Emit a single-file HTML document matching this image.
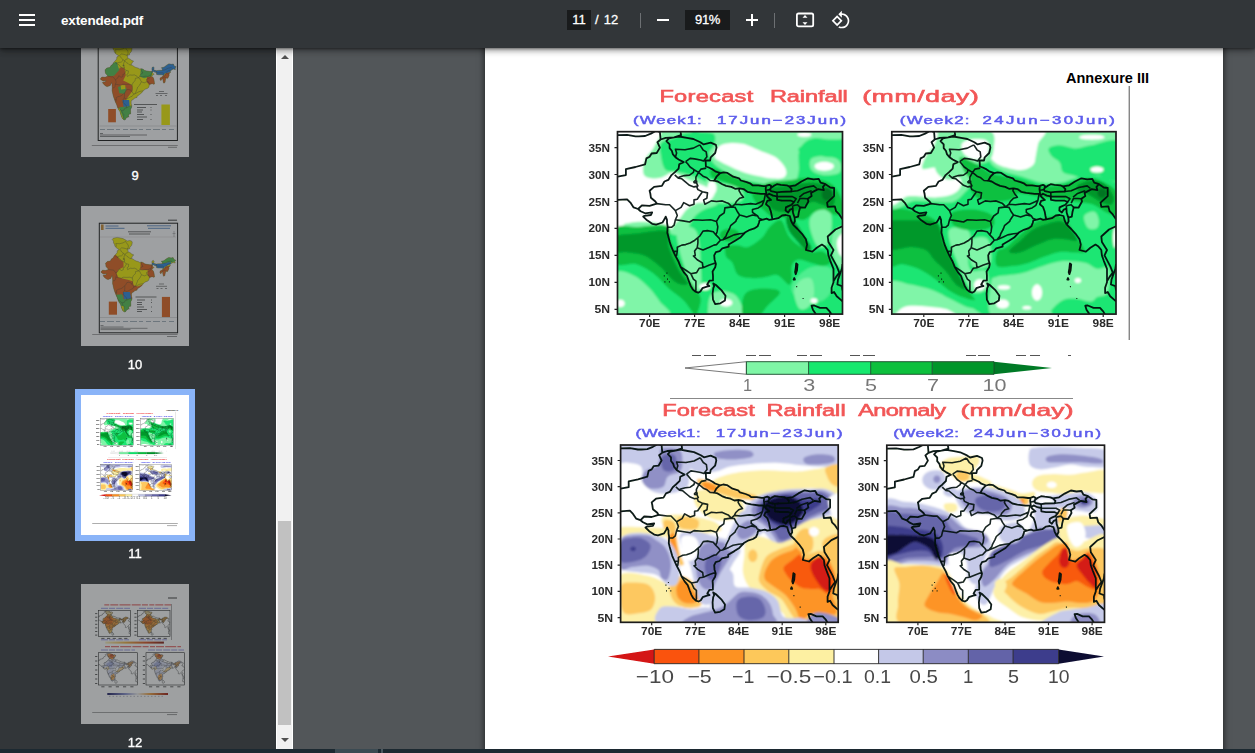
<!DOCTYPE html>
<html><head><meta charset="utf-8">
<style>
*{margin:0;padding:0;box-sizing:border-box}
html,body{width:1255px;height:753px;overflow:hidden;background:#525659;font-family:"Liberation Sans",sans-serif;}
#main{position:absolute;left:293px;top:48px;width:962px;height:701px;background:#525659;overflow:hidden}
#page{position:absolute;left:192px;top:-20px;width:738px;height:740px;background:#fff;box-shadow:0 0 6px 1px rgba(0,0,0,.55)}
#pg{position:absolute;left:0;top:0;width:1255px;height:753px}
#side{position:absolute;left:0;top:48px;width:276px;height:701px;background:#323639;overflow:hidden}
#sb{position:absolute;left:276px;top:48px;width:17px;height:701px;background:#f1f1f1;border-left:1px solid #fff;border-right:1px solid #fff}
#sbthumb{position:absolute;left:278px;top:521px;width:13px;height:204px;background:#c1c1c1}
.arr{position:absolute;left:281px;width:0;height:0;border-left:4px solid transparent;border-right:4px solid transparent}
#tb{position:absolute;left:0;top:0;width:1255px;height:48px;background:#323639;box-shadow:0 -2px 8px rgba(0,0,0,.09),0 4px 8px rgba(0,0,0,.06),0 1px 2px rgba(0,0,0,.3),0 2px 6px rgba(0,0,0,.15),0 1px 7px rgba(0,0,0,.35);color:#fff}
#bot{position:absolute;left:0;top:749px;width:1255px;height:4px;background:#1c2931}
.th{position:absolute;left:81px;width:108px;height:140px;background:#9d9fa0;overflow:hidden}
.lbl{position:absolute;left:75px;width:120px;text-align:center;color:#fff;font-size:13px;line-height:14px;-webkit-text-stroke:.35px #fff}
.inp{position:absolute;top:10px;height:20px;background:#191b1c;color:#fff;font-size:13px;line-height:20px;text-align:center;-webkit-text-stroke:.3px #fff}
.sep{position:absolute;top:13px;width:1px;height:15px;background:#6d7073}
.ax{font-family:"Liberation Sans",sans-serif;font-size:10px;fill:#2a2a2a;font-weight:bold}
.tt{font-family:"Liberation Sans",sans-serif;fill:#f25656;stroke:#f25656;stroke-width:.6px;font-size:16.3px}
.st{font-family:"Liberation Sans",sans-serif;fill:#5c5cec;stroke:#5c5cec;stroke-width:.5px;font-size:11.6px}
.cb{font-family:"Liberation Sans",sans-serif;}
</style></head><body>
<div id="main"><div id="page"></div>
</div>
<svg id="pg" viewBox="0 0 1255 753">
<defs>
<filter id="bl" x="-5%" y="-5%" width="110%" height="110%"><feGaussianBlur stdDeviation="1.1"/></filter>
<filter id="bl2" x="-5%" y="-5%" width="110%" height="110%"><feGaussianBlur stdDeviation="0.5"/></filter>
<filter id="bl3" x="-5%" y="-20%" width="110%" height="140%"><feGaussianBlur stdDeviation="0.6"/></filter>
</defs>
<g id="content">
<!-- annexure -->
<text x="1066" y="83" font-family="Liberation Sans" font-weight="bold" font-size="14.5" fill="#000">Annexure III</text>
<rect x="1128.7" y="86" width="1" height="254" fill="#555"/>
<g filter="url(#bl3)">
<text class="tt" transform="translate(659.4 101.8) scale(1.45 1)" textLength="64.7" lengthAdjust="spacing">Forecast</text>
<text class="tt" transform="translate(769.9 101.8) scale(1.45 1)" textLength="53.7" lengthAdjust="spacing">Rainfall</text>
<text class="tt" transform="translate(862.2 101.8) scale(1.62 1)" textLength="72.0" lengthAdjust="spacing">(mm/day)</text>
<text class="tt" transform="translate(662.2 415.6) scale(1.45 1)" textLength="63.8" lengthAdjust="spacing">Forecast</text>
<text class="tt" transform="translate(766.4 415.6) scale(1.45 1)" textLength="54.7" lengthAdjust="spacing">Rainfall</text>
<text class="tt" transform="translate(858.2 415.6) scale(1.45 1)" textLength="60.6" lengthAdjust="spacing">Anomaly</text>
<text class="tt" transform="translate(960.5 415.6) scale(1.62 1)" textLength="69.8" lengthAdjust="spacing">(mm/day)</text>
<text class="st" transform="translate(633.0 123.5) scale(1.45 1)" textLength="47.4" lengthAdjust="spacing">(Week1:</text>
<text class="st" transform="translate(717.0 123.5) scale(1.45 1)" textLength="89.0" lengthAdjust="spacing">17Jun−23Jun)</text>
<text class="st" transform="translate(899.8 123.5) scale(1.45 1)" textLength="48.1" lengthAdjust="spacing">(Week2:</text>
<text class="st" transform="translate(982.6 123.5) scale(1.45 1)" textLength="91.3" lengthAdjust="spacing">24Jun−30Jun)</text>
<text class="st" transform="translate(635.6 436.6) scale(1.45 1)" textLength="44.8" lengthAdjust="spacing">(Week1:</text>
<text class="st" transform="translate(715.7 436.6) scale(1.45 1)" textLength="87.5" lengthAdjust="spacing">17Jun−23Jun)</text>
<text class="st" transform="translate(893.3 436.6) scale(1.45 1)" textLength="45.3" lengthAdjust="spacing">(Week2:</text>
<text class="st" transform="translate(973.4 436.6) scale(1.45 1)" textLength="88.0" lengthAdjust="spacing">24Jun−30Jun)</text>
</g>
<clipPath id="cm1"><rect x="617.5" y="131.7" width="225.0" height="182.4"/></clipPath>
<g clip-path="url(#cm1)">
<g filter="url(#bl)">
<rect x="614.5" y="128.7" width="231.0" height="188.4" fill="#1ee673"/>
<path d="M615.1 129.3C627.0 112.1 675.0 126.9 686.5 129.3C698.0 131.6 686.9 139.3 684.0 143.3C681.0 147.3 671.8 149.3 668.7 153.5C665.5 157.8 663.6 165.8 664.8 168.8C666.1 171.8 671.4 170.1 676.3 171.4C681.2 172.6 688.2 174.1 694.2 176.5C700.1 178.8 707.3 182.4 712.0 185.4C716.7 188.4 721.4 191.1 722.2 194.3C723.1 197.5 720.1 202.0 717.1 204.5C714.1 207.1 708.2 207.5 704.4 209.6C700.5 211.7 697.1 213.9 694.2 217.3C691.2 220.7 689.5 227.0 686.5 230.0C683.5 233.0 680.6 235.1 676.3 235.1C672.1 235.1 667.0 231.1 661.0 230.0C655.1 229.0 648.3 228.3 640.6 228.7C633.0 229.2 619.4 249.1 615.1 232.6C610.9 216.0 603.2 146.5 615.1 129.3Z" fill="#80f5a8"/>
<path d="M706.9 129.3C729.7 126.1 821.7 127.8 844.6 129.3C867.6 130.8 847.2 136.5 844.6 138.2C842.1 139.9 834.4 139.5 829.3 139.5C824.2 139.5 818.3 137.6 814.0 138.2C809.8 138.8 806.4 140.8 803.8 143.3C801.3 145.9 799.6 148.8 798.7 153.5C797.9 158.2 799.6 166.5 798.7 171.4C797.9 176.2 797.0 180.5 793.6 182.8C790.2 185.2 784.3 185.4 778.3 185.4C772.4 185.4 764.7 184.1 757.9 182.8C751.1 181.6 743.5 179.9 737.5 177.7C731.6 175.6 726.5 172.8 722.2 170.1C718.0 167.3 714.4 164.8 712.0 161.2C709.7 157.5 709.0 153.7 708.2 148.4C707.3 143.1 684.2 132.5 706.9 129.3Z" fill="#80f5a8"/>
<path d="M706.9 179.0C708.8 177.5 714.1 181.3 719.7 182.8C725.2 184.3 736.2 185.2 740.1 187.9C743.9 190.7 744.3 196.9 742.6 199.4C740.9 202.0 734.5 202.8 729.9 203.2C725.2 203.7 718.2 203.9 714.6 202.0C711.0 200.1 709.5 195.6 708.2 191.8C706.9 187.9 705.0 180.5 706.9 179.0Z" fill="#80f5a8"/>
<path d="M676.8 228.7C678.1 225.1 683.4 226.0 686.5 226.2C689.6 226.4 693.3 227.3 695.4 230.0C697.6 232.8 698.4 236.8 699.3 242.8C700.2 248.7 700.5 258.2 700.8 265.7C701.1 273.2 701.9 283.4 700.8 287.7C699.7 291.9 696.1 292.3 694.2 291.2C692.2 290.1 690.8 285.3 689.1 281.0C687.4 276.8 685.7 271.3 684.0 265.7C682.3 260.2 680.1 254.0 678.9 247.9C677.7 241.7 675.5 232.4 676.8 228.7Z" fill="#80f5a8"/>
<path d="M673.8 216.0C675.4 214.0 683.5 213.6 686.5 214.2C689.5 214.8 691.6 217.8 691.6 219.8C691.6 221.8 689.0 225.1 686.5 226.2C684.0 227.3 678.9 227.9 676.8 226.2C674.7 224.5 672.1 218.0 673.8 216.0Z" fill="#80f5a8"/>
<path d="M811.5 216.0C813.5 213.3 818.5 208.0 821.7 207.6C824.9 207.1 829.0 209.7 830.6 213.4C832.2 217.2 832.0 224.7 831.4 230.0C830.7 235.3 829.0 242.6 826.8 245.3C824.5 248.1 820.3 248.3 817.9 246.6C815.4 244.9 813.4 238.9 812.0 235.1C810.6 231.3 809.5 226.8 809.4 223.6C809.4 220.5 809.4 218.7 811.5 216.0Z" fill="#80f5a8"/>
<path d="M833.2 232.6C835.3 229.4 842.7 223.2 844.6 228.7C846.6 234.3 846.1 260.0 844.6 265.7C843.2 271.5 837.8 266.2 835.7 263.2C833.6 260.2 832.3 253.0 831.9 247.9C831.5 242.8 831.0 235.8 833.2 232.6Z" fill="#80f5a8"/>
<path d="M615.1 274.4C618.2 267.5 627.8 273.2 633.5 275.4C639.1 277.6 644.6 283.3 649.0 287.7C653.4 292.0 656.8 297.1 660.0 301.7C663.1 306.3 675.4 313.0 667.9 315.5C660.4 318.0 623.9 323.6 615.1 316.7C606.3 309.9 612.0 281.3 615.1 274.4Z" fill="#80f5a8"/>
<path d="M793.4 281.5C796.3 277.1 804.4 269.4 810.7 267.3C817.0 265.1 827.5 265.4 831.1 268.8C834.8 272.2 834.0 282.4 832.7 287.7C831.3 292.9 827.4 297.8 823.2 300.2C819.1 302.5 812.6 303.0 807.7 301.9C802.7 300.9 795.8 297.4 793.4 294.0C791.0 290.6 790.5 286.0 793.4 281.5Z" fill="#50ee90"/>
<path d="M794.1 291.2C794.5 286.4 798.4 281.8 801.3 279.8C804.2 277.7 809.4 276.7 811.5 279.0C813.6 281.3 814.5 289.2 814.0 293.8C813.6 298.4 811.4 304.1 808.9 306.5C806.5 309.0 801.7 311.1 799.2 308.6C796.8 306.0 793.8 296.0 794.1 291.2Z" fill="#80f5a8"/>
<path d="M712.0 293.8C714.8 291.2 720.5 290.6 724.8 291.2C729.0 291.9 734.5 293.1 737.5 297.6C740.5 302.1 746.9 314.6 742.6 318.0C738.4 321.4 717.8 319.9 712.0 318.0C706.3 316.1 708.2 310.6 708.2 306.5C708.2 302.5 709.3 296.3 712.0 293.8Z" fill="#80f5a8"/>
<path d="M811.5 158.6C814.0 156.3 822.1 155.6 826.8 156.1C831.5 156.5 837.4 158.4 839.5 161.2C841.7 163.9 842.1 170.3 839.5 172.6C837.0 175.0 828.9 175.6 824.2 175.2C819.6 174.8 813.6 172.8 811.5 170.1C809.4 167.3 808.9 160.9 811.5 158.6Z" fill="#80f5a8"/>
<path d="M615.1 129.3C622.3 113.1 651.9 126.5 658.5 129.3C665.0 132.0 656.8 141.0 654.6 145.9C652.5 150.7 647.6 154.1 645.7 158.6C643.8 163.1 642.7 169.4 643.2 172.6C643.6 175.8 645.3 176.9 648.3 177.7C651.2 178.6 657.2 178.6 661.0 177.7C664.8 176.9 668.4 173.3 671.2 172.6C674.0 172.0 675.0 172.8 677.6 173.9C680.1 175.0 683.3 177.5 686.5 179.0C689.7 180.5 693.1 181.3 696.7 182.8C700.3 184.3 705.2 186.2 708.2 187.9C711.2 189.6 714.6 190.7 714.6 193.0C714.6 195.4 711.2 200.3 708.2 202.0C705.2 203.7 700.3 202.0 696.7 203.2C693.1 204.5 689.5 206.9 686.5 209.6C683.5 212.4 681.4 217.1 678.9 219.8C676.3 222.6 674.2 225.6 671.2 226.2C668.2 226.8 664.8 224.4 661.0 223.6C657.2 222.9 652.5 222.2 648.3 221.9C644.0 221.6 639.3 221.6 635.5 221.9C631.7 222.2 628.7 222.9 625.3 223.6C621.9 224.4 616.8 241.9 615.1 226.2C613.4 210.5 607.9 145.4 615.1 129.3Z" fill="#ffffff"/>
<path d="M643.2 166.3C643.8 163.9 645.7 160.9 648.3 159.9C650.8 158.8 656.1 158.8 658.5 159.9C660.8 160.9 662.1 163.9 662.3 166.3C662.5 168.6 661.6 172.1 659.7 173.9C657.8 175.7 653.4 177.0 650.8 177.0C648.3 177.0 645.7 175.7 644.4 173.9C643.2 172.1 642.5 168.6 643.2 166.3Z" fill="#80f5a8"/>
<path d="M714.6 157.3C713.9 155.4 714.1 151.9 715.8 149.7C717.5 147.4 720.3 144.8 724.8 143.8C729.2 142.8 736.5 142.5 742.6 143.8C748.8 145.1 756.4 149.3 761.8 151.5C767.1 153.6 770.9 154.3 774.5 156.6C778.1 158.8 781.4 162.3 783.4 165.0C785.4 167.7 786.5 170.5 786.5 172.6C786.5 174.8 785.6 176.8 783.4 177.7C781.2 178.7 777.5 178.8 773.2 178.5C769.0 178.2 763.0 177.1 757.9 175.9C752.8 174.8 747.5 173.6 742.6 171.9C737.7 170.2 732.4 167.5 728.6 165.7C724.8 164.0 722.0 162.6 719.7 161.2C717.3 159.8 715.2 159.2 714.6 157.3Z" fill="#ffffff"/>
<path d="M833.9 166.3C833.9 167.2 833.2 168.2 832.1 169.0C831.0 169.7 829.0 170.3 827.2 170.6C825.4 170.9 823.1 170.9 821.2 170.6C819.4 170.3 817.5 169.7 816.4 169.0C815.3 168.2 814.5 167.2 814.5 166.3C814.5 165.4 815.3 164.3 816.4 163.6C817.5 162.8 819.4 162.2 821.2 161.9C823.1 161.6 825.4 161.6 827.2 161.9C829.0 162.2 831.0 162.8 832.1 163.6C833.2 164.3 833.9 165.4 833.9 166.3Z" fill="#ffffff"/>
<path d="M811.5 134.6C811.5 135.1 810.9 135.6 810.1 136.0C809.3 136.3 807.9 136.7 806.6 136.8C805.2 137.0 803.5 137.0 802.1 136.8C800.8 136.7 799.4 136.3 798.6 136.0C797.7 135.6 797.2 135.1 797.2 134.6C797.2 134.2 797.7 133.6 798.6 133.3C799.4 132.9 800.8 132.6 802.1 132.4C803.5 132.3 805.2 132.3 806.6 132.4C807.9 132.6 809.3 132.9 810.1 133.3C810.9 133.6 811.5 134.2 811.5 134.6Z" fill="#ffffff"/>
<path d="M838.3 237.7C839.5 235.8 843.6 230.9 844.6 233.8C845.7 236.8 845.5 252.1 844.6 255.5C843.8 258.9 840.8 255.9 839.5 254.2C838.3 252.5 837.2 248.1 837.0 245.3C836.8 242.6 837.0 239.6 838.3 237.7Z" fill="#ffffff"/>
<path d="M624.8 303.5C624.8 304.2 624.4 305.1 623.9 305.7C623.4 306.3 622.5 306.9 621.6 307.1C620.8 307.3 619.6 307.3 618.8 307.1C617.9 306.9 617.0 306.3 616.5 305.7C616.0 305.1 615.6 304.2 615.6 303.5C615.6 302.7 616.0 301.8 616.5 301.2C617.0 300.6 617.9 300.1 618.8 299.8C619.6 299.6 620.8 299.6 621.6 299.8C622.5 300.1 623.4 300.6 623.9 301.2C624.4 301.8 624.8 302.7 624.8 303.5Z" fill="#ffffff"/>
<path d="M732.4 302.7C732.4 303.5 731.9 304.4 731.2 305.0C730.5 305.6 729.2 306.1 728.0 306.3C726.8 306.6 725.3 306.6 724.1 306.3C722.9 306.1 721.6 305.6 720.9 305.0C720.2 304.4 719.7 303.5 719.7 302.7C719.7 302.0 720.2 301.1 720.9 300.5C721.6 299.9 722.9 299.3 724.1 299.1C725.3 298.8 726.8 298.8 728.0 299.1C729.2 299.3 730.5 299.9 731.2 300.5C731.9 301.1 732.4 302.0 732.4 302.7Z" fill="#ffffff"/>
<path d="M817.6 300.9C817.6 301.5 817.3 302.1 816.9 302.6C816.5 303.0 815.8 303.4 815.1 303.6C814.5 303.8 813.6 303.8 812.9 303.6C812.3 303.4 811.6 303.0 811.1 302.6C810.7 302.1 810.5 301.5 810.5 300.9C810.5 300.4 810.7 299.7 811.1 299.3C811.6 298.8 812.3 298.4 812.9 298.3C813.6 298.1 814.5 298.1 815.1 298.3C815.8 298.4 816.5 298.8 816.9 299.3C817.3 299.7 817.6 300.4 817.6 300.9Z" fill="#ffffff"/>
<path d="M673.5 221.1C673.5 222.7 673.3 224.6 673.1 225.9C672.8 227.2 672.3 228.4 671.9 228.9C671.5 229.3 670.9 229.3 670.5 228.9C670.1 228.4 669.6 227.2 669.4 225.9C669.1 224.6 668.9 222.7 668.9 221.1C668.9 219.5 669.1 217.6 669.4 216.3C669.6 215.0 670.1 213.8 670.5 213.3C670.9 212.8 671.5 212.8 671.9 213.3C672.3 213.8 672.8 215.0 673.1 216.3C673.3 217.6 673.5 219.5 673.5 221.1Z" fill="#ffffff"/>
<path d="M710.5 286.6C710.5 287.3 710.1 288.2 709.4 288.7C708.8 289.3 707.7 289.8 706.6 290.0C705.6 290.3 704.2 290.3 703.1 290.0C702.1 289.8 701.0 289.3 700.3 288.7C699.7 288.2 699.3 287.3 699.3 286.6C699.3 285.9 699.7 285.1 700.3 284.5C701.0 284.0 702.1 283.5 703.1 283.2C704.2 283.0 705.6 283.0 706.6 283.2C707.7 283.5 708.8 284.0 709.4 284.5C710.1 285.1 710.5 285.9 710.5 286.6Z" fill="#ffffff"/>
<path d="M716.6 187.9C716.6 189.3 716.3 191.0 715.7 192.1C715.2 193.3 714.3 194.3 713.4 194.7C712.6 195.2 711.5 195.2 710.6 194.7C709.7 194.3 708.8 193.3 708.3 192.1C707.8 191.0 707.4 189.3 707.4 187.9C707.4 186.5 707.8 184.9 708.3 183.7C708.8 182.6 709.7 181.6 710.6 181.1C711.5 180.7 712.6 180.7 713.4 181.1C714.3 181.6 715.2 182.6 715.7 183.7C716.3 184.9 716.6 186.5 716.6 187.9Z" fill="#ffffff"/>
<path d="M661.0 143.3C663.1 140.3 669.5 139.9 673.8 138.2C678.0 136.5 680.1 134.0 686.5 133.1C692.9 132.3 707.3 131.4 712.0 133.1C716.7 134.8 715.4 139.9 714.6 143.3C713.7 146.7 710.3 151.4 706.9 153.5C703.5 155.6 698.0 153.9 694.2 156.1C690.3 158.2 687.4 163.7 684.0 166.3C680.6 168.8 677.0 170.9 673.8 171.4C670.6 171.8 667.0 171.4 664.8 168.8C662.7 166.3 661.6 160.3 661.0 156.1C660.4 151.8 658.9 146.3 661.0 143.3Z" fill="#1ee673"/>
<path d="M798.7 148.4C800.4 146.3 806.4 144.6 814.0 143.3C821.7 142.0 839.5 138.8 844.6 140.8C849.7 142.7 847.2 152.0 844.6 154.8C842.1 157.5 834.4 157.3 829.3 157.3C824.2 157.3 818.3 155.0 814.0 154.8C809.8 154.6 806.4 157.1 803.8 156.1C801.3 155.0 797.0 150.5 798.7 148.4Z" fill="#1ee673"/>
<path d="M615.1 229.0C618.7 223.0 628.0 227.5 636.5 227.0C645.1 226.4 660.8 223.9 666.4 225.9C672.0 228.0 668.1 233.6 670.2 239.2C672.3 244.8 675.8 253.1 678.9 259.6C681.9 266.1 685.1 272.6 688.3 278.2C691.5 283.8 696.2 289.6 698.2 293.3C700.3 296.9 700.9 296.9 700.8 300.2C700.7 303.4 698.5 310.3 697.5 312.7C696.4 315.0 696.8 316.5 694.4 314.4C692.1 312.4 687.9 304.6 683.5 300.2C679.0 295.7 672.9 292.1 667.9 287.7C662.9 283.2 658.8 277.5 653.6 273.6C648.4 269.7 642.9 266.0 636.5 264.2C630.1 262.4 618.7 268.5 615.1 262.7C611.5 256.8 611.5 235.0 615.1 229.0Z" fill="#08c040"/>
<path d="M726.0 247.1C727.9 245.3 733.4 245.3 737.0 245.3C740.7 245.3 743.8 248.4 748.0 247.1C752.1 245.8 758.4 241.1 762.0 237.7C765.7 234.3 766.8 229.6 769.9 226.7C773.1 223.8 777.7 218.8 780.9 220.3C784.0 221.9 785.9 232.0 788.8 236.1C791.7 240.3 794.6 242.7 798.2 245.3C801.9 247.9 806.6 250.6 810.7 251.7C814.9 252.8 819.8 250.1 823.2 251.7C826.6 253.3 831.1 258.8 831.1 261.1C831.1 263.5 826.6 265.5 823.2 265.7C819.8 266.0 814.9 263.7 810.7 262.7C806.6 261.6 801.4 259.1 798.2 259.6C795.1 260.1 792.9 262.6 791.8 265.7C790.8 268.8 792.4 275.1 791.8 278.2C791.3 281.4 791.1 285.1 788.8 284.6C786.5 284.1 781.5 276.5 777.8 275.2C774.2 273.8 770.8 276.2 766.9 276.7C762.9 277.2 759.1 278.5 754.4 278.2C749.6 278.0 742.2 277.8 738.5 275.2C734.9 272.6 734.5 265.8 732.4 262.7C730.3 259.5 727.1 258.9 726.0 256.3C725.0 253.7 724.2 248.9 726.0 247.1Z" fill="#08c040"/>
<path d="M743.4 297.1C745.2 292.1 749.1 290.5 754.4 289.2C759.6 287.9 770.6 288.4 774.8 289.2C778.9 290.0 780.7 291.1 779.4 294.0C778.0 296.9 770.6 302.3 766.9 306.5C763.1 310.7 760.6 317.2 756.7 319.3C752.7 321.4 745.6 323.0 743.4 319.3C741.2 315.6 741.6 302.1 743.4 297.1Z" fill="#08c040"/>
<path d="M752.8 191.8C755.0 188.6 762.2 184.7 768.1 182.8C774.1 180.9 781.7 181.1 788.5 180.3C795.3 179.4 802.1 177.3 808.9 177.7C815.7 178.2 824.2 180.1 829.3 182.8C834.4 185.6 837.0 189.4 839.5 194.3C842.1 199.2 845.5 208.8 844.6 212.2C843.8 215.6 837.8 215.1 834.4 214.7C831.0 214.3 827.6 210.0 824.2 209.6C820.8 209.2 817.4 210.5 814.0 212.2C810.6 213.9 808.1 219.0 803.8 219.8C799.6 220.7 793.6 217.7 788.5 217.3C783.4 216.8 777.5 218.5 773.2 217.3C769.0 216.0 766.0 212.2 763.0 209.6C760.1 207.1 757.1 204.9 755.4 202.0C753.7 199.0 750.7 195.0 752.8 191.8Z" fill="#08c040"/>
<path d="M712.0 168.8C714.6 168.2 721.4 171.2 727.3 173.4C733.3 175.6 740.9 179.8 747.7 182.1C754.5 184.4 764.7 184.8 768.1 187.2C771.5 189.6 771.5 195.6 768.1 196.4C764.7 197.1 754.5 194.0 747.7 191.8C740.9 189.5 733.3 185.3 727.3 182.8C721.4 180.4 714.6 179.3 712.0 177.0C709.5 174.6 709.5 169.4 712.0 168.8Z" fill="#08c040"/>
<path d="M740.1 235.1C740.1 236.4 739.3 237.9 738.1 238.9C737.0 239.9 734.9 240.8 733.0 241.2C731.1 241.6 728.6 241.6 726.7 241.2C724.8 240.8 722.8 239.9 721.6 238.9C720.4 237.9 719.7 236.4 719.7 235.1C719.7 233.9 720.4 232.4 721.6 231.4C722.8 230.4 724.8 229.4 726.7 229.1C728.6 228.7 731.1 228.7 733.0 229.1C734.9 229.4 737.0 230.4 738.1 231.4C739.3 232.4 740.1 233.9 740.1 235.1Z" fill="#08c040"/>
<path d="M615.1 236.9C618.7 234.0 628.0 234.5 636.5 233.6C645.1 232.7 661.0 229.0 666.4 231.3C671.7 233.5 666.6 240.6 668.7 247.1C670.7 253.7 675.7 264.5 678.9 270.6C682.0 276.7 688.0 281.9 687.5 283.8C687.0 285.8 680.4 285.2 675.8 282.3C671.2 279.4 665.2 271.0 660.0 266.5C654.8 262.0 649.7 257.9 644.4 255.5C639.2 253.2 633.5 253.2 628.6 252.5C623.7 251.7 617.4 253.5 615.1 250.9C612.8 248.3 611.5 239.8 615.1 236.9Z" fill="#04982c"/>
<path d="M768.1 189.2C771.7 186.9 781.3 186.4 788.5 185.4C795.8 184.3 805.1 182.6 811.5 182.8C817.9 183.0 823.0 184.3 826.8 186.7C830.6 189.0 833.6 193.5 834.4 196.9C835.3 200.3 834.0 205.8 831.9 207.1C829.8 208.3 825.1 205.4 821.7 204.5C818.3 203.7 815.3 201.1 811.5 202.0C807.7 202.8 803.0 207.9 798.7 209.6C794.5 211.3 790.2 212.2 786.0 212.2C781.7 212.2 776.4 211.7 773.2 209.6C770.0 207.5 767.7 202.8 766.9 199.4C766.0 196.0 764.5 191.5 768.1 189.2Z" fill="#04982c"/>
<path d="M786.0 217.3C786.8 215.6 790.7 216.8 793.6 219.8C796.6 222.8 800.9 230.4 803.8 235.1C806.8 239.8 811.1 245.3 811.5 247.9C811.9 250.4 808.9 251.7 806.4 250.4C803.8 249.1 799.2 243.6 796.2 240.2C793.2 236.8 790.2 233.8 788.5 230.0C786.8 226.2 785.1 219.0 786.0 217.3Z" fill="#04982c"/>
<path d="M832.9 194.3C832.9 195.6 832.5 197.0 831.8 198.1C831.2 199.1 830.1 200.0 829.0 200.4C828.0 200.8 826.6 200.8 825.6 200.4C824.5 200.0 823.4 199.1 822.8 198.1C822.1 197.0 821.7 195.6 821.7 194.3C821.7 193.1 822.1 191.6 822.8 190.6C823.4 189.6 824.5 188.6 825.6 188.2C826.6 187.9 828.0 187.9 829.0 188.2C830.1 188.6 831.2 189.6 831.8 190.6C832.5 191.6 832.9 193.1 832.9 194.3Z" fill="#047424"/>
</g>
<g filter="url(#bl2)" fill="none" stroke-linejoin="round">
<path d="M638.1 209.0L640.6 211.2L645.1 213.3L652.2 212.3L650.9 215.0L644.5 215.8L643.2 216.6L647.1 220.3L652.2 223.8L656.1 224.7L662.5 222.5L664.4 219.3L665.7 216.6L667.0 219.8L667.0 222.5L667.6 226.3L667.3 232.7L668.3 236.5L669.6 241.4L670.9 245.7L673.4 251.6L675.4 255.9L678.6 261.8L680.5 266.7L683.7 272.1L686.9 275.8L688.9 281.2L690.8 286.1L692.7 289.3L695.3 291.7L698.2 292.7L700.4 291.5L702.4 288.2L706.9 286.6L709.4 286.1L707.2 284.5L709.4 280.7L713.0 280.4L713.0 275.8L712.6 271.5L715.2 267.2L715.9 264.0L714.6 259.7L714.2 255.4L715.9 252.1L719.7 251.1L722.3 248.4L728.7 246.7L728.7 244.6L735.1 240.8L740.3 237.6L745.4 232.2L749.9 229.8L754.4 228.4L757.6 226.3L758.9 223.0L759.6 220.3L764.1 219.3L766.6 218.7L769.2 219.8L772.4 219.3L771.8 216.0L770.8 211.2L769.2 206.9L766.0 204.2L767.3 200.9L771.1 199.9L767.9 197.2L766.6 195.6L769.2 193.7L773.1 195.6L776.9 196.4L777.2 199.9L782.1 200.7L791.1 200.7L794.0 202.0L791.7 204.7L788.5 206.1L785.9 207.4L785.6 210.6L788.2 212.5L790.1 209.6L792.7 208.5L793.0 212.8L794.6 217.6L798.1 216.6L798.8 212.3L800.1 207.4L804.9 207.7L808.4 201.5L807.8 198.8L811.6 196.1L811.0 192.9L818.1 189.1L823.9 190.2L822.9 186.9L825.5 184.2L820.6 182.6L818.7 178.8L813.6 179.4L807.8 178.3L801.4 181.5L795.6 185.3L789.1 186.4L791.7 189.1L791.1 191.5L781.4 191.8L776.9 192.3L771.1 191.2L770.2 189.6L770.8 188.0L771.1 185.9L769.2 184.8L766.0 185.9L765.7 189.1L766.3 193.9L760.9 193.9L752.5 192.9L747.4 191.8L743.5 189.1L739.6 188.3L735.1 188.8L731.3 186.9L726.1 185.9L722.3 184.2L717.8 181.5L714.2 180.7L716.5 176.7L719.7 173.5L720.4 173.2L715.2 171.3L712.6 169.4L708.8 167.5L705.9 166.5L705.6 160.5L710.1 160.5L710.7 157.3L715.2 153.0L716.5 147.6L715.9 144.9L710.7 142.7L703.6 144.4L700.4 142.2L693.4 139.0L686.9 137.9L679.2 136.5L674.1 137.4L668.9 138.4L666.4 141.1L669.6 144.4L669.6 148.1L671.8 150.8L672.8 154.1L675.4 157.3L678.6 159.5L683.7 162.1L679.2 164.3L678.6 168.6L674.7 172.4L671.5 175.1L668.3 179.9L664.4 181.5L661.9 185.9L654.1 186.9L649.6 190.7L650.3 193.4L650.9 197.7L655.4 201.5L656.7 203.6L649.6 205.8L641.9 205.3ZM617.5 199.9L627.1 199.3L630.4 202.6L633.6 207.4L638.1 209.0M617.5 176.7L625.9 175.1L625.9 169.1L635.5 167.0L645.1 164.3L646.4 158.4L649.6 156.8L651.6 153.5L656.7 153.0L659.9 147.6L657.4 142.2L660.6 139.5L665.7 137.9L674.1 137.4M660.6 139.5L659.9 132.0L658.0 131.4M617.5 135.2L627.1 134.9L635.5 136.3L638.7 136.3L645.1 136.0L650.9 133.6L654.8 131.4M674.1 137.4L681.1 135.2L680.5 131.4M720.4 173.2L723.6 172.4L727.4 172.9L733.2 176.7L739.0 178.3L740.9 180.5L746.7 182.1L750.6 183.7L752.5 185.3L758.3 185.3L763.4 186.1L766.0 185.9M770.8 188.0L773.7 185.9L776.9 184.2L780.8 184.8L786.6 185.3L789.1 186.4M772.4 219.3L778.2 218.2L782.1 215.5L785.9 215.0L789.8 216.0L791.1 220.9L793.0 224.7M794.6 217.6L794.9 221.4L793.0 224.7M793.0 224.7L797.5 229.0L802.0 233.8L805.9 239.2L807.1 244.6L805.9 250.0L812.3 251.6L816.8 247.8L821.9 244.6L824.5 246.2L827.7 250.0L828.4 255.4L830.3 260.8L833.5 268.8L833.5 276.9L833.5 282.3L831.6 287.7L831.6 293.1L834.1 292.0L836.7 296.3L840.6 299.6L842.5 301.2M833.5 281.2L836.1 276.9L839.3 272.6L836.7 266.1L830.9 255.4L833.5 250.0L828.4 241.9L827.7 236.5L835.4 229.5L842.5 226.3M825.5 184.2L830.3 187.5L834.1 188.0L834.1 196.1L827.1 202.6L827.7 206.9L834.8 206.3L836.1 211.2L839.3 214.4L842.5 219.3M842.5 264.0L841.9 268.8L838.0 279.6L837.4 284.5L841.9 286.1L842.5 290.4M713.3 283.4L715.9 285.0L721.6 290.4L725.5 295.8L724.9 300.6L720.4 303.3L715.2 304.1L713.0 299.6L712.6 293.6L713.3 288.2L714.2 286.1ZM811.6 305.7L814.2 305.5L820.0 307.9L826.4 307.9L829.6 311.4L831.6 314.6L816.1 314.6L812.9 309.8ZM796.2 263.4L797.5 264.5L797.0 270.5L795.7 274.2L795.1 272.1L795.7 268.3ZM794.3 278.0L794.9 279.6L793.6 279.6Z" stroke="#06100a" stroke-width="1.8" opacity=".95"/>
<path d="M656.7 203.6L665.7 204.7L669.6 204.7L675.4 210.6L677.3 215.5L675.4 219.8L674.1 225.2L671.5 227.3L667.6 227.3M675.4 210.6L681.1 207.4L683.7 202.6L689.5 205.8L694.0 204.2L694.0 199.9L697.2 199.3L702.4 191.8M702.4 191.8L697.9 189.6L696.6 186.4L694.0 186.9L689.5 185.3L686.9 183.2L681.8 178.8L678.6 178.3L674.7 174.8M678.6 177.2L684.4 175.6L689.5 175.1L693.4 172.4L694.0 169.7L690.1 167.0L687.6 163.8L685.6 161.6M685.6 161.6L690.1 158.4L694.6 158.9L700.4 160.0L703.6 161.1L705.6 160.5M698.5 172.4L701.1 169.1L706.2 168.1M694.0 169.7L698.5 172.4L695.9 177.2L695.9 181.0L696.6 183.2L697.9 185.9L696.6 186.4M698.5 172.4L703.0 176.2L706.9 177.8L710.1 180.5L714.2 180.7M702.4 191.8L707.5 192.9L706.9 198.2L703.6 199.9L704.9 204.2L711.4 200.9L716.5 201.5L722.3 200.9L726.1 202.6L728.7 203.6L731.9 206.9M731.9 206.9L735.1 204.2L736.4 201.5L739.6 198.2L743.5 197.2L740.9 193.9L739.0 190.7L739.6 188.3M735.1 204.2L741.6 204.7L750.6 203.6L755.7 204.2L760.9 202.0L764.1 200.4L765.4 193.9M764.1 200.4L762.1 205.3L758.3 207.9L752.5 209.6L752.5 212.3L757.6 216.0L758.9 218.2L762.1 219.5M757.6 216.0L752.5 215.0L746.7 217.1L741.6 215.5L739.6 215.0M739.6 215.0L737.1 211.2L735.1 207.4L731.9 206.9M731.9 206.9L724.9 207.9L724.2 212.8L719.7 216.0L717.1 220.3L716.5 221.4M675.4 219.8L683.1 220.9L689.5 222.0L693.4 219.8L702.4 220.3L710.7 219.8L716.5 221.4M716.5 221.4L717.8 226.8L717.1 231.7L715.9 234.9L713.3 231.7L707.5 230.6L703.0 231.1L699.8 236.0L697.9 237.6M697.9 237.6L694.0 240.8L690.1 243.0L685.6 244.6L681.8 245.1L677.3 247.3L677.3 251.1L673.4 251.6M677.3 251.1L676.6 255.4L675.7 255.9M697.9 237.6L697.9 243.0L697.2 247.8L694.6 251.1L695.3 255.4L693.4 255.9L697.2 259.7L702.4 262.9L703.0 267.8M703.0 267.8L699.1 268.3L696.6 272.6L690.8 273.7L686.3 270.5L681.1 267.2M690.8 273.7L693.4 279.1L695.9 281.2L695.9 285.5L695.9 289.9L695.3 291.5M703.0 267.8L709.4 265.1L713.9 263.4L715.9 263.4M697.2 247.8L703.0 250.0L709.4 247.3L713.9 245.1L716.5 244.6L720.4 240.3L719.1 238.1L715.9 234.9M739.6 215.0L736.4 219.8L735.8 221.4L730.6 225.7L729.4 229.0L726.8 233.8L726.1 236.0L722.9 239.7L720.4 240.3M722.9 239.7L729.4 237.0L733.9 234.9L739.6 233.8L744.8 233.3M791.1 191.5L797.5 190.7L805.2 187.5L813.6 185.9L816.8 188.5M777.2 196.6L784.6 196.6L792.4 196.6L796.2 198.8L794.0 202.0M799.4 197.2L803.9 193.4L811.6 190.7M797.5 203.1L800.1 198.2L807.8 198.8M792.7 205.8L797.5 204.7L800.1 207.4M792.7 205.8L792.7 208.5M776.9 192.3L777.2 196.4M766.3 190.2L770.2 189.6M675.4 157.3L676.6 153.0L675.4 149.2L685.0 149.8L693.4 148.1L699.8 144.9M703.6 161.1L706.9 156.8L706.2 151.9L703.0 149.8L699.8 144.9M694.0 181.0L696.6 181.0L696.6 182.9L694.0 182.6L694.0 181.0" stroke="#06100a" stroke-width="1.6" opacity=".9"/>
<path d="M796.2 263.4L797.5 264.5L797.0 270.5L795.7 274.2L795.1 272.1L795.7 268.3Z" fill="#0a140c" stroke="#0a140c" stroke-width=".3"/>
<path d="M666.4 273.1h1M663.8 275.8h1M667.0 279.1h1M668.9 281.8h1M664.4 281.8h1M802.6 298.5h1M796.2 286.6h1" stroke="#0a1a10" stroke-width="1.2"/>
</g></g>
<g filter="url(#bl2)">
<rect x="617.5" y="131.7" width="225.0" height="182.4" fill="none" stroke="#1c1c1c" stroke-width="1.7"/>
<text x="594.4" y="313.3" class="ax" textLength="15.6" lengthAdjust="spacingAndGlyphs">5N</text>
<text x="588.4" y="286.3" class="ax" textLength="21.6" lengthAdjust="spacingAndGlyphs">10N</text>
<text x="588.4" y="259.4" class="ax" textLength="21.6" lengthAdjust="spacingAndGlyphs">15N</text>
<text x="588.4" y="232.4" class="ax" textLength="21.6" lengthAdjust="spacingAndGlyphs">20N</text>
<text x="588.4" y="205.5" class="ax" textLength="21.6" lengthAdjust="spacingAndGlyphs">25N</text>
<text x="588.4" y="178.5" class="ax" textLength="21.6" lengthAdjust="spacingAndGlyphs">30N</text>
<text x="588.4" y="151.6" class="ax" textLength="21.6" lengthAdjust="spacingAndGlyphs">35N</text>
<text x="639.0" y="326.7" class="ax" textLength="21.2" lengthAdjust="spacingAndGlyphs">70E</text>
<text x="684.0" y="326.7" class="ax" textLength="21.2" lengthAdjust="spacingAndGlyphs">77E</text>
<text x="729.0" y="326.7" class="ax" textLength="21.2" lengthAdjust="spacingAndGlyphs">84E</text>
<text x="774.0" y="326.7" class="ax" textLength="21.2" lengthAdjust="spacingAndGlyphs">91E</text>
<text x="819.0" y="326.7" class="ax" textLength="21.2" lengthAdjust="spacingAndGlyphs">98E</text>
<path d="M617.5 309.3h-3M617.5 282.3h-3M617.5 255.4h-3M617.5 228.4h-3M617.5 201.5h-3M617.5 174.5h-3M617.5 147.6h-3M649.6 314.1v3M694.6 314.1v3M739.6 314.1v3M784.6 314.1v3M829.6 314.1v3" stroke="#222" stroke-width="1.2"/>
</g>
<clipPath id="cm2"><rect x="891.8" y="131.7" width="224.2" height="182.4"/></clipPath>
<g clip-path="url(#cm2)">
<g filter="url(#bl)">
<rect x="888.8" y="128.7" width="230.2" height="188.4" fill="#1ee673"/>
<path d="M889.1 129.3C902.3 116.7 955.4 126.1 968.2 129.3C980.9 132.5 966.9 143.1 965.6 148.4C964.3 153.7 960.1 157.3 960.5 161.2C960.9 165.0 966.5 167.5 968.2 171.4C969.9 175.2 971.6 180.3 970.7 184.1C969.9 187.9 966.0 191.3 963.1 194.3C960.1 197.3 957.5 200.7 952.9 202.0C948.2 203.2 941.4 202.2 935.0 202.0C928.6 201.8 922.3 200.3 914.6 200.7C907.0 201.1 893.4 216.4 889.1 204.5C884.9 192.6 875.9 141.8 889.1 129.3Z" fill="#80f5a8"/>
<path d="M986.0 129.3C1008.1 126.1 1096.5 121.0 1118.6 129.3C1140.7 137.6 1121.2 171.1 1118.6 179.0C1116.1 186.9 1108.4 177.1 1103.3 176.5C1098.2 175.8 1093.1 174.8 1088.0 175.2C1082.9 175.6 1077.4 177.7 1072.7 179.0C1068.1 180.3 1065.1 182.2 1060.0 182.8C1054.9 183.5 1048.5 183.9 1042.1 182.8C1035.8 181.8 1028.1 178.4 1021.7 176.5C1015.3 174.5 1009.0 173.5 1003.9 171.4C998.8 169.2 994.1 167.5 991.1 163.7C988.1 159.9 986.9 154.1 986.0 148.4C985.2 142.7 963.9 132.5 986.0 129.3Z" fill="#80f5a8"/>
<path d="M949.0 230.0C950.7 227.0 957.1 227.0 960.5 227.5C963.9 227.9 967.7 229.2 969.4 232.6C971.1 236.0 970.9 243.2 970.7 247.9C970.5 252.5 968.0 256.8 968.2 260.6C968.4 264.5 969.0 269.1 972.0 270.8C975.0 272.5 983.3 268.3 986.0 270.8C988.8 273.4 989.4 282.5 988.6 286.1C987.7 289.7 983.7 291.7 980.9 292.5C978.2 293.4 974.8 293.6 972.0 291.2C969.2 288.9 966.9 283.6 964.3 278.5C961.8 273.4 958.9 266.2 956.7 260.6C954.4 255.1 952.1 250.4 950.8 245.3C949.5 240.2 947.4 233.0 949.0 230.0Z" fill="#80f5a8"/>
<path d="M889.1 283.1C892.7 277.5 903.0 283.3 910.5 284.6C918.0 285.9 927.5 288.4 934.0 290.7C940.5 293.1 944.3 296.0 949.5 298.6C954.8 301.3 961.2 304.7 965.4 306.5C969.6 308.4 973.2 307.7 974.8 309.6C976.4 311.5 989.1 316.6 974.8 318.0C960.5 319.4 903.4 323.8 889.1 318.0C874.8 312.2 885.5 288.6 889.1 283.1Z" fill="#80f5a8"/>
<path d="M991.1 283.6C991.7 276.7 992.1 278.4 997.0 276.7C1001.9 275.0 1012.6 275.5 1020.5 273.6C1028.3 271.8 1036.9 267.8 1043.9 265.7C1051.0 263.6 1056.0 261.6 1062.8 261.1C1069.6 260.6 1079.0 261.4 1084.7 262.7C1090.5 263.9 1093.3 268.0 1097.2 268.8C1101.2 269.6 1106.4 265.2 1108.4 267.3C1110.5 269.3 1110.0 276.6 1109.7 281.0C1109.4 285.5 1108.7 291.4 1106.7 294.0C1104.6 296.7 1099.9 295.8 1097.2 297.1C1094.6 298.4 1094.5 301.4 1090.8 301.7C1087.2 301.9 1080.0 298.9 1075.3 298.6C1070.6 298.4 1066.7 298.3 1062.8 300.2C1058.9 302.0 1054.4 306.6 1051.8 309.6C1049.2 312.6 1056.9 316.6 1047.2 318.0C1037.5 319.4 1003.0 323.7 993.7 318.0C984.3 312.3 990.6 290.5 991.1 283.6Z" fill="#80f5a8"/>
<path d="M1084.2 216.0C1085.3 213.3 1092.0 211.0 1094.4 211.7C1096.8 212.3 1098.3 217.1 1098.8 219.8C1099.2 222.5 1098.8 226.6 1097.0 228.0C1095.2 229.3 1090.2 230.0 1088.0 228.0C1085.9 226.0 1083.1 218.7 1084.2 216.0Z" fill="#80f5a8"/>
<path d="M970.7 240.2C973.5 237.7 982.6 236.0 986.0 237.7C989.4 239.4 990.7 245.7 991.1 250.4C991.5 255.1 991.5 263.0 988.6 265.7C985.6 268.5 976.5 269.1 973.3 267.0C970.1 264.9 969.9 257.4 969.4 253.0C969.0 248.5 968.0 242.8 970.7 240.2Z" fill="#80f5a8"/>
<path d="M889.1 129.3C896.5 117.4 926.1 126.9 933.7 129.3C941.4 131.6 936.3 138.8 935.0 143.3C933.7 147.8 928.2 151.8 926.1 156.1C924.0 160.3 920.8 166.9 922.3 168.8C923.7 170.7 930.8 167.1 935.0 167.5C939.3 168.0 943.5 169.4 947.8 171.4C952.0 173.3 958.6 176.0 960.5 179.0C962.4 182.0 961.2 186.4 959.2 189.2C957.3 192.0 953.1 194.2 949.0 195.6C945.0 196.9 939.9 197.2 935.0 197.4C930.1 197.5 924.4 196.5 919.7 196.4C915.0 196.2 912.1 195.6 907.0 196.4C901.9 197.1 892.1 211.9 889.1 200.7C886.1 189.5 881.7 141.2 889.1 129.3Z" fill="#ffffff"/>
<path d="M936.3 159.9C938.6 157.5 946.7 156.3 950.3 157.3C953.9 158.4 956.9 162.9 958.0 166.3C959.0 169.7 958.8 175.6 956.7 177.7C954.6 179.9 948.6 180.1 945.2 179.0C941.8 177.9 937.8 174.5 936.3 171.4C934.8 168.2 933.9 162.2 936.3 159.9Z" fill="#80f5a8"/>
<path d="M988.6 153.5C987.9 149.9 989.8 144.8 991.1 140.8C992.4 136.7 987.5 131.2 996.2 129.3C1004.9 127.4 1036.4 126.9 1043.4 129.3C1050.4 131.6 1039.6 138.8 1038.3 143.3C1037.0 147.8 1036.6 152.4 1035.8 156.1C1034.9 159.7 1035.5 162.6 1033.2 165.0C1030.9 167.3 1026.2 169.7 1021.7 170.1C1017.3 170.5 1010.9 168.8 1006.4 167.5C1002.0 166.3 997.9 164.8 994.9 162.4C992.0 160.1 989.2 157.1 988.6 153.5Z" fill="#ffffff"/>
<path d="M951.6 138.2C952.9 135.0 953.9 132.9 960.5 131.8C967.1 130.8 985.6 129.1 991.1 131.8C996.6 134.6 994.1 143.5 993.7 148.4C993.2 153.3 992.0 158.6 988.6 161.2C985.2 163.7 977.9 164.1 973.3 163.7C968.6 163.3 963.9 160.7 960.5 158.6C957.1 156.5 954.4 154.4 952.9 151.0C951.4 147.6 950.3 141.4 951.6 138.2Z" fill="#80f5a8"/>
<path d="M961.8 143.8C963.0 141.5 966.7 140.1 970.7 139.5C974.8 138.9 983.0 138.8 986.0 140.2C989.0 141.7 989.0 145.4 988.8 148.4C988.6 151.4 987.3 156.3 984.7 158.1C982.2 159.9 976.8 160.1 973.3 159.4C969.7 158.6 965.5 156.1 963.6 153.5C961.7 150.9 960.6 146.2 961.8 143.8Z" fill="#ffffff"/>
<path d="M1104.1 169.6C1104.1 170.2 1103.6 171.0 1102.7 171.5C1101.9 172.0 1100.5 172.5 1099.2 172.7C1097.8 172.9 1096.1 172.9 1094.8 172.7C1093.4 172.5 1092.0 172.0 1091.2 171.5C1090.4 171.0 1089.8 170.2 1089.8 169.6C1089.8 168.9 1090.4 168.1 1091.2 167.6C1092.0 167.1 1093.4 166.6 1094.8 166.4C1096.1 166.2 1097.8 166.2 1099.2 166.4C1100.5 166.6 1101.9 167.1 1102.7 167.6C1103.6 168.1 1104.1 168.9 1104.1 169.6Z" fill="#ffffff"/>
<path d="M1042.1 292.5C1042.1 294.1 1041.7 296.0 1041.2 297.3C1040.6 298.6 1039.6 299.8 1038.6 300.3C1037.7 300.8 1036.4 300.8 1035.5 300.3C1034.5 299.8 1033.5 298.6 1032.9 297.3C1032.3 296.0 1031.9 294.1 1031.9 292.5C1031.9 290.9 1032.3 289.0 1032.9 287.7C1033.5 286.4 1034.5 285.2 1035.5 284.7C1036.4 284.2 1037.7 284.2 1038.6 284.7C1039.6 285.2 1040.6 286.4 1041.2 287.7C1041.7 289.0 1042.1 290.9 1042.1 292.5Z" fill="#ffffff"/>
<path d="M1010.2 287.4C1010.2 287.9 1009.8 288.4 1009.0 288.8C1008.3 289.1 1007.0 289.4 1005.8 289.6C1004.7 289.7 1003.1 289.7 1001.9 289.6C1000.7 289.4 999.4 289.1 998.7 288.8C998.0 288.4 997.5 287.9 997.5 287.4C997.5 287.0 998.0 286.4 998.7 286.1C999.4 285.7 1000.7 285.4 1001.9 285.2C1003.1 285.1 1004.7 285.1 1005.8 285.2C1007.0 285.4 1008.3 285.7 1009.0 286.1C1009.8 286.4 1010.2 287.0 1010.2 287.4Z" fill="#ffffff"/>
<path d="M1009.0 304.0C1009.0 304.9 1008.5 306.0 1007.8 306.7C1007.0 307.4 1005.8 308.1 1004.6 308.3C1003.4 308.6 1001.8 308.6 1000.6 308.3C999.4 308.1 998.2 307.4 997.4 306.7C996.7 306.0 996.2 304.9 996.2 304.0C996.2 303.1 996.7 302.0 997.4 301.3C998.2 300.6 999.4 299.9 1000.6 299.6C1001.8 299.3 1003.4 299.3 1004.6 299.6C1005.8 299.9 1007.0 300.6 1007.8 301.3C1008.5 302.0 1009.0 303.1 1009.0 304.0Z" fill="#ffffff"/>
<path d="M1031.4 307.8C1031.4 308.2 1031.1 308.6 1030.5 308.9C1030.0 309.1 1029.1 309.4 1028.2 309.5C1027.4 309.6 1026.3 309.6 1025.4 309.5C1024.6 309.4 1023.6 309.1 1023.1 308.9C1022.6 308.6 1022.2 308.2 1022.2 307.8C1022.2 307.5 1022.6 307.0 1023.1 306.8C1023.6 306.5 1024.6 306.2 1025.4 306.1C1026.3 306.0 1027.4 306.0 1028.2 306.1C1029.1 306.2 1030.0 306.5 1030.5 306.8C1031.1 307.0 1031.4 307.5 1031.4 307.8Z" fill="#ffffff"/>
<path d="M1081.2 280.5C1081.2 281.0 1080.9 281.6 1080.5 282.0C1080.1 282.4 1079.5 282.8 1078.9 282.9C1078.2 283.1 1077.4 283.1 1076.8 282.9C1076.2 282.8 1075.5 282.4 1075.2 282.0C1074.8 281.6 1074.5 281.0 1074.5 280.5C1074.5 280.0 1074.8 279.4 1075.2 279.0C1075.5 278.6 1076.2 278.2 1076.8 278.1C1077.4 277.9 1078.2 277.9 1078.9 278.1C1079.5 278.2 1080.1 278.6 1080.5 279.0C1080.9 279.4 1081.2 280.0 1081.2 280.5Z" fill="#ffffff"/>
<path d="M985.3 284.9C985.3 286.0 984.8 287.3 984.2 288.2C983.5 289.0 982.4 289.9 981.4 290.2C980.3 290.5 979.0 290.5 977.9 290.2C976.9 289.9 975.7 289.0 975.1 288.2C974.5 287.3 974.0 286.0 974.0 284.9C974.0 283.8 974.5 282.4 975.1 281.6C975.7 280.7 976.9 279.9 977.9 279.5C979.0 279.2 980.3 279.2 981.4 279.5C982.4 279.9 983.5 280.7 984.2 281.6C984.8 282.4 985.3 283.8 985.3 284.9Z" fill="#ffffff"/>
<path d="M1116.6 237.7C1116.6 239.7 1116.5 242.0 1116.3 243.7C1116.1 245.3 1115.7 246.8 1115.4 247.4C1115.0 248.0 1114.6 248.0 1114.3 247.4C1113.9 246.8 1113.6 245.3 1113.4 243.7C1113.2 242.0 1113.0 239.7 1113.0 237.7C1113.0 235.7 1113.2 233.3 1113.4 231.7C1113.6 230.1 1113.9 228.6 1114.3 228.0C1114.6 227.4 1115.0 227.4 1115.4 228.0C1115.7 228.6 1116.1 230.1 1116.3 231.7C1116.5 233.3 1116.6 235.7 1116.6 237.7Z" fill="#ffffff"/>
<path d="M899.6 310.1C901.4 308.1 904.8 306.2 910.5 305.8C916.3 305.3 927.5 306.5 934.0 307.3C940.5 308.1 946.4 308.6 949.5 310.4C952.7 312.1 961.2 316.7 952.9 318.0C944.5 319.3 908.4 319.3 899.6 318.0C890.7 316.7 897.7 312.1 899.6 310.1Z" fill="#ffffff"/>
<path d="M1048.8 148.4C1050.1 146.6 1055.3 145.3 1059.7 145.3C1064.1 145.3 1070.1 148.4 1075.3 148.4C1080.5 148.4 1083.6 146.4 1090.8 145.3C1098.1 144.3 1114.0 136.3 1118.6 142.0C1123.3 147.8 1122.2 174.3 1118.6 179.8C1115.1 185.3 1102.9 175.2 1097.2 174.9C1091.6 174.6 1088.9 178.0 1084.7 178.0C1080.6 178.0 1075.9 175.9 1072.2 174.9C1068.6 173.9 1064.9 174.0 1062.8 171.9C1060.7 169.8 1061.6 165.0 1059.7 162.4C1057.9 159.8 1053.6 158.6 1051.8 156.3C1050.0 154.0 1047.4 150.2 1048.8 148.4Z" fill="#1ee673"/>
<path d="M1103.6 169.6C1103.6 170.2 1103.1 170.9 1102.3 171.4C1101.6 171.9 1100.2 172.3 1099.0 172.5C1097.8 172.7 1096.2 172.7 1094.9 172.5C1093.7 172.3 1092.4 171.9 1091.6 171.4C1090.8 170.9 1090.3 170.2 1090.3 169.6C1090.3 169.0 1090.8 168.3 1091.6 167.8C1092.4 167.3 1093.7 166.8 1094.9 166.7C1096.2 166.5 1097.8 166.5 1099.0 166.7C1100.2 166.8 1101.6 167.3 1102.3 167.8C1103.1 168.3 1103.6 169.0 1103.6 169.6Z" fill="#ffffff"/>
<path d="M1104.6 137.2C1104.6 137.7 1103.6 138.3 1102.2 138.7C1100.7 139.1 1098.2 139.5 1095.8 139.6C1093.4 139.8 1090.3 139.8 1087.9 139.6C1085.5 139.5 1083.0 139.1 1081.5 138.7C1080.1 138.3 1079.1 137.7 1079.1 137.2C1079.1 136.7 1080.1 136.1 1081.5 135.7C1083.0 135.3 1085.5 134.9 1087.9 134.8C1090.3 134.6 1093.4 134.6 1095.8 134.8C1098.2 134.9 1100.7 135.3 1102.2 135.7C1103.6 136.1 1104.6 136.7 1104.6 137.2Z" fill="#ffffff"/>
<path d="M889.1 213.2C894.0 204.8 910.2 210.7 918.4 212.4C926.7 214.1 934.1 218.3 938.6 223.4C943.0 228.4 942.0 234.9 945.2 242.8C948.4 250.7 953.7 262.3 958.0 270.8C962.2 279.3 967.9 288.9 970.7 293.8C973.5 298.7 976.2 299.6 974.8 300.2C973.4 300.7 966.5 298.7 962.3 297.1C958.1 295.5 954.3 293.9 949.5 290.7C944.8 287.6 939.2 281.9 934.0 278.2C928.8 274.6 923.7 271.1 918.4 268.8C913.2 266.4 907.5 265.2 902.6 264.2C897.7 263.2 891.4 271.2 889.1 262.7C886.8 254.2 884.2 221.6 889.1 213.2Z" fill="#08c040"/>
<path d="M997.0 251.7C998.6 248.6 1002.5 250.0 1006.4 247.1C1010.3 244.2 1015.5 238.6 1020.5 234.4C1025.4 230.1 1030.0 225.0 1036.0 221.9C1042.0 218.8 1051.4 216.0 1056.4 215.7C1061.4 215.5 1062.2 216.4 1065.8 220.3C1069.5 224.2 1075.2 234.0 1078.3 239.2C1081.5 244.4 1085.2 249.5 1084.7 251.7C1084.2 253.9 1079.5 252.4 1075.3 252.5C1071.1 252.5 1065.0 251.2 1059.7 252.0C1054.5 252.7 1049.1 255.0 1043.9 256.8C1038.7 258.6 1033.6 261.4 1028.4 262.9C1023.1 264.5 1017.8 265.5 1012.5 266.0C1007.3 266.5 999.6 268.4 997.0 266.0C994.4 263.6 995.4 254.8 997.0 251.7Z" fill="#08c040"/>
<path d="M960.5 157.3C963.1 156.7 973.3 162.3 978.4 165.0C983.5 167.7 984.7 171.1 991.1 173.4C997.5 175.7 1008.1 176.4 1016.6 178.5C1025.1 180.6 1034.5 185.1 1042.1 186.2C1049.8 187.2 1054.9 186.0 1062.5 184.6C1070.2 183.3 1081.2 178.4 1088.0 178.0C1094.8 177.6 1098.2 179.3 1103.3 182.1C1108.4 184.8 1116.1 188.9 1118.6 194.3C1121.2 199.8 1120.8 211.7 1118.6 214.7C1116.5 217.7 1110.1 213.9 1105.9 212.2C1101.6 210.5 1097.8 206.2 1093.1 204.5C1088.5 202.8 1082.9 202.8 1077.8 202.0C1072.7 201.1 1067.6 200.1 1062.5 199.4C1057.4 198.8 1053.2 199.0 1047.2 198.1C1041.3 197.3 1033.6 195.4 1026.8 194.3C1020.0 193.2 1013.2 193.0 1006.4 191.8C999.6 190.5 992.0 188.8 986.0 186.7C980.1 184.5 974.5 182.0 970.7 179.0C966.9 176.0 964.8 172.4 963.1 168.8C961.4 165.2 958.0 158.0 960.5 157.3Z" fill="#08c040"/>
<path d="M970.7 179.0C973.7 176.0 984.3 176.0 991.1 176.5C997.9 176.9 1007.3 178.6 1011.5 181.6C1015.8 184.5 1017.5 191.1 1016.6 194.3C1015.8 197.5 1011.5 199.6 1006.4 200.7C1001.3 201.8 991.5 201.8 986.0 200.7C980.5 199.6 975.8 197.9 973.3 194.3C970.7 190.7 967.7 182.0 970.7 179.0Z" fill="#08c040"/>
<path d="M952.9 212.2C956.5 210.0 966.9 209.2 973.3 209.6C979.6 210.0 987.7 212.2 991.1 214.7C994.5 217.3 995.4 222.4 993.7 224.9C992.0 227.5 986.4 229.4 980.9 230.0C975.4 230.7 965.4 230.0 960.5 228.7C955.6 227.5 952.9 225.1 951.6 222.4C950.3 219.6 949.2 214.3 952.9 212.2Z" fill="#08c040"/>
<path d="M889.1 223.4C891.9 218.7 898.2 220.6 905.7 220.3C913.2 220.1 928.2 220.0 934.0 221.9C939.8 223.7 938.8 227.6 940.4 231.3C941.9 235.0 941.3 238.6 943.4 243.8C945.5 249.0 950.0 256.9 952.9 262.7C955.7 268.4 958.4 273.8 960.5 278.2C962.6 282.6 966.1 288.1 965.4 289.2C964.6 290.3 959.1 287.4 955.9 284.6C952.8 281.8 950.1 276.3 946.5 272.1C942.8 267.9 937.4 263.3 934.0 259.6C930.6 255.9 930.0 252.3 926.1 250.2C922.2 248.1 916.7 247.4 910.5 247.1C904.4 246.9 892.7 252.6 889.1 248.6C885.5 244.7 886.3 228.1 889.1 223.4Z" fill="#04982c"/>
<path d="M1009.5 250.2C1010.8 248.1 1016.5 244.1 1020.5 240.7C1024.4 237.3 1028.2 232.7 1032.9 229.8C1037.7 226.9 1043.8 224.7 1048.8 223.4C1053.7 222.1 1058.9 220.5 1062.8 221.9C1066.7 223.2 1069.9 228.1 1072.2 231.3C1074.6 234.4 1077.9 239.4 1076.8 240.7C1075.8 242.0 1070.0 239.5 1065.8 239.2C1061.7 238.9 1056.8 238.2 1051.8 239.2C1046.8 240.2 1041.0 243.2 1036.0 245.3C1031.0 247.4 1025.9 250.4 1022.0 251.7C1018.1 253.0 1014.6 253.5 1012.5 253.2C1010.5 253.0 1008.2 252.3 1009.5 250.2Z" fill="#04982c"/>
<path d="M1077.8 185.4C1080.2 183.5 1088.5 180.3 1093.1 180.3C1097.8 180.3 1102.5 182.6 1105.9 185.4C1109.3 188.1 1112.7 193.7 1113.5 196.9C1114.4 200.1 1113.1 203.7 1111.0 204.5C1108.9 205.4 1104.6 203.7 1100.8 202.0C1097.0 200.3 1091.7 196.0 1088.0 194.3C1084.4 192.6 1080.8 193.2 1079.1 191.8C1077.4 190.3 1075.5 187.3 1077.8 185.4Z" fill="#04982c"/>
<path d="M1106.7 193.0C1106.7 193.9 1106.3 195.0 1105.8 195.7C1105.3 196.5 1104.3 197.1 1103.5 197.4C1102.6 197.7 1101.5 197.7 1100.6 197.4C1099.8 197.1 1098.9 196.5 1098.4 195.7C1097.8 195.0 1097.5 193.9 1097.5 193.0C1097.5 192.1 1097.8 191.1 1098.4 190.3C1098.9 189.6 1099.8 188.9 1100.6 188.7C1101.5 188.4 1102.6 188.4 1103.5 188.7C1104.3 188.9 1105.3 189.6 1105.8 190.3C1106.3 191.1 1106.7 192.1 1106.7 193.0Z" fill="#047424"/>
</g>
<g filter="url(#bl2)" fill="none" stroke-linejoin="round">
<path d="M912.3 209.0L914.9 211.2L919.3 213.3L926.4 212.3L925.1 215.0L918.7 215.8L917.4 216.6L921.3 220.3L926.4 223.8L930.2 224.7L936.6 222.5L938.6 219.3L939.8 216.6L941.1 219.8L941.1 222.5L941.8 226.3L941.4 232.7L942.4 236.5L943.7 241.4L945.0 245.7L947.5 251.6L949.5 255.9L952.7 261.8L954.6 266.7L957.8 272.1L961.0 275.8L962.9 281.2L964.8 286.1L966.7 289.3L969.3 291.7L972.2 292.7L974.4 291.5L976.4 288.2L980.8 286.6L983.4 286.1L981.2 284.5L983.4 280.7L986.9 280.4L986.9 275.8L986.6 271.5L989.2 267.2L989.8 264.0L988.5 259.7L988.2 255.4L989.8 252.1L993.7 251.1L996.2 248.4L1002.6 246.7L1002.6 244.6L1009.0 240.8L1014.1 237.6L1019.3 232.2L1023.8 229.8L1028.2 228.4L1031.4 226.3L1032.7 223.0L1033.4 220.3L1037.9 219.3L1040.4 218.7L1043.0 219.8L1046.2 219.3L1045.5 216.0L1044.6 211.2L1043.0 206.9L1039.8 204.2L1041.1 200.9L1044.9 199.9L1041.7 197.2L1040.4 195.6L1043.0 193.7L1046.8 195.6L1050.7 196.4L1051.0 199.9L1055.8 200.7L1064.8 200.7L1067.6 202.0L1065.4 204.7L1062.2 206.1L1059.6 207.4L1059.3 210.6L1061.9 212.5L1063.8 209.6L1066.4 208.5L1066.7 212.8L1068.3 217.6L1071.8 216.6L1072.4 212.3L1073.7 207.4L1078.5 207.7L1082.0 201.5L1081.4 198.8L1085.3 196.1L1084.6 192.9L1091.7 189.1L1097.4 190.2L1096.5 186.9L1099.0 184.2L1094.2 182.6L1092.3 178.8L1087.2 179.4L1081.4 178.3L1075.0 181.5L1069.2 185.3L1062.8 186.4L1065.4 189.1L1064.8 191.5L1055.1 191.8L1050.7 192.3L1044.9 191.2L1043.9 189.6L1044.6 188.0L1044.9 185.9L1043.0 184.8L1039.8 185.9L1039.5 189.1L1040.1 193.9L1034.6 193.9L1026.3 192.9L1021.2 191.8L1017.4 189.1L1013.5 188.3L1009.0 188.8L1005.2 186.9L1000.1 185.9L996.2 184.2L991.7 181.5L988.2 180.7L990.4 176.7L993.7 173.5L994.3 173.2L989.2 171.3L986.6 169.4L982.8 167.5L979.9 166.5L979.6 160.5L984.0 160.5L984.7 157.3L989.2 153.0L990.4 147.6L989.8 144.9L984.7 142.7L977.6 144.4L974.4 142.2L967.4 139.0L961.0 137.9L953.3 136.5L948.2 137.4L943.0 138.4L940.5 141.1L943.7 144.4L943.7 148.1L945.9 150.8L946.9 154.1L949.5 157.3L952.7 159.5L957.8 162.1L953.3 164.3L952.7 168.6L948.8 172.4L945.6 175.1L942.4 179.9L938.6 181.5L936.0 185.9L928.3 186.9L923.8 190.7L924.5 193.4L925.1 197.7L929.6 201.5L930.9 203.6L923.8 205.8L916.1 205.3ZM891.8 199.9L901.4 199.3L904.6 202.6L907.8 207.4L912.3 209.0M891.8 176.7L900.1 175.1L900.1 169.1L909.7 167.0L919.3 164.3L920.6 158.4L923.8 156.8L925.8 153.5L930.9 153.0L934.1 147.6L931.5 142.2L934.7 139.5L939.8 137.9L948.2 137.4M934.7 139.5L934.1 132.0L932.2 131.4M891.8 135.2L901.4 134.9L909.7 136.3L912.9 136.3L919.3 136.0L925.1 133.6L929.0 131.4M948.2 137.4L955.2 135.2L954.6 131.4M994.3 173.2L997.5 172.4L1001.3 172.9L1007.1 176.7L1012.9 178.3L1014.8 180.5L1020.6 182.1L1024.4 183.7L1026.3 185.3L1032.1 185.3L1037.2 186.1L1039.8 185.9M1044.6 188.0L1047.5 185.9L1050.7 184.2L1054.5 184.8L1060.3 185.3L1062.8 186.4M1046.2 219.3L1051.9 218.2L1055.8 215.5L1059.6 215.0L1063.5 216.0L1064.8 220.9L1066.7 224.7M1068.3 217.6L1068.6 221.4L1066.7 224.7M1066.7 224.7L1071.2 229.0L1075.6 233.8L1079.5 239.2L1080.8 244.6L1079.5 250.0L1085.9 251.6L1090.4 247.8L1095.5 244.6L1098.1 246.2L1101.3 250.0L1101.9 255.4L1103.8 260.8L1107.0 268.8L1107.0 276.9L1107.0 282.3L1105.1 287.7L1105.1 293.1L1107.7 292.0L1110.2 296.3L1114.1 299.6L1116.0 301.2M1107.0 281.2L1109.6 276.9L1112.8 272.6L1110.2 266.1L1104.5 255.4L1107.0 250.0L1101.9 241.9L1101.3 236.5L1109.0 229.5L1116.0 226.3M1099.0 184.2L1103.8 187.5L1107.7 188.0L1107.7 196.1L1100.6 202.6L1101.3 206.9L1108.3 206.3L1109.6 211.2L1112.8 214.4L1116.0 219.3M1116.0 264.0L1115.4 268.8L1111.5 279.6L1110.9 284.5L1115.4 286.1L1116.0 290.4M987.2 283.4L989.8 285.0L995.6 290.4L999.4 295.8L998.8 300.6L994.3 303.3L989.2 304.1L986.9 299.6L986.6 293.6L987.2 288.2L988.2 286.1ZM1085.3 305.7L1087.8 305.5L1093.6 307.9L1100.0 307.9L1103.2 311.4L1105.1 314.6L1089.7 314.6L1086.5 309.8ZM1069.9 263.4L1071.2 264.5L1070.6 270.5L1069.4 274.2L1068.7 272.1L1069.4 268.3ZM1068.0 278.0L1068.6 279.6L1067.3 279.6Z" stroke="#06100a" stroke-width="1.8" opacity=".95"/>
<path d="M930.9 203.6L939.8 204.7L943.7 204.7L949.5 210.6L951.4 215.5L949.5 219.8L948.2 225.2L945.6 227.3L941.8 227.3M949.5 210.6L955.2 207.4L957.8 202.6L963.5 205.8L968.0 204.2L968.0 199.9L971.2 199.3L976.4 191.8M976.4 191.8L971.9 189.6L970.6 186.4L968.0 186.9L963.5 185.3L961.0 183.2L955.9 178.8L952.7 178.3L948.8 174.8M952.7 177.2L958.4 175.6L963.5 175.1L967.4 172.4L968.0 169.7L964.2 167.0L961.6 163.8L959.7 161.6M959.7 161.6L964.2 158.4L968.7 158.9L974.4 160.0L977.6 161.1L979.6 160.5M972.5 172.4L975.1 169.1L980.2 168.1M968.0 169.7L972.5 172.4L969.9 177.2L969.9 181.0L970.6 183.2L971.9 185.9L970.6 186.4M972.5 172.4L977.0 176.2L980.8 177.8L984.0 180.5L988.2 180.7M976.4 191.8L981.5 192.9L980.8 198.2L977.6 199.9L978.9 204.2L985.3 200.9L990.4 201.5L996.2 200.9L1000.1 202.6L1002.6 203.6L1005.8 206.9M1005.8 206.9L1009.0 204.2L1010.3 201.5L1013.5 198.2L1017.4 197.2L1014.8 193.9L1012.9 190.7L1013.5 188.3M1009.0 204.2L1015.4 204.7L1024.4 203.6L1029.5 204.2L1034.6 202.0L1037.9 200.4L1039.1 193.9M1037.9 200.4L1035.9 205.3L1032.1 207.9L1026.3 209.6L1026.3 212.3L1031.4 216.0L1032.7 218.2L1035.9 219.5M1031.4 216.0L1026.3 215.0L1020.6 217.1L1015.4 215.5L1013.5 215.0M1013.5 215.0L1010.9 211.2L1009.0 207.4L1005.8 206.9M1005.8 206.9L998.8 207.9L998.1 212.8L993.7 216.0L991.1 220.3L990.4 221.4M949.5 219.8L957.1 220.9L963.5 222.0L967.4 219.8L976.4 220.3L984.7 219.8L990.4 221.4M990.4 221.4L991.7 226.8L991.1 231.7L989.8 234.9L987.2 231.7L981.5 230.6L977.0 231.1L973.8 236.0L971.9 237.6M971.9 237.6L968.0 240.8L964.2 243.0L959.7 244.6L955.9 245.1L951.4 247.3L951.4 251.1L947.5 251.6M951.4 251.1L950.7 255.4L949.8 255.9M971.9 237.6L971.9 243.0L971.2 247.8L968.7 251.1L969.3 255.4L967.4 255.9L971.2 259.7L976.4 262.9L977.0 267.8M977.0 267.8L973.2 268.3L970.6 272.6L964.8 273.7L960.3 270.5L955.2 267.2M964.8 273.7L967.4 279.1L969.9 281.2L969.9 285.5L969.9 289.9L969.3 291.5M977.0 267.8L983.4 265.1L987.9 263.4L989.8 263.4M971.2 247.8L977.0 250.0L983.4 247.3L987.9 245.1L990.4 244.6L994.3 240.3L993.0 238.1L989.8 234.9M1013.5 215.0L1010.3 219.8L1009.7 221.4L1004.5 225.7L1003.3 229.0L1000.7 233.8L1000.1 236.0L996.9 239.7L994.3 240.3M996.9 239.7L1003.3 237.0L1007.7 234.9L1013.5 233.8L1018.6 233.3M1064.8 191.5L1071.2 190.7L1078.8 187.5L1087.2 185.9L1090.4 188.5M1051.0 196.6L1058.3 196.6L1066.0 196.6L1069.9 198.8L1067.6 202.0M1073.1 197.2L1077.6 193.4L1085.3 190.7M1071.2 203.1L1073.7 198.2L1081.4 198.8M1066.4 205.8L1071.2 204.7L1073.7 207.4M1066.4 205.8L1066.4 208.5M1050.7 192.3L1051.0 196.4M1040.1 190.2L1043.9 189.6M949.5 157.3L950.7 153.0L949.5 149.2L959.1 149.8L967.4 148.1L973.8 144.9M977.6 161.1L980.8 156.8L980.2 151.9L977.0 149.8L973.8 144.9M968.0 181.0L970.6 181.0L970.6 182.9L968.0 182.6L968.0 181.0" stroke="#06100a" stroke-width="1.6" opacity=".9"/>
<path d="M1069.9 263.4L1071.2 264.5L1070.6 270.5L1069.4 274.2L1068.7 272.1L1069.4 268.3Z" fill="#0a140c" stroke="#0a140c" stroke-width=".3"/>
<path d="M940.5 273.1h1M937.9 275.8h1M941.1 279.1h1M943.0 281.8h1M938.6 281.8h1M1076.3 298.5h1M1069.9 286.6h1" stroke="#0a1a10" stroke-width="1.2"/>
</g></g>
<g filter="url(#bl2)">
<rect x="891.8" y="131.7" width="224.2" height="182.4" fill="none" stroke="#1c1c1c" stroke-width="1.7"/>
<text x="868.7" y="313.3" class="ax" textLength="15.6" lengthAdjust="spacingAndGlyphs">5N</text>
<text x="862.7" y="286.3" class="ax" textLength="21.6" lengthAdjust="spacingAndGlyphs">10N</text>
<text x="862.7" y="259.4" class="ax" textLength="21.6" lengthAdjust="spacingAndGlyphs">15N</text>
<text x="862.7" y="232.4" class="ax" textLength="21.6" lengthAdjust="spacingAndGlyphs">20N</text>
<text x="862.7" y="205.5" class="ax" textLength="21.6" lengthAdjust="spacingAndGlyphs">25N</text>
<text x="862.7" y="178.5" class="ax" textLength="21.6" lengthAdjust="spacingAndGlyphs">30N</text>
<text x="862.7" y="151.6" class="ax" textLength="21.6" lengthAdjust="spacingAndGlyphs">35N</text>
<text x="913.2" y="326.7" class="ax" textLength="21.2" lengthAdjust="spacingAndGlyphs">70E</text>
<text x="958.1" y="326.7" class="ax" textLength="21.2" lengthAdjust="spacingAndGlyphs">77E</text>
<text x="1002.9" y="326.7" class="ax" textLength="21.2" lengthAdjust="spacingAndGlyphs">84E</text>
<text x="1047.7" y="326.7" class="ax" textLength="21.2" lengthAdjust="spacingAndGlyphs">91E</text>
<text x="1092.6" y="326.7" class="ax" textLength="21.2" lengthAdjust="spacingAndGlyphs">98E</text>
<path d="M891.8 309.3h-3M891.8 282.3h-3M891.8 255.4h-3M891.8 228.4h-3M891.8 201.5h-3M891.8 174.5h-3M891.8 147.6h-3M923.8 314.1v3M968.7 314.1v3M1013.5 314.1v3M1058.3 314.1v3M1103.2 314.1v3" stroke="#222" stroke-width="1.2"/>
</g>
<clipPath id="cm3"><rect x="620.6" y="445.0" width="217.6" height="177.3"/></clipPath>
<g clip-path="url(#cm3)">
<g filter="url(#bl)">
<rect x="617.6" y="442.0" width="223.6" height="183.3" fill="#ffffff"/>
<path d="M618.1 442.3C643.8 442.3 804.1 438.4 841.3 442.3C878.5 446.1 844.5 461.2 841.3 465.2C838.1 469.3 828.7 466.5 822.1 466.5C815.6 466.5 809.4 465.9 801.7 465.2C794.1 464.6 784.7 462.9 776.2 462.7C767.7 462.5 758.4 463.3 750.7 464.0C743.1 464.6 735.8 465.3 730.3 466.5C724.8 467.7 722.2 470.0 717.6 471.1C712.9 472.2 706.9 473.6 702.3 472.9C697.6 472.1 692.1 471.6 689.5 466.5C687.0 461.4 698.9 446.3 687.0 442.3C675.1 438.2 592.4 442.3 618.1 442.3Z" fill="#c6cae9"/>
<path d="M618.1 442.3C630.0 439.1 677.2 439.9 689.5 442.3C701.8 444.6 692.1 451.0 692.1 456.3C692.1 461.6 690.4 469.1 689.5 474.2C688.7 479.3 689.9 483.7 687.0 486.9C684.0 490.1 677.2 492.4 671.7 493.3C666.1 494.1 658.5 493.9 653.8 492.0C649.1 490.1 645.7 486.1 643.6 481.8C641.5 477.6 643.6 469.7 641.1 466.5C638.5 463.3 632.1 463.5 628.3 462.7C624.5 461.8 619.8 464.8 618.1 461.4C616.4 458.0 606.2 445.5 618.1 442.3Z" fill="#c6cae9"/>
<path d="M715.0 452.5C717.6 451.1 726.9 450.1 732.9 449.9C738.8 449.7 747.5 450.1 750.7 451.2C753.9 452.3 754.6 455.5 752.0 456.8C749.5 458.2 741.2 459.1 735.4 459.4C729.7 459.6 721.0 459.5 717.6 458.3C714.2 457.2 712.5 453.9 715.0 452.5Z" fill="#9090c6"/>
<path d="M804.3 457.6C806.2 456.0 812.4 454.6 817.0 454.3C821.7 454.0 829.6 454.5 832.3 455.8C835.1 457.1 836.2 460.5 833.6 461.9C831.1 463.4 821.7 464.2 817.0 464.5C812.4 464.7 807.7 464.6 805.6 463.4C803.4 462.3 802.4 459.1 804.3 457.6Z" fill="#9090c6"/>
<path d="M661.5 448.7C664.6 447.6 675.8 447.8 679.3 449.9C682.8 452.1 682.3 457.8 682.4 461.4C682.5 465.0 682.2 469.1 679.8 471.6C677.4 474.2 670.6 474.2 667.8 476.7C665.0 479.3 666.2 485.0 663.0 486.9C659.8 488.8 652.3 489.5 648.7 488.2C645.1 486.9 642.0 482.2 641.6 479.3C641.1 476.3 643.7 472.5 646.2 470.3C648.6 468.2 654.0 468.8 656.4 466.5C658.7 464.2 659.3 459.3 660.2 456.3C661.0 453.3 658.3 449.7 661.5 448.7Z" fill="#9090c6"/>
<path d="M662.0 456.3C663.9 454.0 671.7 453.3 674.2 455.0C676.7 456.7 677.4 463.7 676.8 466.5C676.1 469.3 672.7 471.2 670.4 471.6C668.0 472.0 664.1 471.6 662.7 469.1C661.3 466.5 660.1 458.6 662.0 456.3Z" fill="#6666aa"/>
<path d="M715.0 479.3C718.4 477.1 726.9 474.4 735.4 472.9C743.9 471.4 755.8 470.5 766.0 470.3C776.2 470.1 788.1 471.8 796.6 471.6C805.1 471.4 809.6 469.9 817.0 469.1C824.5 468.2 837.2 462.5 841.3 466.5C845.3 470.5 843.6 489.0 841.3 493.3C838.9 497.5 832.1 492.9 827.2 492.0C822.4 491.2 817.9 488.4 811.9 488.2C806.0 488.0 798.3 489.5 791.5 490.7C784.7 492.0 777.9 495.2 771.1 495.8C764.3 496.5 757.5 495.6 750.7 494.6C743.9 493.5 736.3 490.9 730.3 489.5C724.4 488.0 717.6 487.3 715.0 485.6C712.5 483.9 711.6 481.4 715.0 479.3Z" fill="#fdf0a8"/>
<path d="M826.0 467.8C828.3 465.9 838.7 462.3 841.3 465.2C843.8 468.2 842.8 482.4 841.3 485.6C839.8 488.8 834.7 485.8 832.3 484.4C830.0 482.9 828.3 479.5 827.2 476.7C826.2 473.9 823.6 469.7 826.0 467.8Z" fill="#fdc860"/>
<path d="M697.2 490.7C700.7 489.0 708.6 489.9 715.0 490.7C721.4 491.6 730.7 493.5 735.4 495.8C740.2 498.2 742.7 501.5 743.6 504.8C744.4 508.0 743.6 512.8 740.5 515.5C737.5 518.1 730.3 520.1 725.2 520.6C720.1 521.0 714.2 519.7 709.9 518.0C705.7 516.3 702.4 513.2 699.7 510.4C697.1 507.5 694.5 504.2 694.1 500.9C693.7 497.7 693.7 492.4 697.2 490.7Z" fill="#fdf0a8"/>
<path d="M698.4 478.7C700.5 478.4 705.5 480.0 709.9 481.3C714.4 482.6 720.1 484.7 725.2 486.4C730.3 488.1 735.3 490.0 740.5 491.5C745.7 493.0 754.0 494.1 756.3 495.6C758.7 497.0 757.9 499.7 754.8 500.2C751.7 500.7 743.8 499.7 738.0 498.6C732.2 497.5 725.6 495.2 720.1 493.5C714.6 491.9 708.6 490.6 704.8 488.9C701.1 487.2 698.7 485.0 697.7 483.3C696.6 481.6 696.4 479.1 698.4 478.7Z" fill="#fdc860"/>
<path d="M702.3 483.1C702.9 482.0 707.4 482.2 709.9 483.1C712.5 483.9 716.7 486.8 717.6 488.2C718.4 489.6 716.9 491.3 715.0 491.5C713.1 491.7 708.2 490.9 706.1 489.5C704.0 488.1 701.6 484.1 702.3 483.1Z" fill="#fd9428"/>
<path d="M662.7 517.0C665.4 515.1 673.6 514.5 679.3 514.5C685.1 514.5 691.2 515.7 697.2 517.0C703.1 518.3 711.0 519.9 715.0 522.1C719.1 524.3 723.1 528.4 721.4 530.3C719.7 532.1 710.1 533.2 704.8 533.3C699.5 533.4 694.6 531.4 689.5 530.8C684.4 530.1 678.5 530.4 674.2 529.5C669.9 528.7 665.4 527.8 663.5 525.7C661.6 523.6 660.1 518.9 662.7 517.0Z" fill="#fdf0a8"/>
<path d="M678.0 518.0C679.8 516.5 686.1 516.6 689.5 517.0C692.9 517.4 697.2 518.7 698.4 520.6C699.7 522.4 699.1 526.7 697.2 528.2C695.3 529.7 690.0 529.8 687.0 529.5C683.9 529.2 680.3 528.4 678.8 526.4C677.3 524.5 676.3 519.6 678.0 518.0Z" fill="#fdc860"/>
<path d="M664.8 520.1C666.6 519.2 672.2 519.6 674.2 522.6C676.2 525.6 675.8 532.8 676.8 537.9C677.7 543.0 678.6 548.9 679.8 553.2C681.0 557.6 684.2 562.1 683.9 563.9C683.6 565.7 679.9 566.1 678.0 563.9C676.2 561.7 674.7 555.0 672.9 550.7C671.2 546.3 669.2 541.7 667.6 537.9C666.0 534.1 664.0 530.7 663.5 527.7C663.0 524.7 663.0 520.9 664.8 520.1Z" fill="#fdc860"/>
<path d="M669.6 535.4C670.1 533.5 673.0 532.0 674.2 534.1C675.4 536.2 676.1 544.3 676.8 548.1C677.4 551.9 678.5 555.8 678.0 557.0C677.6 558.3 675.4 557.7 674.2 555.8C673.1 553.9 671.9 549.0 671.2 545.6C670.4 542.2 669.1 537.3 669.6 535.4Z" fill="#fd9428"/>
<path d="M618.1 527.7C622.4 526.3 635.5 527.0 643.6 527.2C651.7 527.4 662.5 527.5 666.6 529.0C670.6 530.4 671.7 534.6 667.8 535.9C664.0 537.2 651.9 536.6 643.6 536.6C635.3 536.6 622.4 537.4 618.1 535.9C613.9 534.4 613.9 529.2 618.1 527.7Z" fill="#fdf0a8"/>
<path d="M618.1 577.5C622.4 569.4 636.0 574.0 643.6 574.9C651.3 575.8 658.5 578.7 664.0 582.6C669.5 586.4 674.0 592.5 676.8 597.9C679.5 603.2 682.7 610.2 680.6 614.4C678.5 618.7 674.4 621.9 664.0 623.4C653.6 624.8 625.8 631.0 618.1 623.4C610.4 615.7 613.9 585.5 618.1 577.5Z" fill="#fdf0a8"/>
<path d="M620.7 586.4C622.4 581.5 628.7 582.8 633.4 582.6C638.1 582.3 645.1 582.8 648.7 585.1C652.3 587.4 654.7 592.5 655.1 596.6C655.5 600.6 654.0 606.6 651.3 609.3C648.5 612.1 643.2 612.7 638.5 613.2C633.8 613.6 626.2 616.3 623.2 611.9C620.2 607.4 619.0 591.3 620.7 586.4Z" fill="#fdc860"/>
<path d="M670.4 583.8C672.1 580.9 677.0 576.6 680.6 576.2C684.2 575.8 689.1 578.3 692.1 581.3C695.0 584.3 697.0 590.0 698.4 594.0C699.9 598.1 702.9 603.2 701.0 605.5C699.1 607.8 691.2 608.5 687.0 608.1C682.7 607.6 678.2 605.3 675.5 603.0C672.7 600.6 671.2 597.2 670.4 594.0C669.5 590.8 668.7 586.8 670.4 583.8Z" fill="#fdc860"/>
<path d="M677.0 585.9C678.0 583.8 680.3 580.0 681.9 579.5C683.4 578.9 684.6 580.7 686.5 582.6C688.3 584.4 691.0 587.8 692.8 590.5C694.7 593.1 697.2 596.3 697.4 598.4C697.7 600.4 696.4 602.2 694.4 603.0C692.3 603.7 687.6 603.7 684.9 603.0C682.3 602.2 680.0 600.2 678.5 598.4C677.1 596.5 676.5 594.1 676.3 592.0C676.0 589.9 676.1 588.0 677.0 585.9Z" fill="#fd9428"/>
<path d="M619.4 541.7C621.1 536.1 625.5 534.6 630.9 533.3C636.2 532.1 645.3 533.0 651.3 534.1C657.2 535.2 662.5 537.2 666.6 540.0C670.6 542.7 673.3 545.9 675.5 550.7C677.7 555.4 679.6 563.0 679.8 568.5C680.0 574.0 678.8 581.1 676.8 583.8C674.8 586.6 671.2 586.6 667.8 585.1C664.4 583.6 661.2 577.0 656.4 574.9C651.5 572.8 644.5 573.6 638.5 572.3C632.6 571.1 623.8 572.3 620.7 567.2C617.5 562.1 617.7 547.4 619.4 541.7Z" fill="#c6cae9"/>
<path d="M620.7 540.5C622.5 535.0 627.2 536.4 631.6 535.6C636.1 534.8 643.3 534.8 647.4 535.6C651.6 536.4 653.8 538.6 656.6 540.5C659.5 542.3 662.4 544.0 664.5 546.6C666.6 549.2 668.3 552.6 669.4 556.0C670.4 559.4 671.2 563.1 670.9 567.0C670.6 570.9 669.2 577.7 667.6 579.5C666.0 581.3 663.0 579.5 661.5 578.0C659.9 576.4 660.7 572.1 658.4 570.1C656.1 568.0 651.9 566.0 647.4 565.5C643.0 565.0 636.1 566.5 631.6 567.0C627.2 567.5 622.5 572.9 620.7 568.5C618.8 564.1 618.8 546.0 620.7 540.5Z" fill="#9090c6"/>
<path d="M620.7 542.0C622.5 538.1 628.0 538.5 631.6 537.9C635.3 537.4 639.4 537.5 642.6 538.7C645.7 539.9 649.7 542.4 650.5 545.1C651.3 547.7 649.5 551.9 647.4 554.5C645.3 557.1 642.5 559.5 638.0 560.6C633.5 561.8 623.5 564.5 620.7 561.4C617.8 558.3 618.8 545.9 620.7 542.0Z" fill="#6666aa"/>
<path d="M636.0 548.9C636.0 549.3 635.7 549.9 635.4 550.2C635.1 550.6 634.5 550.9 634.0 551.1C633.5 551.2 632.8 551.2 632.3 551.1C631.8 550.9 631.2 550.6 630.9 550.2C630.6 549.9 630.3 549.3 630.3 548.9C630.3 548.4 630.6 547.9 630.9 547.5C631.2 547.2 631.8 546.8 632.3 546.7C632.8 546.6 633.5 546.6 634.0 546.7C634.5 546.8 635.1 547.2 635.4 547.5C635.7 547.9 636.0 548.4 636.0 548.9Z" fill="#3e3e8c"/>
<path d="M680.6 534.1C683.1 531.3 691.4 531.1 697.2 531.5C702.9 532.0 709.1 534.9 715.0 536.6C721.0 538.3 728.6 539.4 732.9 541.7C737.1 544.1 740.5 547.1 740.5 550.7C740.5 554.3 735.4 558.7 732.9 563.4C730.3 568.1 727.3 573.6 725.2 578.7C723.1 583.8 722.7 589.8 720.1 594.0C717.6 598.3 713.3 603.0 709.9 604.2C706.5 605.5 702.3 605.1 699.7 601.7C697.2 598.3 696.3 590.2 694.6 583.8C692.9 577.5 691.6 569.4 689.5 563.4C687.4 557.5 683.4 553.0 681.9 548.1C680.4 543.2 678.0 536.9 680.6 534.1Z" fill="#c6cae9"/>
<path d="M699.7 548.1C702.0 544.9 705.7 542.6 709.9 541.7C714.2 540.9 721.4 541.5 725.2 543.0C729.0 544.5 732.4 547.7 732.9 550.7C733.3 553.6 729.9 557.0 727.8 560.9C725.6 564.7 722.2 569.4 720.1 573.6C718.0 577.9 717.6 583.8 715.0 586.4C712.5 588.9 707.7 590.2 704.8 588.9C701.9 587.7 699.1 583.4 697.7 578.7C696.2 574.0 695.8 566.0 696.1 560.9C696.5 555.8 697.4 551.3 699.7 548.1Z" fill="#9090c6"/>
<path d="M706.9 558.3C708.6 556.2 712.6 554.3 715.0 554.5C717.4 554.7 720.8 556.8 721.4 559.6C722.0 562.4 720.1 567.7 718.8 571.1C717.6 574.5 715.7 578.9 713.7 580.0C711.8 581.1 708.9 579.6 707.4 577.5C705.9 575.3 704.9 570.4 704.8 567.2C704.7 564.1 705.2 560.4 706.9 558.3Z" fill="#6666aa"/>
<path d="M681.4 537.9C682.8 535.0 689.2 535.0 692.1 535.9C694.9 536.7 697.6 539.7 698.4 543.0C699.3 546.3 698.7 552.8 697.2 555.8C695.7 558.7 691.9 561.3 689.5 560.9C687.2 560.4 684.5 557.0 683.1 553.2C681.8 549.4 679.9 540.8 681.4 537.9Z" fill="#ffffff"/>
<path d="M740.5 512.4C743.9 510.3 751.6 507.0 755.8 507.8C760.1 508.7 764.1 514.2 766.0 517.5C767.9 520.8 768.6 524.7 767.3 527.7C766.0 530.8 762.0 533.2 758.4 535.9C754.8 538.5 749.9 541.0 745.6 543.5C741.4 546.1 736.3 550.8 732.9 551.2C729.5 551.6 725.6 549.5 725.2 546.1C724.8 542.7 728.6 535.0 730.3 530.8C732.0 526.5 733.7 523.6 735.4 520.6C737.1 517.5 737.1 514.5 740.5 512.4Z" fill="#c6cae9"/>
<path d="M740.5 525.2C742.9 523.0 747.8 519.9 750.7 520.1C753.7 520.3 758.2 523.9 758.4 526.4C758.6 529.0 754.8 533.2 752.0 535.4C749.2 537.5 744.3 539.6 741.8 539.2C739.2 538.8 736.9 535.2 736.7 532.8C736.5 530.5 738.2 527.3 740.5 525.2Z" fill="#9090c6"/>
<path d="M745.6 507.8C747.5 503.7 754.1 498.1 760.9 495.1C767.7 492.0 778.4 490.5 786.4 489.5C794.5 488.4 802.6 488.9 809.4 488.9C816.2 488.9 822.4 487.9 827.2 489.5C832.1 491.0 837.4 494.6 838.7 498.4C840.0 502.2 838.1 509.0 834.9 512.4C831.7 515.8 823.8 516.9 819.6 518.8C815.3 520.7 812.6 521.6 809.4 523.9C806.2 526.2 803.2 529.2 800.5 532.8C797.7 536.4 796.4 543.0 792.8 545.6C789.2 548.1 782.6 549.2 778.8 548.1C775.0 547.1 772.8 542.4 769.9 539.2C766.9 536.0 764.3 532.2 760.9 529.0C757.5 525.8 752.0 523.6 749.5 520.1C746.9 516.5 743.7 512.0 745.6 507.8Z" fill="#c6cae9"/>
<path d="M752.0 507.8C753.7 504.1 759.0 498.6 764.8 495.8C770.5 493.1 779.4 492.3 786.4 491.5C793.4 490.7 800.7 491.1 806.8 491.0C813.0 490.9 818.8 489.5 823.4 490.7C828.0 492.0 833.1 495.4 834.4 498.6C835.7 501.9 834.1 507.5 831.3 510.4C828.5 513.3 821.5 514.2 817.5 516.0C813.6 517.8 810.7 518.8 807.3 521.1C804.0 523.4 800.5 526.3 797.7 529.8C794.8 533.2 793.1 539.6 790.0 542.0C786.9 544.4 782.1 545.1 779.3 544.0C776.5 543.0 775.5 538.9 773.2 535.9C770.9 532.9 768.6 529.2 765.5 526.2C762.5 523.2 757.1 521.1 754.8 518.0C752.6 515.0 750.3 511.5 752.0 507.8Z" fill="#9090c6"/>
<path d="M757.1 507.8C758.5 504.7 762.4 500.0 767.3 497.6C772.2 495.2 779.8 494.3 786.4 493.5C793.0 492.8 801.1 493.2 806.8 493.0C812.6 492.9 817.0 491.5 820.9 492.5C824.7 493.5 828.6 496.4 829.8 499.2C830.9 501.9 830.0 506.5 827.8 508.8C825.5 511.2 820.1 511.8 816.5 513.4C813.0 515.0 809.7 516.2 806.3 518.5C802.9 520.8 799.0 524.0 796.1 527.2C793.2 530.4 791.7 535.8 789.0 537.9C786.3 540.0 782.4 540.8 780.1 540.0C777.8 539.1 777.3 535.5 775.2 532.8C773.1 530.2 770.3 526.9 767.6 524.1C764.8 521.4 760.6 519.2 758.9 516.5C757.1 513.8 755.7 511.0 757.1 507.8Z" fill="#6666aa"/>
<path d="M760.9 506.0C762.2 503.7 765.6 500.2 769.9 498.4C774.1 496.6 781.3 494.9 786.4 495.1C791.5 495.2 796.6 498.4 800.5 499.2C804.3 499.9 806.6 499.8 809.4 499.7C812.1 499.5 815.1 497.7 817.0 498.4C819.0 499.0 821.7 501.6 820.9 503.5C820.0 505.4 814.9 508.0 811.9 509.9C809.0 511.8 805.8 512.8 803.0 515.0C800.2 517.2 798.1 521.0 795.4 523.1C792.6 525.3 789.6 527.4 786.4 527.7C783.2 528.1 779.4 526.7 776.2 525.2C773.0 523.7 769.6 520.9 767.3 518.8C765.0 516.7 763.3 514.5 762.2 512.4C761.1 510.3 759.7 508.4 760.9 506.0Z" fill="#3e3e8c"/>
<path d="M764.0 505.3C764.6 502.4 767.9 500.6 771.6 499.2C775.4 497.7 781.9 496.3 786.4 496.6C790.9 496.9 795.9 498.8 798.7 501.2C801.4 503.6 803.3 508.1 803.0 511.1C802.8 514.2 799.8 517.3 797.1 519.6C794.5 521.8 790.3 524.1 786.9 524.7C783.5 525.2 779.9 524.0 776.7 522.6C773.6 521.3 769.9 519.4 767.8 516.5C765.7 513.6 763.4 508.2 764.0 505.3Z" fill="#0c0c34"/>
<path d="M791.5 531.5C792.4 528.3 797.5 526.0 801.7 523.9C806.0 521.8 810.4 519.3 817.0 518.8C823.6 518.2 837.2 513.8 841.3 520.6C845.3 527.4 843.6 553.9 841.3 559.6C838.9 565.3 831.3 555.0 827.2 554.5C823.2 553.9 820.4 556.8 817.0 556.3C813.6 555.7 810.2 553.3 806.8 551.2C803.4 549.1 799.2 546.8 796.6 543.5C794.1 540.3 790.7 534.8 791.5 531.5Z" fill="#fdf0a8"/>
<path d="M795.4 539.2C796.8 537.3 801.5 533.7 804.3 534.1C807.0 534.5 810.9 538.8 811.9 541.7C813.0 544.7 812.4 550.5 810.7 551.9C809.0 553.4 804.3 551.7 801.7 550.7C799.2 549.6 796.4 547.5 795.4 545.6C794.3 543.7 793.9 541.1 795.4 539.2Z" fill="#fdc860"/>
<path d="M823.4 539.2C824.9 537.1 829.4 534.5 832.3 534.1C835.3 533.7 839.8 533.2 841.3 536.6C842.8 540.0 843.2 551.7 841.3 554.5C839.4 557.3 832.8 554.5 829.8 553.2C826.8 551.9 824.5 549.2 823.4 546.8C822.4 544.5 821.9 541.3 823.4 539.2Z" fill="#fdc860"/>
<path d="M819.1 531.8C819.1 532.7 818.7 533.8 818.1 534.5C817.5 535.2 816.5 535.9 815.6 536.2C814.6 536.4 813.4 536.4 812.4 536.2C811.5 535.9 810.4 535.2 809.9 534.5C809.3 533.8 808.9 532.7 808.9 531.8C808.9 530.9 809.3 529.8 809.9 529.1C810.4 528.4 811.5 527.7 812.4 527.4C813.4 527.2 814.6 527.2 815.6 527.4C816.5 527.7 817.5 528.4 818.1 529.1C818.7 529.8 819.1 530.9 819.1 531.8Z" fill="#ffffff"/>
<path d="M745.6 543.0C747.5 539.8 752.4 537.5 755.8 536.6C759.2 535.8 762.2 536.9 766.0 537.9C769.9 539.0 774.5 542.8 778.8 543.0C783.0 543.2 787.7 540.5 791.5 539.2C795.4 537.9 793.4 535.6 801.7 535.4C810.0 535.2 834.7 523.0 841.3 537.9C847.9 552.8 850.0 610.2 841.3 624.6C832.6 639.1 798.5 626.3 789.0 624.6C779.4 622.9 787.7 618.7 783.9 614.4C780.1 610.2 771.6 603.4 766.0 599.1C760.5 594.9 754.6 593.2 750.7 588.9C746.9 584.7 744.1 579.2 743.1 573.6C742.0 568.1 743.9 560.9 744.3 555.8C744.8 550.7 743.7 546.2 745.6 543.0Z" fill="#fdf0a8"/>
<path d="M759.7 573.6C760.7 569.4 762.8 561.1 766.0 557.0C769.2 553.0 774.3 551.5 778.8 549.4C783.2 547.3 789.2 546.0 792.8 544.3C796.4 542.6 798.1 537.7 800.5 539.2C802.8 540.7 803.6 551.3 806.8 553.2C810.0 555.1 815.8 550.7 819.6 550.7C823.4 550.7 826.2 551.5 829.8 553.2C833.4 554.9 839.4 550.2 841.3 560.9C843.2 571.5 844.0 607.2 841.3 617.0C838.5 626.8 829.6 619.1 824.7 619.5C819.8 620.0 815.8 618.5 811.9 619.5C808.1 620.6 805.1 626.8 801.7 625.9C798.3 625.1 794.9 618.9 791.5 614.4C788.1 610.0 785.2 603.0 781.3 599.1C777.5 595.3 772.2 594.2 768.6 591.5C765.0 588.7 761.1 585.5 759.7 582.6C758.2 579.6 758.6 577.9 759.7 573.6Z" fill="#fdc860"/>
<path d="M757.4 555.8C757.4 557.0 757.0 558.5 756.5 559.5C756.0 560.5 755.0 561.4 754.2 561.8C753.3 562.2 752.2 562.2 751.3 561.8C750.5 561.4 749.6 560.5 749.1 559.5C748.5 558.5 748.2 557.0 748.2 555.8C748.2 554.5 748.5 553.0 749.1 552.0C749.6 551.0 750.5 550.1 751.3 549.7C752.2 549.3 753.3 549.3 754.2 549.7C755.0 550.1 756.0 551.0 756.5 552.0C757.0 553.0 757.4 554.5 757.4 555.8Z" fill="#fdc860"/>
<path d="M765.0 571.6C766.1 568.4 768.7 563.5 771.4 560.6C774.0 557.8 777.2 556.3 780.8 554.5C784.5 552.7 790.2 551.2 793.3 549.7C796.5 548.1 798.1 543.7 799.7 545.1C801.3 546.4 800.9 555.2 802.8 557.6C804.6 559.9 807.8 559.3 810.7 559.1C813.5 558.8 817.0 556.0 819.8 556.0C822.7 556.0 825.4 556.5 827.8 559.1C830.1 561.7 832.8 567.7 834.1 571.6C835.4 575.5 835.9 578.6 835.7 582.6C835.4 586.5 832.6 591.4 832.6 595.0C832.6 598.7 835.1 601.3 835.7 604.5C836.2 607.6 837.7 612.3 835.7 613.9C833.6 615.5 827.3 613.9 823.2 613.9C819.0 613.9 814.3 612.9 810.7 613.9C807.0 615.0 803.9 621.3 801.2 620.3C798.6 619.3 797.5 612.0 794.8 607.8C792.2 603.6 789.1 598.7 785.4 595.0C781.8 591.4 776.3 588.5 772.9 585.9C769.5 583.3 766.3 581.9 765.0 579.5C763.7 577.1 763.9 574.7 765.0 571.6Z" fill="#fd9428"/>
<path d="M783.9 567.0C784.9 564.9 789.2 562.7 791.8 560.6C794.4 558.5 797.9 554.8 799.7 554.5C801.5 554.2 800.9 558.1 802.8 559.1C804.6 560.1 807.8 561.0 810.7 560.6C813.5 560.2 817.3 556.8 819.8 556.8C822.4 556.8 824.1 557.9 826.2 560.6C828.3 563.3 831.3 568.9 832.6 573.1C833.9 577.3 834.9 582.5 834.1 585.9C833.3 589.3 830.1 593.0 827.8 593.5C825.4 594.0 822.7 589.7 819.8 588.9C817.0 588.2 813.8 589.2 810.7 588.9C807.6 588.7 804.4 588.7 801.2 587.4C798.1 586.1 794.4 583.4 791.8 581.0C789.2 578.6 786.7 575.5 785.4 573.1C784.1 570.8 782.8 569.1 783.9 567.0Z" fill="#f85a10"/>
<path d="M810.7 565.5C811.2 563.1 813.4 560.4 815.3 559.1C817.1 557.8 819.7 556.2 821.6 557.6C823.6 558.9 825.6 563.3 827.0 567.0C828.4 570.6 829.7 575.6 830.0 579.5C830.4 583.4 830.4 588.9 829.3 590.5C828.1 592.0 825.2 590.5 823.2 588.9C821.1 587.4 818.6 583.7 816.8 581.0C815.0 578.4 813.2 575.7 812.2 573.1C811.2 570.5 810.2 567.8 810.7 565.5Z" fill="#d41a12"/>
<path d="M709.9 606.8C710.8 600.0 712.5 590.2 715.0 583.8C717.6 577.5 722.2 570.2 725.2 568.5C728.2 566.8 731.2 570.6 732.9 573.6C734.6 576.6 732.4 584.0 735.4 586.4C738.4 588.7 745.6 586.8 750.7 587.7C755.8 588.5 761.6 589.4 766.0 591.5C770.5 593.6 774.5 596.2 777.5 600.4C780.5 604.7 779.8 614.0 783.9 617.0C787.9 620.0 797.9 617.0 801.7 618.3C805.6 619.5 822.1 623.6 806.8 624.6C791.5 625.7 726.1 627.6 709.9 624.6C693.8 621.7 709.1 613.6 709.9 606.8Z" fill="#c6cae9"/>
<path d="M659.9 608.3C662.5 605.3 670.3 606.6 675.5 606.8C680.7 607.0 685.6 609.1 691.3 609.3C697.0 609.5 705.1 605.5 709.9 608.1C714.7 610.6 728.5 621.9 720.1 624.6C711.8 627.4 670.0 627.4 659.9 624.6C649.9 621.9 657.3 611.3 659.9 608.3Z" fill="#c6cae9"/>
<path d="M689.5 617.0C693.8 614.5 708.9 612.0 715.0 609.8C721.1 607.7 723.1 606.1 726.0 604.2C728.9 602.3 729.8 600.4 732.4 598.4C735.0 596.3 737.4 592.8 741.5 592.0C745.7 591.2 752.9 591.9 757.4 593.5C761.8 595.1 765.7 598.0 768.3 601.4C770.9 604.8 772.7 610.1 772.9 613.9C773.2 617.8 783.8 622.8 769.9 624.6C756.0 626.4 702.9 625.9 689.5 624.6C676.1 623.4 685.3 619.4 689.5 617.0Z" fill="#9090c6"/>
<path d="M737.0 601.4C738.3 598.3 742.7 597.3 746.4 596.8C750.0 596.3 755.8 596.5 758.9 598.4C762.0 600.2 764.2 604.7 765.0 607.8C765.8 610.9 766.1 614.9 763.5 617.0C760.9 619.1 753.6 620.6 749.5 620.3C745.3 620.0 740.6 618.6 738.5 615.5C736.4 612.3 735.6 604.5 737.0 601.4Z" fill="#6666aa"/>
<path d="M809.4 617.0C810.7 614.9 813.6 612.8 817.0 612.4C820.4 612.0 825.8 613.2 829.8 614.4C833.8 615.6 839.4 617.8 841.3 619.5C843.2 621.2 846.6 623.8 841.3 624.6C836.0 625.5 814.7 625.9 809.4 624.6C804.1 623.4 808.1 619.0 809.4 617.0Z" fill="#9090c6"/>
<path d="M829.3 497.6C831.3 495.4 839.3 491.3 841.3 494.6C843.3 497.8 842.5 513.2 841.3 517.0C840.0 520.8 835.6 519.0 833.6 517.5C831.6 516.0 830.0 511.1 829.3 507.8C828.6 504.5 827.3 499.8 829.3 497.6Z" fill="#ffffff"/>
<path d="M794.6 539.2C795.3 536.4 798.2 532.0 800.5 530.3C802.7 528.6 806.0 527.3 808.1 529.0C810.2 530.7 812.7 536.8 813.2 540.5C813.8 544.2 813.1 549.1 811.4 551.2C809.7 553.2 805.6 553.4 803.0 552.7C800.5 552.0 797.5 549.1 796.1 546.8C794.7 544.6 793.9 542.0 794.6 539.2Z" fill="#fdc860"/>
<path d="M822.6 541.7C823.7 539.3 826.7 536.9 829.8 535.9C832.9 534.9 839.4 532.1 841.3 535.9C843.2 539.7 843.0 555.3 841.3 558.8C839.6 562.4 834.0 558.4 831.1 557.0C828.1 555.7 825.1 553.2 823.7 550.7C822.3 548.1 821.6 544.2 822.6 541.7Z" fill="#fdc860"/>
<path d="M819.1 531.8C819.1 532.7 818.7 533.8 818.1 534.5C817.5 535.2 816.5 535.9 815.6 536.2C814.6 536.4 813.4 536.4 812.4 536.2C811.5 535.9 810.4 535.2 809.9 534.5C809.3 533.8 808.9 532.7 808.9 531.8C808.9 530.9 809.3 529.8 809.9 529.1C810.4 528.4 811.5 527.7 812.4 527.4C813.4 527.2 814.6 527.2 815.6 527.4C816.5 527.7 817.5 528.4 818.1 529.1C818.7 529.8 819.1 530.9 819.1 531.8Z" fill="#ffffff"/>
</g>
<g filter="url(#bl2)" fill="none" stroke-linejoin="round">
<path d="M640.5 520.2L643.0 522.3L647.3 524.4L654.2 523.3L652.9 525.9L646.7 526.7L645.5 527.5L649.2 531.2L654.2 534.6L657.9 535.4L664.1 533.3L666.0 530.1L667.2 527.5L668.5 530.6L668.5 533.3L669.1 536.9L668.8 543.2L669.7 546.9L671.0 551.6L672.2 555.8L674.7 561.5L676.6 565.7L679.7 571.5L681.5 576.2L684.6 581.4L687.7 585.1L689.6 590.3L691.5 595.1L693.3 598.2L695.8 600.6L698.6 601.5L700.8 600.3L702.7 597.2L707.0 595.6L709.5 595.1L707.3 593.5L709.5 589.8L712.9 589.6L712.9 585.1L712.6 580.9L715.1 576.7L715.7 573.6L714.5 569.4L714.2 565.2L715.7 562.1L719.5 561.0L721.9 558.4L728.2 556.8L728.2 554.7L734.4 551.1L739.3 547.9L744.3 542.7L748.7 540.3L753.0 539.0L756.1 536.9L757.4 533.8L758.0 531.2L762.4 530.1L764.8 529.6L767.3 530.6L770.4 530.1L769.8 527.0L768.9 522.3L767.3 518.1L764.2 515.4L765.5 512.3L769.2 511.3L766.1 508.6L764.8 507.1L767.3 505.2L771.1 507.1L774.8 507.9L775.1 511.3L779.8 512.0L788.5 512.0L791.3 513.4L789.1 516.0L786.0 517.3L783.5 518.6L783.2 521.7L785.7 523.6L787.5 520.7L790.0 519.6L790.3 523.8L791.9 528.5L795.3 527.5L795.9 523.3L797.2 518.6L801.8 518.9L805.2 512.8L804.6 510.2L808.4 507.6L807.7 504.4L814.6 500.8L820.2 501.8L819.2 498.7L821.7 496.1L817.1 494.5L815.2 490.8L810.2 491.4L804.6 490.3L798.4 493.4L792.8 497.1L786.6 498.2L789.1 500.8L788.5 503.1L779.1 503.4L774.8 503.9L769.2 502.9L768.3 501.3L768.9 499.7L769.2 497.6L767.3 496.6L764.2 497.6L763.9 500.8L764.5 505.5L759.2 505.5L751.2 504.4L746.2 503.4L742.5 500.8L738.7 500.0L734.4 500.5L730.6 498.7L725.7 497.6L721.9 496.1L717.6 493.4L714.2 492.7L716.3 488.7L719.5 485.6L720.1 485.3L715.1 483.5L712.6 481.7L708.9 479.8L706.1 478.8L705.8 473.0L710.1 473.0L710.7 469.9L715.1 465.7L716.3 460.5L715.7 457.8L710.7 455.7L703.9 457.3L700.8 455.2L694.0 452.1L687.7 451.0L680.3 449.7L675.3 450.5L670.3 451.5L667.9 454.2L671.0 457.3L671.0 461.0L673.1 463.6L674.1 466.7L676.6 469.9L679.7 472.0L684.6 474.6L680.3 476.7L679.7 480.9L675.9 484.5L672.8 487.2L669.7 491.9L666.0 493.4L663.5 497.6L656.0 498.7L651.7 502.4L652.3 505.0L652.9 509.2L657.3 512.8L658.5 514.9L651.7 517.0L644.2 516.5ZM620.6 511.3L629.9 510.7L633.0 513.9L636.1 518.6L640.5 520.2M620.6 488.7L628.7 487.2L628.7 481.4L638.0 479.3L647.3 476.7L648.6 470.9L651.7 469.4L653.6 466.2L658.5 465.7L661.6 460.5L659.1 455.2L662.3 452.6L667.2 451.0L675.3 450.5M662.3 452.6L661.6 445.3L659.8 444.7M620.6 448.4L629.9 448.1L638.0 449.5L641.1 449.5L647.3 449.2L652.9 446.8L656.7 444.7M675.3 450.5L682.1 448.4L681.5 444.7M720.1 485.3L723.2 484.5L726.9 485.1L732.5 488.7L738.1 490.3L740.0 492.4L745.6 494.0L749.3 495.5L751.2 497.1L756.8 497.1L761.7 497.9L764.2 497.6M768.9 499.7L771.7 497.6L774.8 496.1L778.5 496.6L784.1 497.1L786.6 498.2M770.4 530.1L776.0 529.1L779.8 526.4L783.5 525.9L787.2 527.0L788.5 531.7L790.3 535.4M791.9 528.5L792.2 532.2L790.3 535.4M790.3 535.4L794.7 539.5L799.0 544.3L802.8 549.5L804.0 554.7L802.8 560.0L809.0 561.5L813.3 557.9L818.3 554.7L820.8 556.3L823.9 560.0L824.5 565.2L826.4 570.4L829.5 578.3L829.5 586.2L829.5 591.4L827.6 596.6L827.6 601.9L830.1 600.8L832.6 605.0L836.3 608.2L838.2 609.7M829.5 590.3L832.0 586.2L835.1 582.0L832.6 575.7L827.0 565.2L829.5 560.0L824.5 552.1L823.9 546.9L831.4 540.1L838.2 536.9M821.7 496.1L826.4 499.2L830.1 499.7L830.1 507.6L823.3 513.9L823.9 518.1L830.7 517.5L832.0 522.3L835.1 525.4L838.2 530.1M838.2 573.6L837.6 578.3L833.8 588.8L833.2 593.5L837.6 595.1L838.2 599.3M713.2 592.4L715.7 594.0L721.3 599.3L725.0 604.5L724.4 609.2L720.1 611.8L715.1 612.6L712.9 608.2L712.6 602.4L713.2 597.2L714.2 595.1ZM808.4 614.2L810.8 613.9L816.4 616.3L822.7 616.3L825.8 619.7L827.6 622.8L812.7 622.8L809.6 618.1ZM793.4 573.1L794.7 574.1L794.2 579.9L792.9 583.5L792.3 581.4L792.9 577.8ZM791.6 587.2L792.2 588.8L790.9 588.8Z" stroke="#06100a" stroke-width="1.8" opacity=".95"/>
<path d="M658.5 514.9L667.2 516.0L671.0 516.0L676.6 521.7L678.4 526.4L676.6 530.6L675.3 535.9L672.8 538.0L669.1 538.0M676.6 521.7L682.1 518.6L684.6 513.9L690.2 517.0L694.6 515.4L694.6 511.3L697.7 510.7L702.7 503.4M702.7 503.4L698.3 501.3L697.1 498.2L694.6 498.7L690.2 497.1L687.7 495.0L682.8 490.8L679.7 490.3L675.9 486.9M679.7 489.3L685.3 487.7L690.2 487.2L694.0 484.5L694.6 481.9L690.9 479.3L688.4 476.2L686.5 474.1M686.5 474.1L690.9 470.9L695.2 471.5L700.8 472.5L703.9 473.5L705.8 473.0M698.9 484.5L701.4 481.4L706.4 480.4M694.6 481.9L698.9 484.5L696.4 489.3L696.4 492.9L697.1 495.0L698.3 497.6L697.1 498.2M698.9 484.5L703.3 488.2L707.0 489.8L710.1 492.4L714.2 492.7M702.7 503.4L707.6 504.4L707.0 509.7L703.9 511.3L705.2 515.4L711.4 512.3L716.3 512.8L721.9 512.3L725.7 513.9L728.2 514.9L731.3 518.1M731.3 518.1L734.4 515.4L735.6 512.8L738.7 509.7L742.5 508.6L740.0 505.5L738.1 502.4L738.7 500.0M734.4 515.4L740.6 516.0L749.3 514.9L754.3 515.4L759.2 513.4L762.4 511.8L763.6 505.5M762.4 511.8L760.5 516.5L756.8 519.1L751.2 520.7L751.2 523.3L756.1 527.0L757.4 529.1L760.5 530.4M756.1 527.0L751.2 525.9L745.6 528.0L740.6 526.4L738.7 525.9M738.7 525.9L736.2 522.3L734.4 518.6L731.3 518.1M731.3 518.1L724.4 519.1L723.8 523.8L719.5 527.0L717.0 531.2L716.3 532.2M676.6 530.6L684.0 531.7L690.2 532.7L694.0 530.6L702.7 531.2L710.7 530.6L716.3 532.2M716.3 532.2L717.6 537.4L717.0 542.2L715.7 545.3L713.2 542.2L707.6 541.1L703.3 541.6L700.2 546.4L698.3 547.9M698.3 547.9L694.6 551.1L690.9 553.2L686.5 554.7L682.8 555.3L678.4 557.4L678.4 561.0L674.7 561.5M678.4 561.0L677.8 565.2L676.9 565.7M698.3 547.9L698.3 553.2L697.7 557.9L695.2 561.0L695.8 565.2L694.0 565.7L697.7 569.4L702.7 572.5L703.3 577.3M703.3 577.3L699.6 577.8L697.1 582.0L691.5 583.0L687.1 579.9L682.1 576.7M691.5 583.0L694.0 588.3L696.4 590.3L696.4 594.5L696.4 598.7L695.8 600.3M703.3 577.3L709.5 574.6L713.9 573.1L715.7 573.1M697.7 557.9L703.3 560.0L709.5 557.4L713.9 555.3L716.3 554.7L720.1 550.5L718.8 548.4L715.7 545.3M738.7 525.9L735.6 530.6L735.0 532.2L730.0 536.4L728.8 539.5L726.3 544.3L725.7 546.4L722.6 550.0L720.1 550.5M722.6 550.0L728.8 547.4L733.1 545.3L738.7 544.3L743.7 543.7M788.5 503.1L794.7 502.4L802.1 499.2L810.2 497.6L813.3 500.3M775.1 508.1L782.2 508.1L789.7 508.1L793.4 510.2L791.3 513.4M796.5 508.6L800.9 505.0L808.4 502.4M794.7 514.4L797.2 509.7L804.6 510.2M790.0 517.0L794.7 516.0L797.2 518.6M790.0 517.0L790.0 519.6M774.8 503.9L775.1 507.9M764.5 501.8L768.3 501.3M676.6 469.9L677.8 465.7L676.6 462.0L685.9 462.5L694.0 461.0L700.2 457.8M703.9 473.5L707.0 469.4L706.4 464.6L703.3 462.5L700.2 457.8M694.6 492.9L697.1 492.9L697.1 494.8L694.6 494.5L694.6 492.9" stroke="#06100a" stroke-width="1.6" opacity=".9"/>
<path d="M793.4 573.1L794.7 574.1L794.2 579.9L792.9 583.5L792.3 581.4L792.9 577.8Z" fill="#0a140c" stroke="#0a140c" stroke-width=".3"/>
<path d="M667.9 582.5h1M665.4 585.1h1M668.5 588.3h1M670.3 590.9h1M666.0 590.9h1M799.7 607.1h1M793.4 595.6h1" stroke="#0a1a10" stroke-width="1.2"/>
</g></g>
<g filter="url(#bl2)">
<rect x="620.6" y="445.0" width="217.6" height="177.3" fill="none" stroke="#1c1c1c" stroke-width="1.7"/>
<text x="597.5" y="621.6" class="ax" textLength="15.6" lengthAdjust="spacingAndGlyphs">5N</text>
<text x="591.5" y="595.4" class="ax" textLength="21.6" lengthAdjust="spacingAndGlyphs">10N</text>
<text x="591.5" y="569.2" class="ax" textLength="21.6" lengthAdjust="spacingAndGlyphs">15N</text>
<text x="591.5" y="543.0" class="ax" textLength="21.6" lengthAdjust="spacingAndGlyphs">20N</text>
<text x="591.5" y="516.8" class="ax" textLength="21.6" lengthAdjust="spacingAndGlyphs">25N</text>
<text x="591.5" y="490.6" class="ax" textLength="21.6" lengthAdjust="spacingAndGlyphs">30N</text>
<text x="591.5" y="464.5" class="ax" textLength="21.6" lengthAdjust="spacingAndGlyphs">35N</text>
<text x="641.1" y="634.9" class="ax" textLength="21.2" lengthAdjust="spacingAndGlyphs">70E</text>
<text x="684.6" y="634.9" class="ax" textLength="21.2" lengthAdjust="spacingAndGlyphs">77E</text>
<text x="728.1" y="634.9" class="ax" textLength="21.2" lengthAdjust="spacingAndGlyphs">84E</text>
<text x="771.6" y="634.9" class="ax" textLength="21.2" lengthAdjust="spacingAndGlyphs">91E</text>
<text x="815.2" y="634.9" class="ax" textLength="21.2" lengthAdjust="spacingAndGlyphs">98E</text>
<path d="M620.6 617.6h-3M620.6 591.4h-3M620.6 565.2h-3M620.6 539.0h-3M620.6 512.8h-3M620.6 486.6h-3M620.6 460.5h-3M651.7 622.3v3M695.2 622.3v3M738.7 622.3v3M782.2 622.3v3M825.8 622.3v3" stroke="#222" stroke-width="1.2"/>
</g>
<clipPath id="cm4"><rect x="886.8" y="445.2" width="217.7" height="177.1"/></clipPath>
<g clip-path="url(#cm4)">
<g filter="url(#bl)">
<rect x="883.8" y="442.2" width="223.7" height="183.1" fill="#ffffff"/>
<path d="M1029.5 450.4C1030.5 447.6 1031.6 448.1 1035.9 447.4C1040.1 446.7 1048.5 446.4 1054.7 446.4C1061.0 446.4 1064.6 446.7 1073.3 447.4C1082.1 448.1 1101.6 447.3 1107.3 450.4C1112.9 453.5 1110.8 463.3 1107.3 466.0C1103.7 468.7 1092.0 467.0 1085.8 466.8C1079.7 466.5 1075.5 464.3 1070.3 464.5C1065.1 464.6 1060.0 466.7 1054.7 467.5C1049.5 468.3 1043.1 469.8 1038.9 469.3C1034.7 468.8 1031.1 467.6 1029.5 464.5C1027.9 461.3 1028.4 453.3 1029.5 450.4Z" fill="#c6cae9"/>
<path d="M1047.3 456.8C1049.8 455.5 1056.7 454.4 1062.6 454.3C1068.6 454.1 1076.7 455.0 1083.0 455.8C1089.4 456.6 1097.9 457.6 1100.9 458.9C1103.9 460.1 1103.9 462.8 1100.9 463.4C1097.9 464.0 1089.4 462.6 1083.0 462.4C1076.7 462.3 1068.5 462.5 1062.6 462.4C1056.8 462.3 1050.4 462.8 1047.8 461.9C1045.3 461.0 1044.9 458.1 1047.3 456.8Z" fill="#9090c6"/>
<path d="M1032.8 480.3C1033.8 478.4 1035.3 476.5 1038.9 475.4C1042.6 474.4 1049.5 474.0 1054.7 473.9C1060.0 473.8 1065.1 474.9 1070.3 474.7C1075.5 474.4 1079.7 473.0 1085.8 472.4C1092.0 471.7 1103.7 467.7 1107.3 470.8C1110.8 474.0 1109.8 487.6 1107.3 491.2C1104.8 494.9 1096.8 492.8 1092.2 492.8C1087.6 492.8 1084.4 491.0 1079.7 491.2C1075.0 491.5 1068.6 494.0 1063.9 494.3C1059.2 494.6 1055.6 493.3 1051.4 492.8C1047.2 492.3 1042.0 492.3 1038.9 491.2C1035.8 490.2 1033.8 488.2 1032.8 486.4C1031.8 484.6 1031.8 482.1 1032.8 480.3Z" fill="#fdf0a8"/>
<path d="M991.2 484.4C993.8 484.1 1001.4 486.7 1006.5 488.2C1011.6 489.7 1017.2 492.6 1021.8 493.3C1026.5 493.9 1032.9 491.2 1034.6 492.0C1036.3 492.9 1035.0 497.3 1032.0 498.4C1029.1 499.4 1021.8 499.2 1016.7 498.4C1011.6 497.5 1005.7 494.8 1001.4 493.3C997.2 491.8 992.9 490.9 991.2 489.5C989.5 488.0 988.7 484.6 991.2 484.4Z" fill="#fdf0a8"/>
<path d="M940.0 464.5C941.0 462.4 944.0 459.7 947.9 458.3C951.8 457.0 958.5 456.9 963.4 456.6C968.4 456.3 974.8 455.5 977.4 456.6C980.1 457.6 980.0 460.3 979.2 462.9C978.5 465.6 972.6 470.1 972.9 472.4C973.2 474.7 978.0 475.1 981.0 476.7C984.1 478.3 989.9 480.3 991.2 481.8C992.5 483.3 991.2 485.6 988.7 485.6C986.1 485.6 980.6 482.4 975.9 481.8C971.2 481.2 964.5 482.9 960.4 481.8C956.2 480.7 954.1 477.3 950.9 475.4C947.8 473.6 943.3 472.7 941.5 470.8C939.7 469.0 938.9 466.5 940.0 464.5Z" fill="#fdf0a8"/>
<path d="M969.5 476.2C969.5 477.2 969.0 478.4 968.2 479.2C967.4 480.0 966.1 480.7 964.8 481.0C963.5 481.4 961.8 481.4 960.5 481.0C959.2 480.7 957.9 480.0 957.1 479.2C956.3 478.4 955.8 477.2 955.8 476.2C955.8 475.2 956.3 474.0 957.1 473.2C957.9 472.4 959.2 471.7 960.5 471.3C961.8 471.0 963.5 471.0 964.8 471.3C966.1 471.7 967.4 472.4 968.2 473.2C969.0 474.0 969.5 475.2 969.5 476.2Z" fill="#fdc860"/>
<path d="M1029.5 501.2C1029.5 502.0 1029.1 503.1 1028.4 503.7C1027.8 504.4 1026.6 505.1 1025.6 505.3C1024.6 505.6 1023.2 505.6 1022.1 505.3C1021.1 505.1 1020.0 504.4 1019.3 503.7C1018.7 503.1 1018.3 502.0 1018.3 501.2C1018.3 500.3 1018.7 499.3 1019.3 498.6C1020.0 498.0 1021.1 497.3 1022.1 497.1C1023.2 496.8 1024.6 496.8 1025.6 497.1C1026.6 497.3 1027.8 498.0 1028.4 498.6C1029.1 499.3 1029.5 500.3 1029.5 501.2Z" fill="#fdc860"/>
<path d="M1024.6 501.2C1024.6 501.7 1024.5 502.3 1024.2 502.7C1023.9 503.1 1023.5 503.5 1023.0 503.6C1022.6 503.8 1022.1 503.8 1021.6 503.6C1021.2 503.5 1020.7 503.1 1020.5 502.7C1020.2 502.3 1020.0 501.7 1020.0 501.2C1020.0 500.7 1020.2 500.1 1020.5 499.7C1020.7 499.3 1021.2 498.9 1021.6 498.8C1022.1 498.6 1022.6 498.6 1023.0 498.8C1023.5 498.9 1023.9 499.3 1024.2 499.7C1024.5 500.1 1024.6 500.7 1024.6 501.2Z" fill="#fd9428"/>
<path d="M1056.8 484.9C1056.8 485.5 1056.4 486.3 1055.8 486.8C1055.2 487.3 1054.2 487.8 1053.2 488.0C1052.3 488.2 1051.0 488.2 1050.1 488.0C1049.1 487.8 1048.1 487.3 1047.5 486.8C1047.0 486.3 1046.6 485.5 1046.6 484.9C1046.6 484.2 1047.0 483.4 1047.5 482.9C1048.1 482.4 1049.1 481.9 1050.1 481.7C1051.0 481.5 1052.3 481.5 1053.2 481.7C1054.2 481.9 1055.2 482.4 1055.8 482.9C1056.4 483.4 1056.8 484.2 1056.8 484.9Z" fill="#ffffff"/>
<path d="M922.9 476.7C923.9 474.5 926.9 472.0 930.0 471.1C933.1 470.2 938.9 469.7 941.5 471.1C944.1 472.5 945.6 476.4 945.8 479.3C946.0 482.1 945.2 486.5 942.8 488.2C940.3 489.9 934.5 490.1 931.3 489.5C928.1 488.8 925.0 486.5 923.6 484.4C922.2 482.2 921.8 478.9 922.9 476.7Z" fill="#c6cae9"/>
<path d="M940.5 479.3C940.5 480.0 940.2 480.9 939.8 481.5C939.4 482.1 938.7 482.7 938.0 482.9C937.3 483.1 936.5 483.1 935.8 482.9C935.1 482.7 934.4 482.1 934.0 481.5C933.6 480.9 933.3 480.0 933.3 479.3C933.3 478.5 933.6 477.6 934.0 477.0C934.4 476.4 935.1 475.9 935.8 475.6C936.5 475.4 937.3 475.4 938.0 475.6C938.7 475.9 939.4 476.4 939.8 477.0C940.2 477.6 940.5 478.5 940.5 479.3Z" fill="#9090c6"/>
<path d="M957.6 492.0C957.6 492.9 957.0 494.0 956.2 494.7C955.4 495.4 954.0 496.1 952.6 496.4C951.3 496.7 949.5 496.7 948.2 496.4C946.9 496.1 945.5 495.4 944.6 494.7C943.8 494.0 943.3 492.9 943.3 492.0C943.3 491.1 943.8 490.0 944.6 489.3C945.5 488.6 946.9 487.9 948.2 487.6C949.5 487.4 951.3 487.4 952.6 487.6C954.0 487.9 955.4 488.6 956.2 489.3C957.0 490.0 957.6 491.1 957.6 492.0Z" fill="#c6cae9"/>
<path d="M955.5 492.0C957.4 489.8 962.7 488.2 968.3 487.4C973.8 486.7 982.3 486.7 988.7 487.4C995.0 488.2 1001.0 489.5 1006.5 492.0C1012.0 494.5 1018.9 498.4 1021.8 502.2C1024.8 506.0 1026.1 511.9 1024.4 515.0C1022.7 518.0 1017.2 519.9 1011.6 520.6C1006.1 521.2 997.2 519.5 991.2 518.8C985.3 518.1 980.6 517.7 975.9 516.2C971.2 514.8 966.4 512.4 963.2 509.9C960.0 507.3 958.1 503.9 956.8 500.9C955.5 498.0 953.6 494.3 955.5 492.0Z" fill="#c6cae9"/>
<path d="M961.1 492.5C963.3 490.9 968.8 488.9 973.4 488.7C978.0 488.4 983.6 489.8 988.7 491.0C993.8 492.2 1000.1 493.8 1004.0 496.1C1007.9 498.4 1011.6 501.8 1012.1 504.8C1012.6 507.7 1010.5 512.2 1007.0 513.9C1003.5 515.7 996.4 515.6 991.2 515.5C986.0 515.3 980.3 514.5 975.9 512.9C971.5 511.4 967.6 508.7 965.0 506.3C962.3 503.9 960.7 500.9 960.1 498.6C959.5 496.3 958.9 494.2 961.1 492.5Z" fill="#9090c6"/>
<path d="M975.9 498.4C977.8 496.6 984.4 494.9 988.7 495.1C992.9 495.2 998.7 497.3 1001.4 499.2C1004.2 501.0 1005.7 504.0 1005.2 506.0C1004.8 508.0 1002.1 510.3 998.9 511.1C995.7 512.0 989.7 512.0 986.1 511.1C982.5 510.3 978.9 508.2 977.2 506.0C975.5 503.9 974.0 500.2 975.9 498.4Z" fill="#6666aa"/>
<path d="M944.8 503.7C946.6 502.8 953.5 502.7 955.5 503.7C957.6 504.8 957.9 508.4 957.0 509.9C956.2 511.3 952.5 512.5 950.4 512.4C948.4 512.3 945.7 510.8 944.8 509.4C943.9 507.9 943.0 504.7 944.8 503.7Z" fill="#fdf0a8"/>
<path d="M884.1 503.5C887.5 492.9 898.3 501.7 904.5 501.7C910.7 501.7 914.7 502.4 921.1 503.7C927.5 505.1 937.0 507.6 942.8 509.9C948.5 512.2 951.7 514.5 955.5 517.5C959.3 520.5 961.5 525.2 965.7 527.7C970.0 530.3 976.8 530.3 981.0 532.8C985.3 535.4 990.4 539.2 991.2 543.0C992.1 546.8 987.8 551.5 986.1 555.8C984.4 560.0 982.7 563.8 981.0 568.5C979.3 573.2 978.0 582.1 975.9 583.8C973.8 585.5 970.4 582.1 968.3 578.7C966.1 575.3 966.1 565.9 963.2 563.4C960.2 561.0 954.2 563.5 950.4 563.9C946.6 564.4 944.5 565.8 940.2 566.0C936.0 566.1 930.9 565.0 924.9 564.7C919.0 564.4 911.3 563.8 904.5 563.9C897.7 564.1 887.5 575.5 884.1 565.5C880.7 555.4 880.7 514.1 884.1 503.5Z" fill="#c6cae9"/>
<path d="M884.1 509.9C887.5 500.7 898.1 507.9 904.5 507.8C910.9 507.7 916.8 508.4 922.4 509.4C927.9 510.3 933.0 512.3 937.7 513.7C942.3 515.0 946.2 515.2 950.4 517.5C954.7 519.9 958.1 525.4 963.2 527.7C968.3 530.1 976.8 529.6 981.0 531.5C985.3 533.5 988.7 536.6 988.7 539.2C988.7 541.7 984.8 545.4 981.0 546.8C977.2 548.3 970.0 547.1 965.7 548.1C961.5 549.2 959.1 550.9 955.5 553.2C951.9 555.6 948.3 560.9 944.0 562.1C939.8 563.4 935.7 561.1 930.0 560.9C924.3 560.7 917.3 560.5 909.6 560.9C902.0 561.2 888.4 571.4 884.1 562.9C879.9 554.4 880.7 519.0 884.1 509.9Z" fill="#9090c6"/>
<path d="M884.1 515.0C887.1 507.3 896.0 513.5 902.0 513.4C907.9 513.3 914.3 514.1 919.8 514.5C925.3 514.8 930.9 514.5 935.1 515.5C939.4 516.4 942.3 517.6 945.3 520.1C948.3 522.5 949.1 527.7 953.0 530.3C956.8 532.8 964.0 533.9 968.3 535.4C972.5 536.9 977.6 537.5 978.5 539.2C979.3 540.9 977.2 544.1 973.4 545.6C969.5 547.1 960.1 546.2 955.5 548.1C950.9 550.0 950.1 555.6 945.8 557.0C941.6 558.5 936.0 556.9 930.0 557.0C924.0 557.2 917.3 557.4 909.6 557.8C902.0 558.2 888.4 566.7 884.1 559.6C879.9 552.5 881.1 522.7 884.1 515.0Z" fill="#6666aa"/>
<path d="M884.1 528.7C886.7 523.8 894.7 526.7 899.4 526.7C904.1 526.7 907.9 528.4 912.2 529.0C916.4 529.6 920.9 529.4 924.9 530.3C928.9 531.1 933.4 531.5 936.4 534.1C939.4 536.6 941.9 541.6 942.8 545.6C943.6 549.5 942.5 555.7 941.5 557.8C940.4 559.9 938.7 559.4 936.4 558.3C934.0 557.2 931.5 552.4 927.5 551.2C923.4 550.0 917.3 550.6 912.2 551.2C907.1 551.8 901.5 553.9 896.9 554.8C892.2 555.6 886.2 560.6 884.1 556.3C882.0 551.9 881.6 533.7 884.1 528.7Z" fill="#3e3e8c"/>
<path d="M884.1 537.2C886.4 533.9 892.7 535.1 897.6 534.9C902.5 534.6 908.2 535.2 913.4 535.6C918.7 536.0 925.1 535.8 929.0 537.2C932.9 538.5 935.1 540.4 936.9 543.5C938.7 546.7 940.2 553.4 940.0 556.0C939.7 558.6 936.9 560.1 935.4 559.1C933.8 558.0 932.9 552.2 930.5 549.7C928.1 547.1 923.9 544.8 921.1 543.5C918.2 542.3 916.0 541.5 913.4 542.0C910.8 542.5 908.4 544.8 905.5 546.6C902.6 548.4 899.7 551.6 896.1 553.0C892.5 554.3 886.1 557.1 884.1 554.5C882.1 551.9 881.8 540.4 884.1 537.2Z" fill="#0c0c34"/>
<path d="M948.4 555.8C949.9 552.4 957.5 551.9 960.6 553.2C963.7 554.5 966.1 559.2 967.0 563.4C967.8 567.7 967.2 575.1 965.7 578.7C964.2 582.3 960.4 586.0 958.1 585.1C955.7 584.3 953.3 578.5 951.7 573.6C950.1 568.7 946.9 559.2 948.4 555.8Z" fill="#ffffff"/>
<path d="M969.5 515.5C972.9 513.7 986.3 513.3 991.2 514.5C996.1 515.6 998.2 520.1 998.9 522.6C999.5 525.1 998.0 528.0 995.0 529.2C992.1 530.5 985.1 530.9 981.0 530.3C977.0 529.6 972.7 527.6 970.8 525.2C968.9 522.7 966.1 517.3 969.5 515.5Z" fill="#ffffff"/>
<path d="M975.9 583.8C977.4 577.5 981.0 567.2 986.1 560.9C991.2 554.5 999.7 550.2 1006.5 545.6C1013.3 540.9 1021.8 537.9 1026.9 532.8C1032.0 527.7 1032.9 518.8 1037.1 515.0C1041.4 511.1 1048.2 508.6 1052.4 509.9C1056.7 511.1 1060.9 517.9 1062.6 522.6C1064.3 527.3 1064.0 534.4 1062.6 537.9C1061.3 541.4 1058.7 541.3 1054.7 543.5C1050.8 545.7 1044.1 548.6 1038.9 551.2C1033.7 553.8 1028.6 556.2 1023.4 559.1C1018.1 562.0 1012.0 564.4 1007.5 568.5C1003.0 572.6 999.9 577.9 996.3 583.8C992.8 589.8 989.3 601.7 986.1 604.2C982.9 606.8 978.9 602.5 977.2 599.1C975.5 595.7 974.4 590.2 975.9 583.8Z" fill="#c6cae9"/>
<path d="M981.5 573.6C982.7 569.4 987.1 564.9 991.2 560.9C995.4 556.8 1001.4 553.0 1006.5 549.4C1011.6 545.8 1016.7 542.6 1021.8 539.2C1026.9 535.8 1031.6 531.7 1037.1 529.0C1042.7 526.3 1051.1 522.4 1055.0 523.1C1058.9 523.8 1060.6 530.0 1060.6 533.3C1060.6 536.6 1058.6 540.3 1055.0 543.0C1051.4 545.7 1044.2 547.3 1038.9 549.4C1033.6 551.5 1028.6 553.2 1023.4 555.8C1018.1 558.3 1012.5 560.7 1007.5 564.7C1002.6 568.7 997.7 576.4 993.8 580.0C989.9 583.6 986.1 587.4 984.1 586.4C982.0 585.3 980.3 577.9 981.5 573.6Z" fill="#9090c6"/>
<path d="M992.0 551.4C995.1 548.5 1002.3 546.2 1007.5 543.5C1012.8 540.9 1018.1 537.7 1023.4 535.6C1028.6 533.5 1033.7 532.1 1038.9 531.0C1044.1 530.0 1051.6 528.5 1054.7 529.2C1057.9 530.0 1058.3 533.5 1057.8 535.6C1057.2 537.7 1054.6 540.2 1051.4 542.0C1048.3 543.8 1043.6 545.0 1038.9 546.6C1034.2 548.2 1028.6 549.1 1023.4 551.4C1018.1 553.8 1012.8 558.0 1007.5 560.6C1002.3 563.2 995.1 567.0 992.0 567.0C988.8 567.0 988.7 563.5 988.7 560.9C988.7 558.3 988.8 554.3 992.0 551.4Z" fill="#6666aa"/>
<path d="M1001.4 526.4C1004.4 524.3 1012.9 522.0 1016.7 522.6C1020.6 523.3 1024.2 527.1 1024.4 530.3C1024.6 533.5 1021.2 539.6 1018.0 541.7C1014.8 543.9 1008.4 544.1 1005.2 543.0C1002.1 542.0 999.5 538.1 998.9 535.4C998.2 532.6 998.4 528.6 1001.4 526.4Z" fill="#c6cae9"/>
<path d="M1034.6 498.4C1037.3 496.6 1046.1 496.7 1052.4 495.8C1058.8 495.0 1066.9 493.7 1072.8 493.3C1078.8 492.9 1084.1 491.9 1088.1 493.3C1092.2 494.7 1096.2 498.6 1097.3 501.7C1098.4 504.8 1098.0 510.5 1094.8 511.9C1091.5 513.3 1083.3 511.1 1077.9 510.4C1072.6 509.7 1067.7 508.1 1062.6 507.8C1057.5 507.6 1051.8 509.1 1047.3 508.8C1042.9 508.6 1038.0 508.0 1035.9 506.3C1033.7 504.5 1031.8 500.1 1034.6 498.4Z" fill="#c6cae9"/>
<path d="M1053.7 500.9C1053.7 501.4 1053.0 502.0 1052.0 502.4C1051.0 502.8 1049.2 503.2 1047.5 503.4C1045.9 503.5 1043.7 503.5 1042.0 503.4C1040.4 503.2 1038.6 502.8 1037.6 502.4C1036.5 502.0 1035.9 501.4 1035.9 500.9C1035.9 500.4 1036.5 499.8 1037.6 499.4C1038.6 499.0 1040.4 498.7 1042.0 498.5C1043.7 498.4 1045.9 498.4 1047.5 498.5C1049.2 498.7 1051.0 499.0 1052.0 499.4C1053.0 499.8 1053.7 500.4 1053.7 500.9Z" fill="#ffffff"/>
<path d="M1035.9 507.3C1038.0 505.6 1043.7 505.4 1047.3 506.0C1050.9 506.7 1055.6 508.0 1057.5 511.1C1059.4 514.3 1060.1 522.2 1058.8 525.2C1057.5 528.1 1053.3 529.0 1049.9 529.0C1046.5 529.0 1041.0 527.3 1038.4 525.2C1035.9 523.0 1035.0 519.2 1034.6 516.2C1034.2 513.3 1033.7 509.0 1035.9 507.3Z" fill="#c6cae9"/>
<path d="M1092.7 501.7C1092.7 502.9 1092.0 504.3 1090.9 505.3C1089.8 506.3 1087.8 507.2 1086.0 507.5C1084.2 507.9 1081.8 507.9 1080.0 507.5C1078.2 507.2 1076.3 506.3 1075.2 505.3C1074.1 504.3 1073.3 502.9 1073.3 501.7C1073.3 500.5 1074.1 499.1 1075.2 498.1C1076.3 497.1 1078.2 496.3 1080.0 495.9C1081.8 495.5 1084.2 495.5 1086.0 495.9C1087.8 496.3 1089.8 497.1 1090.9 498.1C1092.0 499.1 1092.7 500.5 1092.7 501.7Z" fill="#9090c6"/>
<path d="M1088.9 502.0C1088.9 502.5 1088.6 503.2 1088.1 503.6C1087.6 504.1 1086.7 504.5 1085.9 504.6C1085.1 504.8 1084.0 504.8 1083.2 504.6C1082.4 504.5 1081.6 504.1 1081.1 503.6C1080.6 503.2 1080.2 502.5 1080.2 502.0C1080.2 501.4 1080.6 500.8 1081.1 500.3C1081.6 499.9 1082.4 499.5 1083.2 499.3C1084.0 499.1 1085.1 499.1 1085.9 499.3C1086.7 499.5 1087.6 499.9 1088.1 500.3C1088.6 500.8 1088.9 501.4 1088.9 502.0Z" fill="#3e3e8c"/>
<path d="M1057.8 512.9C1058.6 510.4 1061.5 507.9 1063.1 507.8C1064.8 507.7 1067.6 509.7 1067.7 512.4C1067.9 515.1 1065.5 522.1 1063.9 523.9C1062.3 525.7 1059.3 525.0 1058.3 523.1C1057.3 521.3 1057.0 515.5 1057.8 512.9Z" fill="#fdc860"/>
<path d="M1057.5 525.7C1058.6 521.4 1063.5 519.7 1067.7 518.0C1072.0 516.3 1078.4 515.6 1083.0 515.5C1087.7 515.4 1091.8 516.7 1095.8 517.5C1099.8 518.3 1105.4 518.8 1107.3 520.1C1109.2 521.3 1108.7 524.2 1107.3 525.2C1105.9 526.1 1102.0 525.3 1098.9 525.7C1095.7 526.1 1091.6 524.7 1088.6 527.7C1085.7 530.7 1082.7 538.8 1081.0 543.5C1079.3 548.3 1080.6 554.2 1078.4 556.3C1076.3 558.4 1071.1 558.4 1068.2 556.3C1065.4 554.2 1063.4 548.6 1061.6 543.5C1059.8 538.4 1056.5 529.9 1057.5 525.7Z" fill="#fdf0a8"/>
<path d="M1079.7 527.7C1081.0 525.9 1086.1 525.8 1090.7 525.7C1095.3 525.5 1104.5 524.6 1107.3 526.7C1110.0 528.8 1109.6 536.4 1107.3 538.4C1104.9 540.5 1097.3 539.2 1093.2 538.9C1089.2 538.6 1085.3 538.5 1083.0 536.6C1080.8 534.8 1078.4 529.5 1079.7 527.7Z" fill="#c6cae9"/>
<path d="M993.8 588.9C995.5 584.7 1001.8 578.1 1006.5 573.6C1011.2 569.2 1017.2 565.8 1021.8 562.1C1026.5 558.5 1030.3 555.1 1034.6 551.9C1038.8 548.8 1043.5 545.4 1047.3 543.0C1051.2 540.7 1053.3 538.6 1057.5 537.9C1061.8 537.3 1068.6 538.6 1072.8 539.2C1077.1 539.8 1077.3 542.0 1083.0 541.7C1088.8 541.5 1103.2 527.5 1107.3 537.9C1111.3 548.3 1109.6 591.9 1107.3 604.2C1104.9 616.6 1099.0 610.5 1093.2 611.9C1087.5 613.2 1078.8 611.5 1072.8 612.4C1066.9 613.2 1062.6 615.6 1057.5 617.0C1052.4 618.4 1048.2 620.8 1042.2 620.8C1036.3 620.8 1027.8 619.3 1021.8 617.0C1015.9 614.6 1010.8 609.8 1006.5 606.8C1002.3 603.8 998.4 602.1 996.3 599.1C994.2 596.2 992.1 593.2 993.8 588.9Z" fill="#fdf0a8"/>
<path d="M1067.7 525.2C1069.6 522.6 1077.5 521.3 1080.5 522.6C1083.5 523.9 1085.2 529.4 1085.6 532.8C1086.0 536.2 1084.7 540.7 1083.0 543.0C1081.3 545.4 1077.7 547.7 1075.4 546.8C1073.0 546.0 1070.3 541.5 1069.0 537.9C1067.7 534.3 1065.8 527.7 1067.7 525.2Z" fill="#ffffff"/>
<path d="M1001.4 585.9C1001.7 582.2 1008.7 579.6 1012.4 576.4C1016.0 573.3 1019.4 570.4 1023.4 567.0C1027.3 563.6 1031.7 559.3 1035.9 556.0C1040.0 552.8 1044.7 549.7 1048.4 547.4C1052.0 545.0 1054.6 541.9 1057.8 542.0C1061.0 542.1 1064.4 546.7 1067.7 548.1C1071.1 549.6 1074.1 550.7 1077.9 550.7C1081.8 550.7 1085.8 547.7 1090.7 548.1C1095.6 548.5 1104.5 544.8 1107.3 553.2C1110.0 561.6 1109.8 589.3 1107.3 598.4C1104.8 607.5 1098.4 606.2 1092.2 607.8C1086.1 609.4 1076.5 607.3 1070.3 607.8C1064.0 608.3 1060.0 609.8 1054.7 610.9C1049.5 611.9 1044.1 614.4 1038.9 613.9C1033.7 613.4 1028.0 610.4 1023.4 607.8C1018.7 605.2 1014.5 602.0 1010.9 598.4C1007.2 594.7 1001.2 589.5 1001.4 585.9Z" fill="#fdc860"/>
<path d="M1012.4 582.6C1013.7 579.9 1019.4 575.2 1023.4 571.6C1027.3 567.9 1031.7 564.0 1035.9 560.6C1040.0 557.2 1044.7 553.8 1048.4 551.2C1052.0 548.6 1054.6 546.3 1057.8 545.1C1060.9 543.8 1065.1 541.2 1067.2 543.5C1069.3 545.9 1068.2 556.7 1070.3 559.1C1072.4 561.4 1076.6 558.9 1079.7 557.6C1082.9 556.2 1086.6 550.7 1089.2 551.2C1091.8 551.7 1093.5 555.9 1095.3 560.6C1097.1 565.3 1099.6 574.0 1100.1 579.5C1100.7 585.0 1099.9 589.9 1098.6 593.5C1097.3 597.2 1095.4 599.9 1092.2 601.4C1089.1 603.0 1083.9 603.0 1079.7 603.0C1075.6 603.0 1071.9 601.4 1067.2 601.4C1062.5 601.4 1056.1 603.0 1051.4 603.0C1046.7 603.0 1043.1 603.0 1038.9 601.4C1034.7 599.9 1030.3 595.9 1026.4 593.5C1022.5 591.2 1017.8 589.2 1015.5 587.4C1013.1 585.6 1011.1 585.2 1012.4 582.6Z" fill="#fd9428"/>
<path d="M1042.2 571.6C1042.7 569.2 1045.8 566.8 1048.4 563.9C1050.9 561.1 1055.5 557.1 1057.8 554.5C1060.1 551.9 1060.8 549.2 1062.4 548.1C1064.0 547.1 1065.9 546.0 1067.2 548.1C1068.5 550.2 1068.2 558.8 1070.3 560.6C1072.4 562.4 1076.8 560.4 1079.7 559.1C1082.6 557.8 1085.3 552.5 1087.6 553.0C1090.0 553.5 1091.9 557.7 1093.8 562.1C1095.6 566.6 1098.3 575.0 1098.6 579.5C1098.9 584.0 1097.4 587.9 1095.3 588.9C1093.2 590.0 1088.9 587.2 1085.8 585.9C1082.7 584.5 1079.8 581.3 1076.7 581.0C1073.6 580.7 1070.9 583.8 1067.2 584.1C1063.6 584.3 1058.4 583.6 1054.7 582.6C1051.1 581.5 1047.4 579.8 1045.3 578.0C1043.2 576.1 1041.7 573.9 1042.2 571.6Z" fill="#f85a10"/>
<path d="M1059.3 560.6C1059.4 557.7 1061.1 551.5 1062.4 549.7C1063.7 547.8 1066.0 547.8 1067.2 549.7C1068.4 551.5 1069.5 557.7 1069.5 560.6C1069.5 563.5 1068.5 565.9 1067.2 567.0C1065.9 568.1 1062.9 568.1 1061.6 567.0C1060.3 565.9 1059.2 563.5 1059.3 560.6Z" fill="#d41a12"/>
<path d="M1076.7 565.5C1076.7 562.8 1081.0 560.9 1082.8 559.1C1084.6 557.3 1086.1 553.7 1087.6 554.5C1089.2 555.3 1090.8 560.0 1092.2 563.9C1093.6 567.8 1095.5 574.0 1096.0 578.0C1096.6 581.9 1096.4 586.6 1095.3 587.4C1094.1 588.2 1091.2 584.6 1089.2 582.6C1087.1 580.5 1084.9 577.7 1082.8 574.9C1080.7 572.1 1076.7 568.1 1076.7 565.5Z" fill="#d41a12"/>
<path d="M884.1 564.4C887.5 554.4 896.9 564.4 904.5 564.4C912.2 564.5 923.6 564.5 930.0 565.0C936.4 565.4 939.6 565.8 942.8 567.2C946.0 568.7 947.0 570.4 949.1 573.6C951.3 576.8 953.2 582.1 955.5 586.4C957.9 590.6 959.8 595.3 963.2 599.1C966.6 603.0 971.2 606.4 975.9 609.3C980.6 612.3 987.8 614.4 991.2 617.0C994.6 619.5 1014.2 623.4 996.3 624.6C978.5 625.9 902.8 634.7 884.1 624.6C865.4 614.6 880.7 574.5 884.1 564.4Z" fill="#fdf0a8"/>
<path d="M894.3 568.5C895.3 565.7 900.8 567.5 905.5 567.0C910.2 566.5 916.9 565.2 922.6 565.5C928.4 565.7 936.3 567.5 940.0 568.5C943.6 569.5 942.5 568.7 944.5 571.6C946.6 574.5 949.8 581.4 952.5 585.9C955.1 590.3 957.5 594.7 960.4 598.4C963.3 602.0 966.1 605.2 969.8 607.8C973.5 610.4 980.0 611.1 982.3 613.9C984.6 616.7 996.8 622.8 983.8 624.6C970.9 626.4 918.8 628.0 904.5 624.6C890.2 621.2 899.0 611.0 898.1 604.2C897.3 597.4 900.0 589.8 899.4 583.8C898.8 577.9 893.3 571.3 894.3 568.5Z" fill="#fdc860"/>
<path d="M924.4 604.5C924.4 602.1 926.9 598.7 929.0 595.0C931.1 591.4 934.6 586.2 936.9 582.6C939.2 578.9 941.2 574.1 943.0 573.1C944.8 572.1 945.8 573.0 947.9 576.4C949.9 579.8 952.9 588.8 955.5 593.5C958.1 598.2 960.0 601.3 963.4 604.5C966.8 607.6 972.8 610.6 975.9 612.4C979.1 614.2 982.3 614.1 982.3 615.5C982.3 616.8 979.1 620.0 975.9 620.3C972.8 620.6 967.6 618.0 963.4 617.0C959.3 615.9 955.1 614.7 950.9 613.9C946.8 613.2 942.1 613.2 938.4 612.4C934.8 611.6 931.3 610.6 929.0 609.3C926.7 608.0 924.4 606.9 924.4 604.5Z" fill="#fd9428"/>
<path d="M944.8 574.9C945.0 573.8 946.6 574.5 948.4 577.5C950.2 580.4 954.7 590.0 955.5 592.8C956.3 595.5 954.3 595.5 953.0 594.0C951.6 592.5 948.7 587.0 947.4 583.8C946.0 580.6 944.6 576.0 944.8 574.9Z" fill="#f85a10"/>
<path d="M995.0 582.6C995.7 580.6 999.0 578.5 1000.9 578.7C1002.8 578.9 1006.0 581.7 1006.5 583.8C1007.0 586.0 1005.6 590.4 1004.0 591.5C1002.4 592.5 998.3 591.7 996.8 590.2C995.3 588.7 994.4 584.5 995.0 582.6Z" fill="#fdf0a8"/>
<path d="M1043.8 624.6C1035.5 622.6 1052.9 614.9 1057.8 612.4C1062.7 609.8 1068.7 610.1 1073.3 609.3C1078.0 608.6 1080.2 608.7 1085.8 607.8C1091.5 607.0 1103.7 601.4 1107.3 604.2C1110.8 607.0 1117.9 621.2 1107.3 624.6C1096.7 628.0 1052.0 626.7 1043.8 624.6Z" fill="#c6cae9"/>
<path d="M1072.8 617.0C1074.5 615.1 1079.2 613.5 1083.0 613.2C1086.9 612.8 1093.2 613.0 1095.8 614.9C1098.3 616.9 1102.2 623.0 1098.3 624.6C1094.5 626.2 1077.1 625.9 1072.8 624.6C1068.6 623.4 1071.1 618.9 1072.8 617.0Z" fill="#9090c6"/>
</g>
<g filter="url(#bl2)" fill="none" stroke-linejoin="round">
<path d="M906.7 520.3L909.2 522.4L913.5 524.5L920.4 523.4L919.1 526.0L912.9 526.8L911.7 527.6L915.4 531.3L920.4 534.7L924.1 535.5L930.3 533.4L932.2 530.2L933.4 527.6L934.7 530.7L934.7 533.4L935.3 537.0L935.0 543.3L935.9 547.0L937.2 551.7L938.4 555.9L940.9 561.6L942.8 565.8L945.9 571.6L947.8 576.3L950.9 581.5L954.0 585.2L955.8 590.4L957.7 595.1L959.6 598.2L962.1 600.6L964.9 601.5L967.0 600.3L968.9 597.2L973.3 595.6L975.7 595.1L973.6 593.5L975.7 589.9L979.2 589.6L979.2 585.2L978.9 581.0L981.3 576.8L982.0 573.6L980.7 569.5L980.4 565.3L982.0 562.1L985.7 561.1L988.2 558.5L994.4 556.9L994.4 554.8L1000.6 551.1L1005.6 548.0L1010.6 542.8L1014.9 540.4L1019.3 539.1L1022.4 537.0L1023.6 533.9L1024.3 531.3L1028.6 530.2L1031.1 529.7L1033.6 530.7L1036.7 530.2L1036.1 527.1L1035.1 522.4L1033.6 518.2L1030.5 515.6L1031.7 512.4L1035.5 511.4L1032.3 508.8L1031.1 507.2L1033.6 505.4L1037.3 507.2L1041.1 508.0L1041.4 511.4L1046.0 512.2L1054.7 512.2L1057.5 513.5L1055.4 516.1L1052.3 517.4L1049.8 518.7L1049.5 521.8L1051.9 523.7L1053.8 520.8L1056.3 519.8L1056.6 523.9L1058.2 528.6L1061.6 527.6L1062.2 523.4L1063.4 518.7L1068.1 519.0L1071.5 513.0L1070.9 510.3L1074.6 507.7L1074.0 504.6L1080.9 500.9L1086.5 502.0L1085.5 498.8L1088.0 496.2L1083.4 494.6L1081.5 491.0L1076.5 491.5L1070.9 490.5L1064.7 493.6L1059.1 497.3L1052.9 498.3L1055.4 500.9L1054.7 503.3L1045.4 503.5L1041.1 504.1L1035.5 503.0L1034.5 501.4L1035.1 499.9L1035.5 497.8L1033.6 496.7L1030.5 497.8L1030.2 500.9L1030.8 505.6L1025.5 505.6L1017.4 504.6L1012.4 503.5L1008.7 500.9L1005.0 500.1L1000.6 500.7L996.9 498.8L991.9 497.8L988.2 496.2L983.8 493.6L980.4 492.8L982.6 488.9L985.7 485.7L986.3 485.5L981.3 483.7L978.9 481.8L975.1 480.0L972.3 478.9L972.0 473.2L976.4 473.2L977.0 470.1L981.3 465.9L982.6 460.6L982.0 458.0L977.0 455.9L970.1 457.5L967.0 455.4L960.2 452.3L954.0 451.2L946.5 449.9L941.5 450.7L936.6 451.7L934.1 454.4L937.2 457.5L937.2 461.2L939.4 463.8L940.3 466.9L942.8 470.1L945.9 472.1L950.9 474.8L946.5 476.9L945.9 481.0L942.2 484.7L939.0 487.3L935.9 492.0L932.2 493.6L929.7 497.8L922.3 498.8L917.9 502.5L918.5 505.1L919.1 509.3L923.5 513.0L924.7 515.0L917.9 517.1L910.4 516.6ZM886.8 511.4L896.1 510.9L899.2 514.0L902.3 518.7L906.7 520.3M886.8 488.9L894.9 487.3L894.9 481.6L904.2 479.5L913.5 476.9L914.8 471.1L917.9 469.5L919.8 466.4L924.7 465.9L927.9 460.6L925.4 455.4L928.5 452.8L933.4 451.2L941.5 450.7M928.5 452.8L927.9 445.5L926.0 444.9M886.8 448.6L896.1 448.3L904.2 449.6L907.3 449.6L913.5 449.4L919.1 447.0L922.9 444.9M941.5 450.7L948.4 448.6L947.8 444.9M986.3 485.5L989.4 484.7L993.2 485.2L998.8 488.9L1004.4 490.5L1006.2 492.5L1011.8 494.1L1015.6 495.7L1017.4 497.3L1023.0 497.3L1028.0 498.0L1030.5 497.8M1035.1 499.9L1037.9 497.8L1041.1 496.2L1044.8 496.7L1050.4 497.3L1052.9 498.3M1036.7 530.2L1042.3 529.2L1046.0 526.6L1049.8 526.0L1053.5 527.1L1054.7 531.8L1056.6 535.5M1058.2 528.6L1058.5 532.3L1056.6 535.5M1056.6 535.5L1061.0 539.6L1065.3 544.3L1069.0 549.6L1070.3 554.8L1069.0 560.0L1075.3 561.6L1079.6 557.9L1084.6 554.8L1087.1 556.4L1090.2 560.0L1090.8 565.3L1092.7 570.5L1095.8 578.4L1095.8 586.2L1095.8 591.4L1093.9 596.7L1093.9 601.9L1096.4 600.8L1098.9 605.0L1102.6 608.2L1104.5 609.7M1095.8 590.4L1098.3 586.2L1101.4 582.0L1098.9 575.7L1093.3 565.3L1095.8 560.0L1090.8 552.2L1090.2 547.0L1097.7 540.2L1104.5 537.0M1088.0 496.2L1092.7 499.4L1096.4 499.9L1096.4 507.7L1089.6 514.0L1090.2 518.2L1097.0 517.7L1098.3 522.4L1101.4 525.5L1104.5 530.2M1104.5 573.6L1103.9 578.4L1100.1 588.8L1099.5 593.5L1103.9 595.1L1104.5 599.3M979.5 592.5L982.0 594.0L987.6 599.3L991.3 604.5L990.7 609.2L986.3 611.8L981.3 612.6L979.2 608.2L978.9 602.4L979.5 597.2L980.4 595.1ZM1074.6 614.2L1077.1 613.9L1082.7 616.3L1089.0 616.3L1092.1 619.7L1093.9 622.8L1079.0 622.8L1075.9 618.1ZM1059.7 573.1L1061.0 574.2L1060.5 579.9L1059.2 583.6L1058.6 581.5L1059.2 577.8ZM1057.8 587.2L1058.5 588.8L1057.2 588.8Z" stroke="#06100a" stroke-width="1.8" opacity=".95"/>
<path d="M924.7 515.0L933.4 516.1L937.2 516.1L942.8 521.8L944.6 526.6L942.8 530.7L941.5 536.0L939.0 538.1L935.3 538.1M942.8 521.8L948.4 518.7L950.9 514.0L956.5 517.1L960.8 515.6L960.8 511.4L963.9 510.9L968.9 503.5M968.9 503.5L964.5 501.4L963.3 498.3L960.8 498.8L956.5 497.3L954.0 495.2L949.0 491.0L945.9 490.5L942.2 487.1M945.9 489.4L951.5 487.8L956.5 487.3L960.2 484.7L960.8 482.1L957.1 479.5L954.6 476.3L952.7 474.2M952.7 474.2L957.1 471.1L961.4 471.6L967.0 472.7L970.1 473.7L972.0 473.2M965.2 484.7L967.7 481.6L972.6 480.5M960.8 482.1L965.2 484.7L962.7 489.4L962.7 493.1L963.3 495.2L964.5 497.8L963.3 498.3M965.2 484.7L969.5 488.4L973.3 489.9L976.4 492.5L980.4 492.8M968.9 503.5L973.9 504.6L973.3 509.8L970.1 511.4L971.4 515.6L977.6 512.4L982.6 513.0L988.2 512.4L991.9 514.0L994.4 515.0L997.5 518.2M997.5 518.2L1000.6 515.6L1001.9 513.0L1005.0 509.8L1008.7 508.8L1006.2 505.6L1004.4 502.5L1005.0 500.1M1000.6 515.6L1006.8 516.1L1015.6 515.0L1020.5 515.6L1025.5 513.5L1028.6 511.9L1029.9 505.6M1028.6 511.9L1026.8 516.6L1023.0 519.2L1017.4 520.8L1017.4 523.4L1022.4 527.1L1023.6 529.2L1026.8 530.5M1022.4 527.1L1017.4 526.0L1011.8 528.1L1006.8 526.6L1005.0 526.0M1005.0 526.0L1002.5 522.4L1000.6 518.7L997.5 518.2M997.5 518.2L990.7 519.2L990.1 523.9L985.7 527.1L983.2 531.3L982.6 532.3M942.8 530.7L950.2 531.8L956.5 532.8L960.2 530.7L968.9 531.3L977.0 530.7L982.6 532.3M982.6 532.3L983.8 537.5L983.2 542.3L982.0 545.4L979.5 542.3L973.9 541.2L969.5 541.7L966.4 546.4L964.5 548.0M964.5 548.0L960.8 551.1L957.1 553.2L952.7 554.8L949.0 555.3L944.6 557.4L944.6 561.1L940.9 561.6M944.6 561.1L944.0 565.3L943.1 565.8M964.5 548.0L964.5 553.2L963.9 557.9L961.4 561.1L962.1 565.3L960.2 565.8L963.9 569.5L968.9 572.6L969.5 577.3M969.5 577.3L965.8 577.8L963.3 582.0L957.7 583.1L953.4 579.9L948.4 576.8M957.7 583.1L960.2 588.3L962.7 590.4L962.7 594.6L962.7 598.8L962.1 600.3M969.5 577.3L975.7 574.7L980.1 573.1L982.0 573.1M963.9 557.9L969.5 560.0L975.7 557.4L980.1 555.3L982.6 554.8L986.3 550.6L985.1 548.5L982.0 545.4M1005.0 526.0L1001.9 530.7L1001.2 532.3L996.3 536.5L995.0 539.6L992.5 544.3L991.9 546.4L988.8 550.1L986.3 550.6M988.8 550.1L995.0 547.5L999.4 545.4L1005.0 544.3L1010.0 543.8M1054.7 503.3L1061.0 502.5L1068.4 499.4L1076.5 497.8L1079.6 500.4M1041.4 508.2L1048.5 508.2L1056.0 508.2L1059.7 510.3L1057.5 513.5M1062.8 508.8L1067.2 505.1L1074.6 502.5M1061.0 514.5L1063.4 509.8L1070.9 510.3M1056.3 517.1L1061.0 516.1L1063.4 518.7M1056.3 517.1L1056.3 519.8M1041.1 504.1L1041.4 508.0M1030.8 502.0L1034.5 501.4M942.8 470.1L944.0 465.9L942.8 462.2L952.1 462.7L960.2 461.2L966.4 458.0M970.1 473.7L973.3 469.5L972.6 464.8L969.5 462.7L966.4 458.0M960.8 493.1L963.3 493.1L963.3 494.9L960.8 494.6L960.8 493.1" stroke="#06100a" stroke-width="1.6" opacity=".9"/>
<path d="M1059.7 573.1L1061.0 574.2L1060.5 579.9L1059.2 583.6L1058.6 581.5L1059.2 577.8Z" fill="#0a140c" stroke="#0a140c" stroke-width=".3"/>
<path d="M934.1 582.5h1M931.6 585.2h1M934.7 588.3h1M936.6 590.9h1M932.2 590.9h1M1065.9 607.1h1M1059.7 595.6h1" stroke="#0a1a10" stroke-width="1.2"/>
</g></g>
<g filter="url(#bl2)">
<rect x="886.8" y="445.2" width="217.7" height="177.1" fill="none" stroke="#1c1c1c" stroke-width="1.7"/>
<text x="863.7" y="621.6" class="ax" textLength="15.6" lengthAdjust="spacingAndGlyphs">5N</text>
<text x="857.7" y="595.4" class="ax" textLength="21.6" lengthAdjust="spacingAndGlyphs">10N</text>
<text x="857.7" y="569.3" class="ax" textLength="21.6" lengthAdjust="spacingAndGlyphs">15N</text>
<text x="857.7" y="543.1" class="ax" textLength="21.6" lengthAdjust="spacingAndGlyphs">20N</text>
<text x="857.7" y="517.0" class="ax" textLength="21.6" lengthAdjust="spacingAndGlyphs">25N</text>
<text x="857.7" y="490.8" class="ax" textLength="21.6" lengthAdjust="spacingAndGlyphs">30N</text>
<text x="857.7" y="464.6" class="ax" textLength="21.6" lengthAdjust="spacingAndGlyphs">35N</text>
<text x="907.3" y="634.9" class="ax" textLength="21.2" lengthAdjust="spacingAndGlyphs">70E</text>
<text x="950.8" y="634.9" class="ax" textLength="21.2" lengthAdjust="spacingAndGlyphs">77E</text>
<text x="994.4" y="634.9" class="ax" textLength="21.2" lengthAdjust="spacingAndGlyphs">84E</text>
<text x="1037.9" y="634.9" class="ax" textLength="21.2" lengthAdjust="spacingAndGlyphs">91E</text>
<text x="1081.5" y="634.9" class="ax" textLength="21.2" lengthAdjust="spacingAndGlyphs">98E</text>
<path d="M886.8 617.6h-3M886.8 591.4h-3M886.8 565.3h-3M886.8 539.1h-3M886.8 513.0h-3M886.8 486.8h-3M886.8 460.6h-3M917.9 622.3v3M961.4 622.3v3M1005.0 622.3v3M1048.5 622.3v3M1092.1 622.3v3" stroke="#222" stroke-width="1.2"/>
</g>
<!-- colorbar 1 -->
<g filter="url(#bl2)">
<path d="M746.4 361.7H994V374.3H746.4Z" fill="#fff"/>
<path d="M685 368L746.4 361.7V374.3Z" fill="#fff" stroke="#555" stroke-width=".8"/>
<rect x="746.4" y="361.7" width="62.2" height="12.6" fill="#7ff6a6"/>
<rect x="808.6" y="361.7" width="62.1" height="12.6" fill="#12e86e"/>
<rect x="870.7" y="361.7" width="61.5" height="12.6" fill="#07c03e"/>
<rect x="932.2" y="361.7" width="61.8" height="12.6" fill="#04962a"/>
<path d="M994 361.7L1052 368L994 374.3Z" fill="#037a26"/>
<path d="M746.4 361.7H994V374.3H746.4ZM808.6 361.7V374.3M870.7 361.7V374.3M932.2 361.7V374.3" fill="none" stroke="#1a4a2a" stroke-width=".9"/>
<g class="cb" font-size="16.4" fill="#777">
<text x="743" y="390.6">1</text><text x="803.3" y="390.6" textLength="12" lengthAdjust="spacingAndGlyphs">3</text><text x="865" y="390.6" textLength="12" lengthAdjust="spacingAndGlyphs">5</text><text x="927" y="390.6" textLength="12" lengthAdjust="spacingAndGlyphs">7</text><text x="982.5" y="390.6" textLength="24" lengthAdjust="spacingAndGlyphs">10</text>
</g>
<path d="M692 355.5h9M704 355.5h12M746 355.5h10M759 355.5h12M797 355.5h10M810 355.5h12M850 355.5h10M863 355.5h12M966 355.5h10M978 355.5h12M1016 355.5h10M1030 355.5h10M1068 355.5h3" stroke="#555" stroke-width="1.2"/>
<rect x="670" y="398" width="403" height="1" fill="#888"/>
</g>
<!-- colorbar 2 -->
<g filter="url(#bl2)">
<path d="M608 656.5L654.2 649.4V663.7Z" fill="#d41212"/>
<rect x="654.2" y="649.4" width="44.7" height="14.3" fill="#fa5208"/>
<rect x="698.9" y="649.4" width="45.1" height="14.3" fill="#fd9222"/>
<rect x="744" y="649.4" width="44.8" height="14.3" fill="#fdc85a"/>
<rect x="788.8" y="649.4" width="45.2" height="14.3" fill="#fdf0a2"/>
<rect x="834" y="649.4" width="44.6" height="14.3" fill="#fff"/>
<rect x="878.6" y="649.4" width="44.6" height="14.3" fill="#c4c8e8"/>
<rect x="923.2" y="649.4" width="45.1" height="14.3" fill="#8c8cc4"/>
<rect x="968.3" y="649.4" width="44.8" height="14.3" fill="#6464a8"/>
<rect x="1013.1" y="649.4" width="45.5" height="14.3" fill="#3c3c8c"/>
<path d="M1058.6 649.4L1104 656.5L1058.6 663.7Z" fill="#0a0a30"/>
<path d="M654.2 649.4H1058.6V663.7H654.2ZM698.9 649.4V663.7M744 649.4V663.7M788.8 649.4V663.7M834 649.4V663.7M878.6 649.4V663.7M923.2 649.4V663.7M968.3 649.4V663.7M1013.1 649.4V663.7" fill="none" stroke="#222" stroke-width=".9"/>
<g class="cb" font-size="18.6" fill="#484848">
<text x="635.8" y="683.4" textLength="38.2" lengthAdjust="spacingAndGlyphs">−10</text><text x="687.4" y="683.4" textLength="24.3" lengthAdjust="spacingAndGlyphs">−5</text><text x="732.0" y="683.4" textLength="22.4" lengthAdjust="spacingAndGlyphs">−1</text><text x="766.6" y="683.4" textLength="44.7" lengthAdjust="spacingAndGlyphs">−0.5</text><text x="813.3" y="683.4" textLength="39.4" lengthAdjust="spacingAndGlyphs">−0.1</text><text x="864.0" y="683.4" textLength="27.0" lengthAdjust="spacingAndGlyphs">0.1</text><text x="909.6" y="683.4" textLength="28.4" lengthAdjust="spacingAndGlyphs">0.5</text><text x="963" y="683.4">1</text><text x="1008.0" y="683.4" textLength="11.0" lengthAdjust="spacingAndGlyphs">5</text><text x="1048.0" y="683.4" textLength="21.5" lengthAdjust="spacingAndGlyphs">10</text>
</g>
</g>
</g><!--ENDCONTENT-->
</svg>
<div id="side">
<svg style="position:absolute;left:0;top:0" width="276" height="701" viewBox="0 48 276 701">
<clipPath id="ci9"><path d="M100.3 78.9L101.3 79.9L103.2 81.0L106.0 80.5L105.5 81.8L102.9 82.2L102.4 82.6L103.9 84.4L106.0 86.2L107.6 86.6L110.2 85.5L111.0 83.9L111.5 82.6L112.0 84.2L112.0 85.5L112.3 87.4L112.1 90.5L112.5 92.4L113.0 94.8L113.6 96.9L114.6 99.8L115.4 101.9L116.7 104.8L117.5 107.2L118.8 109.9L120.1 111.7L120.8 114.4L121.6 116.8L122.4 118.4L123.4 119.5L124.6 120.0L125.5 119.4L126.3 117.8L128.1 117.0L129.2 116.8L128.2 116.0L129.2 114.1L130.6 114.0L130.6 111.7L130.5 109.6L131.5 107.5L131.8 105.9L131.2 103.8L131.1 101.7L131.8 100.1L133.3 99.5L134.4 98.2L137.0 97.4L137.0 96.4L139.6 94.5L141.6 92.9L143.7 90.3L145.5 89.1L147.4 88.4L148.7 87.4L149.2 85.8L149.4 84.4L151.3 83.9L152.3 83.6L153.3 84.2L154.6 83.9L154.4 82.3L154.0 79.9L153.3 77.8L152.0 76.5L152.6 74.9L154.1 74.4L152.8 73.0L152.3 72.2L153.3 71.3L154.9 72.2L156.5 72.6L156.6 74.4L158.5 74.8L162.2 74.8L163.3 75.4L162.4 76.8L161.1 77.4L160.1 78.1L160.0 79.7L161.0 80.6L161.8 79.1L162.8 78.6L163.0 80.7L163.6 83.1L165.0 82.6L165.3 80.5L165.8 78.1L167.8 78.2L169.2 75.2L168.9 73.8L170.5 72.5L170.2 70.9L173.1 69.1L175.4 69.6L175.1 68.0L176.1 66.7L174.1 65.9L173.4 64.0L171.3 64.3L168.9 63.8L166.3 65.4L164.0 67.2L161.4 67.7L162.4 69.1L162.2 70.3L158.3 70.4L156.5 70.7L154.1 70.1L153.7 69.3L154.0 68.5L154.1 67.5L153.3 66.9L152.0 67.5L151.9 69.1L152.2 71.5L150.0 71.5L146.6 70.9L144.5 70.4L142.9 69.1L141.4 68.7L139.6 68.9L138.0 68.0L135.9 67.5L134.4 66.7L132.5 65.4L131.1 65.0L132.0 63.0L133.3 61.4L133.6 61.2L131.5 60.3L130.5 59.4L128.9 58.5L127.7 57.9L127.6 55.0L129.4 55.0L129.7 53.4L131.5 51.3L132.0 48.7L131.8 47.3L129.7 46.3L126.8 47.1L125.5 46.0L122.7 44.4L120.1 43.9L116.9 43.2L114.9 43.6L112.8 44.2L111.7 45.5L113.0 47.1L113.0 48.9L114.0 50.3L114.3 51.8L115.4 53.4L116.7 54.5L118.8 55.8L116.9 56.9L116.7 59.0L115.1 60.9L113.8 62.2L112.5 64.6L111.0 65.4L109.9 67.5L106.8 68.0L105.0 69.9L105.2 71.2L105.5 73.3L107.3 75.2L107.8 76.2L105.0 77.3L101.9 77.0Z"/></clipPath>
<g opacity=".53"><rect x="81" y="17.0" width="108" height="140" fill="#fff"/>
<g clip-path="url(#ci9)"><rect x="81" y="17.0" width="108" height="140" fill="#f2f000"/>
<path d="M99.8 76.5L112.8 75.7L116.7 71.2L120.6 67.2L124.5 68.5L125.8 75.2L123.2 80.5L128.4 83.1L132.3 85.8L132.3 91.1L128.4 96.4L125.8 100.3L127.1 105.6L123.2 108.3L118.0 109.6L115.4 107.0L111.5 91.1L111.5 85.8L102.4 88.4L98.5 83.1Z" fill="#e2621a"/>
<path d="M102.4 76.5L114.1 75.7L119.3 69.9L116.7 61.9L111.5 63.2L105.0 67.2L103.7 71.2Z" fill="#52c24e"/>
<path d="M140.9 68.3L152.6 70.9L151.3 76.5L144.0 78.3L140.1 76.5Z" fill="#52c24e"/>
<path d="M147.1 77.0L154.1 76.5L154.9 85.0L149.2 85.0L146.6 81.8Z" fill="#e2621a"/>
<path d="M151.8 66.2L177.3 62.7L177.3 69.9L170.0 72.5L164.8 73.6L163.5 75.7L156.2 75.2L155.7 72.5L151.8 72.5Z" fill="#2a86e0"/>
<path d="M159.6 77.0L164.3 75.2L166.1 73.0L170.8 72.2L169.5 77.8L166.1 83.1L163.0 83.6L159.6 81.0Z" fill="#e2621a"/>
<path d="M118.0 87.1L123.2 85.2L126.6 88.4L124.5 93.7L119.3 93.2Z" fill="#52c24e"/>
<path d="M120.6 85.0L125.3 85.2L125.3 88.9L121.1 89.5Z" fill="#f2f000"/>
<path d="M122.4 100.1L129.2 100.1L129.7 106.4L123.7 107.2Z" fill="#2a86e0"/>
<path d="M119.3 107.2L132.5 105.9L132.5 120.7L119.3 120.7Z" fill="#52c24e"/>
<path d="M116.7 107.5L119.5 108.3L123.7 119.4L122.1 120.5Z" fill="#f2f000"/>
<path d="M107.8 76.2L111.5 76.8L113.0 76.8L115.4 79.7L116.2 82.1L115.4 84.2L114.9 86.8L113.8 87.9L112.3 87.9M115.4 79.7L117.7 78.1L118.8 75.7L121.1 77.3L122.9 76.5L122.9 74.4L124.2 74.1L126.3 70.4M126.3 70.4L124.5 69.3L124.0 67.7L122.9 68.0L121.1 67.2L120.1 66.2L118.0 64.0L116.7 63.8L115.1 62.0M116.7 63.2L119.0 62.4L121.1 62.2L122.7 60.9L122.9 59.5L121.4 58.2L120.3 56.6L119.5 55.6M119.5 55.6L121.4 54.0L123.2 54.2L125.5 54.8L126.8 55.3L127.6 55.0M124.7 60.9L125.8 59.3L127.9 58.7M122.9 59.5L124.7 60.9L123.7 63.2L123.7 65.1L124.0 66.2L124.5 67.5L124.0 67.7M124.7 60.9L126.6 62.7L128.1 63.5L129.4 64.8L131.1 65.0M126.3 70.4L128.4 70.9L128.1 73.6L126.8 74.4L127.3 76.5L129.9 74.9L132.0 75.2L134.4 74.9L135.9 75.7L137.0 76.2L138.3 77.8M138.3 77.8L139.6 76.5L140.1 75.2L141.4 73.6L142.9 73.0L141.9 71.5L141.1 69.9L141.4 68.7M139.6 76.5L142.2 76.8L145.8 76.2L147.9 76.5L150.0 75.4L151.3 74.6L151.8 71.5M151.3 74.6L150.5 77.0L148.9 78.3L146.6 79.1L146.6 80.5L148.7 82.3L149.2 83.4L150.5 84.0M148.7 82.3L146.6 81.8L144.2 82.8L142.2 82.1L141.4 81.8M141.4 81.8L140.3 79.9L139.6 78.1L138.3 77.8M138.3 77.8L135.4 78.3L135.1 80.7L133.3 82.3L132.3 84.4L132.0 85.0M115.4 84.2L118.5 84.7L121.1 85.2L122.7 84.2L126.3 84.4L129.7 84.2L132.0 85.0M132.0 85.0L132.5 87.6L132.3 90.0L131.8 91.6L130.7 90.0L128.4 89.5L126.6 89.7L125.3 92.1L124.5 92.9M124.5 92.9L122.9 94.5L121.4 95.6L119.5 96.4L118.0 96.6L116.2 97.7L116.2 99.5L114.6 99.8M116.2 99.5L115.9 101.7L115.5 101.9M124.5 92.9L124.5 95.6L124.2 98.0L123.2 99.5L123.4 101.7L122.7 101.9L124.2 103.8L126.3 105.4L126.6 107.8M126.6 107.8L125.0 108.0L124.0 110.1L121.6 110.7L119.8 109.1L117.7 107.5M121.6 110.7L122.7 113.3L123.7 114.4L123.7 116.5L123.7 118.6L123.4 119.4M126.6 107.8L129.2 106.4L131.0 105.6L131.8 105.6M124.2 98.0L126.6 99.0L129.2 97.7L131.0 96.6L132.0 96.4L133.6 94.2L133.1 93.2L131.8 91.6M141.4 81.8L140.1 84.2L139.8 85.0L137.7 87.1L137.2 88.7L136.2 91.1L135.9 92.1L134.6 94.0L133.6 94.2M134.6 94.0L137.2 92.7L139.0 91.6L141.4 91.1L143.5 90.8M162.2 70.3L164.8 69.9L167.9 68.3L171.3 67.5L172.6 68.8M156.6 72.8L159.6 72.8L162.7 72.8L164.3 73.8L163.3 75.4M165.6 73.0L167.4 71.2L170.5 69.9M164.8 76.0L165.8 73.6L168.9 73.8M162.8 77.3L164.8 76.8L165.8 78.1M162.8 77.3L162.8 78.6M156.5 70.7L156.6 72.6M152.2 69.6L153.7 69.3M115.4 53.4L115.9 51.3L115.4 49.5L119.3 49.7L122.7 48.9L125.3 47.3M126.8 55.3L128.1 53.2L127.9 50.8L126.6 49.7L125.3 47.3M122.9 65.1L124.0 65.1L124.0 66.0L122.9 65.9L122.9 65.1" fill="none" stroke="#443" stroke-width=".35"/>
</g>
<path d="M100.3 78.9L101.3 79.9L103.2 81.0L106.0 80.5L105.5 81.8L102.9 82.2L102.4 82.6L103.9 84.4L106.0 86.2L107.6 86.6L110.2 85.5L111.0 83.9L111.5 82.6L112.0 84.2L112.0 85.5L112.3 87.4L112.1 90.5L112.5 92.4L113.0 94.8L113.6 96.9L114.6 99.8L115.4 101.9L116.7 104.8L117.5 107.2L118.8 109.9L120.1 111.7L120.8 114.4L121.6 116.8L122.4 118.4L123.4 119.5L124.6 120.0L125.5 119.4L126.3 117.8L128.1 117.0L129.2 116.8L128.2 116.0L129.2 114.1L130.6 114.0L130.6 111.7L130.5 109.6L131.5 107.5L131.8 105.9L131.2 103.8L131.1 101.7L131.8 100.1L133.3 99.5L134.4 98.2L137.0 97.4L137.0 96.4L139.6 94.5L141.6 92.9L143.7 90.3L145.5 89.1L147.4 88.4L148.7 87.4L149.2 85.8L149.4 84.4L151.3 83.9L152.3 83.6L153.3 84.2L154.6 83.9L154.4 82.3L154.0 79.9L153.3 77.8L152.0 76.5L152.6 74.9L154.1 74.4L152.8 73.0L152.3 72.2L153.3 71.3L154.9 72.2L156.5 72.6L156.6 74.4L158.5 74.8L162.2 74.8L163.3 75.4L162.4 76.8L161.1 77.4L160.1 78.1L160.0 79.7L161.0 80.6L161.8 79.1L162.8 78.6L163.0 80.7L163.6 83.1L165.0 82.6L165.3 80.5L165.8 78.1L167.8 78.2L169.2 75.2L168.9 73.8L170.5 72.5L170.2 70.9L173.1 69.1L175.4 69.6L175.1 68.0L176.1 66.7L174.1 65.9L173.4 64.0L171.3 64.3L168.9 63.8L166.3 65.4L164.0 67.2L161.4 67.7L162.4 69.1L162.2 70.3L158.3 70.4L156.5 70.7L154.1 70.1L153.7 69.3L154.0 68.5L154.1 67.5L153.3 66.9L152.0 67.5L151.9 69.1L152.2 71.5L150.0 71.5L146.6 70.9L144.5 70.4L142.9 69.1L141.4 68.7L139.6 68.9L138.0 68.0L135.9 67.5L134.4 66.7L132.5 65.4L131.1 65.0L132.0 63.0L133.3 61.4L133.6 61.2L131.5 60.3L130.5 59.4L128.9 58.5L127.7 57.9L127.6 55.0L129.4 55.0L129.7 53.4L131.5 51.3L132.0 48.7L131.8 47.3L129.7 46.3L126.8 47.1L125.5 46.0L122.7 44.4L120.1 43.9L116.9 43.2L114.9 43.6L112.8 44.2L111.7 45.5L113.0 47.1L113.0 48.9L114.0 50.3L114.3 51.8L115.4 53.4L116.7 54.5L118.8 55.8L116.9 56.9L116.7 59.0L115.1 60.9L113.8 62.2L112.5 64.6L111.0 65.4L109.9 67.5L106.8 68.0L105.0 69.9L105.2 71.2L105.5 73.3L107.3 75.2L107.8 76.2L105.0 77.3L101.9 77.0Z" fill="none" stroke="#554" stroke-width=".4"/>
<rect x="98.2" y="20.0" width="79.2" height="120.5" fill="none" stroke="#111" stroke-width="1"/>
<rect x="108.2" y="109" width="7.7" height="13.3" fill="#e2621a"/><rect x="161.4" y="104.5" width="8.5" height="20.5" fill="#f2f000"/>
<path d="M134 104.5h23M137 107.5h9M137 110h6M137 112h5M137 114.5h7M137 117h10M137 119.5h6M150.5 107.5h1M150.5 110h1M150.5 114.5h1M150.5 119.5h1" stroke="#333" stroke-width=".7"/>
<path d="M159 91.5h5M155.5 93.5h12M156 95.5h2M160 95.5h2M165 95.5h2" stroke="#444" stroke-width=".6"/>
<path d="M99.5 126h77" stroke="#bbb" stroke-width=".5"/><path d="M100 129.5h76" stroke="#8a9aa8" stroke-width=".8" stroke-dasharray="5 2 7 2 4 3"/>
<path d="M100 133.5h3M100 135h47M100 136.5h30" stroke="#555" stroke-width=".7"/>
<rect x="91.8" y="145" width="86" height=".6" fill="#666"/><path d="M168 147.3h9" stroke="#777" stroke-width=".8"/>
</g>
<clipPath id="ci10"><path d="M100.9 272.0L101.9 273.1L103.7 274.1L106.6 273.6L106.0 274.9L103.5 275.3L103.0 275.6L104.5 277.4L106.6 279.1L108.1 279.5L110.7 278.5L111.4 276.9L112.0 275.6L112.5 277.2L112.5 278.5L112.7 280.3L112.6 283.4L113.0 285.2L113.5 287.5L114.0 289.5L115.0 292.4L115.8 294.4L117.1 297.3L117.9 299.6L119.1 302.2L120.4 304.0L121.2 306.5L122.0 308.9L122.7 310.4L123.8 311.6L124.9 312.0L125.8 311.4L126.6 309.9L128.4 309.1L129.4 308.9L128.5 308.1L129.4 306.3L130.8 306.2L130.8 304.0L130.7 301.9L131.7 299.8L132.0 298.3L131.5 296.2L131.4 294.2L132.0 292.6L133.5 292.1L134.6 290.8L137.1 290.1L137.1 289.0L139.7 287.2L141.8 285.7L143.8 283.1L145.6 281.9L147.4 281.3L148.7 280.3L149.2 278.7L149.5 277.4L151.3 276.9L152.3 276.7L153.3 277.2L154.6 276.9L154.4 275.4L154.0 273.1L153.3 271.0L152.0 269.7L152.6 268.2L154.1 267.7L152.8 266.4L152.3 265.6L153.3 264.7L154.9 265.6L156.4 266.0L156.5 267.7L158.5 268.0L162.1 268.0L163.2 268.7L162.3 270.0L161.0 270.6L160.0 271.3L159.9 272.8L160.9 273.7L161.7 272.3L162.7 271.8L162.8 273.8L163.5 276.2L164.9 275.6L165.2 273.6L165.7 271.3L167.6 271.4L169.0 268.4L168.7 267.1L170.3 265.9L170.0 264.3L172.9 262.5L175.2 263.0L174.8 261.5L175.8 260.2L173.9 259.4L173.1 257.6L171.1 257.9L168.7 257.4L166.2 258.9L163.9 260.7L161.3 261.2L162.3 262.5L162.1 263.7L158.2 263.8L156.4 264.1L154.1 263.5L153.7 262.8L154.0 262.0L154.1 261.0L153.3 260.4L152.0 261.0L151.9 262.5L152.2 264.8L150.0 264.8L146.6 264.3L144.6 263.8L143.0 262.5L141.5 262.1L139.7 262.4L138.2 261.5L136.1 261.0L134.6 260.2L132.8 258.9L131.4 258.5L132.3 256.6L133.5 255.0L133.8 254.9L131.7 254.0L130.7 253.1L129.2 252.2L128.0 251.7L127.9 248.9L129.7 248.9L129.9 247.3L131.7 245.3L132.3 242.7L132.0 241.4L129.9 240.4L127.1 241.1L125.8 240.1L123.0 238.6L120.4 238.0L117.3 237.4L115.3 237.8L113.2 238.3L112.2 239.6L113.5 241.1L113.5 242.9L114.4 244.2L114.8 245.8L115.8 247.3L117.1 248.3L119.1 249.6L117.3 250.7L117.1 252.7L115.5 254.5L114.3 255.8L113.0 258.1L111.4 258.9L110.4 261.0L107.3 261.5L105.5 263.3L105.8 264.6L106.0 266.6L107.8 268.4L108.4 269.5L105.5 270.5L102.4 270.2Z"/></clipPath>
<g opacity=".53"><rect x="81" y="206.0" width="108" height="140" fill="#fff"/>
<g clip-path="url(#ci10)"><rect x="81" y="206.0" width="108" height="140" fill="#f2f000"/>
<path d="M99.1 269.7L105.5 261.2L112.0 256.1L115.8 254.8L119.7 259.4L123.5 262.0L123.5 267.1L118.4 269.7L116.6 273.6L118.4 277.4L123.5 278.7L128.7 280.0L132.5 281.3L133.8 285.2L137.7 286.5L142.8 284.4L138.9 290.3L133.3 299.3L126.1 301.1L120.9 301.9L115.8 300.6L110.7 281.3L99.1 278.7Z" fill="#e2621a"/>
<path d="M140.7 262.0L152.3 264.6L154.1 269.7L154.9 278.0L149.2 278.0L147.4 273.6L147.9 270.2L140.2 269.7Z" fill="#e2621a"/>
<path d="M151.8 262.8L156.4 263.8L162.1 263.5L171.1 261.2L171.1 263.8L164.6 267.1L163.4 268.7L156.4 268.2L156.2 265.9L152.3 265.9Z" fill="#2a86e0"/>
<path d="M161.0 261.2L166.2 258.1L173.1 256.3L177.0 260.2L172.3 262.5L167.2 262.3L162.1 263.5Z" fill="#52c24e"/>
<path d="M159.5 270.2L164.1 268.4L165.9 266.4L170.5 265.6L169.3 271.0L165.9 276.2L162.8 276.7L159.5 274.1Z" fill="#e2621a"/>
<path d="M115.8 294.7L122.2 294.2L123.5 299.3L132.8 298.3L132.8 312.7L116.6 312.7Z" fill="#52c24e"/>
<path d="M123.0 292.1L129.9 292.1L131.2 298.6L124.0 299.3Z" fill="#2a86e0"/>
<path d="M120.9 305.8L124.0 306.5L124.3 312.2L122.2 311.4Z" fill="#f2f000"/>
<path d="M108.4 269.5L112.0 270.0L113.5 270.0L115.8 272.8L116.6 275.1L115.8 277.2L115.3 279.8L114.3 280.8L112.7 280.8M115.8 272.8L118.1 271.3L119.1 268.9L121.5 270.5L123.3 269.7L123.3 267.7L124.5 267.4L126.6 263.8M126.6 263.8L124.8 262.8L124.3 261.2L123.3 261.5L121.5 260.7L120.4 259.7L118.4 257.6L117.1 257.4L115.5 255.7M117.1 256.8L119.4 256.1L121.5 255.8L123.0 254.5L123.3 253.2L121.7 252.0L120.7 250.4L119.9 249.4M119.9 249.4L121.7 247.8L123.5 248.1L125.8 248.6L127.1 249.1L127.9 248.9M125.1 254.5L126.1 253.0L128.1 252.5M123.3 253.2L125.1 254.5L124.0 256.8L124.0 258.6L124.3 259.7L124.8 261.0L124.3 261.2M125.1 254.5L126.9 256.3L128.4 257.1L129.7 258.4L131.4 258.5M126.6 263.8L128.7 264.3L128.4 266.9L127.1 267.7L127.6 269.7L130.2 268.2L132.3 268.4L134.6 268.2L136.1 268.9L137.1 269.5L138.4 271.0M138.4 271.0L139.7 269.7L140.2 268.4L141.5 266.9L143.0 266.4L142.0 264.8L141.2 263.3L141.5 262.1M139.7 269.7L142.3 270.0L145.9 269.5L147.9 269.7L150.0 268.7L151.3 267.9L151.8 264.8M151.3 267.9L150.5 270.2L149.0 271.5L146.6 272.3L146.6 273.6L148.7 275.4L149.2 276.4L150.5 277.1M148.7 275.4L146.6 274.9L144.3 275.9L142.3 275.1L141.5 274.9M141.5 274.9L140.5 273.1L139.7 271.3L138.4 271.0M138.4 271.0L135.6 271.5L135.3 273.8L133.5 275.4L132.5 277.4L132.3 278.0M115.8 277.2L118.9 277.7L121.5 278.2L123.0 277.2L126.6 277.4L129.9 277.2L132.3 278.0M132.3 278.0L132.8 280.5L132.5 282.9L132.0 284.4L131.0 282.9L128.7 282.3L126.9 282.6L125.6 284.9L124.8 285.7M124.8 285.7L123.3 287.2L121.7 288.3L119.9 289.0L118.4 289.3L116.6 290.3L116.6 292.1L115.0 292.4M116.6 292.1L116.3 294.2L115.9 294.4M124.8 285.7L124.8 288.3L124.5 290.6L123.5 292.1L123.8 294.2L123.0 294.4L124.5 296.2L126.6 297.8L126.9 300.1M126.9 300.1L125.3 300.4L124.3 302.4L122.0 302.9L120.2 301.4L118.1 299.8M122.0 302.9L123.0 305.5L124.0 306.5L124.0 308.6L124.0 310.7L123.8 311.4M126.9 300.1L129.4 298.8L131.2 298.0L132.0 298.0M124.5 290.6L126.9 291.6L129.4 290.3L131.2 289.3L132.3 289.0L133.8 287.0L133.3 285.9L132.0 284.4M141.5 274.9L140.2 277.2L140.0 278.0L137.9 280.0L137.4 281.6L136.4 283.9L136.1 284.9L134.8 286.7L133.8 287.0M134.8 286.7L137.4 285.4L139.2 284.4L141.5 283.9L143.6 283.6M162.1 263.7L164.6 263.3L167.7 261.7L171.1 261.0L172.3 262.3M156.5 266.1L159.5 266.1L162.6 266.1L164.1 267.1L163.2 268.7M165.4 266.4L167.2 264.6L170.3 263.3M164.6 269.2L165.7 266.9L168.7 267.1M162.7 270.5L164.6 270.0L165.7 271.3M162.7 270.5L162.7 271.8M156.4 264.1L156.5 266.0M152.2 263.0L153.7 262.8M115.8 247.3L116.3 245.3L115.8 243.5L119.7 243.7L123.0 242.9L125.6 241.4M127.1 249.1L128.4 247.1L128.1 244.7L126.9 243.7L125.6 241.4M123.3 258.6L124.3 258.6L124.3 259.5L123.3 259.4L123.3 258.6" fill="none" stroke="#443" stroke-width=".35"/>
</g>
<path d="M100.9 272.0L101.9 273.1L103.7 274.1L106.6 273.6L106.0 274.9L103.5 275.3L103.0 275.6L104.5 277.4L106.6 279.1L108.1 279.5L110.7 278.5L111.4 276.9L112.0 275.6L112.5 277.2L112.5 278.5L112.7 280.3L112.6 283.4L113.0 285.2L113.5 287.5L114.0 289.5L115.0 292.4L115.8 294.4L117.1 297.3L117.9 299.6L119.1 302.2L120.4 304.0L121.2 306.5L122.0 308.9L122.7 310.4L123.8 311.6L124.9 312.0L125.8 311.4L126.6 309.9L128.4 309.1L129.4 308.9L128.5 308.1L129.4 306.3L130.8 306.2L130.8 304.0L130.7 301.9L131.7 299.8L132.0 298.3L131.5 296.2L131.4 294.2L132.0 292.6L133.5 292.1L134.6 290.8L137.1 290.1L137.1 289.0L139.7 287.2L141.8 285.7L143.8 283.1L145.6 281.9L147.4 281.3L148.7 280.3L149.2 278.7L149.5 277.4L151.3 276.9L152.3 276.7L153.3 277.2L154.6 276.9L154.4 275.4L154.0 273.1L153.3 271.0L152.0 269.7L152.6 268.2L154.1 267.7L152.8 266.4L152.3 265.6L153.3 264.7L154.9 265.6L156.4 266.0L156.5 267.7L158.5 268.0L162.1 268.0L163.2 268.7L162.3 270.0L161.0 270.6L160.0 271.3L159.9 272.8L160.9 273.7L161.7 272.3L162.7 271.8L162.8 273.8L163.5 276.2L164.9 275.6L165.2 273.6L165.7 271.3L167.6 271.4L169.0 268.4L168.7 267.1L170.3 265.9L170.0 264.3L172.9 262.5L175.2 263.0L174.8 261.5L175.8 260.2L173.9 259.4L173.1 257.6L171.1 257.9L168.7 257.4L166.2 258.9L163.9 260.7L161.3 261.2L162.3 262.5L162.1 263.7L158.2 263.8L156.4 264.1L154.1 263.5L153.7 262.8L154.0 262.0L154.1 261.0L153.3 260.4L152.0 261.0L151.9 262.5L152.2 264.8L150.0 264.8L146.6 264.3L144.6 263.8L143.0 262.5L141.5 262.1L139.7 262.4L138.2 261.5L136.1 261.0L134.6 260.2L132.8 258.9L131.4 258.5L132.3 256.6L133.5 255.0L133.8 254.9L131.7 254.0L130.7 253.1L129.2 252.2L128.0 251.7L127.9 248.9L129.7 248.9L129.9 247.3L131.7 245.3L132.3 242.7L132.0 241.4L129.9 240.4L127.1 241.1L125.8 240.1L123.0 238.6L120.4 238.0L117.3 237.4L115.3 237.8L113.2 238.3L112.2 239.6L113.5 241.1L113.5 242.9L114.4 244.2L114.8 245.8L115.8 247.3L117.1 248.3L119.1 249.6L117.3 250.7L117.1 252.7L115.5 254.5L114.3 255.8L113.0 258.1L111.4 258.9L110.4 261.0L107.3 261.5L105.5 263.3L105.8 264.6L106.0 266.6L107.8 268.4L108.4 269.5L105.5 270.5L102.4 270.2Z" fill="none" stroke="#554" stroke-width=".4"/>
<rect x="99.3" y="223.2" width="78.3" height="109.6" fill="none" stroke="#111" stroke-width="1"/>
<rect x="108.8" y="301.6" width="8.2" height="13.1" fill="#e2621a"/><rect x="161.9" y="296.9" width="8.1" height="20.2" fill="#e2621a"/>
<path d="M135.5 297h21M137 300h8M137 302.5h5M137 304.5h5M137 307h7M137 309.5h10M137 311.5h5M151 300h1M151 302.5h1M151 307h1M151 311.5h1" stroke="#333" stroke-width=".7"/>
<path d="M159 284h5M156 286.3h11M156.5 288.5h2M160.5 288.5h2M165 288.5h2" stroke="#444" stroke-width=".6"/>
<path d="M105.5 226h13M105.5 228.3h19M147 225.8h24M148 228.3h22" stroke="#3a70b8" stroke-width=".8"/><rect x="101" y="224.5" width="2.6" height="5.5" fill="#c88a30"/>
<path d="M128 231.8h23M129 234h21" stroke="#333" stroke-width=".7"/><path d="M100 237h76" stroke="#bbb" stroke-width=".4"/><path d="M174 231v6M172.5 233.5h3" stroke="#666" stroke-width=".4"/>
<path d="M100 317.5h77" stroke="#bbb" stroke-width=".5"/><path d="M100 321.5h76" stroke="#8a9aa8" stroke-width=".8" stroke-dasharray="5 2 7 2 4 3"/>
<path d="M100.5 325.5h3M100.5 327h23M100.5 328.3h47M100.5 329.6h30" stroke="#555" stroke-width=".6"/>
<path d="M168 220.2h9" stroke="#222" stroke-width=".9"/>
<rect x="92.2" y="334" width="85.4" height=".6" fill="#666"/><path d="M167 336.5h10" stroke="#777" stroke-width=".8"/>
</g>
<rect x="75" y="389" width="120" height="152" fill="#8ab4f8"/><rect x="81" y="395" width="108" height="140" fill="#fff"/><g transform="translate(10.02 399.24) scale(0.14634)">
<!-- annexure -->
<text x="1066" y="83" font-family="Liberation Sans" font-weight="bold" font-size="14.5" fill="#000">Annexure III</text>
<rect x="1128.7" y="86" width="1" height="254" fill="#555"/>
<g filter="url(#bl3)">
<text class="tt" transform="translate(659.4 101.8) scale(1.45 1)" textLength="64.7" lengthAdjust="spacing">Forecast</text>
<text class="tt" transform="translate(769.9 101.8) scale(1.45 1)" textLength="53.7" lengthAdjust="spacing">Rainfall</text>
<text class="tt" transform="translate(862.2 101.8) scale(1.62 1)" textLength="72.0" lengthAdjust="spacing">(mm/day)</text>
<text class="tt" transform="translate(662.2 415.6) scale(1.45 1)" textLength="63.8" lengthAdjust="spacing">Forecast</text>
<text class="tt" transform="translate(766.4 415.6) scale(1.45 1)" textLength="54.7" lengthAdjust="spacing">Rainfall</text>
<text class="tt" transform="translate(858.2 415.6) scale(1.45 1)" textLength="60.6" lengthAdjust="spacing">Anomaly</text>
<text class="tt" transform="translate(960.5 415.6) scale(1.62 1)" textLength="69.8" lengthAdjust="spacing">(mm/day)</text>
<text class="st" transform="translate(633.0 123.5) scale(1.45 1)" textLength="47.4" lengthAdjust="spacing">(Week1:</text>
<text class="st" transform="translate(717.0 123.5) scale(1.45 1)" textLength="89.0" lengthAdjust="spacing">17Jun−23Jun)</text>
<text class="st" transform="translate(899.8 123.5) scale(1.45 1)" textLength="48.1" lengthAdjust="spacing">(Week2:</text>
<text class="st" transform="translate(982.6 123.5) scale(1.45 1)" textLength="91.3" lengthAdjust="spacing">24Jun−30Jun)</text>
<text class="st" transform="translate(635.6 436.6) scale(1.45 1)" textLength="44.8" lengthAdjust="spacing">(Week1:</text>
<text class="st" transform="translate(715.7 436.6) scale(1.45 1)" textLength="87.5" lengthAdjust="spacing">17Jun−23Jun)</text>
<text class="st" transform="translate(893.3 436.6) scale(1.45 1)" textLength="45.3" lengthAdjust="spacing">(Week2:</text>
<text class="st" transform="translate(973.4 436.6) scale(1.45 1)" textLength="88.0" lengthAdjust="spacing">24Jun−30Jun)</text>
</g>
<clipPath id="tcm1"><rect x="617.5" y="131.7" width="225.0" height="182.4"/></clipPath>
<g clip-path="url(#tcm1)">
<g filter="url(#bl)">
<rect x="614.5" y="128.7" width="231.0" height="188.4" fill="#1ee673"/>
<path d="M615.1 129.3C627.0 112.1 675.0 126.9 686.5 129.3C698.0 131.6 686.9 139.3 684.0 143.3C681.0 147.3 671.8 149.3 668.7 153.5C665.5 157.8 663.6 165.8 664.8 168.8C666.1 171.8 671.4 170.1 676.3 171.4C681.2 172.6 688.2 174.1 694.2 176.5C700.1 178.8 707.3 182.4 712.0 185.4C716.7 188.4 721.4 191.1 722.2 194.3C723.1 197.5 720.1 202.0 717.1 204.5C714.1 207.1 708.2 207.5 704.4 209.6C700.5 211.7 697.1 213.9 694.2 217.3C691.2 220.7 689.5 227.0 686.5 230.0C683.5 233.0 680.6 235.1 676.3 235.1C672.1 235.1 667.0 231.1 661.0 230.0C655.1 229.0 648.3 228.3 640.6 228.7C633.0 229.2 619.4 249.1 615.1 232.6C610.9 216.0 603.2 146.5 615.1 129.3Z" fill="#80f5a8"/>
<path d="M706.9 129.3C729.7 126.1 821.7 127.8 844.6 129.3C867.6 130.8 847.2 136.5 844.6 138.2C842.1 139.9 834.4 139.5 829.3 139.5C824.2 139.5 818.3 137.6 814.0 138.2C809.8 138.8 806.4 140.8 803.8 143.3C801.3 145.9 799.6 148.8 798.7 153.5C797.9 158.2 799.6 166.5 798.7 171.4C797.9 176.2 797.0 180.5 793.6 182.8C790.2 185.2 784.3 185.4 778.3 185.4C772.4 185.4 764.7 184.1 757.9 182.8C751.1 181.6 743.5 179.9 737.5 177.7C731.6 175.6 726.5 172.8 722.2 170.1C718.0 167.3 714.4 164.8 712.0 161.2C709.7 157.5 709.0 153.7 708.2 148.4C707.3 143.1 684.2 132.5 706.9 129.3Z" fill="#80f5a8"/>
<path d="M706.9 179.0C708.8 177.5 714.1 181.3 719.7 182.8C725.2 184.3 736.2 185.2 740.1 187.9C743.9 190.7 744.3 196.9 742.6 199.4C740.9 202.0 734.5 202.8 729.9 203.2C725.2 203.7 718.2 203.9 714.6 202.0C711.0 200.1 709.5 195.6 708.2 191.8C706.9 187.9 705.0 180.5 706.9 179.0Z" fill="#80f5a8"/>
<path d="M676.8 228.7C678.1 225.1 683.4 226.0 686.5 226.2C689.6 226.4 693.3 227.3 695.4 230.0C697.6 232.8 698.4 236.8 699.3 242.8C700.2 248.7 700.5 258.2 700.8 265.7C701.1 273.2 701.9 283.4 700.8 287.7C699.7 291.9 696.1 292.3 694.2 291.2C692.2 290.1 690.8 285.3 689.1 281.0C687.4 276.8 685.7 271.3 684.0 265.7C682.3 260.2 680.1 254.0 678.9 247.9C677.7 241.7 675.5 232.4 676.8 228.7Z" fill="#80f5a8"/>
<path d="M673.8 216.0C675.4 214.0 683.5 213.6 686.5 214.2C689.5 214.8 691.6 217.8 691.6 219.8C691.6 221.8 689.0 225.1 686.5 226.2C684.0 227.3 678.9 227.9 676.8 226.2C674.7 224.5 672.1 218.0 673.8 216.0Z" fill="#80f5a8"/>
<path d="M811.5 216.0C813.5 213.3 818.5 208.0 821.7 207.6C824.9 207.1 829.0 209.7 830.6 213.4C832.2 217.2 832.0 224.7 831.4 230.0C830.7 235.3 829.0 242.6 826.8 245.3C824.5 248.1 820.3 248.3 817.9 246.6C815.4 244.9 813.4 238.9 812.0 235.1C810.6 231.3 809.5 226.8 809.4 223.6C809.4 220.5 809.4 218.7 811.5 216.0Z" fill="#80f5a8"/>
<path d="M833.2 232.6C835.3 229.4 842.7 223.2 844.6 228.7C846.6 234.3 846.1 260.0 844.6 265.7C843.2 271.5 837.8 266.2 835.7 263.2C833.6 260.2 832.3 253.0 831.9 247.9C831.5 242.8 831.0 235.8 833.2 232.6Z" fill="#80f5a8"/>
<path d="M615.1 274.4C618.2 267.5 627.8 273.2 633.5 275.4C639.1 277.6 644.6 283.3 649.0 287.7C653.4 292.0 656.8 297.1 660.0 301.7C663.1 306.3 675.4 313.0 667.9 315.5C660.4 318.0 623.9 323.6 615.1 316.7C606.3 309.9 612.0 281.3 615.1 274.4Z" fill="#80f5a8"/>
<path d="M793.4 281.5C796.3 277.1 804.4 269.4 810.7 267.3C817.0 265.1 827.5 265.4 831.1 268.8C834.8 272.2 834.0 282.4 832.7 287.7C831.3 292.9 827.4 297.8 823.2 300.2C819.1 302.5 812.6 303.0 807.7 301.9C802.7 300.9 795.8 297.4 793.4 294.0C791.0 290.6 790.5 286.0 793.4 281.5Z" fill="#50ee90"/>
<path d="M794.1 291.2C794.5 286.4 798.4 281.8 801.3 279.8C804.2 277.7 809.4 276.7 811.5 279.0C813.6 281.3 814.5 289.2 814.0 293.8C813.6 298.4 811.4 304.1 808.9 306.5C806.5 309.0 801.7 311.1 799.2 308.6C796.8 306.0 793.8 296.0 794.1 291.2Z" fill="#80f5a8"/>
<path d="M712.0 293.8C714.8 291.2 720.5 290.6 724.8 291.2C729.0 291.9 734.5 293.1 737.5 297.6C740.5 302.1 746.9 314.6 742.6 318.0C738.4 321.4 717.8 319.9 712.0 318.0C706.3 316.1 708.2 310.6 708.2 306.5C708.2 302.5 709.3 296.3 712.0 293.8Z" fill="#80f5a8"/>
<path d="M811.5 158.6C814.0 156.3 822.1 155.6 826.8 156.1C831.5 156.5 837.4 158.4 839.5 161.2C841.7 163.9 842.1 170.3 839.5 172.6C837.0 175.0 828.9 175.6 824.2 175.2C819.6 174.8 813.6 172.8 811.5 170.1C809.4 167.3 808.9 160.9 811.5 158.6Z" fill="#80f5a8"/>
<path d="M615.1 129.3C622.3 113.1 651.9 126.5 658.5 129.3C665.0 132.0 656.8 141.0 654.6 145.9C652.5 150.7 647.6 154.1 645.7 158.6C643.8 163.1 642.7 169.4 643.2 172.6C643.6 175.8 645.3 176.9 648.3 177.7C651.2 178.6 657.2 178.6 661.0 177.7C664.8 176.9 668.4 173.3 671.2 172.6C674.0 172.0 675.0 172.8 677.6 173.9C680.1 175.0 683.3 177.5 686.5 179.0C689.7 180.5 693.1 181.3 696.7 182.8C700.3 184.3 705.2 186.2 708.2 187.9C711.2 189.6 714.6 190.7 714.6 193.0C714.6 195.4 711.2 200.3 708.2 202.0C705.2 203.7 700.3 202.0 696.7 203.2C693.1 204.5 689.5 206.9 686.5 209.6C683.5 212.4 681.4 217.1 678.9 219.8C676.3 222.6 674.2 225.6 671.2 226.2C668.2 226.8 664.8 224.4 661.0 223.6C657.2 222.9 652.5 222.2 648.3 221.9C644.0 221.6 639.3 221.6 635.5 221.9C631.7 222.2 628.7 222.9 625.3 223.6C621.9 224.4 616.8 241.9 615.1 226.2C613.4 210.5 607.9 145.4 615.1 129.3Z" fill="#ffffff"/>
<path d="M643.2 166.3C643.8 163.9 645.7 160.9 648.3 159.9C650.8 158.8 656.1 158.8 658.5 159.9C660.8 160.9 662.1 163.9 662.3 166.3C662.5 168.6 661.6 172.1 659.7 173.9C657.8 175.7 653.4 177.0 650.8 177.0C648.3 177.0 645.7 175.7 644.4 173.9C643.2 172.1 642.5 168.6 643.2 166.3Z" fill="#80f5a8"/>
<path d="M714.6 157.3C713.9 155.4 714.1 151.9 715.8 149.7C717.5 147.4 720.3 144.8 724.8 143.8C729.2 142.8 736.5 142.5 742.6 143.8C748.8 145.1 756.4 149.3 761.8 151.5C767.1 153.6 770.9 154.3 774.5 156.6C778.1 158.8 781.4 162.3 783.4 165.0C785.4 167.7 786.5 170.5 786.5 172.6C786.5 174.8 785.6 176.8 783.4 177.7C781.2 178.7 777.5 178.8 773.2 178.5C769.0 178.2 763.0 177.1 757.9 175.9C752.8 174.8 747.5 173.6 742.6 171.9C737.7 170.2 732.4 167.5 728.6 165.7C724.8 164.0 722.0 162.6 719.7 161.2C717.3 159.8 715.2 159.2 714.6 157.3Z" fill="#ffffff"/>
<path d="M833.9 166.3C833.9 167.2 833.2 168.2 832.1 169.0C831.0 169.7 829.0 170.3 827.2 170.6C825.4 170.9 823.1 170.9 821.2 170.6C819.4 170.3 817.5 169.7 816.4 169.0C815.3 168.2 814.5 167.2 814.5 166.3C814.5 165.4 815.3 164.3 816.4 163.6C817.5 162.8 819.4 162.2 821.2 161.9C823.1 161.6 825.4 161.6 827.2 161.9C829.0 162.2 831.0 162.8 832.1 163.6C833.2 164.3 833.9 165.4 833.9 166.3Z" fill="#ffffff"/>
<path d="M811.5 134.6C811.5 135.1 810.9 135.6 810.1 136.0C809.3 136.3 807.9 136.7 806.6 136.8C805.2 137.0 803.5 137.0 802.1 136.8C800.8 136.7 799.4 136.3 798.6 136.0C797.7 135.6 797.2 135.1 797.2 134.6C797.2 134.2 797.7 133.6 798.6 133.3C799.4 132.9 800.8 132.6 802.1 132.4C803.5 132.3 805.2 132.3 806.6 132.4C807.9 132.6 809.3 132.9 810.1 133.3C810.9 133.6 811.5 134.2 811.5 134.6Z" fill="#ffffff"/>
<path d="M838.3 237.7C839.5 235.8 843.6 230.9 844.6 233.8C845.7 236.8 845.5 252.1 844.6 255.5C843.8 258.9 840.8 255.9 839.5 254.2C838.3 252.5 837.2 248.1 837.0 245.3C836.8 242.6 837.0 239.6 838.3 237.7Z" fill="#ffffff"/>
<path d="M624.8 303.5C624.8 304.2 624.4 305.1 623.9 305.7C623.4 306.3 622.5 306.9 621.6 307.1C620.8 307.3 619.6 307.3 618.8 307.1C617.9 306.9 617.0 306.3 616.5 305.7C616.0 305.1 615.6 304.2 615.6 303.5C615.6 302.7 616.0 301.8 616.5 301.2C617.0 300.6 617.9 300.1 618.8 299.8C619.6 299.6 620.8 299.6 621.6 299.8C622.5 300.1 623.4 300.6 623.9 301.2C624.4 301.8 624.8 302.7 624.8 303.5Z" fill="#ffffff"/>
<path d="M732.4 302.7C732.4 303.5 731.9 304.4 731.2 305.0C730.5 305.6 729.2 306.1 728.0 306.3C726.8 306.6 725.3 306.6 724.1 306.3C722.9 306.1 721.6 305.6 720.9 305.0C720.2 304.4 719.7 303.5 719.7 302.7C719.7 302.0 720.2 301.1 720.9 300.5C721.6 299.9 722.9 299.3 724.1 299.1C725.3 298.8 726.8 298.8 728.0 299.1C729.2 299.3 730.5 299.9 731.2 300.5C731.9 301.1 732.4 302.0 732.4 302.7Z" fill="#ffffff"/>
<path d="M817.6 300.9C817.6 301.5 817.3 302.1 816.9 302.6C816.5 303.0 815.8 303.4 815.1 303.6C814.5 303.8 813.6 303.8 812.9 303.6C812.3 303.4 811.6 303.0 811.1 302.6C810.7 302.1 810.5 301.5 810.5 300.9C810.5 300.4 810.7 299.7 811.1 299.3C811.6 298.8 812.3 298.4 812.9 298.3C813.6 298.1 814.5 298.1 815.1 298.3C815.8 298.4 816.5 298.8 816.9 299.3C817.3 299.7 817.6 300.4 817.6 300.9Z" fill="#ffffff"/>
<path d="M673.5 221.1C673.5 222.7 673.3 224.6 673.1 225.9C672.8 227.2 672.3 228.4 671.9 228.9C671.5 229.3 670.9 229.3 670.5 228.9C670.1 228.4 669.6 227.2 669.4 225.9C669.1 224.6 668.9 222.7 668.9 221.1C668.9 219.5 669.1 217.6 669.4 216.3C669.6 215.0 670.1 213.8 670.5 213.3C670.9 212.8 671.5 212.8 671.9 213.3C672.3 213.8 672.8 215.0 673.1 216.3C673.3 217.6 673.5 219.5 673.5 221.1Z" fill="#ffffff"/>
<path d="M710.5 286.6C710.5 287.3 710.1 288.2 709.4 288.7C708.8 289.3 707.7 289.8 706.6 290.0C705.6 290.3 704.2 290.3 703.1 290.0C702.1 289.8 701.0 289.3 700.3 288.7C699.7 288.2 699.3 287.3 699.3 286.6C699.3 285.9 699.7 285.1 700.3 284.5C701.0 284.0 702.1 283.5 703.1 283.2C704.2 283.0 705.6 283.0 706.6 283.2C707.7 283.5 708.8 284.0 709.4 284.5C710.1 285.1 710.5 285.9 710.5 286.6Z" fill="#ffffff"/>
<path d="M716.6 187.9C716.6 189.3 716.3 191.0 715.7 192.1C715.2 193.3 714.3 194.3 713.4 194.7C712.6 195.2 711.5 195.2 710.6 194.7C709.7 194.3 708.8 193.3 708.3 192.1C707.8 191.0 707.4 189.3 707.4 187.9C707.4 186.5 707.8 184.9 708.3 183.7C708.8 182.6 709.7 181.6 710.6 181.1C711.5 180.7 712.6 180.7 713.4 181.1C714.3 181.6 715.2 182.6 715.7 183.7C716.3 184.9 716.6 186.5 716.6 187.9Z" fill="#ffffff"/>
<path d="M661.0 143.3C663.1 140.3 669.5 139.9 673.8 138.2C678.0 136.5 680.1 134.0 686.5 133.1C692.9 132.3 707.3 131.4 712.0 133.1C716.7 134.8 715.4 139.9 714.6 143.3C713.7 146.7 710.3 151.4 706.9 153.5C703.5 155.6 698.0 153.9 694.2 156.1C690.3 158.2 687.4 163.7 684.0 166.3C680.6 168.8 677.0 170.9 673.8 171.4C670.6 171.8 667.0 171.4 664.8 168.8C662.7 166.3 661.6 160.3 661.0 156.1C660.4 151.8 658.9 146.3 661.0 143.3Z" fill="#1ee673"/>
<path d="M798.7 148.4C800.4 146.3 806.4 144.6 814.0 143.3C821.7 142.0 839.5 138.8 844.6 140.8C849.7 142.7 847.2 152.0 844.6 154.8C842.1 157.5 834.4 157.3 829.3 157.3C824.2 157.3 818.3 155.0 814.0 154.8C809.8 154.6 806.4 157.1 803.8 156.1C801.3 155.0 797.0 150.5 798.7 148.4Z" fill="#1ee673"/>
<path d="M615.1 229.0C618.7 223.0 628.0 227.5 636.5 227.0C645.1 226.4 660.8 223.9 666.4 225.9C672.0 228.0 668.1 233.6 670.2 239.2C672.3 244.8 675.8 253.1 678.9 259.6C681.9 266.1 685.1 272.6 688.3 278.2C691.5 283.8 696.2 289.6 698.2 293.3C700.3 296.9 700.9 296.9 700.8 300.2C700.7 303.4 698.5 310.3 697.5 312.7C696.4 315.0 696.8 316.5 694.4 314.4C692.1 312.4 687.9 304.6 683.5 300.2C679.0 295.7 672.9 292.1 667.9 287.7C662.9 283.2 658.8 277.5 653.6 273.6C648.4 269.7 642.9 266.0 636.5 264.2C630.1 262.4 618.7 268.5 615.1 262.7C611.5 256.8 611.5 235.0 615.1 229.0Z" fill="#08c040"/>
<path d="M726.0 247.1C727.9 245.3 733.4 245.3 737.0 245.3C740.7 245.3 743.8 248.4 748.0 247.1C752.1 245.8 758.4 241.1 762.0 237.7C765.7 234.3 766.8 229.6 769.9 226.7C773.1 223.8 777.7 218.8 780.9 220.3C784.0 221.9 785.9 232.0 788.8 236.1C791.7 240.3 794.6 242.7 798.2 245.3C801.9 247.9 806.6 250.6 810.7 251.7C814.9 252.8 819.8 250.1 823.2 251.7C826.6 253.3 831.1 258.8 831.1 261.1C831.1 263.5 826.6 265.5 823.2 265.7C819.8 266.0 814.9 263.7 810.7 262.7C806.6 261.6 801.4 259.1 798.2 259.6C795.1 260.1 792.9 262.6 791.8 265.7C790.8 268.8 792.4 275.1 791.8 278.2C791.3 281.4 791.1 285.1 788.8 284.6C786.5 284.1 781.5 276.5 777.8 275.2C774.2 273.8 770.8 276.2 766.9 276.7C762.9 277.2 759.1 278.5 754.4 278.2C749.6 278.0 742.2 277.8 738.5 275.2C734.9 272.6 734.5 265.8 732.4 262.7C730.3 259.5 727.1 258.9 726.0 256.3C725.0 253.7 724.2 248.9 726.0 247.1Z" fill="#08c040"/>
<path d="M743.4 297.1C745.2 292.1 749.1 290.5 754.4 289.2C759.6 287.9 770.6 288.4 774.8 289.2C778.9 290.0 780.7 291.1 779.4 294.0C778.0 296.9 770.6 302.3 766.9 306.5C763.1 310.7 760.6 317.2 756.7 319.3C752.7 321.4 745.6 323.0 743.4 319.3C741.2 315.6 741.6 302.1 743.4 297.1Z" fill="#08c040"/>
<path d="M752.8 191.8C755.0 188.6 762.2 184.7 768.1 182.8C774.1 180.9 781.7 181.1 788.5 180.3C795.3 179.4 802.1 177.3 808.9 177.7C815.7 178.2 824.2 180.1 829.3 182.8C834.4 185.6 837.0 189.4 839.5 194.3C842.1 199.2 845.5 208.8 844.6 212.2C843.8 215.6 837.8 215.1 834.4 214.7C831.0 214.3 827.6 210.0 824.2 209.6C820.8 209.2 817.4 210.5 814.0 212.2C810.6 213.9 808.1 219.0 803.8 219.8C799.6 220.7 793.6 217.7 788.5 217.3C783.4 216.8 777.5 218.5 773.2 217.3C769.0 216.0 766.0 212.2 763.0 209.6C760.1 207.1 757.1 204.9 755.4 202.0C753.7 199.0 750.7 195.0 752.8 191.8Z" fill="#08c040"/>
<path d="M712.0 168.8C714.6 168.2 721.4 171.2 727.3 173.4C733.3 175.6 740.9 179.8 747.7 182.1C754.5 184.4 764.7 184.8 768.1 187.2C771.5 189.6 771.5 195.6 768.1 196.4C764.7 197.1 754.5 194.0 747.7 191.8C740.9 189.5 733.3 185.3 727.3 182.8C721.4 180.4 714.6 179.3 712.0 177.0C709.5 174.6 709.5 169.4 712.0 168.8Z" fill="#08c040"/>
<path d="M740.1 235.1C740.1 236.4 739.3 237.9 738.1 238.9C737.0 239.9 734.9 240.8 733.0 241.2C731.1 241.6 728.6 241.6 726.7 241.2C724.8 240.8 722.8 239.9 721.6 238.9C720.4 237.9 719.7 236.4 719.7 235.1C719.7 233.9 720.4 232.4 721.6 231.4C722.8 230.4 724.8 229.4 726.7 229.1C728.6 228.7 731.1 228.7 733.0 229.1C734.9 229.4 737.0 230.4 738.1 231.4C739.3 232.4 740.1 233.9 740.1 235.1Z" fill="#08c040"/>
<path d="M615.1 236.9C618.7 234.0 628.0 234.5 636.5 233.6C645.1 232.7 661.0 229.0 666.4 231.3C671.7 233.5 666.6 240.6 668.7 247.1C670.7 253.7 675.7 264.5 678.9 270.6C682.0 276.7 688.0 281.9 687.5 283.8C687.0 285.8 680.4 285.2 675.8 282.3C671.2 279.4 665.2 271.0 660.0 266.5C654.8 262.0 649.7 257.9 644.4 255.5C639.2 253.2 633.5 253.2 628.6 252.5C623.7 251.7 617.4 253.5 615.1 250.9C612.8 248.3 611.5 239.8 615.1 236.9Z" fill="#04982c"/>
<path d="M768.1 189.2C771.7 186.9 781.3 186.4 788.5 185.4C795.8 184.3 805.1 182.6 811.5 182.8C817.9 183.0 823.0 184.3 826.8 186.7C830.6 189.0 833.6 193.5 834.4 196.9C835.3 200.3 834.0 205.8 831.9 207.1C829.8 208.3 825.1 205.4 821.7 204.5C818.3 203.7 815.3 201.1 811.5 202.0C807.7 202.8 803.0 207.9 798.7 209.6C794.5 211.3 790.2 212.2 786.0 212.2C781.7 212.2 776.4 211.7 773.2 209.6C770.0 207.5 767.7 202.8 766.9 199.4C766.0 196.0 764.5 191.5 768.1 189.2Z" fill="#04982c"/>
<path d="M786.0 217.3C786.8 215.6 790.7 216.8 793.6 219.8C796.6 222.8 800.9 230.4 803.8 235.1C806.8 239.8 811.1 245.3 811.5 247.9C811.9 250.4 808.9 251.7 806.4 250.4C803.8 249.1 799.2 243.6 796.2 240.2C793.2 236.8 790.2 233.8 788.5 230.0C786.8 226.2 785.1 219.0 786.0 217.3Z" fill="#04982c"/>
<path d="M832.9 194.3C832.9 195.6 832.5 197.0 831.8 198.1C831.2 199.1 830.1 200.0 829.0 200.4C828.0 200.8 826.6 200.8 825.6 200.4C824.5 200.0 823.4 199.1 822.8 198.1C822.1 197.0 821.7 195.6 821.7 194.3C821.7 193.1 822.1 191.6 822.8 190.6C823.4 189.6 824.5 188.6 825.6 188.2C826.6 187.9 828.0 187.9 829.0 188.2C830.1 188.6 831.2 189.6 831.8 190.6C832.5 191.6 832.9 193.1 832.9 194.3Z" fill="#047424"/>
</g>
<g filter="url(#bl2)" fill="none" stroke-linejoin="round">
<path d="M638.1 209.0L640.6 211.2L645.1 213.3L652.2 212.3L650.9 215.0L644.5 215.8L643.2 216.6L647.1 220.3L652.2 223.8L656.1 224.7L662.5 222.5L664.4 219.3L665.7 216.6L667.0 219.8L667.0 222.5L667.6 226.3L667.3 232.7L668.3 236.5L669.6 241.4L670.9 245.7L673.4 251.6L675.4 255.9L678.6 261.8L680.5 266.7L683.7 272.1L686.9 275.8L688.9 281.2L690.8 286.1L692.7 289.3L695.3 291.7L698.2 292.7L700.4 291.5L702.4 288.2L706.9 286.6L709.4 286.1L707.2 284.5L709.4 280.7L713.0 280.4L713.0 275.8L712.6 271.5L715.2 267.2L715.9 264.0L714.6 259.7L714.2 255.4L715.9 252.1L719.7 251.1L722.3 248.4L728.7 246.7L728.7 244.6L735.1 240.8L740.3 237.6L745.4 232.2L749.9 229.8L754.4 228.4L757.6 226.3L758.9 223.0L759.6 220.3L764.1 219.3L766.6 218.7L769.2 219.8L772.4 219.3L771.8 216.0L770.8 211.2L769.2 206.9L766.0 204.2L767.3 200.9L771.1 199.9L767.9 197.2L766.6 195.6L769.2 193.7L773.1 195.6L776.9 196.4L777.2 199.9L782.1 200.7L791.1 200.7L794.0 202.0L791.7 204.7L788.5 206.1L785.9 207.4L785.6 210.6L788.2 212.5L790.1 209.6L792.7 208.5L793.0 212.8L794.6 217.6L798.1 216.6L798.8 212.3L800.1 207.4L804.9 207.7L808.4 201.5L807.8 198.8L811.6 196.1L811.0 192.9L818.1 189.1L823.9 190.2L822.9 186.9L825.5 184.2L820.6 182.6L818.7 178.8L813.6 179.4L807.8 178.3L801.4 181.5L795.6 185.3L789.1 186.4L791.7 189.1L791.1 191.5L781.4 191.8L776.9 192.3L771.1 191.2L770.2 189.6L770.8 188.0L771.1 185.9L769.2 184.8L766.0 185.9L765.7 189.1L766.3 193.9L760.9 193.9L752.5 192.9L747.4 191.8L743.5 189.1L739.6 188.3L735.1 188.8L731.3 186.9L726.1 185.9L722.3 184.2L717.8 181.5L714.2 180.7L716.5 176.7L719.7 173.5L720.4 173.2L715.2 171.3L712.6 169.4L708.8 167.5L705.9 166.5L705.6 160.5L710.1 160.5L710.7 157.3L715.2 153.0L716.5 147.6L715.9 144.9L710.7 142.7L703.6 144.4L700.4 142.2L693.4 139.0L686.9 137.9L679.2 136.5L674.1 137.4L668.9 138.4L666.4 141.1L669.6 144.4L669.6 148.1L671.8 150.8L672.8 154.1L675.4 157.3L678.6 159.5L683.7 162.1L679.2 164.3L678.6 168.6L674.7 172.4L671.5 175.1L668.3 179.9L664.4 181.5L661.9 185.9L654.1 186.9L649.6 190.7L650.3 193.4L650.9 197.7L655.4 201.5L656.7 203.6L649.6 205.8L641.9 205.3ZM617.5 199.9L627.1 199.3L630.4 202.6L633.6 207.4L638.1 209.0M617.5 176.7L625.9 175.1L625.9 169.1L635.5 167.0L645.1 164.3L646.4 158.4L649.6 156.8L651.6 153.5L656.7 153.0L659.9 147.6L657.4 142.2L660.6 139.5L665.7 137.9L674.1 137.4M660.6 139.5L659.9 132.0L658.0 131.4M617.5 135.2L627.1 134.9L635.5 136.3L638.7 136.3L645.1 136.0L650.9 133.6L654.8 131.4M674.1 137.4L681.1 135.2L680.5 131.4M720.4 173.2L723.6 172.4L727.4 172.9L733.2 176.7L739.0 178.3L740.9 180.5L746.7 182.1L750.6 183.7L752.5 185.3L758.3 185.3L763.4 186.1L766.0 185.9M770.8 188.0L773.7 185.9L776.9 184.2L780.8 184.8L786.6 185.3L789.1 186.4M772.4 219.3L778.2 218.2L782.1 215.5L785.9 215.0L789.8 216.0L791.1 220.9L793.0 224.7M794.6 217.6L794.9 221.4L793.0 224.7M793.0 224.7L797.5 229.0L802.0 233.8L805.9 239.2L807.1 244.6L805.9 250.0L812.3 251.6L816.8 247.8L821.9 244.6L824.5 246.2L827.7 250.0L828.4 255.4L830.3 260.8L833.5 268.8L833.5 276.9L833.5 282.3L831.6 287.7L831.6 293.1L834.1 292.0L836.7 296.3L840.6 299.6L842.5 301.2M833.5 281.2L836.1 276.9L839.3 272.6L836.7 266.1L830.9 255.4L833.5 250.0L828.4 241.9L827.7 236.5L835.4 229.5L842.5 226.3M825.5 184.2L830.3 187.5L834.1 188.0L834.1 196.1L827.1 202.6L827.7 206.9L834.8 206.3L836.1 211.2L839.3 214.4L842.5 219.3M842.5 264.0L841.9 268.8L838.0 279.6L837.4 284.5L841.9 286.1L842.5 290.4M713.3 283.4L715.9 285.0L721.6 290.4L725.5 295.8L724.9 300.6L720.4 303.3L715.2 304.1L713.0 299.6L712.6 293.6L713.3 288.2L714.2 286.1ZM811.6 305.7L814.2 305.5L820.0 307.9L826.4 307.9L829.6 311.4L831.6 314.6L816.1 314.6L812.9 309.8ZM796.2 263.4L797.5 264.5L797.0 270.5L795.7 274.2L795.1 272.1L795.7 268.3ZM794.3 278.0L794.9 279.6L793.6 279.6Z" stroke="#06100a" stroke-width="1.8" opacity=".95"/>
<path d="M656.7 203.6L665.7 204.7L669.6 204.7L675.4 210.6L677.3 215.5L675.4 219.8L674.1 225.2L671.5 227.3L667.6 227.3M675.4 210.6L681.1 207.4L683.7 202.6L689.5 205.8L694.0 204.2L694.0 199.9L697.2 199.3L702.4 191.8M702.4 191.8L697.9 189.6L696.6 186.4L694.0 186.9L689.5 185.3L686.9 183.2L681.8 178.8L678.6 178.3L674.7 174.8M678.6 177.2L684.4 175.6L689.5 175.1L693.4 172.4L694.0 169.7L690.1 167.0L687.6 163.8L685.6 161.6M685.6 161.6L690.1 158.4L694.6 158.9L700.4 160.0L703.6 161.1L705.6 160.5M698.5 172.4L701.1 169.1L706.2 168.1M694.0 169.7L698.5 172.4L695.9 177.2L695.9 181.0L696.6 183.2L697.9 185.9L696.6 186.4M698.5 172.4L703.0 176.2L706.9 177.8L710.1 180.5L714.2 180.7M702.4 191.8L707.5 192.9L706.9 198.2L703.6 199.9L704.9 204.2L711.4 200.9L716.5 201.5L722.3 200.9L726.1 202.6L728.7 203.6L731.9 206.9M731.9 206.9L735.1 204.2L736.4 201.5L739.6 198.2L743.5 197.2L740.9 193.9L739.0 190.7L739.6 188.3M735.1 204.2L741.6 204.7L750.6 203.6L755.7 204.2L760.9 202.0L764.1 200.4L765.4 193.9M764.1 200.4L762.1 205.3L758.3 207.9L752.5 209.6L752.5 212.3L757.6 216.0L758.9 218.2L762.1 219.5M757.6 216.0L752.5 215.0L746.7 217.1L741.6 215.5L739.6 215.0M739.6 215.0L737.1 211.2L735.1 207.4L731.9 206.9M731.9 206.9L724.9 207.9L724.2 212.8L719.7 216.0L717.1 220.3L716.5 221.4M675.4 219.8L683.1 220.9L689.5 222.0L693.4 219.8L702.4 220.3L710.7 219.8L716.5 221.4M716.5 221.4L717.8 226.8L717.1 231.7L715.9 234.9L713.3 231.7L707.5 230.6L703.0 231.1L699.8 236.0L697.9 237.6M697.9 237.6L694.0 240.8L690.1 243.0L685.6 244.6L681.8 245.1L677.3 247.3L677.3 251.1L673.4 251.6M677.3 251.1L676.6 255.4L675.7 255.9M697.9 237.6L697.9 243.0L697.2 247.8L694.6 251.1L695.3 255.4L693.4 255.9L697.2 259.7L702.4 262.9L703.0 267.8M703.0 267.8L699.1 268.3L696.6 272.6L690.8 273.7L686.3 270.5L681.1 267.2M690.8 273.7L693.4 279.1L695.9 281.2L695.9 285.5L695.9 289.9L695.3 291.5M703.0 267.8L709.4 265.1L713.9 263.4L715.9 263.4M697.2 247.8L703.0 250.0L709.4 247.3L713.9 245.1L716.5 244.6L720.4 240.3L719.1 238.1L715.9 234.9M739.6 215.0L736.4 219.8L735.8 221.4L730.6 225.7L729.4 229.0L726.8 233.8L726.1 236.0L722.9 239.7L720.4 240.3M722.9 239.7L729.4 237.0L733.9 234.9L739.6 233.8L744.8 233.3M791.1 191.5L797.5 190.7L805.2 187.5L813.6 185.9L816.8 188.5M777.2 196.6L784.6 196.6L792.4 196.6L796.2 198.8L794.0 202.0M799.4 197.2L803.9 193.4L811.6 190.7M797.5 203.1L800.1 198.2L807.8 198.8M792.7 205.8L797.5 204.7L800.1 207.4M792.7 205.8L792.7 208.5M776.9 192.3L777.2 196.4M766.3 190.2L770.2 189.6M675.4 157.3L676.6 153.0L675.4 149.2L685.0 149.8L693.4 148.1L699.8 144.9M703.6 161.1L706.9 156.8L706.2 151.9L703.0 149.8L699.8 144.9M694.0 181.0L696.6 181.0L696.6 182.9L694.0 182.6L694.0 181.0" stroke="#06100a" stroke-width="1.6" opacity=".9"/>
<path d="M796.2 263.4L797.5 264.5L797.0 270.5L795.7 274.2L795.1 272.1L795.7 268.3Z" fill="#0a140c" stroke="#0a140c" stroke-width=".3"/>
<path d="M666.4 273.1h1M663.8 275.8h1M667.0 279.1h1M668.9 281.8h1M664.4 281.8h1M802.6 298.5h1M796.2 286.6h1" stroke="#0a1a10" stroke-width="1.2"/>
</g></g>
<g filter="url(#bl2)">
<rect x="617.5" y="131.7" width="225.0" height="182.4" fill="none" stroke="#1c1c1c" stroke-width="1.7"/>
<text x="594.4" y="313.3" class="ax" textLength="15.6" lengthAdjust="spacingAndGlyphs">5N</text>
<text x="588.4" y="286.3" class="ax" textLength="21.6" lengthAdjust="spacingAndGlyphs">10N</text>
<text x="588.4" y="259.4" class="ax" textLength="21.6" lengthAdjust="spacingAndGlyphs">15N</text>
<text x="588.4" y="232.4" class="ax" textLength="21.6" lengthAdjust="spacingAndGlyphs">20N</text>
<text x="588.4" y="205.5" class="ax" textLength="21.6" lengthAdjust="spacingAndGlyphs">25N</text>
<text x="588.4" y="178.5" class="ax" textLength="21.6" lengthAdjust="spacingAndGlyphs">30N</text>
<text x="588.4" y="151.6" class="ax" textLength="21.6" lengthAdjust="spacingAndGlyphs">35N</text>
<text x="639.0" y="326.7" class="ax" textLength="21.2" lengthAdjust="spacingAndGlyphs">70E</text>
<text x="684.0" y="326.7" class="ax" textLength="21.2" lengthAdjust="spacingAndGlyphs">77E</text>
<text x="729.0" y="326.7" class="ax" textLength="21.2" lengthAdjust="spacingAndGlyphs">84E</text>
<text x="774.0" y="326.7" class="ax" textLength="21.2" lengthAdjust="spacingAndGlyphs">91E</text>
<text x="819.0" y="326.7" class="ax" textLength="21.2" lengthAdjust="spacingAndGlyphs">98E</text>
<path d="M617.5 309.3h-3M617.5 282.3h-3M617.5 255.4h-3M617.5 228.4h-3M617.5 201.5h-3M617.5 174.5h-3M617.5 147.6h-3M649.6 314.1v3M694.6 314.1v3M739.6 314.1v3M784.6 314.1v3M829.6 314.1v3" stroke="#222" stroke-width="1.2"/>
</g>
<clipPath id="tcm2"><rect x="891.8" y="131.7" width="224.2" height="182.4"/></clipPath>
<g clip-path="url(#tcm2)">
<g filter="url(#bl)">
<rect x="888.8" y="128.7" width="230.2" height="188.4" fill="#1ee673"/>
<path d="M889.1 129.3C902.3 116.7 955.4 126.1 968.2 129.3C980.9 132.5 966.9 143.1 965.6 148.4C964.3 153.7 960.1 157.3 960.5 161.2C960.9 165.0 966.5 167.5 968.2 171.4C969.9 175.2 971.6 180.3 970.7 184.1C969.9 187.9 966.0 191.3 963.1 194.3C960.1 197.3 957.5 200.7 952.9 202.0C948.2 203.2 941.4 202.2 935.0 202.0C928.6 201.8 922.3 200.3 914.6 200.7C907.0 201.1 893.4 216.4 889.1 204.5C884.9 192.6 875.9 141.8 889.1 129.3Z" fill="#80f5a8"/>
<path d="M986.0 129.3C1008.1 126.1 1096.5 121.0 1118.6 129.3C1140.7 137.6 1121.2 171.1 1118.6 179.0C1116.1 186.9 1108.4 177.1 1103.3 176.5C1098.2 175.8 1093.1 174.8 1088.0 175.2C1082.9 175.6 1077.4 177.7 1072.7 179.0C1068.1 180.3 1065.1 182.2 1060.0 182.8C1054.9 183.5 1048.5 183.9 1042.1 182.8C1035.8 181.8 1028.1 178.4 1021.7 176.5C1015.3 174.5 1009.0 173.5 1003.9 171.4C998.8 169.2 994.1 167.5 991.1 163.7C988.1 159.9 986.9 154.1 986.0 148.4C985.2 142.7 963.9 132.5 986.0 129.3Z" fill="#80f5a8"/>
<path d="M949.0 230.0C950.7 227.0 957.1 227.0 960.5 227.5C963.9 227.9 967.7 229.2 969.4 232.6C971.1 236.0 970.9 243.2 970.7 247.9C970.5 252.5 968.0 256.8 968.2 260.6C968.4 264.5 969.0 269.1 972.0 270.8C975.0 272.5 983.3 268.3 986.0 270.8C988.8 273.4 989.4 282.5 988.6 286.1C987.7 289.7 983.7 291.7 980.9 292.5C978.2 293.4 974.8 293.6 972.0 291.2C969.2 288.9 966.9 283.6 964.3 278.5C961.8 273.4 958.9 266.2 956.7 260.6C954.4 255.1 952.1 250.4 950.8 245.3C949.5 240.2 947.4 233.0 949.0 230.0Z" fill="#80f5a8"/>
<path d="M889.1 283.1C892.7 277.5 903.0 283.3 910.5 284.6C918.0 285.9 927.5 288.4 934.0 290.7C940.5 293.1 944.3 296.0 949.5 298.6C954.8 301.3 961.2 304.7 965.4 306.5C969.6 308.4 973.2 307.7 974.8 309.6C976.4 311.5 989.1 316.6 974.8 318.0C960.5 319.4 903.4 323.8 889.1 318.0C874.8 312.2 885.5 288.6 889.1 283.1Z" fill="#80f5a8"/>
<path d="M991.1 283.6C991.7 276.7 992.1 278.4 997.0 276.7C1001.9 275.0 1012.6 275.5 1020.5 273.6C1028.3 271.8 1036.9 267.8 1043.9 265.7C1051.0 263.6 1056.0 261.6 1062.8 261.1C1069.6 260.6 1079.0 261.4 1084.7 262.7C1090.5 263.9 1093.3 268.0 1097.2 268.8C1101.2 269.6 1106.4 265.2 1108.4 267.3C1110.5 269.3 1110.0 276.6 1109.7 281.0C1109.4 285.5 1108.7 291.4 1106.7 294.0C1104.6 296.7 1099.9 295.8 1097.2 297.1C1094.6 298.4 1094.5 301.4 1090.8 301.7C1087.2 301.9 1080.0 298.9 1075.3 298.6C1070.6 298.4 1066.7 298.3 1062.8 300.2C1058.9 302.0 1054.4 306.6 1051.8 309.6C1049.2 312.6 1056.9 316.6 1047.2 318.0C1037.5 319.4 1003.0 323.7 993.7 318.0C984.3 312.3 990.6 290.5 991.1 283.6Z" fill="#80f5a8"/>
<path d="M1084.2 216.0C1085.3 213.3 1092.0 211.0 1094.4 211.7C1096.8 212.3 1098.3 217.1 1098.8 219.8C1099.2 222.5 1098.8 226.6 1097.0 228.0C1095.2 229.3 1090.2 230.0 1088.0 228.0C1085.9 226.0 1083.1 218.7 1084.2 216.0Z" fill="#80f5a8"/>
<path d="M970.7 240.2C973.5 237.7 982.6 236.0 986.0 237.7C989.4 239.4 990.7 245.7 991.1 250.4C991.5 255.1 991.5 263.0 988.6 265.7C985.6 268.5 976.5 269.1 973.3 267.0C970.1 264.9 969.9 257.4 969.4 253.0C969.0 248.5 968.0 242.8 970.7 240.2Z" fill="#80f5a8"/>
<path d="M889.1 129.3C896.5 117.4 926.1 126.9 933.7 129.3C941.4 131.6 936.3 138.8 935.0 143.3C933.7 147.8 928.2 151.8 926.1 156.1C924.0 160.3 920.8 166.9 922.3 168.8C923.7 170.7 930.8 167.1 935.0 167.5C939.3 168.0 943.5 169.4 947.8 171.4C952.0 173.3 958.6 176.0 960.5 179.0C962.4 182.0 961.2 186.4 959.2 189.2C957.3 192.0 953.1 194.2 949.0 195.6C945.0 196.9 939.9 197.2 935.0 197.4C930.1 197.5 924.4 196.5 919.7 196.4C915.0 196.2 912.1 195.6 907.0 196.4C901.9 197.1 892.1 211.9 889.1 200.7C886.1 189.5 881.7 141.2 889.1 129.3Z" fill="#ffffff"/>
<path d="M936.3 159.9C938.6 157.5 946.7 156.3 950.3 157.3C953.9 158.4 956.9 162.9 958.0 166.3C959.0 169.7 958.8 175.6 956.7 177.7C954.6 179.9 948.6 180.1 945.2 179.0C941.8 177.9 937.8 174.5 936.3 171.4C934.8 168.2 933.9 162.2 936.3 159.9Z" fill="#80f5a8"/>
<path d="M988.6 153.5C987.9 149.9 989.8 144.8 991.1 140.8C992.4 136.7 987.5 131.2 996.2 129.3C1004.9 127.4 1036.4 126.9 1043.4 129.3C1050.4 131.6 1039.6 138.8 1038.3 143.3C1037.0 147.8 1036.6 152.4 1035.8 156.1C1034.9 159.7 1035.5 162.6 1033.2 165.0C1030.9 167.3 1026.2 169.7 1021.7 170.1C1017.3 170.5 1010.9 168.8 1006.4 167.5C1002.0 166.3 997.9 164.8 994.9 162.4C992.0 160.1 989.2 157.1 988.6 153.5Z" fill="#ffffff"/>
<path d="M951.6 138.2C952.9 135.0 953.9 132.9 960.5 131.8C967.1 130.8 985.6 129.1 991.1 131.8C996.6 134.6 994.1 143.5 993.7 148.4C993.2 153.3 992.0 158.6 988.6 161.2C985.2 163.7 977.9 164.1 973.3 163.7C968.6 163.3 963.9 160.7 960.5 158.6C957.1 156.5 954.4 154.4 952.9 151.0C951.4 147.6 950.3 141.4 951.6 138.2Z" fill="#80f5a8"/>
<path d="M961.8 143.8C963.0 141.5 966.7 140.1 970.7 139.5C974.8 138.9 983.0 138.8 986.0 140.2C989.0 141.7 989.0 145.4 988.8 148.4C988.6 151.4 987.3 156.3 984.7 158.1C982.2 159.9 976.8 160.1 973.3 159.4C969.7 158.6 965.5 156.1 963.6 153.5C961.7 150.9 960.6 146.2 961.8 143.8Z" fill="#ffffff"/>
<path d="M1104.1 169.6C1104.1 170.2 1103.6 171.0 1102.7 171.5C1101.9 172.0 1100.5 172.5 1099.2 172.7C1097.8 172.9 1096.1 172.9 1094.8 172.7C1093.4 172.5 1092.0 172.0 1091.2 171.5C1090.4 171.0 1089.8 170.2 1089.8 169.6C1089.8 168.9 1090.4 168.1 1091.2 167.6C1092.0 167.1 1093.4 166.6 1094.8 166.4C1096.1 166.2 1097.8 166.2 1099.2 166.4C1100.5 166.6 1101.9 167.1 1102.7 167.6C1103.6 168.1 1104.1 168.9 1104.1 169.6Z" fill="#ffffff"/>
<path d="M1042.1 292.5C1042.1 294.1 1041.7 296.0 1041.2 297.3C1040.6 298.6 1039.6 299.8 1038.6 300.3C1037.7 300.8 1036.4 300.8 1035.5 300.3C1034.5 299.8 1033.5 298.6 1032.9 297.3C1032.3 296.0 1031.9 294.1 1031.9 292.5C1031.9 290.9 1032.3 289.0 1032.9 287.7C1033.5 286.4 1034.5 285.2 1035.5 284.7C1036.4 284.2 1037.7 284.2 1038.6 284.7C1039.6 285.2 1040.6 286.4 1041.2 287.7C1041.7 289.0 1042.1 290.9 1042.1 292.5Z" fill="#ffffff"/>
<path d="M1010.2 287.4C1010.2 287.9 1009.8 288.4 1009.0 288.8C1008.3 289.1 1007.0 289.4 1005.8 289.6C1004.7 289.7 1003.1 289.7 1001.9 289.6C1000.7 289.4 999.4 289.1 998.7 288.8C998.0 288.4 997.5 287.9 997.5 287.4C997.5 287.0 998.0 286.4 998.7 286.1C999.4 285.7 1000.7 285.4 1001.9 285.2C1003.1 285.1 1004.7 285.1 1005.8 285.2C1007.0 285.4 1008.3 285.7 1009.0 286.1C1009.8 286.4 1010.2 287.0 1010.2 287.4Z" fill="#ffffff"/>
<path d="M1009.0 304.0C1009.0 304.9 1008.5 306.0 1007.8 306.7C1007.0 307.4 1005.8 308.1 1004.6 308.3C1003.4 308.6 1001.8 308.6 1000.6 308.3C999.4 308.1 998.2 307.4 997.4 306.7C996.7 306.0 996.2 304.9 996.2 304.0C996.2 303.1 996.7 302.0 997.4 301.3C998.2 300.6 999.4 299.9 1000.6 299.6C1001.8 299.3 1003.4 299.3 1004.6 299.6C1005.8 299.9 1007.0 300.6 1007.8 301.3C1008.5 302.0 1009.0 303.1 1009.0 304.0Z" fill="#ffffff"/>
<path d="M1031.4 307.8C1031.4 308.2 1031.1 308.6 1030.5 308.9C1030.0 309.1 1029.1 309.4 1028.2 309.5C1027.4 309.6 1026.3 309.6 1025.4 309.5C1024.6 309.4 1023.6 309.1 1023.1 308.9C1022.6 308.6 1022.2 308.2 1022.2 307.8C1022.2 307.5 1022.6 307.0 1023.1 306.8C1023.6 306.5 1024.6 306.2 1025.4 306.1C1026.3 306.0 1027.4 306.0 1028.2 306.1C1029.1 306.2 1030.0 306.5 1030.5 306.8C1031.1 307.0 1031.4 307.5 1031.4 307.8Z" fill="#ffffff"/>
<path d="M1081.2 280.5C1081.2 281.0 1080.9 281.6 1080.5 282.0C1080.1 282.4 1079.5 282.8 1078.9 282.9C1078.2 283.1 1077.4 283.1 1076.8 282.9C1076.2 282.8 1075.5 282.4 1075.2 282.0C1074.8 281.6 1074.5 281.0 1074.5 280.5C1074.5 280.0 1074.8 279.4 1075.2 279.0C1075.5 278.6 1076.2 278.2 1076.8 278.1C1077.4 277.9 1078.2 277.9 1078.9 278.1C1079.5 278.2 1080.1 278.6 1080.5 279.0C1080.9 279.4 1081.2 280.0 1081.2 280.5Z" fill="#ffffff"/>
<path d="M985.3 284.9C985.3 286.0 984.8 287.3 984.2 288.2C983.5 289.0 982.4 289.9 981.4 290.2C980.3 290.5 979.0 290.5 977.9 290.2C976.9 289.9 975.7 289.0 975.1 288.2C974.5 287.3 974.0 286.0 974.0 284.9C974.0 283.8 974.5 282.4 975.1 281.6C975.7 280.7 976.9 279.9 977.9 279.5C979.0 279.2 980.3 279.2 981.4 279.5C982.4 279.9 983.5 280.7 984.2 281.6C984.8 282.4 985.3 283.8 985.3 284.9Z" fill="#ffffff"/>
<path d="M1116.6 237.7C1116.6 239.7 1116.5 242.0 1116.3 243.7C1116.1 245.3 1115.7 246.8 1115.4 247.4C1115.0 248.0 1114.6 248.0 1114.3 247.4C1113.9 246.8 1113.6 245.3 1113.4 243.7C1113.2 242.0 1113.0 239.7 1113.0 237.7C1113.0 235.7 1113.2 233.3 1113.4 231.7C1113.6 230.1 1113.9 228.6 1114.3 228.0C1114.6 227.4 1115.0 227.4 1115.4 228.0C1115.7 228.6 1116.1 230.1 1116.3 231.7C1116.5 233.3 1116.6 235.7 1116.6 237.7Z" fill="#ffffff"/>
<path d="M899.6 310.1C901.4 308.1 904.8 306.2 910.5 305.8C916.3 305.3 927.5 306.5 934.0 307.3C940.5 308.1 946.4 308.6 949.5 310.4C952.7 312.1 961.2 316.7 952.9 318.0C944.5 319.3 908.4 319.3 899.6 318.0C890.7 316.7 897.7 312.1 899.6 310.1Z" fill="#ffffff"/>
<path d="M1048.8 148.4C1050.1 146.6 1055.3 145.3 1059.7 145.3C1064.1 145.3 1070.1 148.4 1075.3 148.4C1080.5 148.4 1083.6 146.4 1090.8 145.3C1098.1 144.3 1114.0 136.3 1118.6 142.0C1123.3 147.8 1122.2 174.3 1118.6 179.8C1115.1 185.3 1102.9 175.2 1097.2 174.9C1091.6 174.6 1088.9 178.0 1084.7 178.0C1080.6 178.0 1075.9 175.9 1072.2 174.9C1068.6 173.9 1064.9 174.0 1062.8 171.9C1060.7 169.8 1061.6 165.0 1059.7 162.4C1057.9 159.8 1053.6 158.6 1051.8 156.3C1050.0 154.0 1047.4 150.2 1048.8 148.4Z" fill="#1ee673"/>
<path d="M1103.6 169.6C1103.6 170.2 1103.1 170.9 1102.3 171.4C1101.6 171.9 1100.2 172.3 1099.0 172.5C1097.8 172.7 1096.2 172.7 1094.9 172.5C1093.7 172.3 1092.4 171.9 1091.6 171.4C1090.8 170.9 1090.3 170.2 1090.3 169.6C1090.3 169.0 1090.8 168.3 1091.6 167.8C1092.4 167.3 1093.7 166.8 1094.9 166.7C1096.2 166.5 1097.8 166.5 1099.0 166.7C1100.2 166.8 1101.6 167.3 1102.3 167.8C1103.1 168.3 1103.6 169.0 1103.6 169.6Z" fill="#ffffff"/>
<path d="M1104.6 137.2C1104.6 137.7 1103.6 138.3 1102.2 138.7C1100.7 139.1 1098.2 139.5 1095.8 139.6C1093.4 139.8 1090.3 139.8 1087.9 139.6C1085.5 139.5 1083.0 139.1 1081.5 138.7C1080.1 138.3 1079.1 137.7 1079.1 137.2C1079.1 136.7 1080.1 136.1 1081.5 135.7C1083.0 135.3 1085.5 134.9 1087.9 134.8C1090.3 134.6 1093.4 134.6 1095.8 134.8C1098.2 134.9 1100.7 135.3 1102.2 135.7C1103.6 136.1 1104.6 136.7 1104.6 137.2Z" fill="#ffffff"/>
<path d="M889.1 213.2C894.0 204.8 910.2 210.7 918.4 212.4C926.7 214.1 934.1 218.3 938.6 223.4C943.0 228.4 942.0 234.9 945.2 242.8C948.4 250.7 953.7 262.3 958.0 270.8C962.2 279.3 967.9 288.9 970.7 293.8C973.5 298.7 976.2 299.6 974.8 300.2C973.4 300.7 966.5 298.7 962.3 297.1C958.1 295.5 954.3 293.9 949.5 290.7C944.8 287.6 939.2 281.9 934.0 278.2C928.8 274.6 923.7 271.1 918.4 268.8C913.2 266.4 907.5 265.2 902.6 264.2C897.7 263.2 891.4 271.2 889.1 262.7C886.8 254.2 884.2 221.6 889.1 213.2Z" fill="#08c040"/>
<path d="M997.0 251.7C998.6 248.6 1002.5 250.0 1006.4 247.1C1010.3 244.2 1015.5 238.6 1020.5 234.4C1025.4 230.1 1030.0 225.0 1036.0 221.9C1042.0 218.8 1051.4 216.0 1056.4 215.7C1061.4 215.5 1062.2 216.4 1065.8 220.3C1069.5 224.2 1075.2 234.0 1078.3 239.2C1081.5 244.4 1085.2 249.5 1084.7 251.7C1084.2 253.9 1079.5 252.4 1075.3 252.5C1071.1 252.5 1065.0 251.2 1059.7 252.0C1054.5 252.7 1049.1 255.0 1043.9 256.8C1038.7 258.6 1033.6 261.4 1028.4 262.9C1023.1 264.5 1017.8 265.5 1012.5 266.0C1007.3 266.5 999.6 268.4 997.0 266.0C994.4 263.6 995.4 254.8 997.0 251.7Z" fill="#08c040"/>
<path d="M960.5 157.3C963.1 156.7 973.3 162.3 978.4 165.0C983.5 167.7 984.7 171.1 991.1 173.4C997.5 175.7 1008.1 176.4 1016.6 178.5C1025.1 180.6 1034.5 185.1 1042.1 186.2C1049.8 187.2 1054.9 186.0 1062.5 184.6C1070.2 183.3 1081.2 178.4 1088.0 178.0C1094.8 177.6 1098.2 179.3 1103.3 182.1C1108.4 184.8 1116.1 188.9 1118.6 194.3C1121.2 199.8 1120.8 211.7 1118.6 214.7C1116.5 217.7 1110.1 213.9 1105.9 212.2C1101.6 210.5 1097.8 206.2 1093.1 204.5C1088.5 202.8 1082.9 202.8 1077.8 202.0C1072.7 201.1 1067.6 200.1 1062.5 199.4C1057.4 198.8 1053.2 199.0 1047.2 198.1C1041.3 197.3 1033.6 195.4 1026.8 194.3C1020.0 193.2 1013.2 193.0 1006.4 191.8C999.6 190.5 992.0 188.8 986.0 186.7C980.1 184.5 974.5 182.0 970.7 179.0C966.9 176.0 964.8 172.4 963.1 168.8C961.4 165.2 958.0 158.0 960.5 157.3Z" fill="#08c040"/>
<path d="M970.7 179.0C973.7 176.0 984.3 176.0 991.1 176.5C997.9 176.9 1007.3 178.6 1011.5 181.6C1015.8 184.5 1017.5 191.1 1016.6 194.3C1015.8 197.5 1011.5 199.6 1006.4 200.7C1001.3 201.8 991.5 201.8 986.0 200.7C980.5 199.6 975.8 197.9 973.3 194.3C970.7 190.7 967.7 182.0 970.7 179.0Z" fill="#08c040"/>
<path d="M952.9 212.2C956.5 210.0 966.9 209.2 973.3 209.6C979.6 210.0 987.7 212.2 991.1 214.7C994.5 217.3 995.4 222.4 993.7 224.9C992.0 227.5 986.4 229.4 980.9 230.0C975.4 230.7 965.4 230.0 960.5 228.7C955.6 227.5 952.9 225.1 951.6 222.4C950.3 219.6 949.2 214.3 952.9 212.2Z" fill="#08c040"/>
<path d="M889.1 223.4C891.9 218.7 898.2 220.6 905.7 220.3C913.2 220.1 928.2 220.0 934.0 221.9C939.8 223.7 938.8 227.6 940.4 231.3C941.9 235.0 941.3 238.6 943.4 243.8C945.5 249.0 950.0 256.9 952.9 262.7C955.7 268.4 958.4 273.8 960.5 278.2C962.6 282.6 966.1 288.1 965.4 289.2C964.6 290.3 959.1 287.4 955.9 284.6C952.8 281.8 950.1 276.3 946.5 272.1C942.8 267.9 937.4 263.3 934.0 259.6C930.6 255.9 930.0 252.3 926.1 250.2C922.2 248.1 916.7 247.4 910.5 247.1C904.4 246.9 892.7 252.6 889.1 248.6C885.5 244.7 886.3 228.1 889.1 223.4Z" fill="#04982c"/>
<path d="M1009.5 250.2C1010.8 248.1 1016.5 244.1 1020.5 240.7C1024.4 237.3 1028.2 232.7 1032.9 229.8C1037.7 226.9 1043.8 224.7 1048.8 223.4C1053.7 222.1 1058.9 220.5 1062.8 221.9C1066.7 223.2 1069.9 228.1 1072.2 231.3C1074.6 234.4 1077.9 239.4 1076.8 240.7C1075.8 242.0 1070.0 239.5 1065.8 239.2C1061.7 238.9 1056.8 238.2 1051.8 239.2C1046.8 240.2 1041.0 243.2 1036.0 245.3C1031.0 247.4 1025.9 250.4 1022.0 251.7C1018.1 253.0 1014.6 253.5 1012.5 253.2C1010.5 253.0 1008.2 252.3 1009.5 250.2Z" fill="#04982c"/>
<path d="M1077.8 185.4C1080.2 183.5 1088.5 180.3 1093.1 180.3C1097.8 180.3 1102.5 182.6 1105.9 185.4C1109.3 188.1 1112.7 193.7 1113.5 196.9C1114.4 200.1 1113.1 203.7 1111.0 204.5C1108.9 205.4 1104.6 203.7 1100.8 202.0C1097.0 200.3 1091.7 196.0 1088.0 194.3C1084.4 192.6 1080.8 193.2 1079.1 191.8C1077.4 190.3 1075.5 187.3 1077.8 185.4Z" fill="#04982c"/>
<path d="M1106.7 193.0C1106.7 193.9 1106.3 195.0 1105.8 195.7C1105.3 196.5 1104.3 197.1 1103.5 197.4C1102.6 197.7 1101.5 197.7 1100.6 197.4C1099.8 197.1 1098.9 196.5 1098.4 195.7C1097.8 195.0 1097.5 193.9 1097.5 193.0C1097.5 192.1 1097.8 191.1 1098.4 190.3C1098.9 189.6 1099.8 188.9 1100.6 188.7C1101.5 188.4 1102.6 188.4 1103.5 188.7C1104.3 188.9 1105.3 189.6 1105.8 190.3C1106.3 191.1 1106.7 192.1 1106.7 193.0Z" fill="#047424"/>
</g>
<g filter="url(#bl2)" fill="none" stroke-linejoin="round">
<path d="M912.3 209.0L914.9 211.2L919.3 213.3L926.4 212.3L925.1 215.0L918.7 215.8L917.4 216.6L921.3 220.3L926.4 223.8L930.2 224.7L936.6 222.5L938.6 219.3L939.8 216.6L941.1 219.8L941.1 222.5L941.8 226.3L941.4 232.7L942.4 236.5L943.7 241.4L945.0 245.7L947.5 251.6L949.5 255.9L952.7 261.8L954.6 266.7L957.8 272.1L961.0 275.8L962.9 281.2L964.8 286.1L966.7 289.3L969.3 291.7L972.2 292.7L974.4 291.5L976.4 288.2L980.8 286.6L983.4 286.1L981.2 284.5L983.4 280.7L986.9 280.4L986.9 275.8L986.6 271.5L989.2 267.2L989.8 264.0L988.5 259.7L988.2 255.4L989.8 252.1L993.7 251.1L996.2 248.4L1002.6 246.7L1002.6 244.6L1009.0 240.8L1014.1 237.6L1019.3 232.2L1023.8 229.8L1028.2 228.4L1031.4 226.3L1032.7 223.0L1033.4 220.3L1037.9 219.3L1040.4 218.7L1043.0 219.8L1046.2 219.3L1045.5 216.0L1044.6 211.2L1043.0 206.9L1039.8 204.2L1041.1 200.9L1044.9 199.9L1041.7 197.2L1040.4 195.6L1043.0 193.7L1046.8 195.6L1050.7 196.4L1051.0 199.9L1055.8 200.7L1064.8 200.7L1067.6 202.0L1065.4 204.7L1062.2 206.1L1059.6 207.4L1059.3 210.6L1061.9 212.5L1063.8 209.6L1066.4 208.5L1066.7 212.8L1068.3 217.6L1071.8 216.6L1072.4 212.3L1073.7 207.4L1078.5 207.7L1082.0 201.5L1081.4 198.8L1085.3 196.1L1084.6 192.9L1091.7 189.1L1097.4 190.2L1096.5 186.9L1099.0 184.2L1094.2 182.6L1092.3 178.8L1087.2 179.4L1081.4 178.3L1075.0 181.5L1069.2 185.3L1062.8 186.4L1065.4 189.1L1064.8 191.5L1055.1 191.8L1050.7 192.3L1044.9 191.2L1043.9 189.6L1044.6 188.0L1044.9 185.9L1043.0 184.8L1039.8 185.9L1039.5 189.1L1040.1 193.9L1034.6 193.9L1026.3 192.9L1021.2 191.8L1017.4 189.1L1013.5 188.3L1009.0 188.8L1005.2 186.9L1000.1 185.9L996.2 184.2L991.7 181.5L988.2 180.7L990.4 176.7L993.7 173.5L994.3 173.2L989.2 171.3L986.6 169.4L982.8 167.5L979.9 166.5L979.6 160.5L984.0 160.5L984.7 157.3L989.2 153.0L990.4 147.6L989.8 144.9L984.7 142.7L977.6 144.4L974.4 142.2L967.4 139.0L961.0 137.9L953.3 136.5L948.2 137.4L943.0 138.4L940.5 141.1L943.7 144.4L943.7 148.1L945.9 150.8L946.9 154.1L949.5 157.3L952.7 159.5L957.8 162.1L953.3 164.3L952.7 168.6L948.8 172.4L945.6 175.1L942.4 179.9L938.6 181.5L936.0 185.9L928.3 186.9L923.8 190.7L924.5 193.4L925.1 197.7L929.6 201.5L930.9 203.6L923.8 205.8L916.1 205.3ZM891.8 199.9L901.4 199.3L904.6 202.6L907.8 207.4L912.3 209.0M891.8 176.7L900.1 175.1L900.1 169.1L909.7 167.0L919.3 164.3L920.6 158.4L923.8 156.8L925.8 153.5L930.9 153.0L934.1 147.6L931.5 142.2L934.7 139.5L939.8 137.9L948.2 137.4M934.7 139.5L934.1 132.0L932.2 131.4M891.8 135.2L901.4 134.9L909.7 136.3L912.9 136.3L919.3 136.0L925.1 133.6L929.0 131.4M948.2 137.4L955.2 135.2L954.6 131.4M994.3 173.2L997.5 172.4L1001.3 172.9L1007.1 176.7L1012.9 178.3L1014.8 180.5L1020.6 182.1L1024.4 183.7L1026.3 185.3L1032.1 185.3L1037.2 186.1L1039.8 185.9M1044.6 188.0L1047.5 185.9L1050.7 184.2L1054.5 184.8L1060.3 185.3L1062.8 186.4M1046.2 219.3L1051.9 218.2L1055.8 215.5L1059.6 215.0L1063.5 216.0L1064.8 220.9L1066.7 224.7M1068.3 217.6L1068.6 221.4L1066.7 224.7M1066.7 224.7L1071.2 229.0L1075.6 233.8L1079.5 239.2L1080.8 244.6L1079.5 250.0L1085.9 251.6L1090.4 247.8L1095.5 244.6L1098.1 246.2L1101.3 250.0L1101.9 255.4L1103.8 260.8L1107.0 268.8L1107.0 276.9L1107.0 282.3L1105.1 287.7L1105.1 293.1L1107.7 292.0L1110.2 296.3L1114.1 299.6L1116.0 301.2M1107.0 281.2L1109.6 276.9L1112.8 272.6L1110.2 266.1L1104.5 255.4L1107.0 250.0L1101.9 241.9L1101.3 236.5L1109.0 229.5L1116.0 226.3M1099.0 184.2L1103.8 187.5L1107.7 188.0L1107.7 196.1L1100.6 202.6L1101.3 206.9L1108.3 206.3L1109.6 211.2L1112.8 214.4L1116.0 219.3M1116.0 264.0L1115.4 268.8L1111.5 279.6L1110.9 284.5L1115.4 286.1L1116.0 290.4M987.2 283.4L989.8 285.0L995.6 290.4L999.4 295.8L998.8 300.6L994.3 303.3L989.2 304.1L986.9 299.6L986.6 293.6L987.2 288.2L988.2 286.1ZM1085.3 305.7L1087.8 305.5L1093.6 307.9L1100.0 307.9L1103.2 311.4L1105.1 314.6L1089.7 314.6L1086.5 309.8ZM1069.9 263.4L1071.2 264.5L1070.6 270.5L1069.4 274.2L1068.7 272.1L1069.4 268.3ZM1068.0 278.0L1068.6 279.6L1067.3 279.6Z" stroke="#06100a" stroke-width="1.8" opacity=".95"/>
<path d="M930.9 203.6L939.8 204.7L943.7 204.7L949.5 210.6L951.4 215.5L949.5 219.8L948.2 225.2L945.6 227.3L941.8 227.3M949.5 210.6L955.2 207.4L957.8 202.6L963.5 205.8L968.0 204.2L968.0 199.9L971.2 199.3L976.4 191.8M976.4 191.8L971.9 189.6L970.6 186.4L968.0 186.9L963.5 185.3L961.0 183.2L955.9 178.8L952.7 178.3L948.8 174.8M952.7 177.2L958.4 175.6L963.5 175.1L967.4 172.4L968.0 169.7L964.2 167.0L961.6 163.8L959.7 161.6M959.7 161.6L964.2 158.4L968.7 158.9L974.4 160.0L977.6 161.1L979.6 160.5M972.5 172.4L975.1 169.1L980.2 168.1M968.0 169.7L972.5 172.4L969.9 177.2L969.9 181.0L970.6 183.2L971.9 185.9L970.6 186.4M972.5 172.4L977.0 176.2L980.8 177.8L984.0 180.5L988.2 180.7M976.4 191.8L981.5 192.9L980.8 198.2L977.6 199.9L978.9 204.2L985.3 200.9L990.4 201.5L996.2 200.9L1000.1 202.6L1002.6 203.6L1005.8 206.9M1005.8 206.9L1009.0 204.2L1010.3 201.5L1013.5 198.2L1017.4 197.2L1014.8 193.9L1012.9 190.7L1013.5 188.3M1009.0 204.2L1015.4 204.7L1024.4 203.6L1029.5 204.2L1034.6 202.0L1037.9 200.4L1039.1 193.9M1037.9 200.4L1035.9 205.3L1032.1 207.9L1026.3 209.6L1026.3 212.3L1031.4 216.0L1032.7 218.2L1035.9 219.5M1031.4 216.0L1026.3 215.0L1020.6 217.1L1015.4 215.5L1013.5 215.0M1013.5 215.0L1010.9 211.2L1009.0 207.4L1005.8 206.9M1005.8 206.9L998.8 207.9L998.1 212.8L993.7 216.0L991.1 220.3L990.4 221.4M949.5 219.8L957.1 220.9L963.5 222.0L967.4 219.8L976.4 220.3L984.7 219.8L990.4 221.4M990.4 221.4L991.7 226.8L991.1 231.7L989.8 234.9L987.2 231.7L981.5 230.6L977.0 231.1L973.8 236.0L971.9 237.6M971.9 237.6L968.0 240.8L964.2 243.0L959.7 244.6L955.9 245.1L951.4 247.3L951.4 251.1L947.5 251.6M951.4 251.1L950.7 255.4L949.8 255.9M971.9 237.6L971.9 243.0L971.2 247.8L968.7 251.1L969.3 255.4L967.4 255.9L971.2 259.7L976.4 262.9L977.0 267.8M977.0 267.8L973.2 268.3L970.6 272.6L964.8 273.7L960.3 270.5L955.2 267.2M964.8 273.7L967.4 279.1L969.9 281.2L969.9 285.5L969.9 289.9L969.3 291.5M977.0 267.8L983.4 265.1L987.9 263.4L989.8 263.4M971.2 247.8L977.0 250.0L983.4 247.3L987.9 245.1L990.4 244.6L994.3 240.3L993.0 238.1L989.8 234.9M1013.5 215.0L1010.3 219.8L1009.7 221.4L1004.5 225.7L1003.3 229.0L1000.7 233.8L1000.1 236.0L996.9 239.7L994.3 240.3M996.9 239.7L1003.3 237.0L1007.7 234.9L1013.5 233.8L1018.6 233.3M1064.8 191.5L1071.2 190.7L1078.8 187.5L1087.2 185.9L1090.4 188.5M1051.0 196.6L1058.3 196.6L1066.0 196.6L1069.9 198.8L1067.6 202.0M1073.1 197.2L1077.6 193.4L1085.3 190.7M1071.2 203.1L1073.7 198.2L1081.4 198.8M1066.4 205.8L1071.2 204.7L1073.7 207.4M1066.4 205.8L1066.4 208.5M1050.7 192.3L1051.0 196.4M1040.1 190.2L1043.9 189.6M949.5 157.3L950.7 153.0L949.5 149.2L959.1 149.8L967.4 148.1L973.8 144.9M977.6 161.1L980.8 156.8L980.2 151.9L977.0 149.8L973.8 144.9M968.0 181.0L970.6 181.0L970.6 182.9L968.0 182.6L968.0 181.0" stroke="#06100a" stroke-width="1.6" opacity=".9"/>
<path d="M1069.9 263.4L1071.2 264.5L1070.6 270.5L1069.4 274.2L1068.7 272.1L1069.4 268.3Z" fill="#0a140c" stroke="#0a140c" stroke-width=".3"/>
<path d="M940.5 273.1h1M937.9 275.8h1M941.1 279.1h1M943.0 281.8h1M938.6 281.8h1M1076.3 298.5h1M1069.9 286.6h1" stroke="#0a1a10" stroke-width="1.2"/>
</g></g>
<g filter="url(#bl2)">
<rect x="891.8" y="131.7" width="224.2" height="182.4" fill="none" stroke="#1c1c1c" stroke-width="1.7"/>
<text x="868.7" y="313.3" class="ax" textLength="15.6" lengthAdjust="spacingAndGlyphs">5N</text>
<text x="862.7" y="286.3" class="ax" textLength="21.6" lengthAdjust="spacingAndGlyphs">10N</text>
<text x="862.7" y="259.4" class="ax" textLength="21.6" lengthAdjust="spacingAndGlyphs">15N</text>
<text x="862.7" y="232.4" class="ax" textLength="21.6" lengthAdjust="spacingAndGlyphs">20N</text>
<text x="862.7" y="205.5" class="ax" textLength="21.6" lengthAdjust="spacingAndGlyphs">25N</text>
<text x="862.7" y="178.5" class="ax" textLength="21.6" lengthAdjust="spacingAndGlyphs">30N</text>
<text x="862.7" y="151.6" class="ax" textLength="21.6" lengthAdjust="spacingAndGlyphs">35N</text>
<text x="913.2" y="326.7" class="ax" textLength="21.2" lengthAdjust="spacingAndGlyphs">70E</text>
<text x="958.1" y="326.7" class="ax" textLength="21.2" lengthAdjust="spacingAndGlyphs">77E</text>
<text x="1002.9" y="326.7" class="ax" textLength="21.2" lengthAdjust="spacingAndGlyphs">84E</text>
<text x="1047.7" y="326.7" class="ax" textLength="21.2" lengthAdjust="spacingAndGlyphs">91E</text>
<text x="1092.6" y="326.7" class="ax" textLength="21.2" lengthAdjust="spacingAndGlyphs">98E</text>
<path d="M891.8 309.3h-3M891.8 282.3h-3M891.8 255.4h-3M891.8 228.4h-3M891.8 201.5h-3M891.8 174.5h-3M891.8 147.6h-3M923.8 314.1v3M968.7 314.1v3M1013.5 314.1v3M1058.3 314.1v3M1103.2 314.1v3" stroke="#222" stroke-width="1.2"/>
</g>
<clipPath id="tcm3"><rect x="620.6" y="445.0" width="217.6" height="177.3"/></clipPath>
<g clip-path="url(#tcm3)">
<g filter="url(#bl)">
<rect x="617.6" y="442.0" width="223.6" height="183.3" fill="#ffffff"/>
<path d="M618.1 442.3C643.8 442.3 804.1 438.4 841.3 442.3C878.5 446.1 844.5 461.2 841.3 465.2C838.1 469.3 828.7 466.5 822.1 466.5C815.6 466.5 809.4 465.9 801.7 465.2C794.1 464.6 784.7 462.9 776.2 462.7C767.7 462.5 758.4 463.3 750.7 464.0C743.1 464.6 735.8 465.3 730.3 466.5C724.8 467.7 722.2 470.0 717.6 471.1C712.9 472.2 706.9 473.6 702.3 472.9C697.6 472.1 692.1 471.6 689.5 466.5C687.0 461.4 698.9 446.3 687.0 442.3C675.1 438.2 592.4 442.3 618.1 442.3Z" fill="#c6cae9"/>
<path d="M618.1 442.3C630.0 439.1 677.2 439.9 689.5 442.3C701.8 444.6 692.1 451.0 692.1 456.3C692.1 461.6 690.4 469.1 689.5 474.2C688.7 479.3 689.9 483.7 687.0 486.9C684.0 490.1 677.2 492.4 671.7 493.3C666.1 494.1 658.5 493.9 653.8 492.0C649.1 490.1 645.7 486.1 643.6 481.8C641.5 477.6 643.6 469.7 641.1 466.5C638.5 463.3 632.1 463.5 628.3 462.7C624.5 461.8 619.8 464.8 618.1 461.4C616.4 458.0 606.2 445.5 618.1 442.3Z" fill="#c6cae9"/>
<path d="M715.0 452.5C717.6 451.1 726.9 450.1 732.9 449.9C738.8 449.7 747.5 450.1 750.7 451.2C753.9 452.3 754.6 455.5 752.0 456.8C749.5 458.2 741.2 459.1 735.4 459.4C729.7 459.6 721.0 459.5 717.6 458.3C714.2 457.2 712.5 453.9 715.0 452.5Z" fill="#9090c6"/>
<path d="M804.3 457.6C806.2 456.0 812.4 454.6 817.0 454.3C821.7 454.0 829.6 454.5 832.3 455.8C835.1 457.1 836.2 460.5 833.6 461.9C831.1 463.4 821.7 464.2 817.0 464.5C812.4 464.7 807.7 464.6 805.6 463.4C803.4 462.3 802.4 459.1 804.3 457.6Z" fill="#9090c6"/>
<path d="M661.5 448.7C664.6 447.6 675.8 447.8 679.3 449.9C682.8 452.1 682.3 457.8 682.4 461.4C682.5 465.0 682.2 469.1 679.8 471.6C677.4 474.2 670.6 474.2 667.8 476.7C665.0 479.3 666.2 485.0 663.0 486.9C659.8 488.8 652.3 489.5 648.7 488.2C645.1 486.9 642.0 482.2 641.6 479.3C641.1 476.3 643.7 472.5 646.2 470.3C648.6 468.2 654.0 468.8 656.4 466.5C658.7 464.2 659.3 459.3 660.2 456.3C661.0 453.3 658.3 449.7 661.5 448.7Z" fill="#9090c6"/>
<path d="M662.0 456.3C663.9 454.0 671.7 453.3 674.2 455.0C676.7 456.7 677.4 463.7 676.8 466.5C676.1 469.3 672.7 471.2 670.4 471.6C668.0 472.0 664.1 471.6 662.7 469.1C661.3 466.5 660.1 458.6 662.0 456.3Z" fill="#6666aa"/>
<path d="M715.0 479.3C718.4 477.1 726.9 474.4 735.4 472.9C743.9 471.4 755.8 470.5 766.0 470.3C776.2 470.1 788.1 471.8 796.6 471.6C805.1 471.4 809.6 469.9 817.0 469.1C824.5 468.2 837.2 462.5 841.3 466.5C845.3 470.5 843.6 489.0 841.3 493.3C838.9 497.5 832.1 492.9 827.2 492.0C822.4 491.2 817.9 488.4 811.9 488.2C806.0 488.0 798.3 489.5 791.5 490.7C784.7 492.0 777.9 495.2 771.1 495.8C764.3 496.5 757.5 495.6 750.7 494.6C743.9 493.5 736.3 490.9 730.3 489.5C724.4 488.0 717.6 487.3 715.0 485.6C712.5 483.9 711.6 481.4 715.0 479.3Z" fill="#fdf0a8"/>
<path d="M826.0 467.8C828.3 465.9 838.7 462.3 841.3 465.2C843.8 468.2 842.8 482.4 841.3 485.6C839.8 488.8 834.7 485.8 832.3 484.4C830.0 482.9 828.3 479.5 827.2 476.7C826.2 473.9 823.6 469.7 826.0 467.8Z" fill="#fdc860"/>
<path d="M697.2 490.7C700.7 489.0 708.6 489.9 715.0 490.7C721.4 491.6 730.7 493.5 735.4 495.8C740.2 498.2 742.7 501.5 743.6 504.8C744.4 508.0 743.6 512.8 740.5 515.5C737.5 518.1 730.3 520.1 725.2 520.6C720.1 521.0 714.2 519.7 709.9 518.0C705.7 516.3 702.4 513.2 699.7 510.4C697.1 507.5 694.5 504.2 694.1 500.9C693.7 497.7 693.7 492.4 697.2 490.7Z" fill="#fdf0a8"/>
<path d="M698.4 478.7C700.5 478.4 705.5 480.0 709.9 481.3C714.4 482.6 720.1 484.7 725.2 486.4C730.3 488.1 735.3 490.0 740.5 491.5C745.7 493.0 754.0 494.1 756.3 495.6C758.7 497.0 757.9 499.7 754.8 500.2C751.7 500.7 743.8 499.7 738.0 498.6C732.2 497.5 725.6 495.2 720.1 493.5C714.6 491.9 708.6 490.6 704.8 488.9C701.1 487.2 698.7 485.0 697.7 483.3C696.6 481.6 696.4 479.1 698.4 478.7Z" fill="#fdc860"/>
<path d="M702.3 483.1C702.9 482.0 707.4 482.2 709.9 483.1C712.5 483.9 716.7 486.8 717.6 488.2C718.4 489.6 716.9 491.3 715.0 491.5C713.1 491.7 708.2 490.9 706.1 489.5C704.0 488.1 701.6 484.1 702.3 483.1Z" fill="#fd9428"/>
<path d="M662.7 517.0C665.4 515.1 673.6 514.5 679.3 514.5C685.1 514.5 691.2 515.7 697.2 517.0C703.1 518.3 711.0 519.9 715.0 522.1C719.1 524.3 723.1 528.4 721.4 530.3C719.7 532.1 710.1 533.2 704.8 533.3C699.5 533.4 694.6 531.4 689.5 530.8C684.4 530.1 678.5 530.4 674.2 529.5C669.9 528.7 665.4 527.8 663.5 525.7C661.6 523.6 660.1 518.9 662.7 517.0Z" fill="#fdf0a8"/>
<path d="M678.0 518.0C679.8 516.5 686.1 516.6 689.5 517.0C692.9 517.4 697.2 518.7 698.4 520.6C699.7 522.4 699.1 526.7 697.2 528.2C695.3 529.7 690.0 529.8 687.0 529.5C683.9 529.2 680.3 528.4 678.8 526.4C677.3 524.5 676.3 519.6 678.0 518.0Z" fill="#fdc860"/>
<path d="M664.8 520.1C666.6 519.2 672.2 519.6 674.2 522.6C676.2 525.6 675.8 532.8 676.8 537.9C677.7 543.0 678.6 548.9 679.8 553.2C681.0 557.6 684.2 562.1 683.9 563.9C683.6 565.7 679.9 566.1 678.0 563.9C676.2 561.7 674.7 555.0 672.9 550.7C671.2 546.3 669.2 541.7 667.6 537.9C666.0 534.1 664.0 530.7 663.5 527.7C663.0 524.7 663.0 520.9 664.8 520.1Z" fill="#fdc860"/>
<path d="M669.6 535.4C670.1 533.5 673.0 532.0 674.2 534.1C675.4 536.2 676.1 544.3 676.8 548.1C677.4 551.9 678.5 555.8 678.0 557.0C677.6 558.3 675.4 557.7 674.2 555.8C673.1 553.9 671.9 549.0 671.2 545.6C670.4 542.2 669.1 537.3 669.6 535.4Z" fill="#fd9428"/>
<path d="M618.1 527.7C622.4 526.3 635.5 527.0 643.6 527.2C651.7 527.4 662.5 527.5 666.6 529.0C670.6 530.4 671.7 534.6 667.8 535.9C664.0 537.2 651.9 536.6 643.6 536.6C635.3 536.6 622.4 537.4 618.1 535.9C613.9 534.4 613.9 529.2 618.1 527.7Z" fill="#fdf0a8"/>
<path d="M618.1 577.5C622.4 569.4 636.0 574.0 643.6 574.9C651.3 575.8 658.5 578.7 664.0 582.6C669.5 586.4 674.0 592.5 676.8 597.9C679.5 603.2 682.7 610.2 680.6 614.4C678.5 618.7 674.4 621.9 664.0 623.4C653.6 624.8 625.8 631.0 618.1 623.4C610.4 615.7 613.9 585.5 618.1 577.5Z" fill="#fdf0a8"/>
<path d="M620.7 586.4C622.4 581.5 628.7 582.8 633.4 582.6C638.1 582.3 645.1 582.8 648.7 585.1C652.3 587.4 654.7 592.5 655.1 596.6C655.5 600.6 654.0 606.6 651.3 609.3C648.5 612.1 643.2 612.7 638.5 613.2C633.8 613.6 626.2 616.3 623.2 611.9C620.2 607.4 619.0 591.3 620.7 586.4Z" fill="#fdc860"/>
<path d="M670.4 583.8C672.1 580.9 677.0 576.6 680.6 576.2C684.2 575.8 689.1 578.3 692.1 581.3C695.0 584.3 697.0 590.0 698.4 594.0C699.9 598.1 702.9 603.2 701.0 605.5C699.1 607.8 691.2 608.5 687.0 608.1C682.7 607.6 678.2 605.3 675.5 603.0C672.7 600.6 671.2 597.2 670.4 594.0C669.5 590.8 668.7 586.8 670.4 583.8Z" fill="#fdc860"/>
<path d="M677.0 585.9C678.0 583.8 680.3 580.0 681.9 579.5C683.4 578.9 684.6 580.7 686.5 582.6C688.3 584.4 691.0 587.8 692.8 590.5C694.7 593.1 697.2 596.3 697.4 598.4C697.7 600.4 696.4 602.2 694.4 603.0C692.3 603.7 687.6 603.7 684.9 603.0C682.3 602.2 680.0 600.2 678.5 598.4C677.1 596.5 676.5 594.1 676.3 592.0C676.0 589.9 676.1 588.0 677.0 585.9Z" fill="#fd9428"/>
<path d="M619.4 541.7C621.1 536.1 625.5 534.6 630.9 533.3C636.2 532.1 645.3 533.0 651.3 534.1C657.2 535.2 662.5 537.2 666.6 540.0C670.6 542.7 673.3 545.9 675.5 550.7C677.7 555.4 679.6 563.0 679.8 568.5C680.0 574.0 678.8 581.1 676.8 583.8C674.8 586.6 671.2 586.6 667.8 585.1C664.4 583.6 661.2 577.0 656.4 574.9C651.5 572.8 644.5 573.6 638.5 572.3C632.6 571.1 623.8 572.3 620.7 567.2C617.5 562.1 617.7 547.4 619.4 541.7Z" fill="#c6cae9"/>
<path d="M620.7 540.5C622.5 535.0 627.2 536.4 631.6 535.6C636.1 534.8 643.3 534.8 647.4 535.6C651.6 536.4 653.8 538.6 656.6 540.5C659.5 542.3 662.4 544.0 664.5 546.6C666.6 549.2 668.3 552.6 669.4 556.0C670.4 559.4 671.2 563.1 670.9 567.0C670.6 570.9 669.2 577.7 667.6 579.5C666.0 581.3 663.0 579.5 661.5 578.0C659.9 576.4 660.7 572.1 658.4 570.1C656.1 568.0 651.9 566.0 647.4 565.5C643.0 565.0 636.1 566.5 631.6 567.0C627.2 567.5 622.5 572.9 620.7 568.5C618.8 564.1 618.8 546.0 620.7 540.5Z" fill="#9090c6"/>
<path d="M620.7 542.0C622.5 538.1 628.0 538.5 631.6 537.9C635.3 537.4 639.4 537.5 642.6 538.7C645.7 539.9 649.7 542.4 650.5 545.1C651.3 547.7 649.5 551.9 647.4 554.5C645.3 557.1 642.5 559.5 638.0 560.6C633.5 561.8 623.5 564.5 620.7 561.4C617.8 558.3 618.8 545.9 620.7 542.0Z" fill="#6666aa"/>
<path d="M636.0 548.9C636.0 549.3 635.7 549.9 635.4 550.2C635.1 550.6 634.5 550.9 634.0 551.1C633.5 551.2 632.8 551.2 632.3 551.1C631.8 550.9 631.2 550.6 630.9 550.2C630.6 549.9 630.3 549.3 630.3 548.9C630.3 548.4 630.6 547.9 630.9 547.5C631.2 547.2 631.8 546.8 632.3 546.7C632.8 546.6 633.5 546.6 634.0 546.7C634.5 546.8 635.1 547.2 635.4 547.5C635.7 547.9 636.0 548.4 636.0 548.9Z" fill="#3e3e8c"/>
<path d="M680.6 534.1C683.1 531.3 691.4 531.1 697.2 531.5C702.9 532.0 709.1 534.9 715.0 536.6C721.0 538.3 728.6 539.4 732.9 541.7C737.1 544.1 740.5 547.1 740.5 550.7C740.5 554.3 735.4 558.7 732.9 563.4C730.3 568.1 727.3 573.6 725.2 578.7C723.1 583.8 722.7 589.8 720.1 594.0C717.6 598.3 713.3 603.0 709.9 604.2C706.5 605.5 702.3 605.1 699.7 601.7C697.2 598.3 696.3 590.2 694.6 583.8C692.9 577.5 691.6 569.4 689.5 563.4C687.4 557.5 683.4 553.0 681.9 548.1C680.4 543.2 678.0 536.9 680.6 534.1Z" fill="#c6cae9"/>
<path d="M699.7 548.1C702.0 544.9 705.7 542.6 709.9 541.7C714.2 540.9 721.4 541.5 725.2 543.0C729.0 544.5 732.4 547.7 732.9 550.7C733.3 553.6 729.9 557.0 727.8 560.9C725.6 564.7 722.2 569.4 720.1 573.6C718.0 577.9 717.6 583.8 715.0 586.4C712.5 588.9 707.7 590.2 704.8 588.9C701.9 587.7 699.1 583.4 697.7 578.7C696.2 574.0 695.8 566.0 696.1 560.9C696.5 555.8 697.4 551.3 699.7 548.1Z" fill="#9090c6"/>
<path d="M706.9 558.3C708.6 556.2 712.6 554.3 715.0 554.5C717.4 554.7 720.8 556.8 721.4 559.6C722.0 562.4 720.1 567.7 718.8 571.1C717.6 574.5 715.7 578.9 713.7 580.0C711.8 581.1 708.9 579.6 707.4 577.5C705.9 575.3 704.9 570.4 704.8 567.2C704.7 564.1 705.2 560.4 706.9 558.3Z" fill="#6666aa"/>
<path d="M681.4 537.9C682.8 535.0 689.2 535.0 692.1 535.9C694.9 536.7 697.6 539.7 698.4 543.0C699.3 546.3 698.7 552.8 697.2 555.8C695.7 558.7 691.9 561.3 689.5 560.9C687.2 560.4 684.5 557.0 683.1 553.2C681.8 549.4 679.9 540.8 681.4 537.9Z" fill="#ffffff"/>
<path d="M740.5 512.4C743.9 510.3 751.6 507.0 755.8 507.8C760.1 508.7 764.1 514.2 766.0 517.5C767.9 520.8 768.6 524.7 767.3 527.7C766.0 530.8 762.0 533.2 758.4 535.9C754.8 538.5 749.9 541.0 745.6 543.5C741.4 546.1 736.3 550.8 732.9 551.2C729.5 551.6 725.6 549.5 725.2 546.1C724.8 542.7 728.6 535.0 730.3 530.8C732.0 526.5 733.7 523.6 735.4 520.6C737.1 517.5 737.1 514.5 740.5 512.4Z" fill="#c6cae9"/>
<path d="M740.5 525.2C742.9 523.0 747.8 519.9 750.7 520.1C753.7 520.3 758.2 523.9 758.4 526.4C758.6 529.0 754.8 533.2 752.0 535.4C749.2 537.5 744.3 539.6 741.8 539.2C739.2 538.8 736.9 535.2 736.7 532.8C736.5 530.5 738.2 527.3 740.5 525.2Z" fill="#9090c6"/>
<path d="M745.6 507.8C747.5 503.7 754.1 498.1 760.9 495.1C767.7 492.0 778.4 490.5 786.4 489.5C794.5 488.4 802.6 488.9 809.4 488.9C816.2 488.9 822.4 487.9 827.2 489.5C832.1 491.0 837.4 494.6 838.7 498.4C840.0 502.2 838.1 509.0 834.9 512.4C831.7 515.8 823.8 516.9 819.6 518.8C815.3 520.7 812.6 521.6 809.4 523.9C806.2 526.2 803.2 529.2 800.5 532.8C797.7 536.4 796.4 543.0 792.8 545.6C789.2 548.1 782.6 549.2 778.8 548.1C775.0 547.1 772.8 542.4 769.9 539.2C766.9 536.0 764.3 532.2 760.9 529.0C757.5 525.8 752.0 523.6 749.5 520.1C746.9 516.5 743.7 512.0 745.6 507.8Z" fill="#c6cae9"/>
<path d="M752.0 507.8C753.7 504.1 759.0 498.6 764.8 495.8C770.5 493.1 779.4 492.3 786.4 491.5C793.4 490.7 800.7 491.1 806.8 491.0C813.0 490.9 818.8 489.5 823.4 490.7C828.0 492.0 833.1 495.4 834.4 498.6C835.7 501.9 834.1 507.5 831.3 510.4C828.5 513.3 821.5 514.2 817.5 516.0C813.6 517.8 810.7 518.8 807.3 521.1C804.0 523.4 800.5 526.3 797.7 529.8C794.8 533.2 793.1 539.6 790.0 542.0C786.9 544.4 782.1 545.1 779.3 544.0C776.5 543.0 775.5 538.9 773.2 535.9C770.9 532.9 768.6 529.2 765.5 526.2C762.5 523.2 757.1 521.1 754.8 518.0C752.6 515.0 750.3 511.5 752.0 507.8Z" fill="#9090c6"/>
<path d="M757.1 507.8C758.5 504.7 762.4 500.0 767.3 497.6C772.2 495.2 779.8 494.3 786.4 493.5C793.0 492.8 801.1 493.2 806.8 493.0C812.6 492.9 817.0 491.5 820.9 492.5C824.7 493.5 828.6 496.4 829.8 499.2C830.9 501.9 830.0 506.5 827.8 508.8C825.5 511.2 820.1 511.8 816.5 513.4C813.0 515.0 809.7 516.2 806.3 518.5C802.9 520.8 799.0 524.0 796.1 527.2C793.2 530.4 791.7 535.8 789.0 537.9C786.3 540.0 782.4 540.8 780.1 540.0C777.8 539.1 777.3 535.5 775.2 532.8C773.1 530.2 770.3 526.9 767.6 524.1C764.8 521.4 760.6 519.2 758.9 516.5C757.1 513.8 755.7 511.0 757.1 507.8Z" fill="#6666aa"/>
<path d="M760.9 506.0C762.2 503.7 765.6 500.2 769.9 498.4C774.1 496.6 781.3 494.9 786.4 495.1C791.5 495.2 796.6 498.4 800.5 499.2C804.3 499.9 806.6 499.8 809.4 499.7C812.1 499.5 815.1 497.7 817.0 498.4C819.0 499.0 821.7 501.6 820.9 503.5C820.0 505.4 814.9 508.0 811.9 509.9C809.0 511.8 805.8 512.8 803.0 515.0C800.2 517.2 798.1 521.0 795.4 523.1C792.6 525.3 789.6 527.4 786.4 527.7C783.2 528.1 779.4 526.7 776.2 525.2C773.0 523.7 769.6 520.9 767.3 518.8C765.0 516.7 763.3 514.5 762.2 512.4C761.1 510.3 759.7 508.4 760.9 506.0Z" fill="#3e3e8c"/>
<path d="M764.0 505.3C764.6 502.4 767.9 500.6 771.6 499.2C775.4 497.7 781.9 496.3 786.4 496.6C790.9 496.9 795.9 498.8 798.7 501.2C801.4 503.6 803.3 508.1 803.0 511.1C802.8 514.2 799.8 517.3 797.1 519.6C794.5 521.8 790.3 524.1 786.9 524.7C783.5 525.2 779.9 524.0 776.7 522.6C773.6 521.3 769.9 519.4 767.8 516.5C765.7 513.6 763.4 508.2 764.0 505.3Z" fill="#0c0c34"/>
<path d="M791.5 531.5C792.4 528.3 797.5 526.0 801.7 523.9C806.0 521.8 810.4 519.3 817.0 518.8C823.6 518.2 837.2 513.8 841.3 520.6C845.3 527.4 843.6 553.9 841.3 559.6C838.9 565.3 831.3 555.0 827.2 554.5C823.2 553.9 820.4 556.8 817.0 556.3C813.6 555.7 810.2 553.3 806.8 551.2C803.4 549.1 799.2 546.8 796.6 543.5C794.1 540.3 790.7 534.8 791.5 531.5Z" fill="#fdf0a8"/>
<path d="M795.4 539.2C796.8 537.3 801.5 533.7 804.3 534.1C807.0 534.5 810.9 538.8 811.9 541.7C813.0 544.7 812.4 550.5 810.7 551.9C809.0 553.4 804.3 551.7 801.7 550.7C799.2 549.6 796.4 547.5 795.4 545.6C794.3 543.7 793.9 541.1 795.4 539.2Z" fill="#fdc860"/>
<path d="M823.4 539.2C824.9 537.1 829.4 534.5 832.3 534.1C835.3 533.7 839.8 533.2 841.3 536.6C842.8 540.0 843.2 551.7 841.3 554.5C839.4 557.3 832.8 554.5 829.8 553.2C826.8 551.9 824.5 549.2 823.4 546.8C822.4 544.5 821.9 541.3 823.4 539.2Z" fill="#fdc860"/>
<path d="M819.1 531.8C819.1 532.7 818.7 533.8 818.1 534.5C817.5 535.2 816.5 535.9 815.6 536.2C814.6 536.4 813.4 536.4 812.4 536.2C811.5 535.9 810.4 535.2 809.9 534.5C809.3 533.8 808.9 532.7 808.9 531.8C808.9 530.9 809.3 529.8 809.9 529.1C810.4 528.4 811.5 527.7 812.4 527.4C813.4 527.2 814.6 527.2 815.6 527.4C816.5 527.7 817.5 528.4 818.1 529.1C818.7 529.8 819.1 530.9 819.1 531.8Z" fill="#ffffff"/>
<path d="M745.6 543.0C747.5 539.8 752.4 537.5 755.8 536.6C759.2 535.8 762.2 536.9 766.0 537.9C769.9 539.0 774.5 542.8 778.8 543.0C783.0 543.2 787.7 540.5 791.5 539.2C795.4 537.9 793.4 535.6 801.7 535.4C810.0 535.2 834.7 523.0 841.3 537.9C847.9 552.8 850.0 610.2 841.3 624.6C832.6 639.1 798.5 626.3 789.0 624.6C779.4 622.9 787.7 618.7 783.9 614.4C780.1 610.2 771.6 603.4 766.0 599.1C760.5 594.9 754.6 593.2 750.7 588.9C746.9 584.7 744.1 579.2 743.1 573.6C742.0 568.1 743.9 560.9 744.3 555.8C744.8 550.7 743.7 546.2 745.6 543.0Z" fill="#fdf0a8"/>
<path d="M759.7 573.6C760.7 569.4 762.8 561.1 766.0 557.0C769.2 553.0 774.3 551.5 778.8 549.4C783.2 547.3 789.2 546.0 792.8 544.3C796.4 542.6 798.1 537.7 800.5 539.2C802.8 540.7 803.6 551.3 806.8 553.2C810.0 555.1 815.8 550.7 819.6 550.7C823.4 550.7 826.2 551.5 829.8 553.2C833.4 554.9 839.4 550.2 841.3 560.9C843.2 571.5 844.0 607.2 841.3 617.0C838.5 626.8 829.6 619.1 824.7 619.5C819.8 620.0 815.8 618.5 811.9 619.5C808.1 620.6 805.1 626.8 801.7 625.9C798.3 625.1 794.9 618.9 791.5 614.4C788.1 610.0 785.2 603.0 781.3 599.1C777.5 595.3 772.2 594.2 768.6 591.5C765.0 588.7 761.1 585.5 759.7 582.6C758.2 579.6 758.6 577.9 759.7 573.6Z" fill="#fdc860"/>
<path d="M757.4 555.8C757.4 557.0 757.0 558.5 756.5 559.5C756.0 560.5 755.0 561.4 754.2 561.8C753.3 562.2 752.2 562.2 751.3 561.8C750.5 561.4 749.6 560.5 749.1 559.5C748.5 558.5 748.2 557.0 748.2 555.8C748.2 554.5 748.5 553.0 749.1 552.0C749.6 551.0 750.5 550.1 751.3 549.7C752.2 549.3 753.3 549.3 754.2 549.7C755.0 550.1 756.0 551.0 756.5 552.0C757.0 553.0 757.4 554.5 757.4 555.8Z" fill="#fdc860"/>
<path d="M765.0 571.6C766.1 568.4 768.7 563.5 771.4 560.6C774.0 557.8 777.2 556.3 780.8 554.5C784.5 552.7 790.2 551.2 793.3 549.7C796.5 548.1 798.1 543.7 799.7 545.1C801.3 546.4 800.9 555.2 802.8 557.6C804.6 559.9 807.8 559.3 810.7 559.1C813.5 558.8 817.0 556.0 819.8 556.0C822.7 556.0 825.4 556.5 827.8 559.1C830.1 561.7 832.8 567.7 834.1 571.6C835.4 575.5 835.9 578.6 835.7 582.6C835.4 586.5 832.6 591.4 832.6 595.0C832.6 598.7 835.1 601.3 835.7 604.5C836.2 607.6 837.7 612.3 835.7 613.9C833.6 615.5 827.3 613.9 823.2 613.9C819.0 613.9 814.3 612.9 810.7 613.9C807.0 615.0 803.9 621.3 801.2 620.3C798.6 619.3 797.5 612.0 794.8 607.8C792.2 603.6 789.1 598.7 785.4 595.0C781.8 591.4 776.3 588.5 772.9 585.9C769.5 583.3 766.3 581.9 765.0 579.5C763.7 577.1 763.9 574.7 765.0 571.6Z" fill="#fd9428"/>
<path d="M783.9 567.0C784.9 564.9 789.2 562.7 791.8 560.6C794.4 558.5 797.9 554.8 799.7 554.5C801.5 554.2 800.9 558.1 802.8 559.1C804.6 560.1 807.8 561.0 810.7 560.6C813.5 560.2 817.3 556.8 819.8 556.8C822.4 556.8 824.1 557.9 826.2 560.6C828.3 563.3 831.3 568.9 832.6 573.1C833.9 577.3 834.9 582.5 834.1 585.9C833.3 589.3 830.1 593.0 827.8 593.5C825.4 594.0 822.7 589.7 819.8 588.9C817.0 588.2 813.8 589.2 810.7 588.9C807.6 588.7 804.4 588.7 801.2 587.4C798.1 586.1 794.4 583.4 791.8 581.0C789.2 578.6 786.7 575.5 785.4 573.1C784.1 570.8 782.8 569.1 783.9 567.0Z" fill="#f85a10"/>
<path d="M810.7 565.5C811.2 563.1 813.4 560.4 815.3 559.1C817.1 557.8 819.7 556.2 821.6 557.6C823.6 558.9 825.6 563.3 827.0 567.0C828.4 570.6 829.7 575.6 830.0 579.5C830.4 583.4 830.4 588.9 829.3 590.5C828.1 592.0 825.2 590.5 823.2 588.9C821.1 587.4 818.6 583.7 816.8 581.0C815.0 578.4 813.2 575.7 812.2 573.1C811.2 570.5 810.2 567.8 810.7 565.5Z" fill="#d41a12"/>
<path d="M709.9 606.8C710.8 600.0 712.5 590.2 715.0 583.8C717.6 577.5 722.2 570.2 725.2 568.5C728.2 566.8 731.2 570.6 732.9 573.6C734.6 576.6 732.4 584.0 735.4 586.4C738.4 588.7 745.6 586.8 750.7 587.7C755.8 588.5 761.6 589.4 766.0 591.5C770.5 593.6 774.5 596.2 777.5 600.4C780.5 604.7 779.8 614.0 783.9 617.0C787.9 620.0 797.9 617.0 801.7 618.3C805.6 619.5 822.1 623.6 806.8 624.6C791.5 625.7 726.1 627.6 709.9 624.6C693.8 621.7 709.1 613.6 709.9 606.8Z" fill="#c6cae9"/>
<path d="M659.9 608.3C662.5 605.3 670.3 606.6 675.5 606.8C680.7 607.0 685.6 609.1 691.3 609.3C697.0 609.5 705.1 605.5 709.9 608.1C714.7 610.6 728.5 621.9 720.1 624.6C711.8 627.4 670.0 627.4 659.9 624.6C649.9 621.9 657.3 611.3 659.9 608.3Z" fill="#c6cae9"/>
<path d="M689.5 617.0C693.8 614.5 708.9 612.0 715.0 609.8C721.1 607.7 723.1 606.1 726.0 604.2C728.9 602.3 729.8 600.4 732.4 598.4C735.0 596.3 737.4 592.8 741.5 592.0C745.7 591.2 752.9 591.9 757.4 593.5C761.8 595.1 765.7 598.0 768.3 601.4C770.9 604.8 772.7 610.1 772.9 613.9C773.2 617.8 783.8 622.8 769.9 624.6C756.0 626.4 702.9 625.9 689.5 624.6C676.1 623.4 685.3 619.4 689.5 617.0Z" fill="#9090c6"/>
<path d="M737.0 601.4C738.3 598.3 742.7 597.3 746.4 596.8C750.0 596.3 755.8 596.5 758.9 598.4C762.0 600.2 764.2 604.7 765.0 607.8C765.8 610.9 766.1 614.9 763.5 617.0C760.9 619.1 753.6 620.6 749.5 620.3C745.3 620.0 740.6 618.6 738.5 615.5C736.4 612.3 735.6 604.5 737.0 601.4Z" fill="#6666aa"/>
<path d="M809.4 617.0C810.7 614.9 813.6 612.8 817.0 612.4C820.4 612.0 825.8 613.2 829.8 614.4C833.8 615.6 839.4 617.8 841.3 619.5C843.2 621.2 846.6 623.8 841.3 624.6C836.0 625.5 814.7 625.9 809.4 624.6C804.1 623.4 808.1 619.0 809.4 617.0Z" fill="#9090c6"/>
<path d="M829.3 497.6C831.3 495.4 839.3 491.3 841.3 494.6C843.3 497.8 842.5 513.2 841.3 517.0C840.0 520.8 835.6 519.0 833.6 517.5C831.6 516.0 830.0 511.1 829.3 507.8C828.6 504.5 827.3 499.8 829.3 497.6Z" fill="#ffffff"/>
<path d="M794.6 539.2C795.3 536.4 798.2 532.0 800.5 530.3C802.7 528.6 806.0 527.3 808.1 529.0C810.2 530.7 812.7 536.8 813.2 540.5C813.8 544.2 813.1 549.1 811.4 551.2C809.7 553.2 805.6 553.4 803.0 552.7C800.5 552.0 797.5 549.1 796.1 546.8C794.7 544.6 793.9 542.0 794.6 539.2Z" fill="#fdc860"/>
<path d="M822.6 541.7C823.7 539.3 826.7 536.9 829.8 535.9C832.9 534.9 839.4 532.1 841.3 535.9C843.2 539.7 843.0 555.3 841.3 558.8C839.6 562.4 834.0 558.4 831.1 557.0C828.1 555.7 825.1 553.2 823.7 550.7C822.3 548.1 821.6 544.2 822.6 541.7Z" fill="#fdc860"/>
<path d="M819.1 531.8C819.1 532.7 818.7 533.8 818.1 534.5C817.5 535.2 816.5 535.9 815.6 536.2C814.6 536.4 813.4 536.4 812.4 536.2C811.5 535.9 810.4 535.2 809.9 534.5C809.3 533.8 808.9 532.7 808.9 531.8C808.9 530.9 809.3 529.8 809.9 529.1C810.4 528.4 811.5 527.7 812.4 527.4C813.4 527.2 814.6 527.2 815.6 527.4C816.5 527.7 817.5 528.4 818.1 529.1C818.7 529.8 819.1 530.9 819.1 531.8Z" fill="#ffffff"/>
</g>
<g filter="url(#bl2)" fill="none" stroke-linejoin="round">
<path d="M640.5 520.2L643.0 522.3L647.3 524.4L654.2 523.3L652.9 525.9L646.7 526.7L645.5 527.5L649.2 531.2L654.2 534.6L657.9 535.4L664.1 533.3L666.0 530.1L667.2 527.5L668.5 530.6L668.5 533.3L669.1 536.9L668.8 543.2L669.7 546.9L671.0 551.6L672.2 555.8L674.7 561.5L676.6 565.7L679.7 571.5L681.5 576.2L684.6 581.4L687.7 585.1L689.6 590.3L691.5 595.1L693.3 598.2L695.8 600.6L698.6 601.5L700.8 600.3L702.7 597.2L707.0 595.6L709.5 595.1L707.3 593.5L709.5 589.8L712.9 589.6L712.9 585.1L712.6 580.9L715.1 576.7L715.7 573.6L714.5 569.4L714.2 565.2L715.7 562.1L719.5 561.0L721.9 558.4L728.2 556.8L728.2 554.7L734.4 551.1L739.3 547.9L744.3 542.7L748.7 540.3L753.0 539.0L756.1 536.9L757.4 533.8L758.0 531.2L762.4 530.1L764.8 529.6L767.3 530.6L770.4 530.1L769.8 527.0L768.9 522.3L767.3 518.1L764.2 515.4L765.5 512.3L769.2 511.3L766.1 508.6L764.8 507.1L767.3 505.2L771.1 507.1L774.8 507.9L775.1 511.3L779.8 512.0L788.5 512.0L791.3 513.4L789.1 516.0L786.0 517.3L783.5 518.6L783.2 521.7L785.7 523.6L787.5 520.7L790.0 519.6L790.3 523.8L791.9 528.5L795.3 527.5L795.9 523.3L797.2 518.6L801.8 518.9L805.2 512.8L804.6 510.2L808.4 507.6L807.7 504.4L814.6 500.8L820.2 501.8L819.2 498.7L821.7 496.1L817.1 494.5L815.2 490.8L810.2 491.4L804.6 490.3L798.4 493.4L792.8 497.1L786.6 498.2L789.1 500.8L788.5 503.1L779.1 503.4L774.8 503.9L769.2 502.9L768.3 501.3L768.9 499.7L769.2 497.6L767.3 496.6L764.2 497.6L763.9 500.8L764.5 505.5L759.2 505.5L751.2 504.4L746.2 503.4L742.5 500.8L738.7 500.0L734.4 500.5L730.6 498.7L725.7 497.6L721.9 496.1L717.6 493.4L714.2 492.7L716.3 488.7L719.5 485.6L720.1 485.3L715.1 483.5L712.6 481.7L708.9 479.8L706.1 478.8L705.8 473.0L710.1 473.0L710.7 469.9L715.1 465.7L716.3 460.5L715.7 457.8L710.7 455.7L703.9 457.3L700.8 455.2L694.0 452.1L687.7 451.0L680.3 449.7L675.3 450.5L670.3 451.5L667.9 454.2L671.0 457.3L671.0 461.0L673.1 463.6L674.1 466.7L676.6 469.9L679.7 472.0L684.6 474.6L680.3 476.7L679.7 480.9L675.9 484.5L672.8 487.2L669.7 491.9L666.0 493.4L663.5 497.6L656.0 498.7L651.7 502.4L652.3 505.0L652.9 509.2L657.3 512.8L658.5 514.9L651.7 517.0L644.2 516.5ZM620.6 511.3L629.9 510.7L633.0 513.9L636.1 518.6L640.5 520.2M620.6 488.7L628.7 487.2L628.7 481.4L638.0 479.3L647.3 476.7L648.6 470.9L651.7 469.4L653.6 466.2L658.5 465.7L661.6 460.5L659.1 455.2L662.3 452.6L667.2 451.0L675.3 450.5M662.3 452.6L661.6 445.3L659.8 444.7M620.6 448.4L629.9 448.1L638.0 449.5L641.1 449.5L647.3 449.2L652.9 446.8L656.7 444.7M675.3 450.5L682.1 448.4L681.5 444.7M720.1 485.3L723.2 484.5L726.9 485.1L732.5 488.7L738.1 490.3L740.0 492.4L745.6 494.0L749.3 495.5L751.2 497.1L756.8 497.1L761.7 497.9L764.2 497.6M768.9 499.7L771.7 497.6L774.8 496.1L778.5 496.6L784.1 497.1L786.6 498.2M770.4 530.1L776.0 529.1L779.8 526.4L783.5 525.9L787.2 527.0L788.5 531.7L790.3 535.4M791.9 528.5L792.2 532.2L790.3 535.4M790.3 535.4L794.7 539.5L799.0 544.3L802.8 549.5L804.0 554.7L802.8 560.0L809.0 561.5L813.3 557.9L818.3 554.7L820.8 556.3L823.9 560.0L824.5 565.2L826.4 570.4L829.5 578.3L829.5 586.2L829.5 591.4L827.6 596.6L827.6 601.9L830.1 600.8L832.6 605.0L836.3 608.2L838.2 609.7M829.5 590.3L832.0 586.2L835.1 582.0L832.6 575.7L827.0 565.2L829.5 560.0L824.5 552.1L823.9 546.9L831.4 540.1L838.2 536.9M821.7 496.1L826.4 499.2L830.1 499.7L830.1 507.6L823.3 513.9L823.9 518.1L830.7 517.5L832.0 522.3L835.1 525.4L838.2 530.1M838.2 573.6L837.6 578.3L833.8 588.8L833.2 593.5L837.6 595.1L838.2 599.3M713.2 592.4L715.7 594.0L721.3 599.3L725.0 604.5L724.4 609.2L720.1 611.8L715.1 612.6L712.9 608.2L712.6 602.4L713.2 597.2L714.2 595.1ZM808.4 614.2L810.8 613.9L816.4 616.3L822.7 616.3L825.8 619.7L827.6 622.8L812.7 622.8L809.6 618.1ZM793.4 573.1L794.7 574.1L794.2 579.9L792.9 583.5L792.3 581.4L792.9 577.8ZM791.6 587.2L792.2 588.8L790.9 588.8Z" stroke="#06100a" stroke-width="1.8" opacity=".95"/>
<path d="M658.5 514.9L667.2 516.0L671.0 516.0L676.6 521.7L678.4 526.4L676.6 530.6L675.3 535.9L672.8 538.0L669.1 538.0M676.6 521.7L682.1 518.6L684.6 513.9L690.2 517.0L694.6 515.4L694.6 511.3L697.7 510.7L702.7 503.4M702.7 503.4L698.3 501.3L697.1 498.2L694.6 498.7L690.2 497.1L687.7 495.0L682.8 490.8L679.7 490.3L675.9 486.9M679.7 489.3L685.3 487.7L690.2 487.2L694.0 484.5L694.6 481.9L690.9 479.3L688.4 476.2L686.5 474.1M686.5 474.1L690.9 470.9L695.2 471.5L700.8 472.5L703.9 473.5L705.8 473.0M698.9 484.5L701.4 481.4L706.4 480.4M694.6 481.9L698.9 484.5L696.4 489.3L696.4 492.9L697.1 495.0L698.3 497.6L697.1 498.2M698.9 484.5L703.3 488.2L707.0 489.8L710.1 492.4L714.2 492.7M702.7 503.4L707.6 504.4L707.0 509.7L703.9 511.3L705.2 515.4L711.4 512.3L716.3 512.8L721.9 512.3L725.7 513.9L728.2 514.9L731.3 518.1M731.3 518.1L734.4 515.4L735.6 512.8L738.7 509.7L742.5 508.6L740.0 505.5L738.1 502.4L738.7 500.0M734.4 515.4L740.6 516.0L749.3 514.9L754.3 515.4L759.2 513.4L762.4 511.8L763.6 505.5M762.4 511.8L760.5 516.5L756.8 519.1L751.2 520.7L751.2 523.3L756.1 527.0L757.4 529.1L760.5 530.4M756.1 527.0L751.2 525.9L745.6 528.0L740.6 526.4L738.7 525.9M738.7 525.9L736.2 522.3L734.4 518.6L731.3 518.1M731.3 518.1L724.4 519.1L723.8 523.8L719.5 527.0L717.0 531.2L716.3 532.2M676.6 530.6L684.0 531.7L690.2 532.7L694.0 530.6L702.7 531.2L710.7 530.6L716.3 532.2M716.3 532.2L717.6 537.4L717.0 542.2L715.7 545.3L713.2 542.2L707.6 541.1L703.3 541.6L700.2 546.4L698.3 547.9M698.3 547.9L694.6 551.1L690.9 553.2L686.5 554.7L682.8 555.3L678.4 557.4L678.4 561.0L674.7 561.5M678.4 561.0L677.8 565.2L676.9 565.7M698.3 547.9L698.3 553.2L697.7 557.9L695.2 561.0L695.8 565.2L694.0 565.7L697.7 569.4L702.7 572.5L703.3 577.3M703.3 577.3L699.6 577.8L697.1 582.0L691.5 583.0L687.1 579.9L682.1 576.7M691.5 583.0L694.0 588.3L696.4 590.3L696.4 594.5L696.4 598.7L695.8 600.3M703.3 577.3L709.5 574.6L713.9 573.1L715.7 573.1M697.7 557.9L703.3 560.0L709.5 557.4L713.9 555.3L716.3 554.7L720.1 550.5L718.8 548.4L715.7 545.3M738.7 525.9L735.6 530.6L735.0 532.2L730.0 536.4L728.8 539.5L726.3 544.3L725.7 546.4L722.6 550.0L720.1 550.5M722.6 550.0L728.8 547.4L733.1 545.3L738.7 544.3L743.7 543.7M788.5 503.1L794.7 502.4L802.1 499.2L810.2 497.6L813.3 500.3M775.1 508.1L782.2 508.1L789.7 508.1L793.4 510.2L791.3 513.4M796.5 508.6L800.9 505.0L808.4 502.4M794.7 514.4L797.2 509.7L804.6 510.2M790.0 517.0L794.7 516.0L797.2 518.6M790.0 517.0L790.0 519.6M774.8 503.9L775.1 507.9M764.5 501.8L768.3 501.3M676.6 469.9L677.8 465.7L676.6 462.0L685.9 462.5L694.0 461.0L700.2 457.8M703.9 473.5L707.0 469.4L706.4 464.6L703.3 462.5L700.2 457.8M694.6 492.9L697.1 492.9L697.1 494.8L694.6 494.5L694.6 492.9" stroke="#06100a" stroke-width="1.6" opacity=".9"/>
<path d="M793.4 573.1L794.7 574.1L794.2 579.9L792.9 583.5L792.3 581.4L792.9 577.8Z" fill="#0a140c" stroke="#0a140c" stroke-width=".3"/>
<path d="M667.9 582.5h1M665.4 585.1h1M668.5 588.3h1M670.3 590.9h1M666.0 590.9h1M799.7 607.1h1M793.4 595.6h1" stroke="#0a1a10" stroke-width="1.2"/>
</g></g>
<g filter="url(#bl2)">
<rect x="620.6" y="445.0" width="217.6" height="177.3" fill="none" stroke="#1c1c1c" stroke-width="1.7"/>
<text x="597.5" y="621.6" class="ax" textLength="15.6" lengthAdjust="spacingAndGlyphs">5N</text>
<text x="591.5" y="595.4" class="ax" textLength="21.6" lengthAdjust="spacingAndGlyphs">10N</text>
<text x="591.5" y="569.2" class="ax" textLength="21.6" lengthAdjust="spacingAndGlyphs">15N</text>
<text x="591.5" y="543.0" class="ax" textLength="21.6" lengthAdjust="spacingAndGlyphs">20N</text>
<text x="591.5" y="516.8" class="ax" textLength="21.6" lengthAdjust="spacingAndGlyphs">25N</text>
<text x="591.5" y="490.6" class="ax" textLength="21.6" lengthAdjust="spacingAndGlyphs">30N</text>
<text x="591.5" y="464.5" class="ax" textLength="21.6" lengthAdjust="spacingAndGlyphs">35N</text>
<text x="641.1" y="634.9" class="ax" textLength="21.2" lengthAdjust="spacingAndGlyphs">70E</text>
<text x="684.6" y="634.9" class="ax" textLength="21.2" lengthAdjust="spacingAndGlyphs">77E</text>
<text x="728.1" y="634.9" class="ax" textLength="21.2" lengthAdjust="spacingAndGlyphs">84E</text>
<text x="771.6" y="634.9" class="ax" textLength="21.2" lengthAdjust="spacingAndGlyphs">91E</text>
<text x="815.2" y="634.9" class="ax" textLength="21.2" lengthAdjust="spacingAndGlyphs">98E</text>
<path d="M620.6 617.6h-3M620.6 591.4h-3M620.6 565.2h-3M620.6 539.0h-3M620.6 512.8h-3M620.6 486.6h-3M620.6 460.5h-3M651.7 622.3v3M695.2 622.3v3M738.7 622.3v3M782.2 622.3v3M825.8 622.3v3" stroke="#222" stroke-width="1.2"/>
</g>
<clipPath id="tcm4"><rect x="886.8" y="445.2" width="217.7" height="177.1"/></clipPath>
<g clip-path="url(#tcm4)">
<g filter="url(#bl)">
<rect x="883.8" y="442.2" width="223.7" height="183.1" fill="#ffffff"/>
<path d="M1029.5 450.4C1030.5 447.6 1031.6 448.1 1035.9 447.4C1040.1 446.7 1048.5 446.4 1054.7 446.4C1061.0 446.4 1064.6 446.7 1073.3 447.4C1082.1 448.1 1101.6 447.3 1107.3 450.4C1112.9 453.5 1110.8 463.3 1107.3 466.0C1103.7 468.7 1092.0 467.0 1085.8 466.8C1079.7 466.5 1075.5 464.3 1070.3 464.5C1065.1 464.6 1060.0 466.7 1054.7 467.5C1049.5 468.3 1043.1 469.8 1038.9 469.3C1034.7 468.8 1031.1 467.6 1029.5 464.5C1027.9 461.3 1028.4 453.3 1029.5 450.4Z" fill="#c6cae9"/>
<path d="M1047.3 456.8C1049.8 455.5 1056.7 454.4 1062.6 454.3C1068.6 454.1 1076.7 455.0 1083.0 455.8C1089.4 456.6 1097.9 457.6 1100.9 458.9C1103.9 460.1 1103.9 462.8 1100.9 463.4C1097.9 464.0 1089.4 462.6 1083.0 462.4C1076.7 462.3 1068.5 462.5 1062.6 462.4C1056.8 462.3 1050.4 462.8 1047.8 461.9C1045.3 461.0 1044.9 458.1 1047.3 456.8Z" fill="#9090c6"/>
<path d="M1032.8 480.3C1033.8 478.4 1035.3 476.5 1038.9 475.4C1042.6 474.4 1049.5 474.0 1054.7 473.9C1060.0 473.8 1065.1 474.9 1070.3 474.7C1075.5 474.4 1079.7 473.0 1085.8 472.4C1092.0 471.7 1103.7 467.7 1107.3 470.8C1110.8 474.0 1109.8 487.6 1107.3 491.2C1104.8 494.9 1096.8 492.8 1092.2 492.8C1087.6 492.8 1084.4 491.0 1079.7 491.2C1075.0 491.5 1068.6 494.0 1063.9 494.3C1059.2 494.6 1055.6 493.3 1051.4 492.8C1047.2 492.3 1042.0 492.3 1038.9 491.2C1035.8 490.2 1033.8 488.2 1032.8 486.4C1031.8 484.6 1031.8 482.1 1032.8 480.3Z" fill="#fdf0a8"/>
<path d="M991.2 484.4C993.8 484.1 1001.4 486.7 1006.5 488.2C1011.6 489.7 1017.2 492.6 1021.8 493.3C1026.5 493.9 1032.9 491.2 1034.6 492.0C1036.3 492.9 1035.0 497.3 1032.0 498.4C1029.1 499.4 1021.8 499.2 1016.7 498.4C1011.6 497.5 1005.7 494.8 1001.4 493.3C997.2 491.8 992.9 490.9 991.2 489.5C989.5 488.0 988.7 484.6 991.2 484.4Z" fill="#fdf0a8"/>
<path d="M940.0 464.5C941.0 462.4 944.0 459.7 947.9 458.3C951.8 457.0 958.5 456.9 963.4 456.6C968.4 456.3 974.8 455.5 977.4 456.6C980.1 457.6 980.0 460.3 979.2 462.9C978.5 465.6 972.6 470.1 972.9 472.4C973.2 474.7 978.0 475.1 981.0 476.7C984.1 478.3 989.9 480.3 991.2 481.8C992.5 483.3 991.2 485.6 988.7 485.6C986.1 485.6 980.6 482.4 975.9 481.8C971.2 481.2 964.5 482.9 960.4 481.8C956.2 480.7 954.1 477.3 950.9 475.4C947.8 473.6 943.3 472.7 941.5 470.8C939.7 469.0 938.9 466.5 940.0 464.5Z" fill="#fdf0a8"/>
<path d="M969.5 476.2C969.5 477.2 969.0 478.4 968.2 479.2C967.4 480.0 966.1 480.7 964.8 481.0C963.5 481.4 961.8 481.4 960.5 481.0C959.2 480.7 957.9 480.0 957.1 479.2C956.3 478.4 955.8 477.2 955.8 476.2C955.8 475.2 956.3 474.0 957.1 473.2C957.9 472.4 959.2 471.7 960.5 471.3C961.8 471.0 963.5 471.0 964.8 471.3C966.1 471.7 967.4 472.4 968.2 473.2C969.0 474.0 969.5 475.2 969.5 476.2Z" fill="#fdc860"/>
<path d="M1029.5 501.2C1029.5 502.0 1029.1 503.1 1028.4 503.7C1027.8 504.4 1026.6 505.1 1025.6 505.3C1024.6 505.6 1023.2 505.6 1022.1 505.3C1021.1 505.1 1020.0 504.4 1019.3 503.7C1018.7 503.1 1018.3 502.0 1018.3 501.2C1018.3 500.3 1018.7 499.3 1019.3 498.6C1020.0 498.0 1021.1 497.3 1022.1 497.1C1023.2 496.8 1024.6 496.8 1025.6 497.1C1026.6 497.3 1027.8 498.0 1028.4 498.6C1029.1 499.3 1029.5 500.3 1029.5 501.2Z" fill="#fdc860"/>
<path d="M1024.6 501.2C1024.6 501.7 1024.5 502.3 1024.2 502.7C1023.9 503.1 1023.5 503.5 1023.0 503.6C1022.6 503.8 1022.1 503.8 1021.6 503.6C1021.2 503.5 1020.7 503.1 1020.5 502.7C1020.2 502.3 1020.0 501.7 1020.0 501.2C1020.0 500.7 1020.2 500.1 1020.5 499.7C1020.7 499.3 1021.2 498.9 1021.6 498.8C1022.1 498.6 1022.6 498.6 1023.0 498.8C1023.5 498.9 1023.9 499.3 1024.2 499.7C1024.5 500.1 1024.6 500.7 1024.6 501.2Z" fill="#fd9428"/>
<path d="M1056.8 484.9C1056.8 485.5 1056.4 486.3 1055.8 486.8C1055.2 487.3 1054.2 487.8 1053.2 488.0C1052.3 488.2 1051.0 488.2 1050.1 488.0C1049.1 487.8 1048.1 487.3 1047.5 486.8C1047.0 486.3 1046.6 485.5 1046.6 484.9C1046.6 484.2 1047.0 483.4 1047.5 482.9C1048.1 482.4 1049.1 481.9 1050.1 481.7C1051.0 481.5 1052.3 481.5 1053.2 481.7C1054.2 481.9 1055.2 482.4 1055.8 482.9C1056.4 483.4 1056.8 484.2 1056.8 484.9Z" fill="#ffffff"/>
<path d="M922.9 476.7C923.9 474.5 926.9 472.0 930.0 471.1C933.1 470.2 938.9 469.7 941.5 471.1C944.1 472.5 945.6 476.4 945.8 479.3C946.0 482.1 945.2 486.5 942.8 488.2C940.3 489.9 934.5 490.1 931.3 489.5C928.1 488.8 925.0 486.5 923.6 484.4C922.2 482.2 921.8 478.9 922.9 476.7Z" fill="#c6cae9"/>
<path d="M940.5 479.3C940.5 480.0 940.2 480.9 939.8 481.5C939.4 482.1 938.7 482.7 938.0 482.9C937.3 483.1 936.5 483.1 935.8 482.9C935.1 482.7 934.4 482.1 934.0 481.5C933.6 480.9 933.3 480.0 933.3 479.3C933.3 478.5 933.6 477.6 934.0 477.0C934.4 476.4 935.1 475.9 935.8 475.6C936.5 475.4 937.3 475.4 938.0 475.6C938.7 475.9 939.4 476.4 939.8 477.0C940.2 477.6 940.5 478.5 940.5 479.3Z" fill="#9090c6"/>
<path d="M957.6 492.0C957.6 492.9 957.0 494.0 956.2 494.7C955.4 495.4 954.0 496.1 952.6 496.4C951.3 496.7 949.5 496.7 948.2 496.4C946.9 496.1 945.5 495.4 944.6 494.7C943.8 494.0 943.3 492.9 943.3 492.0C943.3 491.1 943.8 490.0 944.6 489.3C945.5 488.6 946.9 487.9 948.2 487.6C949.5 487.4 951.3 487.4 952.6 487.6C954.0 487.9 955.4 488.6 956.2 489.3C957.0 490.0 957.6 491.1 957.6 492.0Z" fill="#c6cae9"/>
<path d="M955.5 492.0C957.4 489.8 962.7 488.2 968.3 487.4C973.8 486.7 982.3 486.7 988.7 487.4C995.0 488.2 1001.0 489.5 1006.5 492.0C1012.0 494.5 1018.9 498.4 1021.8 502.2C1024.8 506.0 1026.1 511.9 1024.4 515.0C1022.7 518.0 1017.2 519.9 1011.6 520.6C1006.1 521.2 997.2 519.5 991.2 518.8C985.3 518.1 980.6 517.7 975.9 516.2C971.2 514.8 966.4 512.4 963.2 509.9C960.0 507.3 958.1 503.9 956.8 500.9C955.5 498.0 953.6 494.3 955.5 492.0Z" fill="#c6cae9"/>
<path d="M961.1 492.5C963.3 490.9 968.8 488.9 973.4 488.7C978.0 488.4 983.6 489.8 988.7 491.0C993.8 492.2 1000.1 493.8 1004.0 496.1C1007.9 498.4 1011.6 501.8 1012.1 504.8C1012.6 507.7 1010.5 512.2 1007.0 513.9C1003.5 515.7 996.4 515.6 991.2 515.5C986.0 515.3 980.3 514.5 975.9 512.9C971.5 511.4 967.6 508.7 965.0 506.3C962.3 503.9 960.7 500.9 960.1 498.6C959.5 496.3 958.9 494.2 961.1 492.5Z" fill="#9090c6"/>
<path d="M975.9 498.4C977.8 496.6 984.4 494.9 988.7 495.1C992.9 495.2 998.7 497.3 1001.4 499.2C1004.2 501.0 1005.7 504.0 1005.2 506.0C1004.8 508.0 1002.1 510.3 998.9 511.1C995.7 512.0 989.7 512.0 986.1 511.1C982.5 510.3 978.9 508.2 977.2 506.0C975.5 503.9 974.0 500.2 975.9 498.4Z" fill="#6666aa"/>
<path d="M944.8 503.7C946.6 502.8 953.5 502.7 955.5 503.7C957.6 504.8 957.9 508.4 957.0 509.9C956.2 511.3 952.5 512.5 950.4 512.4C948.4 512.3 945.7 510.8 944.8 509.4C943.9 507.9 943.0 504.7 944.8 503.7Z" fill="#fdf0a8"/>
<path d="M884.1 503.5C887.5 492.9 898.3 501.7 904.5 501.7C910.7 501.7 914.7 502.4 921.1 503.7C927.5 505.1 937.0 507.6 942.8 509.9C948.5 512.2 951.7 514.5 955.5 517.5C959.3 520.5 961.5 525.2 965.7 527.7C970.0 530.3 976.8 530.3 981.0 532.8C985.3 535.4 990.4 539.2 991.2 543.0C992.1 546.8 987.8 551.5 986.1 555.8C984.4 560.0 982.7 563.8 981.0 568.5C979.3 573.2 978.0 582.1 975.9 583.8C973.8 585.5 970.4 582.1 968.3 578.7C966.1 575.3 966.1 565.9 963.2 563.4C960.2 561.0 954.2 563.5 950.4 563.9C946.6 564.4 944.5 565.8 940.2 566.0C936.0 566.1 930.9 565.0 924.9 564.7C919.0 564.4 911.3 563.8 904.5 563.9C897.7 564.1 887.5 575.5 884.1 565.5C880.7 555.4 880.7 514.1 884.1 503.5Z" fill="#c6cae9"/>
<path d="M884.1 509.9C887.5 500.7 898.1 507.9 904.5 507.8C910.9 507.7 916.8 508.4 922.4 509.4C927.9 510.3 933.0 512.3 937.7 513.7C942.3 515.0 946.2 515.2 950.4 517.5C954.7 519.9 958.1 525.4 963.2 527.7C968.3 530.1 976.8 529.6 981.0 531.5C985.3 533.5 988.7 536.6 988.7 539.2C988.7 541.7 984.8 545.4 981.0 546.8C977.2 548.3 970.0 547.1 965.7 548.1C961.5 549.2 959.1 550.9 955.5 553.2C951.9 555.6 948.3 560.9 944.0 562.1C939.8 563.4 935.7 561.1 930.0 560.9C924.3 560.7 917.3 560.5 909.6 560.9C902.0 561.2 888.4 571.4 884.1 562.9C879.9 554.4 880.7 519.0 884.1 509.9Z" fill="#9090c6"/>
<path d="M884.1 515.0C887.1 507.3 896.0 513.5 902.0 513.4C907.9 513.3 914.3 514.1 919.8 514.5C925.3 514.8 930.9 514.5 935.1 515.5C939.4 516.4 942.3 517.6 945.3 520.1C948.3 522.5 949.1 527.7 953.0 530.3C956.8 532.8 964.0 533.9 968.3 535.4C972.5 536.9 977.6 537.5 978.5 539.2C979.3 540.9 977.2 544.1 973.4 545.6C969.5 547.1 960.1 546.2 955.5 548.1C950.9 550.0 950.1 555.6 945.8 557.0C941.6 558.5 936.0 556.9 930.0 557.0C924.0 557.2 917.3 557.4 909.6 557.8C902.0 558.2 888.4 566.7 884.1 559.6C879.9 552.5 881.1 522.7 884.1 515.0Z" fill="#6666aa"/>
<path d="M884.1 528.7C886.7 523.8 894.7 526.7 899.4 526.7C904.1 526.7 907.9 528.4 912.2 529.0C916.4 529.6 920.9 529.4 924.9 530.3C928.9 531.1 933.4 531.5 936.4 534.1C939.4 536.6 941.9 541.6 942.8 545.6C943.6 549.5 942.5 555.7 941.5 557.8C940.4 559.9 938.7 559.4 936.4 558.3C934.0 557.2 931.5 552.4 927.5 551.2C923.4 550.0 917.3 550.6 912.2 551.2C907.1 551.8 901.5 553.9 896.9 554.8C892.2 555.6 886.2 560.6 884.1 556.3C882.0 551.9 881.6 533.7 884.1 528.7Z" fill="#3e3e8c"/>
<path d="M884.1 537.2C886.4 533.9 892.7 535.1 897.6 534.9C902.5 534.6 908.2 535.2 913.4 535.6C918.7 536.0 925.1 535.8 929.0 537.2C932.9 538.5 935.1 540.4 936.9 543.5C938.7 546.7 940.2 553.4 940.0 556.0C939.7 558.6 936.9 560.1 935.4 559.1C933.8 558.0 932.9 552.2 930.5 549.7C928.1 547.1 923.9 544.8 921.1 543.5C918.2 542.3 916.0 541.5 913.4 542.0C910.8 542.5 908.4 544.8 905.5 546.6C902.6 548.4 899.7 551.6 896.1 553.0C892.5 554.3 886.1 557.1 884.1 554.5C882.1 551.9 881.8 540.4 884.1 537.2Z" fill="#0c0c34"/>
<path d="M948.4 555.8C949.9 552.4 957.5 551.9 960.6 553.2C963.7 554.5 966.1 559.2 967.0 563.4C967.8 567.7 967.2 575.1 965.7 578.7C964.2 582.3 960.4 586.0 958.1 585.1C955.7 584.3 953.3 578.5 951.7 573.6C950.1 568.7 946.9 559.2 948.4 555.8Z" fill="#ffffff"/>
<path d="M969.5 515.5C972.9 513.7 986.3 513.3 991.2 514.5C996.1 515.6 998.2 520.1 998.9 522.6C999.5 525.1 998.0 528.0 995.0 529.2C992.1 530.5 985.1 530.9 981.0 530.3C977.0 529.6 972.7 527.6 970.8 525.2C968.9 522.7 966.1 517.3 969.5 515.5Z" fill="#ffffff"/>
<path d="M975.9 583.8C977.4 577.5 981.0 567.2 986.1 560.9C991.2 554.5 999.7 550.2 1006.5 545.6C1013.3 540.9 1021.8 537.9 1026.9 532.8C1032.0 527.7 1032.9 518.8 1037.1 515.0C1041.4 511.1 1048.2 508.6 1052.4 509.9C1056.7 511.1 1060.9 517.9 1062.6 522.6C1064.3 527.3 1064.0 534.4 1062.6 537.9C1061.3 541.4 1058.7 541.3 1054.7 543.5C1050.8 545.7 1044.1 548.6 1038.9 551.2C1033.7 553.8 1028.6 556.2 1023.4 559.1C1018.1 562.0 1012.0 564.4 1007.5 568.5C1003.0 572.6 999.9 577.9 996.3 583.8C992.8 589.8 989.3 601.7 986.1 604.2C982.9 606.8 978.9 602.5 977.2 599.1C975.5 595.7 974.4 590.2 975.9 583.8Z" fill="#c6cae9"/>
<path d="M981.5 573.6C982.7 569.4 987.1 564.9 991.2 560.9C995.4 556.8 1001.4 553.0 1006.5 549.4C1011.6 545.8 1016.7 542.6 1021.8 539.2C1026.9 535.8 1031.6 531.7 1037.1 529.0C1042.7 526.3 1051.1 522.4 1055.0 523.1C1058.9 523.8 1060.6 530.0 1060.6 533.3C1060.6 536.6 1058.6 540.3 1055.0 543.0C1051.4 545.7 1044.2 547.3 1038.9 549.4C1033.6 551.5 1028.6 553.2 1023.4 555.8C1018.1 558.3 1012.5 560.7 1007.5 564.7C1002.6 568.7 997.7 576.4 993.8 580.0C989.9 583.6 986.1 587.4 984.1 586.4C982.0 585.3 980.3 577.9 981.5 573.6Z" fill="#9090c6"/>
<path d="M992.0 551.4C995.1 548.5 1002.3 546.2 1007.5 543.5C1012.8 540.9 1018.1 537.7 1023.4 535.6C1028.6 533.5 1033.7 532.1 1038.9 531.0C1044.1 530.0 1051.6 528.5 1054.7 529.2C1057.9 530.0 1058.3 533.5 1057.8 535.6C1057.2 537.7 1054.6 540.2 1051.4 542.0C1048.3 543.8 1043.6 545.0 1038.9 546.6C1034.2 548.2 1028.6 549.1 1023.4 551.4C1018.1 553.8 1012.8 558.0 1007.5 560.6C1002.3 563.2 995.1 567.0 992.0 567.0C988.8 567.0 988.7 563.5 988.7 560.9C988.7 558.3 988.8 554.3 992.0 551.4Z" fill="#6666aa"/>
<path d="M1001.4 526.4C1004.4 524.3 1012.9 522.0 1016.7 522.6C1020.6 523.3 1024.2 527.1 1024.4 530.3C1024.6 533.5 1021.2 539.6 1018.0 541.7C1014.8 543.9 1008.4 544.1 1005.2 543.0C1002.1 542.0 999.5 538.1 998.9 535.4C998.2 532.6 998.4 528.6 1001.4 526.4Z" fill="#c6cae9"/>
<path d="M1034.6 498.4C1037.3 496.6 1046.1 496.7 1052.4 495.8C1058.8 495.0 1066.9 493.7 1072.8 493.3C1078.8 492.9 1084.1 491.9 1088.1 493.3C1092.2 494.7 1096.2 498.6 1097.3 501.7C1098.4 504.8 1098.0 510.5 1094.8 511.9C1091.5 513.3 1083.3 511.1 1077.9 510.4C1072.6 509.7 1067.7 508.1 1062.6 507.8C1057.5 507.6 1051.8 509.1 1047.3 508.8C1042.9 508.6 1038.0 508.0 1035.9 506.3C1033.7 504.5 1031.8 500.1 1034.6 498.4Z" fill="#c6cae9"/>
<path d="M1053.7 500.9C1053.7 501.4 1053.0 502.0 1052.0 502.4C1051.0 502.8 1049.2 503.2 1047.5 503.4C1045.9 503.5 1043.7 503.5 1042.0 503.4C1040.4 503.2 1038.6 502.8 1037.6 502.4C1036.5 502.0 1035.9 501.4 1035.9 500.9C1035.9 500.4 1036.5 499.8 1037.6 499.4C1038.6 499.0 1040.4 498.7 1042.0 498.5C1043.7 498.4 1045.9 498.4 1047.5 498.5C1049.2 498.7 1051.0 499.0 1052.0 499.4C1053.0 499.8 1053.7 500.4 1053.7 500.9Z" fill="#ffffff"/>
<path d="M1035.9 507.3C1038.0 505.6 1043.7 505.4 1047.3 506.0C1050.9 506.7 1055.6 508.0 1057.5 511.1C1059.4 514.3 1060.1 522.2 1058.8 525.2C1057.5 528.1 1053.3 529.0 1049.9 529.0C1046.5 529.0 1041.0 527.3 1038.4 525.2C1035.9 523.0 1035.0 519.2 1034.6 516.2C1034.2 513.3 1033.7 509.0 1035.9 507.3Z" fill="#c6cae9"/>
<path d="M1092.7 501.7C1092.7 502.9 1092.0 504.3 1090.9 505.3C1089.8 506.3 1087.8 507.2 1086.0 507.5C1084.2 507.9 1081.8 507.9 1080.0 507.5C1078.2 507.2 1076.3 506.3 1075.2 505.3C1074.1 504.3 1073.3 502.9 1073.3 501.7C1073.3 500.5 1074.1 499.1 1075.2 498.1C1076.3 497.1 1078.2 496.3 1080.0 495.9C1081.8 495.5 1084.2 495.5 1086.0 495.9C1087.8 496.3 1089.8 497.1 1090.9 498.1C1092.0 499.1 1092.7 500.5 1092.7 501.7Z" fill="#9090c6"/>
<path d="M1088.9 502.0C1088.9 502.5 1088.6 503.2 1088.1 503.6C1087.6 504.1 1086.7 504.5 1085.9 504.6C1085.1 504.8 1084.0 504.8 1083.2 504.6C1082.4 504.5 1081.6 504.1 1081.1 503.6C1080.6 503.2 1080.2 502.5 1080.2 502.0C1080.2 501.4 1080.6 500.8 1081.1 500.3C1081.6 499.9 1082.4 499.5 1083.2 499.3C1084.0 499.1 1085.1 499.1 1085.9 499.3C1086.7 499.5 1087.6 499.9 1088.1 500.3C1088.6 500.8 1088.9 501.4 1088.9 502.0Z" fill="#3e3e8c"/>
<path d="M1057.8 512.9C1058.6 510.4 1061.5 507.9 1063.1 507.8C1064.8 507.7 1067.6 509.7 1067.7 512.4C1067.9 515.1 1065.5 522.1 1063.9 523.9C1062.3 525.7 1059.3 525.0 1058.3 523.1C1057.3 521.3 1057.0 515.5 1057.8 512.9Z" fill="#fdc860"/>
<path d="M1057.5 525.7C1058.6 521.4 1063.5 519.7 1067.7 518.0C1072.0 516.3 1078.4 515.6 1083.0 515.5C1087.7 515.4 1091.8 516.7 1095.8 517.5C1099.8 518.3 1105.4 518.8 1107.3 520.1C1109.2 521.3 1108.7 524.2 1107.3 525.2C1105.9 526.1 1102.0 525.3 1098.9 525.7C1095.7 526.1 1091.6 524.7 1088.6 527.7C1085.7 530.7 1082.7 538.8 1081.0 543.5C1079.3 548.3 1080.6 554.2 1078.4 556.3C1076.3 558.4 1071.1 558.4 1068.2 556.3C1065.4 554.2 1063.4 548.6 1061.6 543.5C1059.8 538.4 1056.5 529.9 1057.5 525.7Z" fill="#fdf0a8"/>
<path d="M1079.7 527.7C1081.0 525.9 1086.1 525.8 1090.7 525.7C1095.3 525.5 1104.5 524.6 1107.3 526.7C1110.0 528.8 1109.6 536.4 1107.3 538.4C1104.9 540.5 1097.3 539.2 1093.2 538.9C1089.2 538.6 1085.3 538.5 1083.0 536.6C1080.8 534.8 1078.4 529.5 1079.7 527.7Z" fill="#c6cae9"/>
<path d="M993.8 588.9C995.5 584.7 1001.8 578.1 1006.5 573.6C1011.2 569.2 1017.2 565.8 1021.8 562.1C1026.5 558.5 1030.3 555.1 1034.6 551.9C1038.8 548.8 1043.5 545.4 1047.3 543.0C1051.2 540.7 1053.3 538.6 1057.5 537.9C1061.8 537.3 1068.6 538.6 1072.8 539.2C1077.1 539.8 1077.3 542.0 1083.0 541.7C1088.8 541.5 1103.2 527.5 1107.3 537.9C1111.3 548.3 1109.6 591.9 1107.3 604.2C1104.9 616.6 1099.0 610.5 1093.2 611.9C1087.5 613.2 1078.8 611.5 1072.8 612.4C1066.9 613.2 1062.6 615.6 1057.5 617.0C1052.4 618.4 1048.2 620.8 1042.2 620.8C1036.3 620.8 1027.8 619.3 1021.8 617.0C1015.9 614.6 1010.8 609.8 1006.5 606.8C1002.3 603.8 998.4 602.1 996.3 599.1C994.2 596.2 992.1 593.2 993.8 588.9Z" fill="#fdf0a8"/>
<path d="M1067.7 525.2C1069.6 522.6 1077.5 521.3 1080.5 522.6C1083.5 523.9 1085.2 529.4 1085.6 532.8C1086.0 536.2 1084.7 540.7 1083.0 543.0C1081.3 545.4 1077.7 547.7 1075.4 546.8C1073.0 546.0 1070.3 541.5 1069.0 537.9C1067.7 534.3 1065.8 527.7 1067.7 525.2Z" fill="#ffffff"/>
<path d="M1001.4 585.9C1001.7 582.2 1008.7 579.6 1012.4 576.4C1016.0 573.3 1019.4 570.4 1023.4 567.0C1027.3 563.6 1031.7 559.3 1035.9 556.0C1040.0 552.8 1044.7 549.7 1048.4 547.4C1052.0 545.0 1054.6 541.9 1057.8 542.0C1061.0 542.1 1064.4 546.7 1067.7 548.1C1071.1 549.6 1074.1 550.7 1077.9 550.7C1081.8 550.7 1085.8 547.7 1090.7 548.1C1095.6 548.5 1104.5 544.8 1107.3 553.2C1110.0 561.6 1109.8 589.3 1107.3 598.4C1104.8 607.5 1098.4 606.2 1092.2 607.8C1086.1 609.4 1076.5 607.3 1070.3 607.8C1064.0 608.3 1060.0 609.8 1054.7 610.9C1049.5 611.9 1044.1 614.4 1038.9 613.9C1033.7 613.4 1028.0 610.4 1023.4 607.8C1018.7 605.2 1014.5 602.0 1010.9 598.4C1007.2 594.7 1001.2 589.5 1001.4 585.9Z" fill="#fdc860"/>
<path d="M1012.4 582.6C1013.7 579.9 1019.4 575.2 1023.4 571.6C1027.3 567.9 1031.7 564.0 1035.9 560.6C1040.0 557.2 1044.7 553.8 1048.4 551.2C1052.0 548.6 1054.6 546.3 1057.8 545.1C1060.9 543.8 1065.1 541.2 1067.2 543.5C1069.3 545.9 1068.2 556.7 1070.3 559.1C1072.4 561.4 1076.6 558.9 1079.7 557.6C1082.9 556.2 1086.6 550.7 1089.2 551.2C1091.8 551.7 1093.5 555.9 1095.3 560.6C1097.1 565.3 1099.6 574.0 1100.1 579.5C1100.7 585.0 1099.9 589.9 1098.6 593.5C1097.3 597.2 1095.4 599.9 1092.2 601.4C1089.1 603.0 1083.9 603.0 1079.7 603.0C1075.6 603.0 1071.9 601.4 1067.2 601.4C1062.5 601.4 1056.1 603.0 1051.4 603.0C1046.7 603.0 1043.1 603.0 1038.9 601.4C1034.7 599.9 1030.3 595.9 1026.4 593.5C1022.5 591.2 1017.8 589.2 1015.5 587.4C1013.1 585.6 1011.1 585.2 1012.4 582.6Z" fill="#fd9428"/>
<path d="M1042.2 571.6C1042.7 569.2 1045.8 566.8 1048.4 563.9C1050.9 561.1 1055.5 557.1 1057.8 554.5C1060.1 551.9 1060.8 549.2 1062.4 548.1C1064.0 547.1 1065.9 546.0 1067.2 548.1C1068.5 550.2 1068.2 558.8 1070.3 560.6C1072.4 562.4 1076.8 560.4 1079.7 559.1C1082.6 557.8 1085.3 552.5 1087.6 553.0C1090.0 553.5 1091.9 557.7 1093.8 562.1C1095.6 566.6 1098.3 575.0 1098.6 579.5C1098.9 584.0 1097.4 587.9 1095.3 588.9C1093.2 590.0 1088.9 587.2 1085.8 585.9C1082.7 584.5 1079.8 581.3 1076.7 581.0C1073.6 580.7 1070.9 583.8 1067.2 584.1C1063.6 584.3 1058.4 583.6 1054.7 582.6C1051.1 581.5 1047.4 579.8 1045.3 578.0C1043.2 576.1 1041.7 573.9 1042.2 571.6Z" fill="#f85a10"/>
<path d="M1059.3 560.6C1059.4 557.7 1061.1 551.5 1062.4 549.7C1063.7 547.8 1066.0 547.8 1067.2 549.7C1068.4 551.5 1069.5 557.7 1069.5 560.6C1069.5 563.5 1068.5 565.9 1067.2 567.0C1065.9 568.1 1062.9 568.1 1061.6 567.0C1060.3 565.9 1059.2 563.5 1059.3 560.6Z" fill="#d41a12"/>
<path d="M1076.7 565.5C1076.7 562.8 1081.0 560.9 1082.8 559.1C1084.6 557.3 1086.1 553.7 1087.6 554.5C1089.2 555.3 1090.8 560.0 1092.2 563.9C1093.6 567.8 1095.5 574.0 1096.0 578.0C1096.6 581.9 1096.4 586.6 1095.3 587.4C1094.1 588.2 1091.2 584.6 1089.2 582.6C1087.1 580.5 1084.9 577.7 1082.8 574.9C1080.7 572.1 1076.7 568.1 1076.7 565.5Z" fill="#d41a12"/>
<path d="M884.1 564.4C887.5 554.4 896.9 564.4 904.5 564.4C912.2 564.5 923.6 564.5 930.0 565.0C936.4 565.4 939.6 565.8 942.8 567.2C946.0 568.7 947.0 570.4 949.1 573.6C951.3 576.8 953.2 582.1 955.5 586.4C957.9 590.6 959.8 595.3 963.2 599.1C966.6 603.0 971.2 606.4 975.9 609.3C980.6 612.3 987.8 614.4 991.2 617.0C994.6 619.5 1014.2 623.4 996.3 624.6C978.5 625.9 902.8 634.7 884.1 624.6C865.4 614.6 880.7 574.5 884.1 564.4Z" fill="#fdf0a8"/>
<path d="M894.3 568.5C895.3 565.7 900.8 567.5 905.5 567.0C910.2 566.5 916.9 565.2 922.6 565.5C928.4 565.7 936.3 567.5 940.0 568.5C943.6 569.5 942.5 568.7 944.5 571.6C946.6 574.5 949.8 581.4 952.5 585.9C955.1 590.3 957.5 594.7 960.4 598.4C963.3 602.0 966.1 605.2 969.8 607.8C973.5 610.4 980.0 611.1 982.3 613.9C984.6 616.7 996.8 622.8 983.8 624.6C970.9 626.4 918.8 628.0 904.5 624.6C890.2 621.2 899.0 611.0 898.1 604.2C897.3 597.4 900.0 589.8 899.4 583.8C898.8 577.9 893.3 571.3 894.3 568.5Z" fill="#fdc860"/>
<path d="M924.4 604.5C924.4 602.1 926.9 598.7 929.0 595.0C931.1 591.4 934.6 586.2 936.9 582.6C939.2 578.9 941.2 574.1 943.0 573.1C944.8 572.1 945.8 573.0 947.9 576.4C949.9 579.8 952.9 588.8 955.5 593.5C958.1 598.2 960.0 601.3 963.4 604.5C966.8 607.6 972.8 610.6 975.9 612.4C979.1 614.2 982.3 614.1 982.3 615.5C982.3 616.8 979.1 620.0 975.9 620.3C972.8 620.6 967.6 618.0 963.4 617.0C959.3 615.9 955.1 614.7 950.9 613.9C946.8 613.2 942.1 613.2 938.4 612.4C934.8 611.6 931.3 610.6 929.0 609.3C926.7 608.0 924.4 606.9 924.4 604.5Z" fill="#fd9428"/>
<path d="M944.8 574.9C945.0 573.8 946.6 574.5 948.4 577.5C950.2 580.4 954.7 590.0 955.5 592.8C956.3 595.5 954.3 595.5 953.0 594.0C951.6 592.5 948.7 587.0 947.4 583.8C946.0 580.6 944.6 576.0 944.8 574.9Z" fill="#f85a10"/>
<path d="M995.0 582.6C995.7 580.6 999.0 578.5 1000.9 578.7C1002.8 578.9 1006.0 581.7 1006.5 583.8C1007.0 586.0 1005.6 590.4 1004.0 591.5C1002.4 592.5 998.3 591.7 996.8 590.2C995.3 588.7 994.4 584.5 995.0 582.6Z" fill="#fdf0a8"/>
<path d="M1043.8 624.6C1035.5 622.6 1052.9 614.9 1057.8 612.4C1062.7 609.8 1068.7 610.1 1073.3 609.3C1078.0 608.6 1080.2 608.7 1085.8 607.8C1091.5 607.0 1103.7 601.4 1107.3 604.2C1110.8 607.0 1117.9 621.2 1107.3 624.6C1096.7 628.0 1052.0 626.7 1043.8 624.6Z" fill="#c6cae9"/>
<path d="M1072.8 617.0C1074.5 615.1 1079.2 613.5 1083.0 613.2C1086.9 612.8 1093.2 613.0 1095.8 614.9C1098.3 616.9 1102.2 623.0 1098.3 624.6C1094.5 626.2 1077.1 625.9 1072.8 624.6C1068.6 623.4 1071.1 618.9 1072.8 617.0Z" fill="#9090c6"/>
</g>
<g filter="url(#bl2)" fill="none" stroke-linejoin="round">
<path d="M906.7 520.3L909.2 522.4L913.5 524.5L920.4 523.4L919.1 526.0L912.9 526.8L911.7 527.6L915.4 531.3L920.4 534.7L924.1 535.5L930.3 533.4L932.2 530.2L933.4 527.6L934.7 530.7L934.7 533.4L935.3 537.0L935.0 543.3L935.9 547.0L937.2 551.7L938.4 555.9L940.9 561.6L942.8 565.8L945.9 571.6L947.8 576.3L950.9 581.5L954.0 585.2L955.8 590.4L957.7 595.1L959.6 598.2L962.1 600.6L964.9 601.5L967.0 600.3L968.9 597.2L973.3 595.6L975.7 595.1L973.6 593.5L975.7 589.9L979.2 589.6L979.2 585.2L978.9 581.0L981.3 576.8L982.0 573.6L980.7 569.5L980.4 565.3L982.0 562.1L985.7 561.1L988.2 558.5L994.4 556.9L994.4 554.8L1000.6 551.1L1005.6 548.0L1010.6 542.8L1014.9 540.4L1019.3 539.1L1022.4 537.0L1023.6 533.9L1024.3 531.3L1028.6 530.2L1031.1 529.7L1033.6 530.7L1036.7 530.2L1036.1 527.1L1035.1 522.4L1033.6 518.2L1030.5 515.6L1031.7 512.4L1035.5 511.4L1032.3 508.8L1031.1 507.2L1033.6 505.4L1037.3 507.2L1041.1 508.0L1041.4 511.4L1046.0 512.2L1054.7 512.2L1057.5 513.5L1055.4 516.1L1052.3 517.4L1049.8 518.7L1049.5 521.8L1051.9 523.7L1053.8 520.8L1056.3 519.8L1056.6 523.9L1058.2 528.6L1061.6 527.6L1062.2 523.4L1063.4 518.7L1068.1 519.0L1071.5 513.0L1070.9 510.3L1074.6 507.7L1074.0 504.6L1080.9 500.9L1086.5 502.0L1085.5 498.8L1088.0 496.2L1083.4 494.6L1081.5 491.0L1076.5 491.5L1070.9 490.5L1064.7 493.6L1059.1 497.3L1052.9 498.3L1055.4 500.9L1054.7 503.3L1045.4 503.5L1041.1 504.1L1035.5 503.0L1034.5 501.4L1035.1 499.9L1035.5 497.8L1033.6 496.7L1030.5 497.8L1030.2 500.9L1030.8 505.6L1025.5 505.6L1017.4 504.6L1012.4 503.5L1008.7 500.9L1005.0 500.1L1000.6 500.7L996.9 498.8L991.9 497.8L988.2 496.2L983.8 493.6L980.4 492.8L982.6 488.9L985.7 485.7L986.3 485.5L981.3 483.7L978.9 481.8L975.1 480.0L972.3 478.9L972.0 473.2L976.4 473.2L977.0 470.1L981.3 465.9L982.6 460.6L982.0 458.0L977.0 455.9L970.1 457.5L967.0 455.4L960.2 452.3L954.0 451.2L946.5 449.9L941.5 450.7L936.6 451.7L934.1 454.4L937.2 457.5L937.2 461.2L939.4 463.8L940.3 466.9L942.8 470.1L945.9 472.1L950.9 474.8L946.5 476.9L945.9 481.0L942.2 484.7L939.0 487.3L935.9 492.0L932.2 493.6L929.7 497.8L922.3 498.8L917.9 502.5L918.5 505.1L919.1 509.3L923.5 513.0L924.7 515.0L917.9 517.1L910.4 516.6ZM886.8 511.4L896.1 510.9L899.2 514.0L902.3 518.7L906.7 520.3M886.8 488.9L894.9 487.3L894.9 481.6L904.2 479.5L913.5 476.9L914.8 471.1L917.9 469.5L919.8 466.4L924.7 465.9L927.9 460.6L925.4 455.4L928.5 452.8L933.4 451.2L941.5 450.7M928.5 452.8L927.9 445.5L926.0 444.9M886.8 448.6L896.1 448.3L904.2 449.6L907.3 449.6L913.5 449.4L919.1 447.0L922.9 444.9M941.5 450.7L948.4 448.6L947.8 444.9M986.3 485.5L989.4 484.7L993.2 485.2L998.8 488.9L1004.4 490.5L1006.2 492.5L1011.8 494.1L1015.6 495.7L1017.4 497.3L1023.0 497.3L1028.0 498.0L1030.5 497.8M1035.1 499.9L1037.9 497.8L1041.1 496.2L1044.8 496.7L1050.4 497.3L1052.9 498.3M1036.7 530.2L1042.3 529.2L1046.0 526.6L1049.8 526.0L1053.5 527.1L1054.7 531.8L1056.6 535.5M1058.2 528.6L1058.5 532.3L1056.6 535.5M1056.6 535.5L1061.0 539.6L1065.3 544.3L1069.0 549.6L1070.3 554.8L1069.0 560.0L1075.3 561.6L1079.6 557.9L1084.6 554.8L1087.1 556.4L1090.2 560.0L1090.8 565.3L1092.7 570.5L1095.8 578.4L1095.8 586.2L1095.8 591.4L1093.9 596.7L1093.9 601.9L1096.4 600.8L1098.9 605.0L1102.6 608.2L1104.5 609.7M1095.8 590.4L1098.3 586.2L1101.4 582.0L1098.9 575.7L1093.3 565.3L1095.8 560.0L1090.8 552.2L1090.2 547.0L1097.7 540.2L1104.5 537.0M1088.0 496.2L1092.7 499.4L1096.4 499.9L1096.4 507.7L1089.6 514.0L1090.2 518.2L1097.0 517.7L1098.3 522.4L1101.4 525.5L1104.5 530.2M1104.5 573.6L1103.9 578.4L1100.1 588.8L1099.5 593.5L1103.9 595.1L1104.5 599.3M979.5 592.5L982.0 594.0L987.6 599.3L991.3 604.5L990.7 609.2L986.3 611.8L981.3 612.6L979.2 608.2L978.9 602.4L979.5 597.2L980.4 595.1ZM1074.6 614.2L1077.1 613.9L1082.7 616.3L1089.0 616.3L1092.1 619.7L1093.9 622.8L1079.0 622.8L1075.9 618.1ZM1059.7 573.1L1061.0 574.2L1060.5 579.9L1059.2 583.6L1058.6 581.5L1059.2 577.8ZM1057.8 587.2L1058.5 588.8L1057.2 588.8Z" stroke="#06100a" stroke-width="1.8" opacity=".95"/>
<path d="M924.7 515.0L933.4 516.1L937.2 516.1L942.8 521.8L944.6 526.6L942.8 530.7L941.5 536.0L939.0 538.1L935.3 538.1M942.8 521.8L948.4 518.7L950.9 514.0L956.5 517.1L960.8 515.6L960.8 511.4L963.9 510.9L968.9 503.5M968.9 503.5L964.5 501.4L963.3 498.3L960.8 498.8L956.5 497.3L954.0 495.2L949.0 491.0L945.9 490.5L942.2 487.1M945.9 489.4L951.5 487.8L956.5 487.3L960.2 484.7L960.8 482.1L957.1 479.5L954.6 476.3L952.7 474.2M952.7 474.2L957.1 471.1L961.4 471.6L967.0 472.7L970.1 473.7L972.0 473.2M965.2 484.7L967.7 481.6L972.6 480.5M960.8 482.1L965.2 484.7L962.7 489.4L962.7 493.1L963.3 495.2L964.5 497.8L963.3 498.3M965.2 484.7L969.5 488.4L973.3 489.9L976.4 492.5L980.4 492.8M968.9 503.5L973.9 504.6L973.3 509.8L970.1 511.4L971.4 515.6L977.6 512.4L982.6 513.0L988.2 512.4L991.9 514.0L994.4 515.0L997.5 518.2M997.5 518.2L1000.6 515.6L1001.9 513.0L1005.0 509.8L1008.7 508.8L1006.2 505.6L1004.4 502.5L1005.0 500.1M1000.6 515.6L1006.8 516.1L1015.6 515.0L1020.5 515.6L1025.5 513.5L1028.6 511.9L1029.9 505.6M1028.6 511.9L1026.8 516.6L1023.0 519.2L1017.4 520.8L1017.4 523.4L1022.4 527.1L1023.6 529.2L1026.8 530.5M1022.4 527.1L1017.4 526.0L1011.8 528.1L1006.8 526.6L1005.0 526.0M1005.0 526.0L1002.5 522.4L1000.6 518.7L997.5 518.2M997.5 518.2L990.7 519.2L990.1 523.9L985.7 527.1L983.2 531.3L982.6 532.3M942.8 530.7L950.2 531.8L956.5 532.8L960.2 530.7L968.9 531.3L977.0 530.7L982.6 532.3M982.6 532.3L983.8 537.5L983.2 542.3L982.0 545.4L979.5 542.3L973.9 541.2L969.5 541.7L966.4 546.4L964.5 548.0M964.5 548.0L960.8 551.1L957.1 553.2L952.7 554.8L949.0 555.3L944.6 557.4L944.6 561.1L940.9 561.6M944.6 561.1L944.0 565.3L943.1 565.8M964.5 548.0L964.5 553.2L963.9 557.9L961.4 561.1L962.1 565.3L960.2 565.8L963.9 569.5L968.9 572.6L969.5 577.3M969.5 577.3L965.8 577.8L963.3 582.0L957.7 583.1L953.4 579.9L948.4 576.8M957.7 583.1L960.2 588.3L962.7 590.4L962.7 594.6L962.7 598.8L962.1 600.3M969.5 577.3L975.7 574.7L980.1 573.1L982.0 573.1M963.9 557.9L969.5 560.0L975.7 557.4L980.1 555.3L982.6 554.8L986.3 550.6L985.1 548.5L982.0 545.4M1005.0 526.0L1001.9 530.7L1001.2 532.3L996.3 536.5L995.0 539.6L992.5 544.3L991.9 546.4L988.8 550.1L986.3 550.6M988.8 550.1L995.0 547.5L999.4 545.4L1005.0 544.3L1010.0 543.8M1054.7 503.3L1061.0 502.5L1068.4 499.4L1076.5 497.8L1079.6 500.4M1041.4 508.2L1048.5 508.2L1056.0 508.2L1059.7 510.3L1057.5 513.5M1062.8 508.8L1067.2 505.1L1074.6 502.5M1061.0 514.5L1063.4 509.8L1070.9 510.3M1056.3 517.1L1061.0 516.1L1063.4 518.7M1056.3 517.1L1056.3 519.8M1041.1 504.1L1041.4 508.0M1030.8 502.0L1034.5 501.4M942.8 470.1L944.0 465.9L942.8 462.2L952.1 462.7L960.2 461.2L966.4 458.0M970.1 473.7L973.3 469.5L972.6 464.8L969.5 462.7L966.4 458.0M960.8 493.1L963.3 493.1L963.3 494.9L960.8 494.6L960.8 493.1" stroke="#06100a" stroke-width="1.6" opacity=".9"/>
<path d="M1059.7 573.1L1061.0 574.2L1060.5 579.9L1059.2 583.6L1058.6 581.5L1059.2 577.8Z" fill="#0a140c" stroke="#0a140c" stroke-width=".3"/>
<path d="M934.1 582.5h1M931.6 585.2h1M934.7 588.3h1M936.6 590.9h1M932.2 590.9h1M1065.9 607.1h1M1059.7 595.6h1" stroke="#0a1a10" stroke-width="1.2"/>
</g></g>
<g filter="url(#bl2)">
<rect x="886.8" y="445.2" width="217.7" height="177.1" fill="none" stroke="#1c1c1c" stroke-width="1.7"/>
<text x="863.7" y="621.6" class="ax" textLength="15.6" lengthAdjust="spacingAndGlyphs">5N</text>
<text x="857.7" y="595.4" class="ax" textLength="21.6" lengthAdjust="spacingAndGlyphs">10N</text>
<text x="857.7" y="569.3" class="ax" textLength="21.6" lengthAdjust="spacingAndGlyphs">15N</text>
<text x="857.7" y="543.1" class="ax" textLength="21.6" lengthAdjust="spacingAndGlyphs">20N</text>
<text x="857.7" y="517.0" class="ax" textLength="21.6" lengthAdjust="spacingAndGlyphs">25N</text>
<text x="857.7" y="490.8" class="ax" textLength="21.6" lengthAdjust="spacingAndGlyphs">30N</text>
<text x="857.7" y="464.6" class="ax" textLength="21.6" lengthAdjust="spacingAndGlyphs">35N</text>
<text x="907.3" y="634.9" class="ax" textLength="21.2" lengthAdjust="spacingAndGlyphs">70E</text>
<text x="950.8" y="634.9" class="ax" textLength="21.2" lengthAdjust="spacingAndGlyphs">77E</text>
<text x="994.4" y="634.9" class="ax" textLength="21.2" lengthAdjust="spacingAndGlyphs">84E</text>
<text x="1037.9" y="634.9" class="ax" textLength="21.2" lengthAdjust="spacingAndGlyphs">91E</text>
<text x="1081.5" y="634.9" class="ax" textLength="21.2" lengthAdjust="spacingAndGlyphs">98E</text>
<path d="M886.8 617.6h-3M886.8 591.4h-3M886.8 565.3h-3M886.8 539.1h-3M886.8 513.0h-3M886.8 486.8h-3M886.8 460.6h-3M917.9 622.3v3M961.4 622.3v3M1005.0 622.3v3M1048.5 622.3v3M1092.1 622.3v3" stroke="#222" stroke-width="1.2"/>
</g>
<!-- colorbar 1 -->
<g filter="url(#bl2)">
<path d="M746.4 361.7H994V374.3H746.4Z" fill="#fff"/>
<path d="M685 368L746.4 361.7V374.3Z" fill="#fff" stroke="#555" stroke-width=".8"/>
<rect x="746.4" y="361.7" width="62.2" height="12.6" fill="#7ff6a6"/>
<rect x="808.6" y="361.7" width="62.1" height="12.6" fill="#12e86e"/>
<rect x="870.7" y="361.7" width="61.5" height="12.6" fill="#07c03e"/>
<rect x="932.2" y="361.7" width="61.8" height="12.6" fill="#04962a"/>
<path d="M994 361.7L1052 368L994 374.3Z" fill="#037a26"/>
<path d="M746.4 361.7H994V374.3H746.4ZM808.6 361.7V374.3M870.7 361.7V374.3M932.2 361.7V374.3" fill="none" stroke="#1a4a2a" stroke-width=".9"/>
<g class="cb" font-size="16.4" fill="#777">
<text x="743" y="390.6">1</text><text x="803.3" y="390.6" textLength="12" lengthAdjust="spacingAndGlyphs">3</text><text x="865" y="390.6" textLength="12" lengthAdjust="spacingAndGlyphs">5</text><text x="927" y="390.6" textLength="12" lengthAdjust="spacingAndGlyphs">7</text><text x="982.5" y="390.6" textLength="24" lengthAdjust="spacingAndGlyphs">10</text>
</g>
<path d="M692 355.5h9M704 355.5h12M746 355.5h10M759 355.5h12M797 355.5h10M810 355.5h12M850 355.5h10M863 355.5h12M966 355.5h10M978 355.5h12M1016 355.5h10M1030 355.5h10M1068 355.5h3" stroke="#555" stroke-width="1.2"/>
<rect x="670" y="398" width="403" height="1" fill="#888"/>
</g>
<!-- colorbar 2 -->
<g filter="url(#bl2)">
<path d="M608 656.5L654.2 649.4V663.7Z" fill="#d41212"/>
<rect x="654.2" y="649.4" width="44.7" height="14.3" fill="#fa5208"/>
<rect x="698.9" y="649.4" width="45.1" height="14.3" fill="#fd9222"/>
<rect x="744" y="649.4" width="44.8" height="14.3" fill="#fdc85a"/>
<rect x="788.8" y="649.4" width="45.2" height="14.3" fill="#fdf0a2"/>
<rect x="834" y="649.4" width="44.6" height="14.3" fill="#fff"/>
<rect x="878.6" y="649.4" width="44.6" height="14.3" fill="#c4c8e8"/>
<rect x="923.2" y="649.4" width="45.1" height="14.3" fill="#8c8cc4"/>
<rect x="968.3" y="649.4" width="44.8" height="14.3" fill="#6464a8"/>
<rect x="1013.1" y="649.4" width="45.5" height="14.3" fill="#3c3c8c"/>
<path d="M1058.6 649.4L1104 656.5L1058.6 663.7Z" fill="#0a0a30"/>
<path d="M654.2 649.4H1058.6V663.7H654.2ZM698.9 649.4V663.7M744 649.4V663.7M788.8 649.4V663.7M834 649.4V663.7M878.6 649.4V663.7M923.2 649.4V663.7M968.3 649.4V663.7M1013.1 649.4V663.7" fill="none" stroke="#222" stroke-width=".9"/>
<g class="cb" font-size="18.6" fill="#484848">
<text x="635.8" y="683.4" textLength="38.2" lengthAdjust="spacingAndGlyphs">−10</text><text x="687.4" y="683.4" textLength="24.3" lengthAdjust="spacingAndGlyphs">−5</text><text x="732.0" y="683.4" textLength="22.4" lengthAdjust="spacingAndGlyphs">−1</text><text x="766.6" y="683.4" textLength="44.7" lengthAdjust="spacingAndGlyphs">−0.5</text><text x="813.3" y="683.4" textLength="39.4" lengthAdjust="spacingAndGlyphs">−0.1</text><text x="864.0" y="683.4" textLength="27.0" lengthAdjust="spacingAndGlyphs">0.1</text><text x="909.6" y="683.4" textLength="28.4" lengthAdjust="spacingAndGlyphs">0.5</text><text x="963" y="683.4">1</text><text x="1008.0" y="683.4" textLength="11.0" lengthAdjust="spacingAndGlyphs">5</text><text x="1048.0" y="683.4" textLength="21.5" lengthAdjust="spacingAndGlyphs">10</text>
</g>
</g>
</g><rect x="92.2" y="523" width="85.6" height=".6" fill="#777"/><path d="M167 525.6h10" stroke="#999" stroke-width=".8"/>
<g opacity=".53"><rect x="81" y="584" width="108" height="140" fill="#fff"/>
<clipPath id="cma"><path d="M101.3 621.4L101.6 621.8L102.3 622.1L103.3 621.9L103.1 622.3L102.2 622.4L102.0 622.5L102.5 623.1L103.3 623.6L103.8 623.7L104.8 623.4L105.0 622.9L105.2 622.5L105.4 623.0L105.4 623.4L105.5 623.9L105.5 624.9L105.6 625.4L105.8 626.1L106.0 626.7L106.3 627.6L106.6 628.2L107.1 629.1L107.3 629.8L107.8 630.5L108.3 631.1L108.5 631.9L108.8 632.6L109.1 633.0L109.5 633.4L109.9 633.5L110.2 633.3L110.5 632.9L111.1 632.6L111.5 632.6L111.2 632.3L111.5 631.8L112.0 631.7L112.0 631.1L112.0 630.5L112.3 629.8L112.4 629.4L112.2 628.8L112.2 628.1L112.4 627.7L113.0 627.5L113.3 627.1L114.3 626.9L114.3 626.6L115.2 626.0L115.9 625.6L116.7 624.8L117.3 624.4L118.0 624.2L118.4 623.9L118.6 623.5L118.7 623.1L119.3 622.9L119.7 622.8L120.1 623.0L120.5 622.9L120.4 622.5L120.3 621.8L120.1 621.1L119.6 620.8L119.8 620.3L120.4 620.1L119.9 619.7L119.7 619.5L120.1 619.2L120.6 619.5L121.2 619.6L121.2 620.1L121.9 620.2L123.2 620.2L123.6 620.4L123.3 620.8L122.8 621.0L122.5 621.2L122.4 621.7L122.8 622.0L123.1 621.5L123.4 621.4L123.5 622.0L123.7 622.7L124.2 622.5L124.3 621.9L124.5 621.2L125.2 621.3L125.7 620.4L125.6 620.0L126.2 619.6L126.1 619.1L127.1 618.6L127.9 618.7L127.8 618.3L128.2 617.9L127.5 617.6L127.2 617.1L126.4 617.2L125.6 617.0L124.7 617.5L123.9 618.0L122.9 618.2L123.3 618.6L123.2 618.9L121.8 619.0L121.2 619.0L120.4 618.9L120.2 618.7L120.3 618.4L120.4 618.1L120.1 618.0L119.6 618.1L119.6 618.6L119.7 619.3L118.9 619.3L117.7 619.1L116.9 619.0L116.4 618.6L115.8 618.5L115.2 618.5L114.6 618.3L113.9 618.1L113.3 617.9L112.7 617.5L112.2 617.4L112.5 616.8L113.0 616.3L113.1 616.3L112.3 616.0L112.0 615.7L111.4 615.5L111.0 615.3L110.9 614.5L111.6 614.5L111.7 614.0L112.3 613.4L112.5 612.6L112.4 612.2L111.7 611.9L110.7 612.1L110.2 611.8L109.2 611.3L108.3 611.2L107.2 611.0L106.4 611.1L105.7 611.3L105.3 611.7L105.8 612.1L105.8 612.7L106.1 613.1L106.2 613.5L106.6 614.0L107.1 614.3L107.8 614.7L107.2 615.0L107.1 615.6L106.5 616.2L106.1 616.6L105.6 617.3L105.0 617.5L104.7 618.1L103.6 618.3L102.9 618.8L103.0 619.2L103.1 619.8L103.7 620.4L103.9 620.7L102.9 621.0L101.8 620.9Z"/></clipPath>
<g clip-path="url(#cma)">
<path d="M93.7 639.8L135.2 639.8L135.2 608.7L93.7 608.7Z" fill="#f4c868"/>
<path d="M101.1 624.2L104.8 616.5L108.5 614.1L114.0 618.0L117.7 620.4L117.7 624.2L112.1 628.9L108.5 629.7L104.8 625.8Z" fill="#ee9a38"/>
<path d="M102.9 621.1L106.6 616.5L110.3 616.5L113.1 619.6L112.1 623.5L108.5 625.0L104.8 623.5Z" fill="#e27024"/>
<path d="M105.7 614.1L112.1 614.1L113.1 610.3L105.7 610.3Z" fill="#f6e0a0"/>
<path d="M119.5 618.0L128.8 616.5L128.8 622.7L121.4 622.7Z" fill="#f0b050"/>
<path d="M103.9 620.7L105.2 620.8L105.8 620.8L106.6 621.7L106.9 622.4L106.6 623.0L106.4 623.8L106.1 624.1L105.5 624.1M106.6 621.7L107.4 621.2L107.8 620.5L108.6 621.0L109.3 620.8L109.3 620.1L109.7 620.1L110.5 619.0M110.5 619.0L109.8 618.7L109.7 618.2L109.3 618.3L108.6 618.0L108.3 617.7L107.5 617.1L107.1 617.0L106.5 616.5M107.1 616.9L107.9 616.6L108.6 616.6L109.2 616.2L109.3 615.8L108.7 615.4L108.4 614.9L108.1 614.6M108.1 614.6L108.7 614.1L109.4 614.2L110.2 614.4L110.7 614.5L110.9 614.5M109.9 616.2L110.3 615.7L111.0 615.5M109.3 615.8L109.9 616.2L109.6 616.9L109.6 617.4L109.7 617.7L109.8 618.1L109.7 618.2M109.9 616.2L110.6 616.7L111.1 616.9L111.6 617.3L112.2 617.4M110.5 619.0L111.2 619.1L111.1 619.9L110.7 620.1L110.9 620.8L111.8 620.3L112.5 620.4L113.3 620.3L113.9 620.5L114.3 620.7L114.7 621.1M114.7 621.1L115.2 620.8L115.4 620.4L115.8 619.9L116.4 619.7L116.0 619.3L115.7 618.8L115.8 618.5M115.2 620.8L116.1 620.8L117.4 620.7L118.1 620.8L118.9 620.4L119.3 620.2L119.5 619.3M119.3 620.2L119.1 620.9L118.5 621.3L117.7 621.5L117.7 621.9L118.4 622.5L118.6 622.8L119.1 623.0M118.4 622.5L117.7 622.3L116.8 622.6L116.1 622.4L115.8 622.3M115.8 622.3L115.5 621.8L115.2 621.2L114.7 621.1M114.7 621.1L113.7 621.3L113.6 622.0L113.0 622.5L112.6 623.1L112.5 623.2M106.6 623.0L107.7 623.2L108.6 623.3L109.2 623.0L110.5 623.1L111.7 623.0L112.5 623.2M112.5 623.2L112.7 624.0L112.6 624.7L112.4 625.2L112.1 624.7L111.2 624.6L110.6 624.6L110.1 625.3L109.8 625.6M109.8 625.6L109.3 626.0L108.7 626.3L108.1 626.6L107.5 626.7L106.9 627.0L106.9 627.5L106.3 627.6M106.9 627.5L106.8 628.1L106.7 628.2M109.8 625.6L109.8 626.3L109.7 627.0L109.4 627.5L109.5 628.1L109.2 628.2L109.7 628.8L110.5 629.2L110.6 629.9M110.6 629.9L110.0 630.0L109.7 630.6L108.8 630.8L108.2 630.3L107.4 629.8M108.8 630.8L109.2 631.5L109.6 631.9L109.6 632.5L109.6 633.1L109.5 633.3M110.6 629.9L111.5 629.5L112.1 629.3L112.4 629.3M109.7 627.0L110.6 627.4L111.5 627.0L112.1 626.7L112.5 626.6L113.1 626.0L112.9 625.6L112.4 625.2M115.8 622.3L115.4 623.0L115.3 623.2L114.5 623.9L114.4 624.3L114.0 625.0L113.9 625.3L113.4 625.9L113.1 626.0M113.4 625.9L114.4 625.5L115.0 625.2L115.8 625.0L116.6 624.9M123.2 618.9L124.1 618.8L125.2 618.3L126.4 618.1L126.9 618.5M121.2 619.7L122.3 619.7L123.4 619.7L124.0 620.0L123.6 620.4M124.4 619.7L125.1 619.2L126.2 618.8M124.1 620.6L124.5 619.9L125.6 620.0M123.4 621.0L124.1 620.8L124.5 621.2M123.4 621.0L123.4 621.4M121.2 619.0L121.2 619.6M119.7 618.7L120.2 618.7M106.6 614.0L106.8 613.4L106.6 612.8L108.0 612.9L109.2 612.7L110.1 612.2M110.7 614.5L111.1 613.9L111.0 613.2L110.6 612.9L110.1 612.2M109.3 617.4L109.7 617.4L109.7 617.7L109.3 617.6L109.3 617.4" fill="none" stroke="#333" stroke-width=".3"/>
</g>
<path d="M101.3 621.4L101.6 621.8L102.3 622.1L103.3 621.9L103.1 622.3L102.2 622.4L102.0 622.5L102.5 623.1L103.3 623.6L103.8 623.7L104.8 623.4L105.0 622.9L105.2 622.5L105.4 623.0L105.4 623.4L105.5 623.9L105.5 624.9L105.6 625.4L105.8 626.1L106.0 626.7L106.3 627.6L106.6 628.2L107.1 629.1L107.3 629.8L107.8 630.5L108.3 631.1L108.5 631.9L108.8 632.6L109.1 633.0L109.5 633.4L109.9 633.5L110.2 633.3L110.5 632.9L111.1 632.6L111.5 632.6L111.2 632.3L111.5 631.8L112.0 631.7L112.0 631.1L112.0 630.5L112.3 629.8L112.4 629.4L112.2 628.8L112.2 628.1L112.4 627.7L113.0 627.5L113.3 627.1L114.3 626.9L114.3 626.6L115.2 626.0L115.9 625.6L116.7 624.8L117.3 624.4L118.0 624.2L118.4 623.9L118.6 623.5L118.7 623.1L119.3 622.9L119.7 622.8L120.1 623.0L120.5 622.9L120.4 622.5L120.3 621.8L120.1 621.1L119.6 620.8L119.8 620.3L120.4 620.1L119.9 619.7L119.7 619.5L120.1 619.2L120.6 619.5L121.2 619.6L121.2 620.1L121.9 620.2L123.2 620.2L123.6 620.4L123.3 620.8L122.8 621.0L122.5 621.2L122.4 621.7L122.8 622.0L123.1 621.5L123.4 621.4L123.5 622.0L123.7 622.7L124.2 622.5L124.3 621.9L124.5 621.2L125.2 621.3L125.7 620.4L125.6 620.0L126.2 619.6L126.1 619.1L127.1 618.6L127.9 618.7L127.8 618.3L128.2 617.9L127.5 617.6L127.2 617.1L126.4 617.2L125.6 617.0L124.7 617.5L123.9 618.0L122.9 618.2L123.3 618.6L123.2 618.9L121.8 619.0L121.2 619.0L120.4 618.9L120.2 618.7L120.3 618.4L120.4 618.1L120.1 618.0L119.6 618.1L119.6 618.6L119.7 619.3L118.9 619.3L117.7 619.1L116.9 619.0L116.4 618.6L115.8 618.5L115.2 618.5L114.6 618.3L113.9 618.1L113.3 617.9L112.7 617.5L112.2 617.4L112.5 616.8L113.0 616.3L113.1 616.3L112.3 616.0L112.0 615.7L111.4 615.5L111.0 615.3L110.9 614.5L111.6 614.5L111.7 614.0L112.3 613.4L112.5 612.6L112.4 612.2L111.7 611.9L110.7 612.1L110.2 611.8L109.2 611.3L108.3 611.2L107.2 611.0L106.4 611.1L105.7 611.3L105.3 611.7L105.8 612.1L105.8 612.7L106.1 613.1L106.2 613.5L106.6 614.0L107.1 614.3L107.8 614.7L107.2 615.0L107.1 615.6L106.5 616.2L106.1 616.6L105.6 617.3L105.0 617.5L104.7 618.1L103.6 618.3L102.9 618.8L103.0 619.2L103.1 619.8L103.7 620.4L103.9 620.7L102.9 621.0L101.8 620.9ZM123.5 623.7L124.1 624.3L124.8 625.0L125.3 625.8L125.5 626.6L125.3 627.4L126.3 627.6L126.9 627.0L127.6 626.6L128.0 626.8L128.5 627.4L128.6 628.1L128.8 628.9L129.3 630.1L129.3 631.2L129.3 632.0L129.0 632.8L129.0 633.6L129.4 633.4L129.8 634.0L130.3 634.5L130.6 634.7M120.5 622.9L121.4 622.8L121.9 622.4L122.5 622.3L123.0 622.5L123.2 623.2L123.5 623.7M98.3 616.8L99.5 616.6L99.5 615.7L100.9 615.4L102.3 615.0L102.5 614.1L102.9 613.9L103.2 613.4L103.9 613.4L104.4 612.6L104.0 611.8L104.5 611.4L105.2 611.2L106.4 611.1M98.3 620.1L99.7 620.1L100.1 620.5L100.6 621.2L101.3 621.4M113.1 616.3L113.5 616.2L114.1 616.2L114.9 616.8L115.7 617.0L116.0 617.3L116.8 617.6L117.4 617.8L117.7 618.0L118.5 618.0L119.2 618.1L119.6 618.1M128.2 617.9L128.8 618.3L129.4 618.4L129.4 619.6L128.4 620.5L128.5 621.1L129.5 621.1L129.7 621.8L130.1 622.2L130.6 622.9M129.3 631.9L129.7 631.2L130.1 630.6L129.8 629.7L128.9 628.1L129.3 627.4L128.6 626.2L128.5 625.4L129.6 624.4L130.6 623.9M112.1 632.2L112.4 632.4L113.3 633.2L113.8 634.0L113.7 634.7L113.1 635.0L112.3 635.2L112.0 634.5L112.0 633.6L112.1 632.9L112.2 632.6Z" fill="none" stroke="#222" stroke-width=".4"/>
<rect x="98.3" y="610.3" width="32.3" height="26.3" fill="none" stroke="#222" stroke-width=".6"/>
<path d="M97.3 635.1h-2.2M97.3 631.5h-2.2M97.3 627.9h-2.2M97.3 624.3h-2.2M97.3 620.8h-2.2M97.3 617.2h-2.2M97.3 613.6h-2.2M101.3 638.4h3.2M107.0 638.4h3.2M112.7 638.4h3.2M118.5 638.4h3.2M124.2 638.4h3.2" stroke="#333" stroke-width=".8"/>
<clipPath id="cmb"><path d="M140.6 621.4L140.9 621.8L141.6 622.1L142.6 621.9L142.4 622.3L141.5 622.4L141.3 622.5L141.9 623.1L142.6 623.6L143.2 623.7L144.1 623.4L144.4 622.9L144.5 622.5L144.7 623.0L144.7 623.4L144.8 623.9L144.8 624.9L144.9 625.4L145.1 626.1L145.3 626.7L145.7 627.6L145.9 628.2L146.4 629.1L146.7 629.8L147.1 630.5L147.6 631.1L147.9 631.9L148.2 632.6L148.4 633.0L148.8 633.4L149.2 633.5L149.5 633.3L149.8 632.9L150.5 632.6L150.8 632.6L150.5 632.3L150.8 631.8L151.3 631.7L151.3 631.1L151.3 630.5L151.7 629.8L151.8 629.4L151.6 628.8L151.5 628.1L151.8 627.7L152.3 627.5L152.7 627.1L153.6 626.9L153.6 626.6L154.5 626.0L155.3 625.6L156.0 624.8L156.7 624.4L157.3 624.2L157.8 623.9L158.0 623.5L158.1 623.1L158.7 622.9L159.1 622.8L159.4 623.0L159.9 622.9L159.8 622.5L159.7 621.8L159.4 621.1L159.0 620.8L159.2 620.3L159.7 620.1L159.3 619.7L159.1 619.5L159.4 619.2L160.0 619.5L160.6 619.6L160.6 620.1L161.3 620.2L162.6 620.2L163.0 620.4L162.7 620.8L162.2 621.0L161.9 621.2L161.8 621.7L162.2 622.0L162.5 621.5L162.8 621.4L162.9 622.0L163.1 622.7L163.6 622.5L163.7 621.9L163.9 621.2L164.6 621.3L165.1 620.4L165.0 620.0L165.6 619.6L165.5 619.1L166.5 618.6L167.3 618.7L167.2 618.3L167.5 617.9L166.9 617.6L166.6 617.1L165.8 617.2L165.0 617.0L164.1 617.5L163.2 618.0L162.3 618.2L162.7 618.6L162.6 618.9L161.2 619.0L160.6 619.0L159.7 618.9L159.6 618.7L159.7 618.4L159.7 618.1L159.4 618.0L159.0 618.1L158.9 618.6L159.0 619.3L158.2 619.3L157.0 619.1L156.3 619.0L155.7 618.6L155.2 618.5L154.5 618.5L154.0 618.3L153.2 618.1L152.7 617.9L152.0 617.5L151.5 617.4L151.9 616.8L152.3 616.3L152.4 616.3L151.7 616.0L151.3 615.7L150.7 615.5L150.3 615.3L150.3 614.5L150.9 614.5L151.0 614.0L151.7 613.4L151.9 612.6L151.8 612.2L151.0 611.9L150.0 612.1L149.5 611.8L148.5 611.3L147.6 611.2L146.5 611.0L145.7 611.1L145.0 611.3L144.6 611.7L145.1 612.1L145.1 612.7L145.4 613.1L145.6 613.5L145.9 614.0L146.4 614.3L147.1 614.7L146.5 615.0L146.4 615.6L145.8 616.2L145.4 616.6L144.9 617.3L144.4 617.5L144.0 618.1L142.9 618.3L142.2 618.8L142.3 619.2L142.4 619.8L143.1 620.4L143.2 620.7L142.2 621.0L141.1 620.9Z"/></clipPath>
<g clip-path="url(#cmb)">
<path d="M133.0 639.8L174.6 639.8L174.6 608.7L133.0 608.7Z" fill="#f4c868"/>
<path d="M140.4 624.2L144.1 616.5L147.8 614.1L153.3 618.0L157.0 620.4L157.0 624.2L151.5 628.9L147.8 629.7L144.1 625.8Z" fill="#ee9a38"/>
<path d="M142.2 621.1L145.9 616.5L149.6 616.5L152.4 619.6L151.5 623.5L147.8 625.0L144.1 623.5Z" fill="#e27024"/>
<path d="M145.0 614.1L151.5 614.1L152.4 610.3L145.0 610.3Z" fill="#f6e0a0"/>
<path d="M158.9 618.0L168.1 616.5L168.1 622.7L160.7 622.7Z" fill="#f0b050"/>
<path d="M143.2 620.7L144.5 620.8L145.1 620.8L145.9 621.7L146.2 622.4L145.9 623.0L145.7 623.8L145.4 624.1L144.8 624.1M145.9 621.7L146.8 621.2L147.1 620.5L148.0 621.0L148.6 620.8L148.6 620.1L149.1 620.1L149.8 619.0M149.8 619.0L149.2 618.7L149.0 618.2L148.6 618.3L148.0 618.0L147.6 617.7L146.9 617.1L146.4 617.0L145.8 616.5M146.4 616.9L147.2 616.6L148.0 616.6L148.5 616.2L148.6 615.8L148.1 615.4L147.7 614.9L147.4 614.6M147.4 614.6L148.1 614.1L148.7 614.2L149.5 614.4L150.0 614.5L150.3 614.5M149.3 616.2L149.6 615.7L150.4 615.5M148.6 615.8L149.3 616.2L148.9 616.9L148.9 617.4L149.0 617.7L149.2 618.1L149.0 618.2M149.3 616.2L149.9 616.7L150.5 616.9L150.9 617.3L151.5 617.4M149.8 619.0L150.6 619.1L150.5 619.9L150.0 620.1L150.2 620.8L151.1 620.3L151.9 620.4L152.7 620.3L153.2 620.5L153.6 620.7L154.1 621.1M154.1 621.1L154.5 620.8L154.7 620.4L155.2 619.9L155.7 619.7L155.4 619.3L155.1 618.8L155.2 618.5M154.5 620.8L155.5 620.8L156.8 620.7L157.5 620.8L158.2 620.4L158.7 620.2L158.9 619.3M158.7 620.2L158.4 620.9L157.9 621.3L157.0 621.5L157.0 621.9L157.8 622.5L158.0 622.8L158.4 623.0M157.8 622.5L157.0 622.3L156.2 622.6L155.5 622.4L155.2 622.3M155.2 622.3L154.8 621.8L154.5 621.2L154.1 621.1M154.1 621.1L153.1 621.3L153.0 622.0L152.3 622.5L151.9 623.1L151.9 623.2M145.9 623.0L147.0 623.2L148.0 623.3L148.5 623.0L149.8 623.1L151.0 623.0L151.9 623.2M151.9 623.2L152.0 624.0L151.9 624.7L151.8 625.2L151.4 624.7L150.6 624.6L149.9 624.6L149.4 625.3L149.2 625.6M149.2 625.6L148.6 626.0L148.1 626.3L147.4 626.6L146.9 626.7L146.2 627.0L146.2 627.5L145.7 627.6M146.2 627.5L146.1 628.1L146.0 628.2M149.2 625.6L149.2 626.3L149.1 627.0L148.7 627.5L148.8 628.1L148.5 628.2L149.1 628.8L149.8 629.2L149.9 629.9M149.9 629.9L149.4 630.0L149.0 630.6L148.2 630.8L147.5 630.3L146.8 629.8M148.2 630.8L148.5 631.5L148.9 631.9L148.9 632.5L148.9 633.1L148.8 633.3M149.9 629.9L150.8 629.5L151.5 629.3L151.8 629.3M149.1 627.0L149.9 627.4L150.8 627.0L151.5 626.7L151.9 626.6L152.4 626.0L152.2 625.6L151.8 625.2M155.2 622.3L154.7 623.0L154.6 623.2L153.9 623.9L153.7 624.3L153.3 625.0L153.2 625.3L152.8 625.9L152.4 626.0M152.8 625.9L153.7 625.5L154.4 625.2L155.2 625.0L155.9 624.9M162.6 618.9L163.5 618.8L164.6 618.3L165.8 618.1L166.3 618.5M160.6 619.7L161.7 619.7L162.8 619.7L163.3 620.0L163.0 620.4M163.8 619.7L164.4 619.2L165.6 618.8M163.5 620.6L163.9 619.9L165.0 620.0M162.8 621.0L163.5 620.8L163.9 621.2M162.8 621.0L162.8 621.4M160.6 619.0L160.6 619.6M159.0 618.7L159.6 618.7M145.9 614.0L146.1 613.4L145.9 612.8L147.3 612.9L148.5 612.7L149.4 612.2M150.0 614.5L150.5 613.9L150.4 613.2L149.9 612.9L149.4 612.2M148.6 617.4L149.0 617.4L149.0 617.7L148.6 617.6L148.6 617.4" fill="none" stroke="#333" stroke-width=".3"/>
</g>
<path d="M140.6 621.4L140.9 621.8L141.6 622.1L142.6 621.9L142.4 622.3L141.5 622.4L141.3 622.5L141.9 623.1L142.6 623.6L143.2 623.7L144.1 623.4L144.4 622.9L144.5 622.5L144.7 623.0L144.7 623.4L144.8 623.9L144.8 624.9L144.9 625.4L145.1 626.1L145.3 626.7L145.7 627.6L145.9 628.2L146.4 629.1L146.7 629.8L147.1 630.5L147.6 631.1L147.9 631.9L148.2 632.6L148.4 633.0L148.8 633.4L149.2 633.5L149.5 633.3L149.8 632.9L150.5 632.6L150.8 632.6L150.5 632.3L150.8 631.8L151.3 631.7L151.3 631.1L151.3 630.5L151.7 629.8L151.8 629.4L151.6 628.8L151.5 628.1L151.8 627.7L152.3 627.5L152.7 627.1L153.6 626.9L153.6 626.6L154.5 626.0L155.3 625.6L156.0 624.8L156.7 624.4L157.3 624.2L157.8 623.9L158.0 623.5L158.1 623.1L158.7 622.9L159.1 622.8L159.4 623.0L159.9 622.9L159.8 622.5L159.7 621.8L159.4 621.1L159.0 620.8L159.2 620.3L159.7 620.1L159.3 619.7L159.1 619.5L159.4 619.2L160.0 619.5L160.6 619.6L160.6 620.1L161.3 620.2L162.6 620.2L163.0 620.4L162.7 620.8L162.2 621.0L161.9 621.2L161.8 621.7L162.2 622.0L162.5 621.5L162.8 621.4L162.9 622.0L163.1 622.7L163.6 622.5L163.7 621.9L163.9 621.2L164.6 621.3L165.1 620.4L165.0 620.0L165.6 619.6L165.5 619.1L166.5 618.6L167.3 618.7L167.2 618.3L167.5 617.9L166.9 617.6L166.6 617.1L165.8 617.2L165.0 617.0L164.1 617.5L163.2 618.0L162.3 618.2L162.7 618.6L162.6 618.9L161.2 619.0L160.6 619.0L159.7 618.9L159.6 618.7L159.7 618.4L159.7 618.1L159.4 618.0L159.0 618.1L158.9 618.6L159.0 619.3L158.2 619.3L157.0 619.1L156.3 619.0L155.7 618.6L155.2 618.5L154.5 618.5L154.0 618.3L153.2 618.1L152.7 617.9L152.0 617.5L151.5 617.4L151.9 616.8L152.3 616.3L152.4 616.3L151.7 616.0L151.3 615.7L150.7 615.5L150.3 615.3L150.3 614.5L150.9 614.5L151.0 614.0L151.7 613.4L151.9 612.6L151.8 612.2L151.0 611.9L150.0 612.1L149.5 611.8L148.5 611.3L147.6 611.2L146.5 611.0L145.7 611.1L145.0 611.3L144.6 611.7L145.1 612.1L145.1 612.7L145.4 613.1L145.6 613.5L145.9 614.0L146.4 614.3L147.1 614.7L146.5 615.0L146.4 615.6L145.8 616.2L145.4 616.6L144.9 617.3L144.4 617.5L144.0 618.1L142.9 618.3L142.2 618.8L142.3 619.2L142.4 619.8L143.1 620.4L143.2 620.7L142.2 621.0L141.1 620.9ZM162.9 623.7L163.5 624.3L164.2 625.0L164.7 625.8L164.9 626.6L164.7 627.4L165.6 627.6L166.3 627.0L167.0 626.6L167.4 626.8L167.9 627.4L168.0 628.1L168.2 628.9L168.7 630.1L168.7 631.2L168.7 632.0L168.4 632.8L168.4 633.6L168.8 633.4L169.2 634.0L169.7 634.5L170.0 634.7M159.9 622.9L160.7 622.8L161.3 622.4L161.9 622.3L162.4 622.5L162.6 623.2L162.9 623.7M137.6 616.8L138.8 616.6L138.8 615.7L140.2 615.4L141.6 615.0L141.8 614.1L142.2 613.9L142.5 613.4L143.2 613.4L143.7 612.6L143.3 611.8L143.8 611.4L144.5 611.2L145.7 611.1M137.6 620.1L139.0 620.1L139.5 620.5L139.9 621.2L140.6 621.4M152.4 616.3L152.9 616.2L153.4 616.2L154.3 616.8L155.1 617.0L155.4 617.3L156.2 617.6L156.8 617.8L157.0 618.0L157.9 618.0L158.6 618.1L159.0 618.1M167.5 617.9L168.2 618.3L168.8 618.4L168.8 619.6L167.8 620.5L167.9 621.1L168.9 621.1L169.1 621.8L169.5 622.2L170.0 622.9M168.7 631.9L169.1 631.2L169.5 630.6L169.2 629.7L168.3 628.1L168.7 627.4L168.0 626.2L167.9 625.4L169.0 624.4L170.0 623.9M151.4 632.2L151.8 632.4L152.6 633.2L153.2 634.0L153.1 634.7L152.4 635.0L151.7 635.2L151.3 634.5L151.3 633.6L151.4 632.9L151.5 632.6Z" fill="none" stroke="#222" stroke-width=".4"/>
<rect x="137.6" y="610.3" width="32.4" height="26.3" fill="none" stroke="#222" stroke-width=".6"/>
<path d="M136.6 635.1h-2.2M136.6 631.5h-2.2M136.6 627.9h-2.2M136.6 624.3h-2.2M136.6 620.8h-2.2M136.6 617.2h-2.2M136.6 613.6h-2.2M140.6 638.4h3.2M146.3 638.4h3.2M152.1 638.4h3.2M157.8 638.4h3.2M163.6 638.4h3.2" stroke="#333" stroke-width=".8"/>
<clipPath id="cmc"><path d="M101.9 666.4L102.3 666.8L103.1 667.2L104.4 667.0L104.1 667.4L103.0 667.6L102.8 667.7L103.5 668.4L104.4 669.0L105.0 669.2L106.2 668.8L106.5 668.2L106.7 667.7L106.9 668.3L106.9 668.8L107.1 669.4L107.0 670.6L107.2 671.3L107.4 672.1L107.6 672.9L108.1 673.9L108.4 674.7L109.0 675.7L109.3 676.6L109.9 677.6L110.4 678.2L110.8 679.2L111.1 680.0L111.4 680.6L111.9 681.0L112.4 681.2L112.8 681.0L113.1 680.4L113.9 680.1L114.4 680.0L114.0 679.8L114.4 679.1L115.0 679.0L115.0 678.2L114.9 677.5L115.4 676.7L115.5 676.1L115.3 675.4L115.2 674.6L115.5 674.0L116.2 673.8L116.6 673.4L117.7 673.1L117.7 672.7L118.8 672.0L119.7 671.5L120.6 670.5L121.4 670.1L122.2 669.8L122.8 669.4L123.0 668.9L123.1 668.4L123.9 668.2L124.4 668.1L124.8 668.3L125.4 668.2L125.2 667.6L125.1 666.8L124.8 666.0L124.2 665.5L124.5 665.0L125.1 664.8L124.6 664.3L124.4 664.0L124.8 663.7L125.5 664.0L126.1 664.2L126.2 664.8L127.0 664.9L128.6 664.9L129.1 665.2L128.7 665.6L128.2 665.9L127.7 666.1L127.7 666.7L128.1 667.0L128.4 666.5L128.9 666.3L129.0 667.1L129.2 667.9L129.9 667.7L130.0 667.0L130.2 666.1L131.0 666.2L131.6 665.1L131.5 664.6L132.2 664.1L132.1 663.5L133.3 662.9L134.3 663.1L134.2 662.5L134.6 662.0L133.8 661.7L133.4 661.0L132.5 661.1L131.5 661.0L130.4 661.5L129.4 662.2L128.3 662.4L128.7 662.9L128.6 663.3L126.9 663.3L126.1 663.4L125.1 663.2L125.0 663.0L125.1 662.7L125.1 662.3L124.8 662.1L124.2 662.3L124.2 662.9L124.3 663.7L123.3 663.7L121.9 663.5L121.0 663.3L120.3 662.9L119.6 662.7L118.8 662.8L118.2 662.5L117.3 662.3L116.6 662.0L115.8 661.5L115.2 661.4L115.6 660.7L116.2 660.1L116.3 660.0L115.4 659.7L114.9 659.4L114.2 659.0L113.7 658.9L113.7 657.8L114.5 657.8L114.6 657.2L115.4 656.5L115.6 655.5L115.5 655.0L114.6 654.7L113.3 654.9L112.8 654.6L111.5 654.0L110.4 653.8L109.1 653.6L108.2 653.7L107.3 653.9L106.8 654.4L107.4 654.9L107.4 655.6L107.8 656.1L108.0 656.7L108.4 657.2L109.0 657.6L109.9 658.1L109.1 658.5L109.0 659.2L108.3 659.9L107.7 660.4L107.2 661.2L106.5 661.5L106.0 662.3L104.7 662.5L103.9 663.1L104.0 663.6L104.1 664.4L104.9 665.1L105.1 665.4L103.9 665.8L102.6 665.7Z"/></clipPath>
<g clip-path="url(#cmc)">
<path d="M92.7 688.9L143.2 688.9L143.2 650.7L92.7 650.7Z" fill="#d8dcf0"/>
<path d="M107.3 658.4L112.9 659.3L116.3 655.5L114.0 652.7L107.3 652.7Z" fill="#f4a050"/>
<path d="M109.5 656.9L112.9 657.4L114.0 654.6L110.7 653.6Z" fill="#e06030"/>
<path d="M115.1 671.7L119.6 667.9L124.1 666.0L124.1 669.8L119.6 672.7Z" fill="#f8d898"/>
<path d="M110.7 675.6L114.0 673.6L115.1 677.5L112.9 680.3L110.7 679.4Z" fill="#f0b060"/>
<path d="M106.2 664.1L110.7 661.2L114.0 663.1L111.8 667.0L107.3 667.9Z" fill="#a8b0dc"/>
<path d="M102.8 668.9L108.4 666.0L109.5 669.8L106.2 670.8Z" fill="#f8e8c0"/>
<path d="M126.4 663.1L133.1 661.2L133.1 666.0L128.6 667.0Z" fill="#f4b870"/>
<path d="M112.9 669.8L117.4 666.0L118.5 669.8L115.1 671.7Z" fill="#fff"/>
<path d="M105.1 665.4L106.7 665.6L107.4 665.6L108.4 666.7L108.7 667.5L108.4 668.3L108.2 669.3L107.7 669.6L107.1 669.6M108.4 666.7L109.4 666.1L109.9 665.2L110.9 665.8L111.7 665.5L111.7 664.8L112.2 664.7L113.1 663.3M113.1 663.3L112.3 663.0L112.1 662.4L111.7 662.5L110.9 662.2L110.4 661.8L109.5 661.0L109.0 661.0L108.3 660.3M109.0 660.8L110.0 660.5L110.9 660.4L111.5 659.9L111.7 659.4L111.0 659.0L110.5 658.4L110.2 658.0M110.2 658.0L111.0 657.4L111.8 657.5L112.8 657.7L113.3 657.9L113.7 657.8M112.4 659.9L112.9 659.3L113.8 659.1M111.7 659.4L112.4 659.9L112.0 660.8L112.0 661.4L112.1 661.8L112.3 662.3L112.1 662.4M112.4 659.9L113.2 660.6L113.9 660.9L114.5 661.3L115.2 661.4M113.1 663.3L114.0 663.5L113.9 664.5L113.3 664.8L113.6 665.5L114.7 665.0L115.6 665.1L116.6 665.0L117.3 665.2L117.7 665.4L118.3 666.0M118.3 666.0L118.8 665.5L119.1 665.1L119.6 664.5L120.3 664.3L119.9 663.7L119.5 663.1L119.6 662.7M118.8 665.5L120.0 665.6L121.5 665.4L122.4 665.5L123.3 665.2L123.9 664.9L124.1 663.7M123.9 664.9L123.6 665.7L122.9 666.2L121.9 666.5L121.9 667.0L122.8 667.6L123.0 668.0L123.6 668.3M122.8 667.6L121.9 667.4L120.9 667.8L120.0 667.5L119.6 667.4M119.6 667.4L119.2 666.8L118.8 666.1L118.3 666.0M118.3 666.0L117.1 666.2L116.9 667.1L116.2 667.6L115.7 668.4L115.6 668.6M108.4 668.3L109.8 668.5L110.9 668.7L111.5 668.3L113.1 668.4L114.6 668.3L115.6 668.6M115.6 668.6L115.8 669.5L115.7 670.4L115.5 671.0L115.0 670.4L114.0 670.2L113.2 670.3L112.7 671.2L112.3 671.5M112.3 671.5L111.7 672.0L111.0 672.4L110.2 672.7L109.5 672.8L108.7 673.2L108.7 673.8L108.1 673.9M108.7 673.8L108.6 674.6L108.5 674.7M112.3 671.5L112.3 672.4L112.2 673.3L111.8 673.8L111.9 674.6L111.5 674.7L112.2 675.4L113.1 675.9L113.2 676.8M113.2 676.8L112.6 676.9L112.1 677.7L111.1 677.8L110.3 677.3L109.4 676.7M111.1 677.8L111.5 678.8L112.0 679.2L112.0 679.9L112.0 680.7L111.9 681.0M113.2 676.8L114.4 676.3L115.1 676.0L115.5 676.0M112.2 673.3L113.2 673.6L114.4 673.2L115.1 672.8L115.6 672.7L116.3 671.9L116.0 671.5L115.5 671.0M119.6 667.4L119.1 668.3L119.0 668.6L118.1 669.4L117.8 669.9L117.4 670.8L117.3 671.2L116.7 671.8L116.3 671.9M116.7 671.8L117.8 671.4L118.6 671.0L119.6 670.8L120.5 670.7M128.6 663.3L129.7 663.1L131.1 662.6L132.5 662.3L133.1 662.8M126.2 664.2L127.5 664.2L128.8 664.2L129.5 664.6L129.1 665.2M130.1 664.3L130.9 663.6L132.2 663.1M129.7 665.3L130.2 664.5L131.5 664.6M128.9 665.8L129.7 665.6L130.2 666.1M128.9 665.8L128.9 666.3M126.1 663.4L126.2 664.2M124.3 663.1L125.0 663.0M108.4 657.2L108.6 656.5L108.4 655.8L110.1 655.9L111.5 655.6L112.7 655.0M113.3 657.9L113.9 657.1L113.8 656.3L113.2 655.9L112.7 655.0M111.7 661.4L112.1 661.4L112.1 661.8L111.7 661.7L111.7 661.4" fill="none" stroke="#333" stroke-width=".3"/>
</g>
<path d="M101.9 666.4L102.3 666.8L103.1 667.2L104.4 667.0L104.1 667.4L103.0 667.6L102.8 667.7L103.5 668.4L104.4 669.0L105.0 669.2L106.2 668.8L106.5 668.2L106.7 667.7L106.9 668.3L106.9 668.8L107.1 669.4L107.0 670.6L107.2 671.3L107.4 672.1L107.6 672.9L108.1 673.9L108.4 674.7L109.0 675.7L109.3 676.6L109.9 677.6L110.4 678.2L110.8 679.2L111.1 680.0L111.4 680.6L111.9 681.0L112.4 681.2L112.8 681.0L113.1 680.4L113.9 680.1L114.4 680.0L114.0 679.8L114.4 679.1L115.0 679.0L115.0 678.2L114.9 677.5L115.4 676.7L115.5 676.1L115.3 675.4L115.2 674.6L115.5 674.0L116.2 673.8L116.6 673.4L117.7 673.1L117.7 672.7L118.8 672.0L119.7 671.5L120.6 670.5L121.4 670.1L122.2 669.8L122.8 669.4L123.0 668.9L123.1 668.4L123.9 668.2L124.4 668.1L124.8 668.3L125.4 668.2L125.2 667.6L125.1 666.8L124.8 666.0L124.2 665.5L124.5 665.0L125.1 664.8L124.6 664.3L124.4 664.0L124.8 663.7L125.5 664.0L126.1 664.2L126.2 664.8L127.0 664.9L128.6 664.9L129.1 665.2L128.7 665.6L128.2 665.9L127.7 666.1L127.7 666.7L128.1 667.0L128.4 666.5L128.9 666.3L129.0 667.1L129.2 667.9L129.9 667.7L130.0 667.0L130.2 666.1L131.0 666.2L131.6 665.1L131.5 664.6L132.2 664.1L132.1 663.5L133.3 662.9L134.3 663.1L134.2 662.5L134.6 662.0L133.8 661.7L133.4 661.0L132.5 661.1L131.5 661.0L130.4 661.5L129.4 662.2L128.3 662.4L128.7 662.9L128.6 663.3L126.9 663.3L126.1 663.4L125.1 663.2L125.0 663.0L125.1 662.7L125.1 662.3L124.8 662.1L124.2 662.3L124.2 662.9L124.3 663.7L123.3 663.7L121.9 663.5L121.0 663.3L120.3 662.9L119.6 662.7L118.8 662.8L118.2 662.5L117.3 662.3L116.6 662.0L115.8 661.5L115.2 661.4L115.6 660.7L116.2 660.1L116.3 660.0L115.4 659.7L114.9 659.4L114.2 659.0L113.7 658.9L113.7 657.8L114.5 657.8L114.6 657.2L115.4 656.5L115.6 655.5L115.5 655.0L114.6 654.7L113.3 654.9L112.8 654.6L111.5 654.0L110.4 653.8L109.1 653.6L108.2 653.7L107.3 653.9L106.8 654.4L107.4 654.9L107.4 655.6L107.8 656.1L108.0 656.7L108.4 657.2L109.0 657.6L109.9 658.1L109.1 658.5L109.0 659.2L108.3 659.9L107.7 660.4L107.2 661.2L106.5 661.5L106.0 662.3L104.7 662.5L103.9 663.1L104.0 663.6L104.1 664.4L104.9 665.1L105.1 665.4L103.9 665.8L102.6 665.7ZM129.0 669.2L129.7 669.9L130.5 670.8L131.2 671.7L131.4 672.7L131.2 673.6L132.3 673.9L133.1 673.3L134.0 672.7L134.5 673.0L135.0 673.6L135.1 674.6L135.5 675.6L136.0 677.0L136.0 678.4L136.0 679.4L135.7 680.3L135.7 681.3L136.1 681.1L136.6 681.9L137.3 682.4L137.6 682.7M125.4 668.2L126.4 668.0L127.0 667.5L127.7 667.4L128.4 667.6L128.6 668.5L129.0 669.2M98.3 660.7L99.8 660.4L99.8 659.3L101.4 659.0L103.1 658.5L103.4 657.4L103.9 657.1L104.3 656.6L105.1 656.5L105.7 655.5L105.3 654.6L105.8 654.1L106.7 653.8L108.2 653.7M98.3 664.8L100.0 664.7L100.5 665.2L101.1 666.1L101.9 666.4M116.3 660.0L116.8 659.9L117.5 660.0L118.5 660.7L119.5 661.0L119.9 661.3L120.9 661.6L121.5 661.9L121.9 662.2L122.9 662.2L123.8 662.3L124.2 662.3M134.6 662.0L135.5 662.6L136.1 662.7L136.1 664.1L134.9 665.2L135.0 666.0L136.3 665.9L136.5 666.8L137.0 667.3L137.6 668.2M136.0 679.2L136.5 678.4L137.0 677.7L136.6 676.5L135.6 674.6L136.0 673.6L135.1 672.2L135.0 671.3L136.4 670.0L137.6 669.4M115.0 679.6L115.5 679.8L116.5 680.8L117.2 681.8L117.1 682.6L116.3 683.1L115.4 683.2L115.0 682.4L114.9 681.4L115.0 680.4L115.2 680.0Z" fill="none" stroke="#222" stroke-width=".4"/>
<rect x="98.3" y="652.7" width="39.3" height="32.3" fill="none" stroke="#222" stroke-width=".6"/>
<path d="M97.3 683.5h-2.2M97.3 679.0h-2.2M97.3 674.5h-2.2M97.3 670.0h-2.2M97.3 665.5h-2.2M97.3 661.0h-2.2M97.3 656.5h-2.2M101.3 686.8h3.2M108.5 686.8h3.2M115.8 686.8h3.2M123.0 686.8h3.2M130.3 686.8h3.2" stroke="#333" stroke-width=".8"/>
<clipPath id="cmd"><path d="M149.5 666.4L150.0 666.8L150.7 667.2L151.9 667.0L151.7 667.4L150.6 667.6L150.4 667.7L151.1 668.4L151.9 669.0L152.6 669.2L153.7 668.8L154.0 668.2L154.2 667.7L154.5 668.3L154.5 668.8L154.6 669.4L154.5 670.6L154.7 671.3L154.9 672.1L155.1 672.9L155.6 673.9L155.9 674.7L156.4 675.7L156.8 676.6L157.3 677.6L157.9 678.2L158.2 679.2L158.5 680.0L158.9 680.6L159.3 681.0L159.8 681.2L160.2 681.0L160.5 680.4L161.3 680.1L161.7 680.0L161.3 679.8L161.7 679.1L162.3 679.0L162.3 678.2L162.3 677.5L162.7 676.7L162.8 676.1L162.6 675.4L162.6 674.6L162.8 674.0L163.5 673.8L163.9 673.4L165.0 673.1L165.0 672.7L166.1 672.0L167.0 671.5L167.9 670.5L168.7 670.1L169.4 669.8L170.0 669.4L170.2 668.9L170.3 668.4L171.1 668.2L171.5 668.1L172.0 668.3L172.5 668.2L172.4 667.6L172.2 666.8L172.0 666.0L171.4 665.5L171.6 665.0L172.3 664.8L171.7 664.3L171.5 664.0L172.0 663.7L172.6 664.0L173.3 664.2L173.3 664.8L174.2 664.9L175.7 664.9L176.2 665.2L175.8 665.6L175.3 665.9L174.8 666.1L174.8 666.7L175.2 667.0L175.5 666.5L176.0 666.3L176.0 667.1L176.3 667.9L176.9 667.7L177.0 667.0L177.2 666.1L178.1 666.2L178.7 665.1L178.6 664.6L179.2 664.1L179.1 663.5L180.3 662.9L181.3 663.1L181.1 662.5L181.6 662.0L180.8 661.7L180.4 661.0L179.6 661.1L178.6 661.0L177.5 661.5L176.5 662.2L175.4 662.4L175.8 662.9L175.7 663.3L174.1 663.3L173.3 663.4L172.3 663.2L172.1 663.0L172.2 662.7L172.3 662.3L172.0 662.1L171.4 662.3L171.4 662.9L171.5 663.7L170.5 663.7L169.1 663.5L168.2 663.3L167.6 662.9L166.9 662.7L166.1 662.8L165.5 662.5L164.6 662.3L163.9 662.0L163.2 661.5L162.6 661.4L162.9 660.7L163.5 660.1L163.6 660.0L162.7 659.7L162.3 659.4L161.6 659.0L161.1 658.9L161.1 657.8L161.8 657.8L161.9 657.2L162.7 656.5L162.9 655.5L162.8 655.0L161.9 654.7L160.7 654.9L160.2 654.6L159.0 654.0L157.9 653.8L156.6 653.6L155.7 653.7L154.8 653.9L154.4 654.4L154.9 654.9L154.9 655.6L155.3 656.1L155.5 656.7L155.9 657.2L156.4 657.6L157.3 658.1L156.6 658.5L156.4 659.2L155.8 659.9L155.2 660.4L154.7 661.2L154.0 661.5L153.6 662.3L152.3 662.5L151.5 663.1L151.6 663.6L151.7 664.4L152.5 665.1L152.7 665.4L151.5 665.8L150.2 665.7Z"/></clipPath>
<g clip-path="url(#cmd)">
<path d="M140.5 688.9L190.0 688.9L190.0 650.7L140.5 650.7Z" fill="#d8dcf0"/>
<path d="M154.8 658.4L160.3 659.3L163.6 655.5L161.4 652.7L154.8 652.7Z" fill="#f4a050"/>
<path d="M157.0 656.9L160.3 657.4L161.4 654.6L158.1 653.6Z" fill="#e06030"/>
<path d="M162.5 671.7L166.9 667.9L171.3 666.0L171.3 669.8L166.9 672.7Z" fill="#f8d898"/>
<path d="M158.1 675.6L161.4 673.6L162.5 677.5L160.3 680.3L158.1 679.4Z" fill="#f0b060"/>
<path d="M153.7 664.1L158.1 661.2L161.4 663.1L159.2 667.0L154.8 667.9Z" fill="#a8b0dc"/>
<path d="M150.4 668.9L155.9 666.0L157.0 669.8L153.7 670.8Z" fill="#f8e8c0"/>
<path d="M173.5 663.1L180.1 661.2L180.1 666.0L175.7 667.0Z" fill="#f4b870"/>
<path d="M160.3 669.8L164.7 666.0L165.8 669.8L162.5 671.7Z" fill="#fff"/>
<path d="M152.7 665.4L154.2 665.6L154.9 665.6L155.9 666.7L156.2 667.5L155.9 668.3L155.7 669.3L155.2 669.6L154.6 669.6M155.9 666.7L156.9 666.1L157.3 665.2L158.3 665.8L159.1 665.5L159.1 664.8L159.6 664.7L160.5 663.3M160.5 663.3L159.8 663.0L159.5 662.4L159.1 662.5L158.3 662.2L157.9 661.8L157.0 661.0L156.4 661.0L155.8 660.3M156.4 660.8L157.4 660.5L158.3 660.4L159.0 659.9L159.1 659.4L158.4 659.0L158.0 658.4L157.7 658.0M157.7 658.0L158.4 657.4L159.2 657.5L160.2 657.7L160.7 657.9L161.1 657.8M159.9 659.9L160.3 659.3L161.2 659.1M159.1 659.4L159.9 659.9L159.4 660.8L159.4 661.4L159.5 661.8L159.8 662.3L159.5 662.4M159.9 659.9L160.6 660.6L161.3 660.9L161.8 661.3L162.6 661.4M160.5 663.3L161.4 663.5L161.3 664.5L160.7 664.8L161.0 665.5L162.1 665.0L162.9 665.1L163.9 665.0L164.6 665.2L165.0 665.4L165.6 666.0M165.6 666.0L166.1 665.5L166.3 665.1L166.9 664.5L167.6 664.3L167.1 663.7L166.8 663.1L166.9 662.7M166.1 665.5L167.2 665.6L168.8 665.4L169.7 665.5L170.5 665.2L171.1 664.9L171.3 663.7M171.1 664.9L170.8 665.7L170.1 666.2L169.1 666.5L169.1 667.0L170.0 667.6L170.2 668.0L170.8 668.3M170.0 667.6L169.1 667.4L168.1 667.8L167.2 667.5L166.9 667.4M166.9 667.4L166.5 666.8L166.1 666.1L165.6 666.0M165.6 666.0L164.4 666.2L164.3 667.1L163.5 667.6L163.1 668.4L162.9 668.6M155.9 668.3L157.2 668.5L158.3 668.7L159.0 668.3L160.5 668.4L161.9 668.3L162.9 668.6M162.9 668.6L163.2 669.5L163.1 670.4L162.8 671.0L162.4 670.4L161.4 670.2L160.6 670.3L160.1 671.2L159.8 671.5M159.8 671.5L159.1 672.0L158.4 672.4L157.7 672.7L157.0 672.8L156.2 673.2L156.2 673.8L155.6 673.9M156.2 673.8L156.1 674.6L156.0 674.7M159.8 671.5L159.8 672.4L159.6 673.3L159.2 673.8L159.3 674.6L159.0 674.7L159.6 675.4L160.5 675.9L160.6 676.8M160.6 676.8L160.0 676.9L159.5 677.7L158.5 677.8L157.8 677.3L156.9 676.7M158.5 677.8L159.0 678.8L159.4 679.2L159.4 679.9L159.4 680.7L159.3 681.0M160.6 676.8L161.7 676.3L162.5 676.0L162.8 676.0M159.6 673.3L160.6 673.6L161.7 673.2L162.5 672.8L162.9 672.7L163.6 671.9L163.4 671.5L162.8 671.0M166.9 667.4L166.3 668.3L166.2 668.6L165.4 669.4L165.1 669.9L164.7 670.8L164.6 671.2L164.0 671.8L163.6 671.9M164.0 671.8L165.1 671.4L165.9 671.0L166.9 670.8L167.8 670.7M175.7 663.3L176.8 663.1L178.1 662.6L179.6 662.3L180.1 662.8M173.3 664.2L174.6 664.2L175.9 664.2L176.6 664.6L176.2 665.2M177.1 664.3L177.9 663.6L179.2 663.1M176.8 665.3L177.2 664.5L178.6 664.6M176.0 665.8L176.8 665.6L177.2 666.1M176.0 665.8L176.0 666.3M173.3 663.4L173.3 664.2M171.5 663.1L172.1 663.0M155.9 657.2L156.1 656.5L155.9 655.8L157.6 655.9L159.0 655.6L160.1 655.0M160.7 657.9L161.3 657.1L161.2 656.3L160.6 655.9L160.1 655.0M159.1 661.4L159.5 661.4L159.5 661.8L159.1 661.7L159.1 661.4" fill="none" stroke="#333" stroke-width=".3"/>
</g>
<path d="M149.5 666.4L150.0 666.8L150.7 667.2L151.9 667.0L151.7 667.4L150.6 667.6L150.4 667.7L151.1 668.4L151.9 669.0L152.6 669.2L153.7 668.8L154.0 668.2L154.2 667.7L154.5 668.3L154.5 668.8L154.6 669.4L154.5 670.6L154.7 671.3L154.9 672.1L155.1 672.9L155.6 673.9L155.9 674.7L156.4 675.7L156.8 676.6L157.3 677.6L157.9 678.2L158.2 679.2L158.5 680.0L158.9 680.6L159.3 681.0L159.8 681.2L160.2 681.0L160.5 680.4L161.3 680.1L161.7 680.0L161.3 679.8L161.7 679.1L162.3 679.0L162.3 678.2L162.3 677.5L162.7 676.7L162.8 676.1L162.6 675.4L162.6 674.6L162.8 674.0L163.5 673.8L163.9 673.4L165.0 673.1L165.0 672.7L166.1 672.0L167.0 671.5L167.9 670.5L168.7 670.1L169.4 669.8L170.0 669.4L170.2 668.9L170.3 668.4L171.1 668.2L171.5 668.1L172.0 668.3L172.5 668.2L172.4 667.6L172.2 666.8L172.0 666.0L171.4 665.5L171.6 665.0L172.3 664.8L171.7 664.3L171.5 664.0L172.0 663.7L172.6 664.0L173.3 664.2L173.3 664.8L174.2 664.9L175.7 664.9L176.2 665.2L175.8 665.6L175.3 665.9L174.8 666.1L174.8 666.7L175.2 667.0L175.5 666.5L176.0 666.3L176.0 667.1L176.3 667.9L176.9 667.7L177.0 667.0L177.2 666.1L178.1 666.2L178.7 665.1L178.6 664.6L179.2 664.1L179.1 663.5L180.3 662.9L181.3 663.1L181.1 662.5L181.6 662.0L180.8 661.7L180.4 661.0L179.6 661.1L178.6 661.0L177.5 661.5L176.5 662.2L175.4 662.4L175.8 662.9L175.7 663.3L174.1 663.3L173.3 663.4L172.3 663.2L172.1 663.0L172.2 662.7L172.3 662.3L172.0 662.1L171.4 662.3L171.4 662.9L171.5 663.7L170.5 663.7L169.1 663.5L168.2 663.3L167.6 662.9L166.9 662.7L166.1 662.8L165.5 662.5L164.6 662.3L163.9 662.0L163.2 661.5L162.6 661.4L162.9 660.7L163.5 660.1L163.6 660.0L162.7 659.7L162.3 659.4L161.6 659.0L161.1 658.9L161.1 657.8L161.8 657.8L161.9 657.2L162.7 656.5L162.9 655.5L162.8 655.0L161.9 654.7L160.7 654.9L160.2 654.6L159.0 654.0L157.9 653.8L156.6 653.6L155.7 653.7L154.8 653.9L154.4 654.4L154.9 654.9L154.9 655.6L155.3 656.1L155.5 656.7L155.9 657.2L156.4 657.6L157.3 658.1L156.6 658.5L156.4 659.2L155.8 659.9L155.2 660.4L154.7 661.2L154.0 661.5L153.6 662.3L152.3 662.5L151.5 663.1L151.6 663.6L151.7 664.4L152.5 665.1L152.7 665.4L151.5 665.8L150.2 665.7ZM176.0 669.2L176.8 669.9L177.6 670.8L178.2 671.7L178.4 672.7L178.2 673.6L179.3 673.9L180.1 673.3L181.0 672.7L181.4 673.0L182.0 673.6L182.1 674.6L182.4 675.6L183.0 677.0L183.0 678.4L183.0 679.4L182.6 680.3L182.6 681.3L183.1 681.1L183.5 681.9L184.2 682.4L184.5 682.7M172.5 668.2L173.5 668.0L174.2 667.5L174.8 667.4L175.5 667.6L175.7 668.5L176.0 669.2M146.0 660.7L147.4 660.4L147.4 659.3L149.1 659.0L150.7 658.5L150.9 657.4L151.5 657.1L151.8 656.6L152.7 656.5L153.3 655.5L152.8 654.6L153.4 654.1L154.2 653.8L155.7 653.7M146.0 664.8L147.7 664.7L148.2 665.2L148.8 666.1L149.5 666.4M163.6 660.0L164.2 659.9L164.8 660.0L165.8 660.7L166.8 661.0L167.1 661.3L168.1 661.6L168.8 661.9L169.1 662.2L170.1 662.2L171.0 662.3L171.4 662.3M181.6 662.0L182.4 662.6L183.1 662.7L183.1 664.1L181.9 665.2L182.0 666.0L183.2 665.9L183.4 666.8L183.9 667.3L184.5 668.2M183.0 679.2L183.4 678.4L183.9 677.7L183.5 676.5L182.5 674.6L183.0 673.6L182.1 672.2L182.0 671.3L183.3 670.0L184.5 669.4M162.4 679.6L162.8 679.8L163.8 680.8L164.5 681.8L164.4 682.6L163.6 683.1L162.7 683.2L162.3 682.4L162.3 681.4L162.4 680.4L162.6 680.0Z" fill="none" stroke="#222" stroke-width=".4"/>
<rect x="146.0" y="652.7" width="38.5" height="32.3" fill="none" stroke="#222" stroke-width=".6"/>
<path d="M145.0 683.5h-2.2M145.0 679.0h-2.2M145.0 674.5h-2.2M145.0 670.0h-2.2M145.0 665.5h-2.2M145.0 661.0h-2.2M145.0 656.5h-2.2M149.0 686.8h3.2M156.1 686.8h3.2M163.1 686.8h3.2M170.2 686.8h3.2M177.3 686.8h3.2" stroke="#333" stroke-width=".8"/>
<defs><linearGradient id="lg1"><stop offset="0" stop-color="#f8f0c0"/><stop offset=".35" stop-color="#f0b040"/><stop offset=".7" stop-color="#d85020"/><stop offset="1" stop-color="#801810"/></linearGradient>
<linearGradient id="lg2"><stop offset="0" stop-color="#1a1a60"/><stop offset=".3" stop-color="#8890d0"/><stop offset=".5" stop-color="#f0f0f0"/><stop offset=".7" stop-color="#f0a040"/><stop offset="1" stop-color="#a01810"/></linearGradient></defs>
<rect x="105.3" y="641.6" width="58.6" height="2" fill="url(#lg1)"/><rect x="107.3" y="693" width="60.7" height="2" fill="url(#lg2)"/>
<path d="M109 696.3h55" stroke="#889" stroke-width=".6" stroke-dasharray="1.5 2"/>
<path d="M168 598h9" stroke="#222" stroke-width=".9"/>
<path d="M104.3 604.9h66.7M105 646.6h76" stroke="#e87070" stroke-width="1.1" stroke-dasharray="5 1 8 1.2 11 1.2 9 1.2 6 1.4"/>
<path d="M101 608.3h29M139 608.3h30M101 650h34M148 650h36M101 639.8h28M139 639.8h28" stroke="#8080e0" stroke-width=".8" stroke-dasharray="7 1 6 1.2"/>
<rect x="171.1" y="604" width=".5" height="36" fill="#555"/>
<rect x="92.2" y="712" width="85.4" height=".6" fill="#666"/><path d="M167 714.6h10" stroke="#777" stroke-width=".8"/>
</g>
</svg>
 <div class="lbl" style="top:120.5px">9</div>
 <div class="lbl" style="top:309.5px">10</div>
 <div class="lbl" style="top:498.5px">11</div>
 <div class="lbl" style="top:687.5px">12</div>
</div>
<div id="sb"></div><div id="sbthumb"></div>
<div class="arr" style="top:55px;border-bottom:4px solid #505050"></div>
<div class="arr" style="top:738px;border-top:4px solid #505050"></div>
<div id="tb">
 <svg style="position:absolute;left:19px;top:14px" width="16" height="12"><path d="M0 0h16v2H0zM0 5h16v2H0zM0 10h16v2H0z" fill="#fff"/></svg>
 <div style="position:absolute;left:61px;top:12.5px;font-size:13.5px;font-weight:bold;line-height:16px;letter-spacing:-.15px">extended.pdf</div>
 <div class="inp" style="left:567px;width:24px">11</div>
 <div style="position:absolute;left:595px;top:10px;font-size:13px;line-height:20px;-webkit-text-stroke:.3px #fff;word-spacing:1.5px">/ 12</div>
 <div class="sep" style="left:640px"></div>
 <div style="position:absolute;left:657px;top:19px;width:12px;height:2px;background:#fff"></div>
 <div class="inp" style="left:685px;width:45px;letter-spacing:-.4px">91%</div>
 <div style="position:absolute;left:746px;top:19px;width:12px;height:2px;background:#fff"></div>
 <div style="position:absolute;left:751px;top:14px;width:2px;height:12px;background:#fff"></div>
 <div class="sep" style="left:774px"></div>
 <svg style="position:absolute;left:795px;top:10px" width="20" height="20" viewBox="0 0 20 20"><rect x="1.9" y="3.5" width="16.3" height="12.8" rx="1.6" fill="none" stroke="#fff" stroke-width="1.8"/><path d="M10 5.1l2.5 2.7H7.5zM10 15l2.5-2.7H7.5z" fill="#fff"/></svg>
 <svg style="position:absolute;left:831px;top:10px" width="20" height="20" viewBox="0 0 24 24"><path fill="#fff" d="M7.34 6.41L.86 12.9l6.49 6.48 6.49-6.48-6.5-6.49zM3.69 12.9l3.66-3.66L11 12.9l-3.66 3.66-3.65-3.66zm15.67-6.26C17.61 4.88 15.3 4 13 4V.76L8.76 5 13 9.24V6c1.79 0 3.58.68 4.95 2.05 2.73 2.73 2.73 7.17 0 9.9C16.58 19.32 14.79 20 13 20c-.97 0-1.94-.21-2.84-.61l-1.49 1.49C10.02 21.62 11.51 22 13 22c2.3 0 4.61-.88 6.36-2.64 3.52-3.51 3.52-9.21 0-12.72z"/></svg>
</div>
<div id="bot"><div style="position:absolute;left:335px;top:0;width:43px;height:4px;background:#3b4a52"></div><div style="position:absolute;left:381px;top:0;width:2px;height:4px;background:#4a5860"></div></div>
</body></html>
